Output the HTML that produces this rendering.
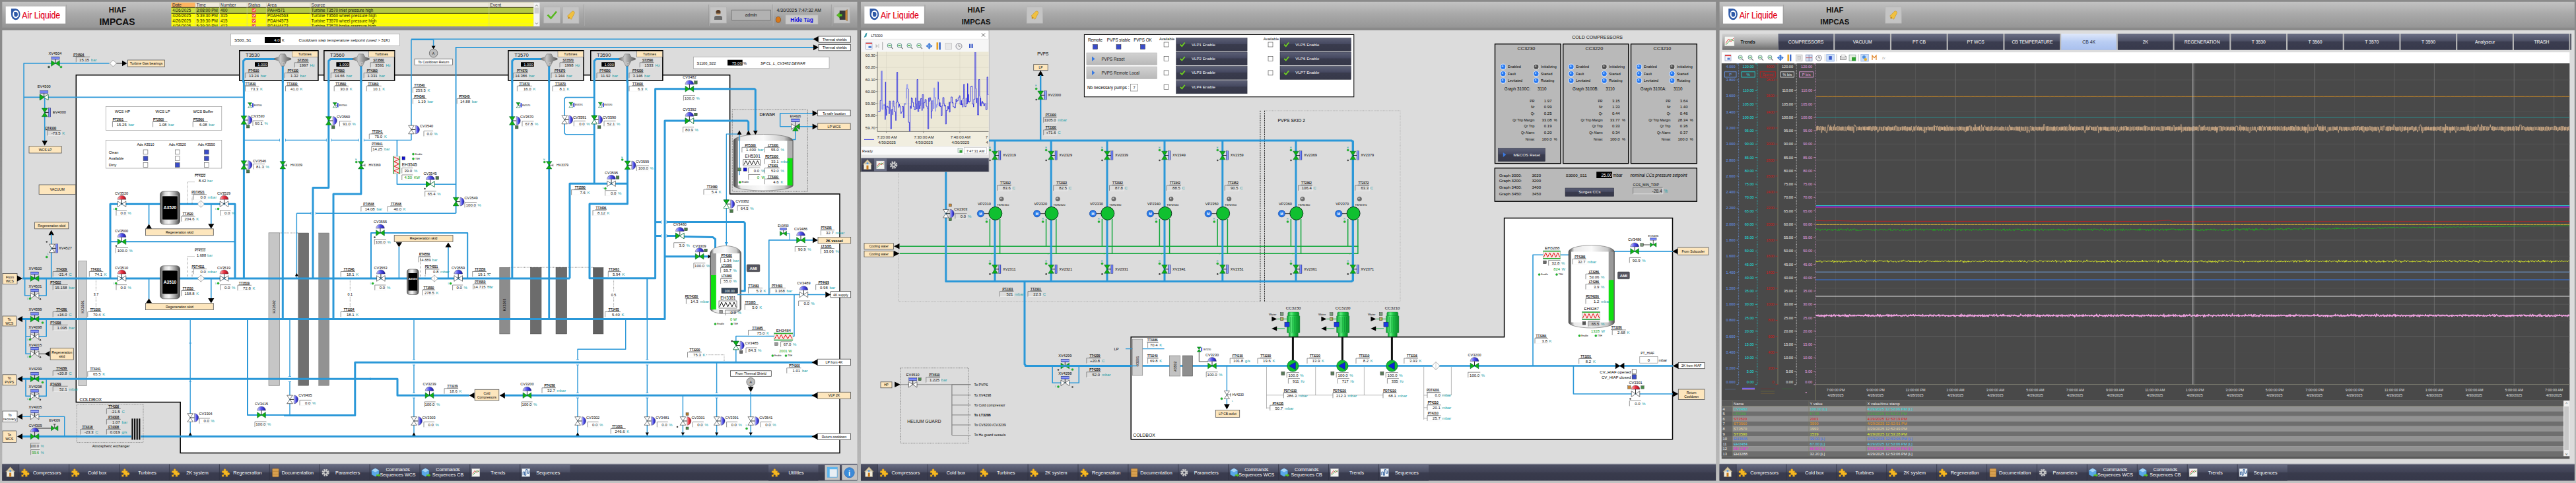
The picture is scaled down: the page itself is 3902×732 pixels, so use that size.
<!DOCTYPE html>
<html><head><meta charset="utf-8"><title>HIAF IMPCAS</title>
<style>html,body{margin:0;padding:0;background:#868686;}svg{display:block;}text{font-family:"Liberation Sans",sans-serif;}</style></head>
<body>
<svg width="3902" height="732" viewBox="0 0 3902 732">
<defs><linearGradient id="hdr" x1="0" y1="0" x2="0" y2="1"><stop offset="0" stop-color="#c3c3c3"/><stop offset="0.45" stop-color="#a9a9a9"/><stop offset="0.92" stop-color="#979797"/><stop offset="1" stop-color="#8c8c8c"/></linearGradient><linearGradient id="gbtn" x1="0" y1="0" x2="0" y2="1"><stop offset="0" stop-color="#d2d2d2"/><stop offset="1" stop-color="#b8b8b8"/></linearGradient><linearGradient id="navbg" x1="0" y1="0" x2="0" y2="1"><stop offset="0" stop-color="#4e5165"/><stop offset="0.5" stop-color="#3f4154"/><stop offset="0.52" stop-color="#393b4c"/><stop offset="1" stop-color="#36384a"/></linearGradient><linearGradient id="navbtn" x1="0" y1="0" x2="0" y2="1"><stop offset="0" stop-color="#6a6e84"/><stop offset="0.48" stop-color="#4a4d62"/><stop offset="0.52" stop-color="#3a3c4f"/><stop offset="1" stop-color="#37394b"/></linearGradient><linearGradient id="framebg" x1="0" y1="0" x2="0" y2="1"><stop offset="0" stop-color="#8a8a8a"/><stop offset="0.3" stop-color="#8a8a8a"/><stop offset="0.45" stop-color="#969696"/><stop offset="0.82" stop-color="#adadad"/><stop offset="0.96" stop-color="#b6b6b6"/><stop offset="1" stop-color="#c2c2c2"/></linearGradient><linearGradient id="metal" x1="0" y1="0" x2="1" y2="0"><stop offset="0" stop-color="#555"/><stop offset="0.25" stop-color="#d8d8d8"/><stop offset="0.45" stop-color="#f4f4f4"/><stop offset="0.75" stop-color="#a0a0a0"/><stop offset="1" stop-color="#444"/></linearGradient><linearGradient id="domeb" x1="0" y1="0" x2="1" y2="0"><stop offset="0" stop-color="#c8c8ff"/><stop offset="0.5" stop-color="#5050e8"/><stop offset="1" stop-color="#1818a0"/></linearGradient><linearGradient id="domer" x1="0" y1="0" x2="1" y2="0"><stop offset="0" stop-color="#ffb0b0"/><stop offset="0.5" stop-color="#e83040"/><stop offset="1" stop-color="#a01020"/></linearGradient><linearGradient id="act" x1="0" y1="0" x2="0" y2="1"><stop offset="0" stop-color="#2038d8"/><stop offset="0.5" stop-color="#a8b4ff"/><stop offset="1" stop-color="#2038d8"/></linearGradient><linearGradient id="actv" x1="0" y1="0" x2="1" y2="0"><stop offset="0" stop-color="#2038d8"/><stop offset="0.5" stop-color="#a8b4ff"/><stop offset="1" stop-color="#2038d8"/></linearGradient><linearGradient id="metal2" x1="0" y1="0" x2="1" y2="0"><stop offset="0" stop-color="#444"/><stop offset="0.06" stop-color="#888"/><stop offset="0.12" stop-color="#e8e8e8"/><stop offset="0.5" stop-color="#fafafa"/><stop offset="0.85" stop-color="#c8c8c8"/><stop offset="1" stop-color="#555"/></linearGradient><linearGradient id="hx" x1="0" y1="0" x2="1" y2="0"><stop offset="0" stop-color="#6a6a6a"/><stop offset="0.5" stop-color="#7c7c7c"/><stop offset="1" stop-color="#6a6a6a"/></linearGradient><linearGradient id="turb" x1="0" y1="0" x2="1" y2="0"><stop offset="0" stop-color="#6a6a6a"/><stop offset="0.35" stop-color="#c8c8c8"/><stop offset="0.6" stop-color="#9a9a9a"/><stop offset="1" stop-color="#5a5a5a"/></linearGradient><linearGradient id="dbtn" x1="0" y1="0" x2="0" y2="1"><stop offset="0" stop-color="#5c6076"/><stop offset="0.45" stop-color="#454860"/><stop offset="0.5" stop-color="#393b4d"/><stop offset="1" stop-color="#363849"/></linearGradient><linearGradient id="mot" x1="0" y1="0" x2="1" y2="0"><stop offset="0" stop-color="#0a9a30"/><stop offset="0.3" stop-color="#60f080"/><stop offset="0.55" stop-color="#20c848"/><stop offset="1" stop-color="#0a8a2a"/></linearGradient><linearGradient id="tabtr" x1="0" y1="0" x2="0" y2="1"><stop offset="0" stop-color="#d2d2d2"/><stop offset="0.5" stop-color="#a8a8a8"/><stop offset="1" stop-color="#6c6c6c"/></linearGradient><linearGradient id="tabd" x1="0" y1="0" x2="0" y2="1"><stop offset="0" stop-color="#6c7086"/><stop offset="0.45" stop-color="#4c4f64"/><stop offset="0.5" stop-color="#3b3d50"/><stop offset="1" stop-color="#37394b"/></linearGradient><linearGradient id="tabsel" x1="0" y1="0" x2="0" y2="1"><stop offset="0" stop-color="#dfe8fb"/><stop offset="0.5" stop-color="#b9cdf3"/><stop offset="1" stop-color="#a9c0ee"/></linearGradient></defs>
<rect x="0.00" y="0.00" width="3902.00" height="732.00" fill="url(#framebg)"/>
<rect x="3.30" y="2.80" width="1295.20" height="40.80" fill="url(#hdr)"/>
<rect x="3.30" y="43.40" width="1295.20" height="2.40" fill="#868686"/>
<rect x="3.30" y="45.80" width="1295.20" height="657.20" fill="#dcdcdc"/>
<rect x="8.70" y="9.70" width="90.50" height="26.00" fill="#fff"/>
<line x1="100.30" y1="7.00" x2="100.30" y2="39.00" stroke="#9a9a9a" stroke-width="0.7" />
<path d="M16.90,13.00 h6.4 a7.3,8.6 0 0 1 7.3,8.6 a7,8.6 0 0 1 -7,8.6 a6.9,8.2 0 0 1 -6.7,-8.2 z" fill="#2f5aa8" />
<ellipse cx="23.90" cy="21.70" rx="4.7" ry="5.9" fill="#fff"/>
<path d="M21.30,18.00 h2.7 a2.9,3.8 0 0 1 2.9,3.8 a2.9,3.7 0 0 1 -2.9,3.7 a2.8,3.6 0 0 1 -2.7,-3.6 z" fill="#2f5aa8" />
<text x="33.30" y="27.60" font-size="14" fill="#e2001a" textLength="57.8" lengthAdjust="spacingAndGlyphs" stroke="#e2001a" stroke-width="0.22">Air Liquide</text>
<text x="178.00" y="19.20" font-size="11.3" fill="#111" text-anchor="middle" font-weight="bold">HIAF</text>
<text x="177.50" y="38.20" font-size="13.9" fill="#111" text-anchor="middle" font-weight="bold">IMPCAS</text>
<rect x="3.30" y="703.40" width="1295.20" height="25.10" fill="url(#navbg)"/>
<rect x="3.30" y="702.70" width="1295.20" height="1.00" fill="#9a9ca8"/>
<rect x="3.30" y="703.40" width="25.20" height="25.10" fill="url(#navbg)"/>
<polygon points="8.60,715.00 15.60,707.50 22.60,715.00" fill="#d8c8a0" stroke="#8a7a5a" stroke-width="0.5" />
<rect x="10.10" y="714.00" width="11.00" height="8.50" fill="#f0ead8" stroke="#a09880" stroke-width="0.5"/>
<rect x="14.10" y="716.50" width="3.00" height="6.00" fill="#c87818"/>
<circle cx="15.60" cy="713.40" r="1.50" fill="#5a9ae0" />
<rect x="29.00" y="703.40" width="75.40" height="25.10" fill="url(#navbtn)"/>
<line x1="28.75" y1="703.40" x2="28.75" y2="728.50" stroke="#2e3040" stroke-width="0.6" />
<path d="M32.70,713.70 h3 a1.8,1.8 0 1 1 2.6,0 h3 v3 a1.8,1.8 0 1 1 0,2.6 v3 h-3.2 a1.7,1.7 0 1 0 -2.4,0 h-3 v-3 a1.7,1.7 0 1 0 0,-2.6 z" fill="#f6b822" stroke="#c88a10" stroke-width="0.4" />
<text x="71.30" y="718.60" font-size="7.2" fill="#fff" text-anchor="middle">Compressors</text>
<rect x="104.90" y="703.40" width="75.40" height="25.10" fill="url(#navbtn)"/>
<line x1="104.65" y1="703.40" x2="104.65" y2="728.50" stroke="#2e3040" stroke-width="0.6" />
<path d="M108.60,713.70 h3 a1.8,1.8 0 1 1 2.6,0 h3 v3 a1.8,1.8 0 1 1 0,2.6 v3 h-3.2 a1.7,1.7 0 1 0 -2.4,0 h-3 v-3 a1.7,1.7 0 1 0 0,-2.6 z" fill="#f6b822" stroke="#c88a10" stroke-width="0.4" />
<text x="147.20" y="718.60" font-size="7.2" fill="#fff" text-anchor="middle">Cold box</text>
<rect x="180.80" y="703.40" width="75.40" height="25.10" fill="url(#navbtn)"/>
<line x1="180.55" y1="703.40" x2="180.55" y2="728.50" stroke="#2e3040" stroke-width="0.6" />
<path d="M184.50,713.70 h3 a1.8,1.8 0 1 1 2.6,0 h3 v3 a1.8,1.8 0 1 1 0,2.6 v3 h-3.2 a1.7,1.7 0 1 0 -2.4,0 h-3 v-3 a1.7,1.7 0 1 0 0,-2.6 z" fill="#f6b822" stroke="#c88a10" stroke-width="0.4" />
<text x="223.10" y="718.60" font-size="7.2" fill="#fff" text-anchor="middle">Turbines</text>
<rect x="256.70" y="703.40" width="75.40" height="25.10" fill="url(#navbtn)"/>
<line x1="256.45" y1="703.40" x2="256.45" y2="728.50" stroke="#2e3040" stroke-width="0.6" />
<path d="M260.40,713.70 h3 a1.8,1.8 0 1 1 2.6,0 h3 v3 a1.8,1.8 0 1 1 0,2.6 v3 h-3.2 a1.7,1.7 0 1 0 -2.4,0 h-3 v-3 a1.7,1.7 0 1 0 0,-2.6 z" fill="#f6b822" stroke="#c88a10" stroke-width="0.4" />
<text x="299.00" y="718.60" font-size="7.2" fill="#fff" text-anchor="middle">2K system</text>
<rect x="332.60" y="703.40" width="75.40" height="25.10" fill="url(#navbtn)"/>
<line x1="332.35" y1="703.40" x2="332.35" y2="728.50" stroke="#2e3040" stroke-width="0.6" />
<path d="M336.30,713.70 h3 a1.8,1.8 0 1 1 2.6,0 h3 v3 a1.8,1.8 0 1 1 0,2.6 v3 h-3.2 a1.7,1.7 0 1 0 -2.4,0 h-3 v-3 a1.7,1.7 0 1 0 0,-2.6 z" fill="#f6b822" stroke="#c88a10" stroke-width="0.4" />
<text x="374.90" y="718.60" font-size="7.2" fill="#fff" text-anchor="middle">Regeneration</text>
<rect x="408.50" y="703.40" width="75.40" height="25.10" fill="url(#navbtn)"/>
<line x1="408.25" y1="703.40" x2="408.25" y2="728.50" stroke="#2e3040" stroke-width="0.6" />
<rect x="412.70" y="710.20" width="9.50" height="12.50" fill="#d8a050" stroke="#a87028" stroke-width="0.5" rx="1"/>
<line x1="412.70" y1="714.40" x2="422.20" y2="714.40" stroke="#a87028" stroke-width="0.5" />
<line x1="412.70" y1="718.60" x2="422.20" y2="718.60" stroke="#a87028" stroke-width="0.5" />
<text x="450.80" y="718.60" font-size="7.2" fill="#fff" text-anchor="middle">Documentation</text>
<rect x="484.40" y="703.40" width="75.40" height="25.10" fill="url(#navbtn)"/>
<line x1="484.15" y1="703.40" x2="484.15" y2="728.50" stroke="#2e3040" stroke-width="0.6" />
<circle cx="493.10" cy="716.20" r="4.00" fill="none" stroke="#c8c8c8" stroke-width="3.2" stroke-dasharray="2.1 1.05"/>
<circle cx="493.10" cy="716.20" r="3.30" fill="#c8c8c8" />
<circle cx="493.10" cy="716.20" r="1.60" fill="#4a4c5e" />
<text x="526.70" y="718.60" font-size="7.2" fill="#fff" text-anchor="middle">Parameters</text>
<rect x="560.30" y="703.40" width="75.40" height="25.10" fill="url(#navbtn)"/>
<line x1="560.05" y1="703.40" x2="560.05" y2="728.50" stroke="#2e3040" stroke-width="0.6" />
<polygon points="563.00,712.70 568.50,709.70 574.00,712.70 574.00,719.20 568.50,722.20 563.00,719.20" fill="#5aa8e8" stroke="#3a80c0" stroke-width="0.4" />
<polygon points="563.00,712.70 568.50,709.70 574.00,712.70 568.50,715.40" fill="#a8d4f4" />
<polygon points="570.00,719.20 573.50,719.20 573.50,717.60 576.50,720.20 573.50,722.80 573.50,721.20 570.00,721.20" fill="#58c020" />
<text x="602.60" y="714.20" font-size="7.1" fill="#fff" text-anchor="middle">Commands</text>
<text x="602.60" y="721.80" font-size="7.1" fill="#fff" text-anchor="middle">Sequences WCS</text>
<rect x="636.20" y="703.40" width="75.40" height="25.10" fill="url(#navbtn)"/>
<line x1="635.95" y1="703.40" x2="635.95" y2="728.50" stroke="#2e3040" stroke-width="0.6" />
<polygon points="638.90,712.70 644.40,709.70 649.90,712.70 649.90,719.20 644.40,722.20 638.90,719.20" fill="#5aa8e8" stroke="#3a80c0" stroke-width="0.4" />
<polygon points="638.90,712.70 644.40,709.70 649.90,712.70 644.40,715.40" fill="#a8d4f4" />
<polygon points="645.90,719.20 649.40,719.20 649.40,717.60 652.40,720.20 649.40,722.80 649.40,721.20 645.90,721.20" fill="#58c020" />
<text x="678.50" y="714.20" font-size="7.1" fill="#fff" text-anchor="middle">Commands</text>
<text x="678.50" y="721.80" font-size="7.1" fill="#fff" text-anchor="middle">Sequences CB</text>
<rect x="712.10" y="703.40" width="75.40" height="25.10" fill="url(#navbtn)"/>
<line x1="711.85" y1="703.40" x2="711.85" y2="728.50" stroke="#2e3040" stroke-width="0.6" />
<rect x="714.80" y="710.20" width="12.00" height="12.00" fill="#f4f4f0" stroke="#b0b0b0" stroke-width="0.4"/>
<polyline points="715.8,718.2 719.3,713.2 722.3,716.2 725.8,712.7" fill="none" stroke="#e04040" stroke-width="0.9" />
<polyline points="715.8,720.2 719.3,716.7 722.3,713.2 725.8,715.2" fill="none" stroke="#40a040" stroke-width="0.9" />
<text x="754.40" y="718.60" font-size="7.2" fill="#fff" text-anchor="middle">Trends</text>
<rect x="788.00" y="703.40" width="75.40" height="25.10" fill="url(#navbtn)"/>
<line x1="787.75" y1="703.40" x2="787.75" y2="728.50" stroke="#2e3040" stroke-width="0.6" />
<rect x="790.70" y="710.20" width="12.00" height="12.00" fill="#f0f4f8" stroke="#9ab" stroke-width="0.4"/>
<polyline points="792.2,720.2 792.2,715.2 794.7,715.2 794.7,720.2 796.7,720.2 796.7,711.7 798.7,711.7 798.7,717.2 801.2,717.2 801.2,713.2" fill="none" stroke="#2a5a98" stroke-width="1.0" />
<text x="830.30" y="718.60" font-size="7.2" fill="#fff" text-anchor="middle">Sequences</text>
<rect x="1164.10" y="703.40" width="75.40" height="25.10" fill="url(#navbtn)"/>
<path d="M1169.10,713.70 h3 a1.8,1.8 0 1 1 2.6,0 h3 v3 a1.8,1.8 0 1 1 0,2.6 v3 h-3.2 a1.7,1.7 0 1 0 -2.4,0 h-3 v-3 a1.7,1.7 0 1 0 0,-2.6 z" fill="#f6b822" stroke="#c88a10" stroke-width="0.4" />
<text x="1206.10" y="718.60" font-size="7.2" fill="#fff" text-anchor="middle">Utilities</text>
<rect x="1249.50" y="705.00" width="22.50" height="22.60" fill="#c4c4c4"/>
<rect x="1253.20" y="708.20" width="15.00" height="15.00" fill="#e8eef4" stroke="#4aa0e0" stroke-width="0.8"/>
<rect x="1253.20" y="708.20" width="15.00" height="3.00" fill="#5ab4ee"/>
<rect x="1253.20" y="708.20" width="3.50" height="15.00" fill="#5ab4ee"/>
<rect x="1275.30" y="705.00" width="22.80" height="22.60" fill="#c4c4c4"/>
<circle cx="1286.60" cy="716.30" r="7.60" fill="#3a8ad8" stroke="#2a6ab8" stroke-width="0.8" />
<text x="1286.60" y="720.50" font-size="11" fill="#fff" text-anchor="middle" font-weight="bold" font-family="Liberation Serif, serif">i</text>
<rect x="259.60" y="3.90" width="548.60" height="36.00" fill="#ffff00"/>
<rect x="259.60" y="3.90" width="548.60" height="7.20" fill="#efe9dc"/>
<rect x="259.60" y="3.90" width="36.30" height="7.20" fill="#fdb462"/>
<rect x="259.60" y="11.40" width="548.60" height="8.80" fill="#b5c845"/>
<rect x="259.60" y="11.40" width="36.30" height="8.80" fill="#cbdc3c"/>
<line x1="259.60" y1="11.30" x2="808.20" y2="11.30" stroke="#111" stroke-width="0.8" />
<line x1="259.60" y1="20.30" x2="808.20" y2="20.30" stroke="#111" stroke-width="0.8" />
<line x1="259.60" y1="28.20" x2="808.20" y2="28.20" stroke="#d8d890" stroke-width="0.5" />
<line x1="259.60" y1="36.10" x2="808.20" y2="36.10" stroke="#d8d890" stroke-width="0.5" />
<text x="261.10" y="9.90" font-size="6.6" fill="#223">Date</text>
<text x="297.40" y="9.90" font-size="6.6" fill="#223">Time</text>
<line x1="295.90" y1="3.90" x2="295.90" y2="39.90" stroke="#c8c8b0" stroke-width="0.6" />
<text x="334.00" y="9.90" font-size="6.6" fill="#223">Number</text>
<line x1="332.50" y1="3.90" x2="332.50" y2="39.90" stroke="#c8c8b0" stroke-width="0.6" />
<text x="375.70" y="9.90" font-size="6.6" fill="#223">Status</text>
<line x1="374.20" y1="3.90" x2="374.20" y2="39.90" stroke="#c8c8b0" stroke-width="0.6" />
<text x="404.90" y="9.90" font-size="6.6" fill="#223">Area</text>
<line x1="403.40" y1="3.90" x2="403.40" y2="39.90" stroke="#c8c8b0" stroke-width="0.6" />
<text x="471.50" y="9.90" font-size="6.6" fill="#223">Source</text>
<line x1="470.00" y1="3.90" x2="470.00" y2="39.90" stroke="#c8c8b0" stroke-width="0.6" />
<text x="742.30" y="9.90" font-size="6.6" fill="#223">Event</text>
<line x1="740.80" y1="3.90" x2="740.80" y2="39.90" stroke="#c8c8b0" stroke-width="0.6" />
<clipPath id="alclip"><rect x="259" y="3.9" width="550" height="36"/></clipPath><g clip-path="url(#alclip)">
<text x="261.30" y="18.30" font-size="6.3" fill="#111">4/26/2025</text>
<text x="297.50" y="18.30" font-size="6.3" fill="#111">3:08:00 PM</text>
<text x="334.00" y="18.30" font-size="6.3" fill="#111">400</text>
<rect x="381.60" y="12.50" width="6.00" height="6.00" fill="#f05a48"/>
<polyline points="382.8,15.3 384.2,16.8 386.8,13.5" fill="none" stroke="#fff" stroke-width="1.0" />
<text x="405.00" y="18.30" font-size="6.3" fill="#111">PAH4571</text>
<text x="471.50" y="18.30" font-size="6.3" fill="#111">Turbine T3570 inlet pressure high</text>
<text x="261.30" y="26.30" font-size="6.3" fill="#111">4/26/2025</text>
<text x="297.50" y="26.30" font-size="6.3" fill="#111">5:39:30 PM</text>
<text x="334.00" y="26.30" font-size="6.3" fill="#111">315</text>
<rect x="381.60" y="20.50" width="6.00" height="6.00" fill="#f05a48"/>
<polyline points="382.8,23.3 384.2,24.8 386.8,21.5" fill="none" stroke="#fff" stroke-width="1.0" />
<text x="405.00" y="26.30" font-size="6.3" fill="#111">PDAH4563</text>
<text x="471.50" y="26.30" font-size="6.3" fill="#111">Turbine T3560 wheel pressure high</text>
<text x="261.30" y="34.30" font-size="6.3" fill="#111">4/26/2025</text>
<text x="297.50" y="34.30" font-size="6.3" fill="#111">5:39:30 PM</text>
<text x="334.00" y="34.30" font-size="6.3" fill="#111">415</text>
<rect x="381.60" y="28.50" width="6.00" height="6.00" fill="#f05a48"/>
<polyline points="382.8,31.3 384.2,32.8 386.8,29.5" fill="none" stroke="#fff" stroke-width="1.0" />
<text x="405.00" y="34.30" font-size="6.3" fill="#111">PDAH4573</text>
<text x="471.50" y="34.30" font-size="6.3" fill="#111">Turbine T3570 wheel pressure high</text>
<text x="261.30" y="42.30" font-size="6.3" fill="#111">4/26/2025</text>
<text x="297.50" y="42.30" font-size="6.3" fill="#111">5:39:30 PM</text>
<text x="334.00" y="42.30" font-size="6.3" fill="#111">413</text>
<rect x="381.60" y="36.50" width="6.00" height="6.00" fill="#f05a48"/>
<polyline points="382.8,39.3 384.2,40.8 386.8,37.5" fill="none" stroke="#fff" stroke-width="1.0" />
<text x="405.00" y="42.30" font-size="6.3" fill="#111">PDAH4473</text>
<text x="471.50" y="42.30" font-size="6.3" fill="#111">Turbine T3570 brake pressure high</text>
</g>
<rect x="808.20" y="3.90" width="9.30" height="36.00" fill="#f4f4f4"/>
<rect x="809.50" y="11.50" width="6.80" height="9.00" fill="#d0d0d0"/>
<polyline points="811.0,9.5 812.9,7.5 814.8,9.5" fill="none" stroke="#444" stroke-width="0.7" />
<polyline points="811.0,34.5 812.9,36.5 814.8,34.5" fill="none" stroke="#444" stroke-width="0.7" />
<rect x="823.70" y="10.70" width="24.80" height="24.30" fill="#c4c4c4" stroke="#b2b2b2" stroke-width="0.7"/>
<polyline points="829.5,22.5 834.5,27.5 843.0,17.5" fill="none" stroke="#58b820" stroke-width="2.6" />
<rect x="852.60" y="10.50" width="24.40" height="24.80" fill="#c4c4c4" stroke="#b2b2b2" stroke-width="0.7"/>
<path d="M859.30,24.40 l7,-7 a2.5,2.5 0 0 1 3.5,3.5 l-4.5,8.5 z" fill="#f0c040" stroke="#b88a20" stroke-width="0.5" />
<circle cx="861.50" cy="27.10" r="1.50" fill="#c89020" />
<line x1="884.40" y1="6.80" x2="884.40" y2="39.00" stroke="#8e8e8e" stroke-width="0.7" />
<line x1="885.10" y1="6.80" x2="885.10" y2="39.00" stroke="#c0c0c0" stroke-width="0.5" />
<line x1="1073.70" y1="6.80" x2="1073.70" y2="39.00" stroke="#8e8e8e" stroke-width="0.7" />
<line x1="1074.40" y1="6.80" x2="1074.40" y2="39.00" stroke="#c0c0c0" stroke-width="0.5" />
<line x1="1170.30" y1="6.80" x2="1170.30" y2="39.00" stroke="#8e8e8e" stroke-width="0.7" />
<line x1="1171.00" y1="6.80" x2="1171.00" y2="39.00" stroke="#c0c0c0" stroke-width="0.5" />
<line x1="1259.40" y1="6.80" x2="1259.40" y2="39.00" stroke="#8e8e8e" stroke-width="0.7" />
<line x1="1260.10" y1="6.80" x2="1260.10" y2="39.00" stroke="#c0c0c0" stroke-width="0.5" />
<rect x="1075.60" y="10.70" width="24.80" height="24.30" fill="#c4c4c4" stroke="#b2b2b2" stroke-width="0.7"/>
<circle cx="1088.00" cy="19.50" r="3.40" fill="#d8a878" />
<path d="M1084.4,18.6 a3.6,3.6 0 0 1 7.2,0 z" fill="#5a3a20" />
<rect x="1084.60" y="18.80" width="6.80" height="1.60" fill="#222"/>
<path d="M1082,30 v-3 a3,3 0 0 1 3,-3 h6 a3,3 0 0 1 3,3 v3 z" fill="#6a6a6a" />
<rect x="1108.20" y="15.20" width="59.20" height="15.30" fill="#b2b2b2" stroke="#707070" stroke-width="0.8"/>
<text x="1137.80" y="25.00" font-size="6.6" fill="#111" text-anchor="middle">admin</text>
<text x="1176.60" y="18.00" font-size="6.9" fill="#111">4/30/2025 7:47:32 AM</text>
<ellipse cx="1178.9" cy="29.8" rx="3.6" ry="4.4" fill="#d87818" stroke="#7a3a08" stroke-width="0.6"/>
<rect x="1174.20" y="25.00" width="9.60" height="9.60" fill="none" stroke="#888" stroke-width="0.4" stroke-dasharray="1 1"/>
<rect x="1190.00" y="22.90" width="49.00" height="13.60" fill="#c9c9c9" stroke="#b4b4b4" stroke-width="0.6"/>
<text x="1214.50" y="32.60" font-size="8.4" fill="#1010e0" text-anchor="middle" font-weight="bold">Hide Tag</text>
<rect x="1263.00" y="10.70" width="24.30" height="24.30" fill="#c4c4c4" stroke="#b2b2b2" stroke-width="0.7"/>
<rect x="1272.00" y="16.20" width="8.50" height="13.50" fill="#3a3a3a" stroke="#222" stroke-width="0.4"/>
<polygon points="1280.50,16.20 1283.50,14.50 1283.50,31.70 1280.50,29.70" fill="#c88838" stroke="#7a4a18" stroke-width="0.4" />
<polygon points="1267.30,23.00 1271.80,19.00 1271.80,21.30 1275.50,21.30 1275.50,24.70 1271.80,24.70 1271.80,27.00" fill="#58c020" stroke="#2a7a08" stroke-width="0.4" />
<polygon points="115.30,113.80 1105.60,113.80 1105.60,294.00 1272.00,294.00 1272.00,686.60 273.20,686.60 273.20,609.40 115.30,609.40" fill="#fff" stroke="#000" stroke-width="1.5" />
<text x="120.50" y="607.50" font-size="6.9" fill="#000">COLDBOX</text>
<rect x="118.80" y="395.40" width="12.50" height="189.00" fill="#cfcfcf" stroke="#8a8a8a" stroke-width="0.7"/>
<text x="0.00" y="0.00" font-size="5.4" fill="#000" text-anchor="middle" transform="translate(127,465) rotate(-90)">HX3501</text>
<rect x="407.00" y="352.80" width="16.60" height="231.50" fill="#c6c6c6" stroke="#8a8a8a" stroke-width="0.7"/>
<text x="0.00" y="0.00" font-size="5.4" fill="#000" text-anchor="middle" transform="translate(417.3,465) rotate(-90)">HX3502</text>
<line x1="423.60" y1="353.00" x2="451.80" y2="353.00" stroke="#333" stroke-width="0.6" stroke-dasharray="1 1.2"/>
<rect x="451.80" y="353.00" width="16.00" height="231.30" fill="#707070" stroke="#555" stroke-width="0.4"/>
<rect x="482.70" y="353.00" width="16.00" height="231.30" fill="#929292" stroke="#6a6a6a" stroke-width="0.4"/>
<rect x="756.80" y="405.40" width="15.60" height="100.60" fill="#8c8c8c" stroke="#555" stroke-width="0.5"/>
<text x="0.00" y="0.00" font-size="5.2" fill="#000" text-anchor="middle" transform="translate(766.4,462) rotate(-90)">HX3503</text>
<rect x="803.40" y="405.40" width="16.60" height="100.60" fill="#6c6c6c" stroke="#444" stroke-width="0.5"/>
<rect x="842.00" y="405.40" width="16.60" height="100.60" fill="#6c6c6c" stroke="#444" stroke-width="0.5"/>
<line x1="772.00" y1="405.20" x2="898.50" y2="405.20" stroke="#333" stroke-width="0.6" stroke-dasharray="1 1.2"/>
<rect x="898.50" y="405.50" width="15.40" height="100.50" fill="#606060" stroke="#444" stroke-width="0.5"/>
<polyline points="34.0,422.0 863.0,422.0" fill="none" stroke="#2b98d8" stroke-width="3" stroke-linejoin="round"/>
<polyline points="34.0,483.6 862.0,483.6" fill="none" stroke="#2b98d8" stroke-width="3" stroke-linejoin="round"/>
<polyline points="34.0,574.3 562.0,574.3" fill="none" stroke="#2b98d8" stroke-width="3" stroke-linejoin="round"/>
<polyline points="34.0,661.5 1231.0,661.5" fill="none" stroke="#2b98d8" stroke-width="3" stroke-linejoin="round"/>
<rect x="349.40" y="51.60" width="256.00" height="17.60" fill="#fff" stroke="#999" stroke-width="0.6"/>
<text x="355.00" y="63.00" font-size="6.2" fill="#000">S500_S1</text>
<rect x="401.00" y="56.00" width="24.00" height="9.00" fill="#000"/>
<text x="423.50" y="63.00" font-size="6" fill="#fff" text-anchor="end">4.0</text>
<text x="427.00" y="63.00" font-size="5.6" fill="#000">K</text>
<text x="452.50" y="63.00" font-size="6.25" fill="#000" font-style="italic">Cooldown step temperature setpoint (used &gt; 51K)</text>
<polyline points="165.4,96.0 36.1,96.0 36.1,422.0" fill="none" stroke="#2b98d8" stroke-width="1.6" stroke-linejoin="round"/>
<polyline points="36.1,147.4 369.4,147.4" fill="none" stroke="#2b98d8" stroke-width="1.8" stroke-linejoin="round"/>
<polyline points="67.7,147.4 67.7,213.0" fill="none" stroke="#2b98d8" stroke-width="1.6" stroke-linejoin="round"/>
<polygon points="67.70,220.80 63.50,213.30 71.90,213.30" fill="#000" />
<line x1="84.00" y1="96.00" x2="84.00" y2="90.00" stroke="#000" stroke-width="0.8" />
<rect x="77.80" y="86.00" width="12.40" height="4.00" fill="url(#act)" stroke="#223" stroke-width="0.3"/>
<polygon points="77.70,91.70 84.00,96.00 77.70,100.30" fill="#10b010" stroke="#063" stroke-width="0.6" />
<polygon points="90.30,91.70 84.00,96.00 90.30,100.30" fill="#10b010" stroke="#063" stroke-width="0.6" />
<text x="83.50" y="83.00" font-size="5.6" fill="#000" text-anchor="middle">XV4504</text>
<circle cx="74.00" cy="101.50" r="1.60" fill="#444" stroke="#063" stroke-width="0.3" />
<circle cx="92.50" cy="101.50" r="1.60" fill="#20c020" stroke="#063" stroke-width="0.3" />
<text x="119.30" y="84.50" font-size="4.6" fill="#000" text-anchor="middle" stroke="#000" stroke-width="0.12">PT4504</text>
<line x1="110.70" y1="85.50" x2="127.90" y2="85.50" stroke="#000" stroke-width="0.5" />
<polyline points="115.3,94.2 115.3,86.2 136.3,86.2" fill="none" stroke="#666" stroke-width="0.7" />
<polyline points="115.6,94.2 136.3,94.2 136.3,86.5" fill="none" stroke="#f4f4f4" stroke-width="0.6" />
<text x="135.10" y="92.50" font-size="6.0" fill="#111" text-anchor="end">15.15</text>
<text x="137.80" y="92.50" font-size="6.0" fill="#18a0a8">bar</text>
<polygon points="166.40,96.00 171.40,91.00 176.40,96.00 171.40,101.00" fill="#fff" stroke="#888" stroke-width="0.7" />
<line x1="176.40" y1="96.00" x2="185.00" y2="96.00" stroke="#000" stroke-width="0.8" />
<polygon points="192.50,96.00 185.00,91.80 185.00,100.20" fill="#000" />
<rect x="193.50" y="91.00" width="56.00" height="10.10" fill="#fde6bd" stroke="#555" stroke-width="0.8"/>
<text x="221.50" y="97.95" font-size="5.2" fill="#000" text-anchor="middle">Turbine Gas bearings</text>
<line x1="66.70" y1="147.40" x2="66.70" y2="141.40" stroke="#000" stroke-width="0.8" />
<rect x="60.50" y="137.40" width="12.40" height="4.00" fill="url(#act)" stroke="#223" stroke-width="0.3"/>
<polygon points="60.40,143.10 66.70,147.40 60.40,151.70" fill="#10b010" stroke="#063" stroke-width="0.6" />
<polygon points="73.00,143.10 66.70,147.40 73.00,151.70" fill="#10b010" stroke="#063" stroke-width="0.6" />
<text x="66.70" y="133.00" font-size="5.6" fill="#000" text-anchor="middle">EV4500</text>
<polygon points="60.40,143.10 66.70,147.40 60.40,151.70" fill="#10b010" stroke="#063" stroke-width="0.6" />
<polygon points="73.00,143.10 66.70,147.40 73.00,151.70" fill="#fff" stroke="#063" stroke-width="0.6" />
<line x1="67.70" y1="170.40" x2="73.70" y2="170.40" stroke="#000" stroke-width="0.8" />
<rect x="73.50" y="163.70" width="3.20" height="13.40" fill="url(#actv)" stroke="#223" stroke-width="0.3"/>
<polygon points="63.40,164.10 67.70,170.40 72.00,164.10" fill="#10b010" stroke="#063" stroke-width="0.6" />
<polygon points="63.40,176.70 67.70,170.40 72.00,176.70" fill="#10b010" stroke="#063" stroke-width="0.6" />
<text x="80.00" y="172.30" font-size="5.6" fill="#000">EV4300</text>
<text x="76.70" y="195.80" font-size="4.6" fill="#000" text-anchor="middle" stroke="#000" stroke-width="0.12">QT4300</text>
<line x1="68.10" y1="196.80" x2="85.30" y2="196.80" stroke="#000" stroke-width="0.5" />
<polyline points="71.7,205.5 71.7,197.5 92.7,197.5" fill="none" stroke="#666" stroke-width="0.7" />
<polyline points="72.0,205.5 92.7,205.5 92.7,197.8" fill="none" stroke="#f4f4f4" stroke-width="0.6" />
<text x="91.50" y="203.80" font-size="6.0" fill="#111" text-anchor="end">-73.5</text>
<text x="94.20" y="203.80" font-size="6.0" fill="#18a0a8">K</text>
<rect x="44.00" y="221.60" width="49.20" height="10.40" fill="#fde6bd" stroke="#555" stroke-width="0.8"/>
<text x="68.60" y="228.70" font-size="5.2" fill="#000" text-anchor="middle">WCS LP</text>
<rect x="160.40" y="161.40" width="175.40" height="36.10" fill="#fff" stroke="#999" stroke-width="0.7"/>
<text x="185.50" y="171.30" font-size="5.8" fill="#000" text-anchor="middle">WCS HP</text>
<text x="246.60" y="171.30" font-size="5.8" fill="#000" text-anchor="middle">WCS LP</text>
<text x="307.80" y="171.30" font-size="5.8" fill="#000" text-anchor="middle">WCS Buffer</text>
<text x="178.90" y="182.80" font-size="4.6" fill="#000" text-anchor="middle" stroke="#000" stroke-width="0.12">PT2901</text>
<line x1="170.30" y1="183.80" x2="187.50" y2="183.80" stroke="#000" stroke-width="0.5" />
<polyline points="170.4,192.5 170.4,184.5 193.0,184.5" fill="none" stroke="#666" stroke-width="0.7" />
<polyline points="170.7,192.5 193.0,192.5 193.0,184.8" fill="none" stroke="#f4f4f4" stroke-width="0.6" />
<text x="191.80" y="190.80" font-size="6.0" fill="#111" text-anchor="end">15.25</text>
<text x="194.50" y="190.80" font-size="6.0" fill="#18a0a8">bar</text>
<text x="240.10" y="182.80" font-size="4.6" fill="#000" text-anchor="middle" stroke="#000" stroke-width="0.12">PT2900</text>
<line x1="231.50" y1="183.80" x2="248.70" y2="183.80" stroke="#000" stroke-width="0.5" />
<polyline points="231.6,192.5 231.6,184.5 253.6,184.5" fill="none" stroke="#666" stroke-width="0.7" />
<polyline points="231.9,192.5 253.6,192.5 253.6,184.8" fill="none" stroke="#f4f4f4" stroke-width="0.6" />
<text x="252.40" y="190.80" font-size="6.0" fill="#111" text-anchor="end">1.08</text>
<text x="255.10" y="190.80" font-size="6.0" fill="#18a0a8">bar</text>
<text x="300.70" y="182.80" font-size="4.6" fill="#000" text-anchor="middle" stroke="#000" stroke-width="0.12">PT2966</text>
<line x1="292.10" y1="183.80" x2="309.30" y2="183.80" stroke="#000" stroke-width="0.5" />
<polyline points="292.2,192.5 292.2,184.5 314.8,184.5" fill="none" stroke="#666" stroke-width="0.7" />
<polyline points="292.5,192.5 314.8,192.5 314.8,184.8" fill="none" stroke="#f4f4f4" stroke-width="0.6" />
<text x="313.60" y="190.80" font-size="6.0" fill="#111" text-anchor="end">6.08</text>
<text x="316.30" y="190.80" font-size="6.0" fill="#18a0a8">bar</text>
<rect x="160.40" y="212.50" width="175.40" height="42.50" fill="#fff" stroke="#999" stroke-width="0.7"/>
<text x="220.50" y="221.40" font-size="5.4" fill="#000" text-anchor="middle">Ads A3510</text>
<text x="268.70" y="221.40" font-size="5.4" fill="#000" text-anchor="middle">Ads A3520</text>
<text x="312.80" y="221.40" font-size="5.4" fill="#000" text-anchor="middle">Ads A3550</text>
<text x="164.80" y="232.50" font-size="5.6" fill="#000">Clean</text>
<text x="164.80" y="242.30" font-size="5.6" fill="#000">Available</text>
<text x="164.80" y="252.10" font-size="5.6" fill="#000">Dirty</text>
<rect x="217.10" y="227.00" width="6.80" height="6.80" fill="#fff" stroke="#555" stroke-width="0.6"/>
<rect x="265.30" y="227.00" width="6.80" height="6.80" fill="#fff" stroke="#555" stroke-width="0.6"/>
<rect x="309.40" y="227.00" width="6.80" height="6.80" fill="#3a4cc8" stroke="#555" stroke-width="0.6"/>
<rect x="217.10" y="236.80" width="6.80" height="6.80" fill="#3a4cc8" stroke="#555" stroke-width="0.6"/>
<rect x="265.30" y="236.80" width="6.80" height="6.80" fill="#fff" stroke="#555" stroke-width="0.6"/>
<rect x="309.40" y="236.80" width="6.80" height="6.80" fill="#3a4cc8" stroke="#555" stroke-width="0.6"/>
<rect x="217.10" y="246.60" width="6.80" height="6.80" fill="#fff" stroke="#555" stroke-width="0.6"/>
<rect x="265.30" y="246.60" width="6.80" height="6.80" fill="#3a4cc8" stroke="#555" stroke-width="0.6"/>
<rect x="309.40" y="246.60" width="6.80" height="6.80" fill="#fff" stroke="#555" stroke-width="0.6"/>
<rect x="59.10" y="280.00" width="55.50" height="14.50" fill="#fde6bd" stroke="#555" stroke-width="0.8"/>
<text x="86.85" y="289.15" font-size="5.2" fill="#000" text-anchor="middle">VACUUM</text>
<rect x="52.60" y="336.80" width="51.20" height="10.00" fill="#fde6bd" stroke="#555" stroke-width="0.8"/>
<text x="78.20" y="343.70" font-size="5.2" fill="#000" text-anchor="middle">Regeneration skid</text>
<polygon points="77.70,348.80 73.50,356.30 81.90,356.30" fill="#000" />
<polyline points="77.7,355.0 77.7,422.0" fill="none" stroke="#2b98d8" stroke-width="1.6" stroke-linejoin="round"/>
<line x1="78.70" y1="376.40" x2="84.70" y2="376.40" stroke="#000" stroke-width="0.8" />
<rect x="84.50" y="369.70" width="3.20" height="13.40" fill="url(#actv)" stroke="#223" stroke-width="0.3"/>
<polygon points="74.40,370.10 78.70,376.40 83.00,370.10" fill="#fff" stroke="#222" stroke-width="0.6" />
<polygon points="74.40,382.70 78.70,376.40 83.00,382.70" fill="#fff" stroke="#222" stroke-width="0.6" />
<text x="89.00" y="378.30" font-size="5.6" fill="#000">XV4527</text>
<text x="71.50" y="386.00" font-size="4" fill="#18a0a8">L</text>
<circle cx="70.80" cy="389.50" r="1.60" fill="#20c020" stroke="#063" stroke-width="0.3" />
<circle cx="70.80" cy="366.50" r="1.20" fill="#444" />
<rect x="4.00" y="414.50" width="22.00" height="16.00" fill="#fde6bd" stroke="#555" stroke-width="0.8"/>
<text x="15.00" y="421.90" font-size="5.2" fill="#000" text-anchor="middle">From</text>
<text x="15.00" y="427.90" font-size="5.2" fill="#000" text-anchor="middle">WCS</text>
<polygon points="34.00,422.00 26.00,417.40 26.00,426.60" fill="#000" />
<polyline points="37.6,422.0 37.6,448.0 70.2,448.0 70.2,422.0" fill="none" stroke="#2b98d8" stroke-width="1.6" stroke-linejoin="round"/>
<line x1="52.60" y1="422.00" x2="52.60" y2="416.00" stroke="#000" stroke-width="0.8" />
<rect x="46.40" y="412.00" width="12.40" height="4.00" fill="url(#act)" stroke="#223" stroke-width="0.3"/>
<polygon points="46.30,417.70 52.60,422.00 46.30,426.30" fill="#10b010" stroke="#063" stroke-width="0.6" />
<polygon points="58.90,417.70 52.60,422.00 58.90,426.30" fill="#10b010" stroke="#063" stroke-width="0.6" />
<text x="53.50" y="409.30" font-size="5.6" fill="#000" text-anchor="middle">XV4500</text>
<line x1="52.60" y1="448.00" x2="52.60" y2="442.00" stroke="#000" stroke-width="0.8" />
<rect x="46.40" y="438.00" width="12.40" height="4.00" fill="url(#act)" stroke="#223" stroke-width="0.3"/>
<polygon points="46.30,443.70 52.60,448.00 46.30,452.30" fill="#fff" stroke="#222" stroke-width="0.6" />
<polygon points="58.90,443.70 52.60,448.00 58.90,452.30" fill="#fff" stroke="#222" stroke-width="0.6" />
<text x="53.50" y="436.00" font-size="5.6" fill="#000" text-anchor="middle">XV4501</text>
<text x="41.00" y="453.50" font-size="4" fill="#18a0a8">L</text>
<circle cx="45.50" cy="452.50" r="1.60" fill="#20c020" stroke="#063" stroke-width="0.3" />
<circle cx="61.00" cy="453.30" r="1.20" fill="#444" />
<text x="93.20" y="409.80" font-size="4.6" fill="#000" text-anchor="middle" stroke="#000" stroke-width="0.12">TT4309</text>
<line x1="84.60" y1="410.80" x2="101.80" y2="410.80" stroke="#000" stroke-width="0.5" />
<polyline points="80.2,419.5 80.2,411.5 102.8,411.5" fill="none" stroke="#666" stroke-width="0.7" />
<polyline points="80.5,419.5 102.8,419.5 102.8,411.8" fill="none" stroke="#f4f4f4" stroke-width="0.6" />
<text x="101.60" y="417.80" font-size="6.0" fill="#111" text-anchor="end">-21.4</text>
<text x="104.30" y="417.80" font-size="6.0" fill="#18a0a8">C</text>
<text x="84.20" y="429.80" font-size="4.6" fill="#000" text-anchor="middle" stroke="#000" stroke-width="0.12">PT4502</text>
<line x1="75.60" y1="430.80" x2="92.80" y2="430.80" stroke="#000" stroke-width="0.5" />
<polyline points="80.2,439.5 80.2,431.5 102.8,431.5" fill="none" stroke="#666" stroke-width="0.7" />
<polyline points="80.5,439.5 102.8,439.5 102.8,431.8" fill="none" stroke="#f4f4f4" stroke-width="0.6" />
<text x="101.60" y="437.80" font-size="6.0" fill="#111" text-anchor="end">15.158</text>
<text x="104.30" y="437.80" font-size="6.0" fill="#18a0a8">bar</text>
<rect x="4.00" y="479.00" width="20.50" height="15.00" fill="#fde6bd" stroke="#555" stroke-width="0.8"/>
<text x="14.25" y="485.90" font-size="5.2" fill="#000" text-anchor="middle">To</text>
<text x="14.25" y="491.90" font-size="5.2" fill="#000" text-anchor="middle">WCS</text>
<polygon points="26.00,483.60 34.00,479.00 34.00,488.20" fill="#000" />
<polyline points="39.0,483.6 39.0,536.2 47.0,536.2" fill="none" stroke="#2b98d8" stroke-width="1.6" stroke-linejoin="round"/>
<polyline points="39.0,510.0 70.2,510.0 70.2,483.6" fill="none" stroke="#2b98d8" stroke-width="1.6" stroke-linejoin="round"/>
<line x1="52.60" y1="483.60" x2="52.60" y2="477.60" stroke="#000" stroke-width="0.8" />
<rect x="46.40" y="473.60" width="12.40" height="4.00" fill="url(#act)" stroke="#223" stroke-width="0.3"/>
<polygon points="46.30,479.30 52.60,483.60 46.30,487.90" fill="#10b010" stroke="#063" stroke-width="0.6" />
<polygon points="58.90,479.30 52.60,483.60 58.90,487.90" fill="#10b010" stroke="#063" stroke-width="0.6" />
<text x="53.50" y="471.00" font-size="5.6" fill="#000" text-anchor="middle">XV4399</text>
<line x1="52.60" y1="510.00" x2="52.60" y2="504.00" stroke="#000" stroke-width="0.8" />
<rect x="46.40" y="500.00" width="12.40" height="4.00" fill="url(#act)" stroke="#223" stroke-width="0.3"/>
<polygon points="46.30,505.70 52.60,510.00 46.30,514.30" fill="#fff" stroke="#222" stroke-width="0.6" />
<polygon points="58.90,505.70 52.60,510.00 58.90,514.30" fill="#fff" stroke="#222" stroke-width="0.6" />
<text x="53.50" y="498.00" font-size="5.6" fill="#000" text-anchor="middle">XV4398</text>
<line x1="52.60" y1="536.20" x2="52.60" y2="530.20" stroke="#000" stroke-width="0.8" />
<rect x="46.40" y="526.20" width="12.40" height="4.00" fill="url(#act)" stroke="#223" stroke-width="0.3"/>
<polygon points="46.30,531.90 52.60,536.20 46.30,540.50" fill="#fff" stroke="#222" stroke-width="0.6" />
<polygon points="58.90,531.90 52.60,536.20 58.90,540.50" fill="#fff" stroke="#222" stroke-width="0.6" />
<text x="53.50" y="524.50" font-size="5.6" fill="#000" text-anchor="middle">XV4315</text>
<line x1="59.00" y1="536.20" x2="68.00" y2="536.20" stroke="#000" stroke-width="0.7" />
<polygon points="67.70,536.20 75.20,532.00 75.20,540.40" fill="#000" />
<rect x="76.20" y="527.70" width="35.10" height="17.50" fill="#fde6bd" stroke="#555" stroke-width="0.8"/>
<text x="93.75" y="535.85" font-size="5.2" fill="#000" text-anchor="middle">Regeneration</text>
<text x="93.75" y="541.85" font-size="5.2" fill="#000" text-anchor="middle">skid</text>
<text x="41.00" y="515.50" font-size="4" fill="#18a0a8">L</text>
<circle cx="45.50" cy="514.50" r="1.60" fill="#20c020" stroke="#063" stroke-width="0.3" />
<circle cx="61.00" cy="515.30" r="1.20" fill="#444" />
<text x="41.00" y="541.50" font-size="4" fill="#18a0a8">L</text>
<circle cx="45.50" cy="540.50" r="1.60" fill="#20c020" stroke="#063" stroke-width="0.3" />
<circle cx="61.00" cy="541.30" r="1.20" fill="#444" />
<circle cx="64.50" cy="489.00" r="1.60" fill="#20c020" stroke="#063" stroke-width="0.3" />
<text x="93.20" y="470.80" font-size="4.6" fill="#000" text-anchor="middle" stroke="#000" stroke-width="0.12">TT4396</text>
<line x1="84.60" y1="471.80" x2="101.80" y2="471.80" stroke="#000" stroke-width="0.5" />
<polyline points="80.2,480.5 80.2,472.5 102.8,472.5" fill="none" stroke="#666" stroke-width="0.7" />
<polyline points="80.5,480.5 102.8,480.5 102.8,472.8" fill="none" stroke="#f4f4f4" stroke-width="0.6" />
<text x="101.60" y="478.80" font-size="6.0" fill="#111" text-anchor="end">+16.0</text>
<text x="104.30" y="478.80" font-size="6.0" fill="#18a0a8">C</text>
<text x="84.20" y="490.90" font-size="4.6" fill="#000" text-anchor="middle" stroke="#000" stroke-width="0.12">PT4398</text>
<line x1="75.60" y1="491.90" x2="92.80" y2="491.90" stroke="#000" stroke-width="0.5" />
<polyline points="80.2,500.6 80.2,492.6 102.8,492.6" fill="none" stroke="#666" stroke-width="0.7" />
<polyline points="80.5,500.6 102.8,500.6 102.8,492.9" fill="none" stroke="#f4f4f4" stroke-width="0.6" />
<text x="101.60" y="498.90" font-size="6.0" fill="#111" text-anchor="end">1.095</text>
<text x="104.30" y="498.90" font-size="6.0" fill="#18a0a8">bar</text>
<rect x="4.00" y="567.80" width="20.50" height="16.00" fill="#fde6bd" stroke="#555" stroke-width="0.8"/>
<text x="14.25" y="575.20" font-size="5.2" fill="#000" text-anchor="middle">To</text>
<text x="14.25" y="581.20" font-size="5.2" fill="#000" text-anchor="middle">PVPS</text>
<polygon points="26.00,574.30 34.00,569.70 34.00,578.90" fill="#000" />
<polyline points="39.0,574.3 39.0,600.4 70.2,600.4 70.2,574.3" fill="none" stroke="#2b98d8" stroke-width="1.6" stroke-linejoin="round"/>
<line x1="52.60" y1="574.30" x2="52.60" y2="568.30" stroke="#000" stroke-width="0.8" />
<rect x="46.40" y="564.30" width="12.40" height="4.00" fill="url(#act)" stroke="#223" stroke-width="0.3"/>
<polygon points="46.30,570.00 52.60,574.30 46.30,578.60" fill="#10b010" stroke="#063" stroke-width="0.6" />
<polygon points="58.90,570.00 52.60,574.30 58.90,578.60" fill="#10b010" stroke="#063" stroke-width="0.6" />
<text x="53.50" y="561.00" font-size="5.6" fill="#000" text-anchor="middle">XV4299</text>
<line x1="52.60" y1="600.40" x2="52.60" y2="594.40" stroke="#000" stroke-width="0.8" />
<rect x="46.40" y="590.40" width="12.40" height="4.00" fill="url(#act)" stroke="#223" stroke-width="0.3"/>
<polygon points="46.30,596.10 52.60,600.40 46.30,604.70" fill="#fff" stroke="#222" stroke-width="0.6" />
<polygon points="58.90,596.10 52.60,600.40 58.90,604.70" fill="#fff" stroke="#222" stroke-width="0.6" />
<text x="53.50" y="588.30" font-size="5.6" fill="#000" text-anchor="middle">XV4298</text>
<text x="41.00" y="606.00" font-size="4" fill="#18a0a8">L</text>
<circle cx="45.50" cy="605.00" r="1.60" fill="#20c020" stroke="#063" stroke-width="0.3" />
<circle cx="61.00" cy="605.80" r="1.20" fill="#444" />
<circle cx="64.50" cy="579.50" r="1.60" fill="#20c020" stroke="#063" stroke-width="0.3" />
<text x="93.20" y="560.10" font-size="4.6" fill="#000" text-anchor="middle" stroke="#000" stroke-width="0.12">TT4299</text>
<line x1="84.60" y1="561.10" x2="101.80" y2="561.10" stroke="#000" stroke-width="0.5" />
<polyline points="80.2,569.8 80.2,561.8 102.8,561.8" fill="none" stroke="#666" stroke-width="0.7" />
<polyline points="80.5,569.8 102.8,569.8 102.8,562.1" fill="none" stroke="#f4f4f4" stroke-width="0.6" />
<text x="101.60" y="568.10" font-size="6.0" fill="#111" text-anchor="end">+20.8</text>
<text x="104.30" y="568.10" font-size="6.0" fill="#18a0a8">C</text>
<text x="84.20" y="583.60" font-size="4.6" fill="#000" text-anchor="middle" stroke="#000" stroke-width="0.12">PT4299</text>
<line x1="75.60" y1="584.60" x2="92.80" y2="584.60" stroke="#000" stroke-width="0.5" />
<polyline points="80.2,593.3 80.2,585.3 102.8,585.3" fill="none" stroke="#666" stroke-width="0.7" />
<polyline points="80.5,593.3 102.8,593.3 102.8,585.6" fill="none" stroke="#f4f4f4" stroke-width="0.6" />
<text x="101.60" y="591.60" font-size="6.0" fill="#111" text-anchor="end">52.1</text>
<text x="104.30" y="591.60" font-size="6.0" fill="#18a0a8">mbar</text>
<rect x="4.00" y="623.00" width="22.00" height="16.40" fill="#fff" stroke="#555" stroke-width="0.8"/>
<text x="15.00" y="630.60" font-size="5.2" fill="#000" text-anchor="middle">To</text>
<text x="15.00" y="636.60" font-size="5.2" fill="#000" text-anchor="middle">recovery</text>
<polygon points="26.00,631.40 34.00,626.80 34.00,636.00" fill="#000" />
<polyline points="34.0,631.4 97.7,631.4 97.7,661.5" fill="none" stroke="#2b98d8" stroke-width="1.4" stroke-linejoin="round"/>
<line x1="52.60" y1="631.40" x2="52.60" y2="625.40" stroke="#000" stroke-width="0.8" />
<rect x="46.40" y="621.40" width="12.40" height="4.00" fill="url(#act)" stroke="#223" stroke-width="0.3"/>
<polygon points="46.30,627.10 52.60,631.40 46.30,635.70" fill="#fff" stroke="#222" stroke-width="0.6" />
<polygon points="58.90,627.10 52.60,631.40 58.90,635.70" fill="#fff" stroke="#222" stroke-width="0.6" />
<text x="53.50" y="618.50" font-size="5.6" fill="#000" text-anchor="middle">XV4305</text>
<rect x="4.00" y="653.00" width="20.50" height="17.50" fill="#fde6bd" stroke="#555" stroke-width="0.8"/>
<text x="14.25" y="661.15" font-size="5.2" fill="#000" text-anchor="middle">To</text>
<text x="14.25" y="667.15" font-size="5.2" fill="#000" text-anchor="middle">WCS</text>
<polygon points="26.00,661.50 34.00,656.90 34.00,666.10" fill="#000" />
<line x1="52.60" y1="649.00" x2="78.00" y2="649.00" stroke="#000" stroke-width="0.8" />
<line x1="52.60" y1="649.00" x2="52.60" y2="655.00" stroke="#000" stroke-width="0.8" />
<polygon points="77.50,645.20 82.70,649.00 77.50,652.80" fill="#10b010" stroke="#063" stroke-width="0.6" />
<polygon points="87.90,645.20 82.70,649.00 87.90,652.80" fill="#10b010" stroke="#063" stroke-width="0.6" />
<line x1="82.70" y1="649.00" x2="82.70" y2="643.00" stroke="#000" stroke-width="0.6" />
<line x1="80.70" y1="643.00" x2="84.70" y2="643.00" stroke="#000" stroke-width="0.6" />
<text x="82.70" y="638.50" font-size="4.6" fill="#000" text-anchor="middle">EV4309</text>
<polyline points="46.6,679.5 46.6,671.5 60.2,671.5" fill="none" stroke="#666" stroke-width="0.7" />
<polyline points="46.9,679.5 60.2,679.5 60.2,671.8" fill="none" stroke="#f4f4f4" stroke-width="0.6" />
<text x="59.00" y="677.80" font-size="5.4" fill="#111" text-anchor="end">100.0</text>
<text x="61.70" y="677.80" font-size="5.4" fill="#18a0a8">%</text>
<polyline points="46.6,689.5 46.6,681.5 60.2,681.5" fill="none" stroke="#666" stroke-width="0.7" />
<polyline points="46.9,689.5 60.2,689.5 60.2,681.8" fill="none" stroke="#f4f4f4" stroke-width="0.6" />
<text x="59.00" y="687.80" font-size="5.4" fill="#10a010" text-anchor="end">99.6</text>
<text x="61.70" y="687.80" font-size="5.4" fill="#18a0a8">%</text>
<rect x="116.30" y="612.90" width="100.70" height="57.60" fill="none" stroke="#555" stroke-width="0.6" stroke-dasharray="1.2 1.2"/>
<text x="168.00" y="678.00" font-size="5.4" fill="#000" text-anchor="middle">Atmospheric exchanger</text>
<text x="172.20" y="617.70" font-size="4.6" fill="#000" text-anchor="middle" stroke="#000" stroke-width="0.12">TT4308</text>
<line x1="163.60" y1="618.70" x2="180.80" y2="618.70" stroke="#000" stroke-width="0.5" />
<polyline points="161.4,627.4 161.4,619.4 183.0,619.4" fill="none" stroke="#666" stroke-width="0.7" />
<polyline points="161.7,627.4 183.0,627.4 183.0,619.7" fill="none" stroke="#f4f4f4" stroke-width="0.6" />
<text x="181.80" y="625.70" font-size="6.0" fill="#111" text-anchor="end">-21.5</text>
<text x="184.50" y="625.70" font-size="6.0" fill="#18a0a8">C</text>
<text x="172.20" y="633.70" font-size="4.6" fill="#000" text-anchor="middle" stroke="#000" stroke-width="0.12">PT4308</text>
<line x1="163.60" y1="634.70" x2="180.80" y2="634.70" stroke="#000" stroke-width="0.5" />
<polyline points="161.4,643.4 161.4,635.4 183.0,635.4" fill="none" stroke="#666" stroke-width="0.7" />
<polyline points="161.7,643.4 183.0,643.4 183.0,635.7" fill="none" stroke="#f4f4f4" stroke-width="0.6" />
<text x="181.80" y="641.70" font-size="6.0" fill="#111" text-anchor="end">1.07</text>
<text x="184.50" y="641.70" font-size="6.0" fill="#18a0a8">bar</text>
<text x="172.20" y="648.80" font-size="4.6" fill="#000" text-anchor="middle" stroke="#000" stroke-width="0.12">FT4308</text>
<line x1="163.60" y1="649.80" x2="180.80" y2="649.80" stroke="#000" stroke-width="0.5" />
<polyline points="161.4,658.5 161.4,650.5 183.0,650.5" fill="none" stroke="#666" stroke-width="0.7" />
<polyline points="161.7,658.5 183.0,658.5 183.0,650.8" fill="none" stroke="#f4f4f4" stroke-width="0.6" />
<text x="181.80" y="656.80" font-size="6.0" fill="#111" text-anchor="end">0.019</text>
<text x="184.50" y="656.80" font-size="6.0" fill="#18a0a8">g/s</text>
<text x="132.35" y="648.80" font-size="4.6" fill="#000" text-anchor="middle" stroke="#000" stroke-width="0.12">TT4318</text>
<line x1="123.75" y1="649.80" x2="140.95" y2="649.80" stroke="#000" stroke-width="0.5" />
<polyline points="121.8,658.5 121.8,650.5 142.9,650.5" fill="none" stroke="#666" stroke-width="0.7" />
<polyline points="122.1,658.5 142.9,658.5 142.9,650.8" fill="none" stroke="#f4f4f4" stroke-width="0.6" />
<text x="141.70" y="656.80" font-size="6.0" fill="#111" text-anchor="end">-23.3</text>
<text x="144.40" y="656.80" font-size="6.0" fill="#18a0a8">C</text>
<rect x="199.00" y="634.40" width="14.00" height="32.00" fill="#d0d0d0"/>
<rect x="199.40" y="634.40" width="2.20" height="32.00" fill="#111"/>
<rect x="203.00" y="634.40" width="2.20" height="32.00" fill="#111"/>
<rect x="206.60" y="634.40" width="2.20" height="32.00" fill="#111"/>
<rect x="210.20" y="634.40" width="2.20" height="32.00" fill="#111"/>
<line x1="52.60" y1="661.50" x2="52.60" y2="654.50" stroke="#000" stroke-width="0.8" />
<path d="M46.20,654.60 a6.4,6.1 0 0 1 12.8,0 z" fill="url(#domeb)" stroke="#334" stroke-width="0.4" />
<polygon points="46.30,657.20 52.60,661.50 46.30,665.80" fill="#10b010" stroke="#063" stroke-width="0.6" />
<polygon points="58.90,657.20 52.60,661.50 58.90,665.80" fill="#10b010" stroke="#063" stroke-width="0.6" />
<text x="53.50" y="646.70" font-size="5.6" fill="#000" text-anchor="middle">CV4309</text>
<text x="145.30" y="409.80" font-size="4.6" fill="#000" text-anchor="middle" stroke="#000" stroke-width="0.12">TT4301</text>
<line x1="136.70" y1="410.80" x2="153.90" y2="410.80" stroke="#000" stroke-width="0.5" />
<polyline points="135.3,419.5 135.3,411.5 156.3,411.5" fill="none" stroke="#666" stroke-width="0.7" />
<polyline points="135.6,419.5 156.3,419.5 156.3,411.8" fill="none" stroke="#f4f4f4" stroke-width="0.6" />
<text x="155.10" y="417.80" font-size="6.0" fill="#111" text-anchor="end">74.1</text>
<text x="157.80" y="417.80" font-size="6.0" fill="#18a0a8">K</text>
<line x1="145.40" y1="424.00" x2="145.40" y2="466.00" stroke="#444" stroke-width="0.6" stroke-dasharray="1 1.2"/>
<rect x="140.00" y="441.00" width="11.00" height="8.00" fill="#fff"/>
<text x="145.40" y="447.50" font-size="5.4" fill="#000" text-anchor="middle">3.7</text>
<text x="144.40" y="470.80" font-size="4.6" fill="#000" text-anchor="middle" stroke="#000" stroke-width="0.12">TT3200</text>
<line x1="135.80" y1="471.80" x2="153.00" y2="471.80" stroke="#000" stroke-width="0.5" />
<polyline points="132.8,480.5 132.8,472.5 153.8,472.5" fill="none" stroke="#666" stroke-width="0.7" />
<polyline points="133.1,480.5 153.8,480.5 153.8,472.8" fill="none" stroke="#f4f4f4" stroke-width="0.6" />
<text x="152.60" y="478.80" font-size="6.0" fill="#111" text-anchor="end">70.4</text>
<text x="155.30" y="478.80" font-size="6.0" fill="#18a0a8">K</text>
<text x="144.40" y="561.10" font-size="4.6" fill="#000" text-anchor="middle" stroke="#000" stroke-width="0.12">TT3241</text>
<line x1="135.80" y1="562.10" x2="153.00" y2="562.10" stroke="#000" stroke-width="0.5" />
<polyline points="132.8,570.8 132.8,562.8 153.8,562.8" fill="none" stroke="#666" stroke-width="0.7" />
<polyline points="133.1,570.8 153.8,570.8 153.8,563.1" fill="none" stroke="#f4f4f4" stroke-width="0.6" />
<text x="152.60" y="569.10" font-size="6.0" fill="#111" text-anchor="end">65.5</text>
<text x="155.30" y="569.10" font-size="6.0" fill="#18a0a8">K</text>
<polyline points="167.0,422.0 167.0,309.2 356.0,309.2 356.0,422.0" fill="none" stroke="#2b98d8" stroke-width="3" stroke-linejoin="round"/>
<polyline points="167.0,366.3 356.0,366.3" fill="none" stroke="#2b98d8" stroke-width="2" stroke-linejoin="round"/>
<line x1="184.50" y1="309.20" x2="184.50" y2="302.20" stroke="#000" stroke-width="0.8" />
<path d="M178.10,302.30 a6.4,6.1 0 0 1 12.8,0 z" fill="url(#domer)" stroke="#334" stroke-width="0.4" />
<polygon points="178.20,304.90 184.50,309.20 178.20,313.50" fill="#fff" stroke="#222" stroke-width="0.6" />
<polygon points="190.80,304.90 184.50,309.20 190.80,313.50" fill="#fff" stroke="#222" stroke-width="0.6" />
<text x="184.00" y="295.20" font-size="5.6" fill="#000" text-anchor="middle">CV3520</text>
<polyline points="176.0,326.8 176.0,318.8 192.0,318.8" fill="none" stroke="#666" stroke-width="0.7" />
<polyline points="176.3,326.8 192.0,326.8 192.0,319.1" fill="none" stroke="#f4f4f4" stroke-width="0.6" />
<text x="190.80" y="325.10" font-size="6.0" fill="#111" text-anchor="end">0.0</text>
<text x="193.50" y="325.10" font-size="6.0" fill="#18a0a8">%</text>
<text x="171.50" y="317.70" font-size="4" fill="#18a0a8">L</text>
<circle cx="175.70" cy="316.50" r="1.60" fill="#20c020" stroke="#063" stroke-width="0.3" />
<line x1="339.50" y1="309.20" x2="339.50" y2="302.20" stroke="#000" stroke-width="0.8" />
<path d="M333.10,302.30 a6.4,6.1 0 0 1 12.8,0 z" fill="url(#domer)" stroke="#334" stroke-width="0.4" />
<polygon points="333.20,304.90 339.50,309.20 333.20,313.50" fill="#fff" stroke="#222" stroke-width="0.6" />
<polygon points="345.80,304.90 339.50,309.20 345.80,313.50" fill="#fff" stroke="#222" stroke-width="0.6" />
<text x="339.00" y="295.20" font-size="5.6" fill="#000" text-anchor="middle">CV3529</text>
<polyline points="333.5,326.8 333.5,318.8 349.5,318.8" fill="none" stroke="#666" stroke-width="0.7" />
<polyline points="333.8,326.8 349.5,326.8 349.5,319.1" fill="none" stroke="#f4f4f4" stroke-width="0.6" />
<text x="348.30" y="325.10" font-size="6.0" fill="#111" text-anchor="end">0.0</text>
<text x="351.00" y="325.10" font-size="6.0" fill="#18a0a8">%</text>
<text x="326.00" y="317.70" font-size="4" fill="#18a0a8">L</text>
<circle cx="330.50" cy="316.50" r="1.60" fill="#20c020" stroke="#063" stroke-width="0.3" />
<rect x="242.50" y="290.00" width="30.00" height="50.00" fill="url(#metal)" stroke="#333" stroke-width="0.5" rx="5"/>
<rect x="245.70" y="297.00" width="23.60" height="36.00" fill="#000" stroke="#e8e8e8" stroke-width="0.6"/>
<text x="257.50" y="317.30" font-size="6.6" fill="#fff" text-anchor="middle" font-weight="bold">A3520</text>
<polyline points="225.6,309.2 225.6,340.2" fill="none" stroke="#2b98d8" stroke-width="1.6" stroke-linejoin="round"/>
<polyline points="319.8,309.2 319.8,339.2" fill="none" stroke="#2b98d8" stroke-width="1.6" stroke-linejoin="round"/>
<polygon points="225.60,339.40 221.00,346.80 230.20,346.80" fill="#000" />
<polygon points="319.80,346.60 315.20,339.20 324.40,339.20" fill="#000" />
<rect x="220.50" y="346.80" width="102.80" height="10.00" fill="#fde6bd" stroke="#555" stroke-width="0.8"/>
<text x="271.90" y="353.70" font-size="5.2" fill="#000" text-anchor="middle">Regeneration skid</text>
<polyline points="284.0,309.2 284.0,275.7 295.0,275.7" fill="none" stroke="#555" stroke-width="0.6" stroke-dasharray="1 1"/>
<text x="303.00" y="268.20" font-size="4.6" fill="#000" text-anchor="middle">PT4520</text>
<line x1="295.00" y1="264.00" x2="311.50" y2="264.00" stroke="#000" stroke-width="0.5" />
<text x="312.00" y="276.00" font-size="5.6" fill="#000" text-anchor="end">8.42</text>
<text x="314.00" y="276.00" font-size="5.6" fill="#18a0a8">bar</text>
<polyline points="291.0,309.2 291.0,298.7 293.0,298.7" fill="none" stroke="#555" stroke-width="0.6" stroke-dasharray="1 1"/>
<text x="300.00" y="293.10" font-size="4.6" fill="#000" text-anchor="middle" stroke="#000" stroke-width="0.12">PDT4521</text>
<line x1="290.05" y1="294.10" x2="309.95" y2="294.10" stroke="#000" stroke-width="0.5" />
<polyline points="293.0,302.8 293.0,294.8 313.0,294.8" fill="none" stroke="#666" stroke-width="0.7" />
<polyline points="293.3,302.8 313.0,302.8 313.0,295.1" fill="none" stroke="#f4f4f4" stroke-width="0.6" />
<text x="311.80" y="301.10" font-size="6.0" fill="#111" text-anchor="end">0.0</text>
<text x="314.50" y="301.10" font-size="6.0" fill="#18a0a8">mbar</text>
<polygon points="299.10,309.20 304.30,304.00 309.50,309.20 304.30,314.40" fill="#fff" stroke="#888" stroke-width="0.7" />
<line x1="304.30" y1="304.20" x2="304.30" y2="314.20" stroke="#999" stroke-width="0.5" />
<text x="284.70" y="326.00" font-size="4.6" fill="#000" text-anchor="middle" stroke="#000" stroke-width="0.12">TT3520</text>
<line x1="276.10" y1="327.00" x2="293.30" y2="327.00" stroke="#000" stroke-width="0.5" />
<polyline points="274.7,335.7 274.7,327.7 295.7,327.7" fill="none" stroke="#666" stroke-width="0.7" />
<polyline points="275.0,335.7 295.7,335.7 295.7,328.0" fill="none" stroke="#f4f4f4" stroke-width="0.6" />
<text x="294.50" y="334.00" font-size="6.0" fill="#111" text-anchor="end">204.6</text>
<text x="297.20" y="334.00" font-size="6.0" fill="#18a0a8">K</text>
<line x1="184.50" y1="422.00" x2="184.50" y2="415.00" stroke="#000" stroke-width="0.8" />
<path d="M178.10,415.10 a6.4,6.1 0 0 1 12.8,0 z" fill="url(#domer)" stroke="#334" stroke-width="0.4" />
<polygon points="178.20,417.70 184.50,422.00 178.20,426.30" fill="#fff" stroke="#222" stroke-width="0.6" />
<polygon points="190.80,417.70 184.50,422.00 190.80,426.30" fill="#fff" stroke="#222" stroke-width="0.6" />
<text x="184.00" y="408.00" font-size="5.6" fill="#000" text-anchor="middle">CV3510</text>
<polyline points="176.0,439.6 176.0,431.6 192.0,431.6" fill="none" stroke="#666" stroke-width="0.7" />
<polyline points="176.3,439.6 192.0,439.6 192.0,431.9" fill="none" stroke="#f4f4f4" stroke-width="0.6" />
<text x="190.80" y="437.90" font-size="6.0" fill="#111" text-anchor="end">0.0</text>
<text x="193.50" y="437.90" font-size="6.0" fill="#18a0a8">%</text>
<text x="171.50" y="430.50" font-size="4" fill="#18a0a8">L</text>
<circle cx="175.70" cy="429.30" r="1.60" fill="#20c020" stroke="#063" stroke-width="0.3" />
<line x1="339.50" y1="422.00" x2="339.50" y2="415.00" stroke="#000" stroke-width="0.8" />
<path d="M333.10,415.10 a6.4,6.1 0 0 1 12.8,0 z" fill="url(#domer)" stroke="#334" stroke-width="0.4" />
<polygon points="333.20,417.70 339.50,422.00 333.20,426.30" fill="#fff" stroke="#222" stroke-width="0.6" />
<polygon points="345.80,417.70 339.50,422.00 345.80,426.30" fill="#fff" stroke="#222" stroke-width="0.6" />
<text x="339.00" y="408.00" font-size="5.6" fill="#000" text-anchor="middle">CV3519</text>
<polyline points="333.5,439.6 333.5,431.6 349.5,431.6" fill="none" stroke="#666" stroke-width="0.7" />
<polyline points="333.8,439.6 349.5,439.6 349.5,431.9" fill="none" stroke="#f4f4f4" stroke-width="0.6" />
<text x="348.30" y="437.90" font-size="6.0" fill="#111" text-anchor="end">0.0</text>
<text x="351.00" y="437.90" font-size="6.0" fill="#18a0a8">%</text>
<text x="326.00" y="430.50" font-size="4" fill="#18a0a8">L</text>
<circle cx="330.50" cy="429.30" r="1.60" fill="#20c020" stroke="#063" stroke-width="0.3" />
<rect x="242.50" y="402.80" width="30.00" height="50.00" fill="url(#metal)" stroke="#333" stroke-width="0.5" rx="5"/>
<rect x="245.70" y="409.80" width="23.60" height="36.00" fill="#000" stroke="#e8e8e8" stroke-width="0.6"/>
<text x="257.50" y="430.10" font-size="6.6" fill="#fff" text-anchor="middle" font-weight="bold">A3510</text>
<polyline points="225.6,422.0 225.6,453.0" fill="none" stroke="#2b98d8" stroke-width="1.6" stroke-linejoin="round"/>
<polyline points="319.8,422.0 319.8,452.0" fill="none" stroke="#2b98d8" stroke-width="1.6" stroke-linejoin="round"/>
<polygon points="225.60,452.20 221.00,459.60 230.20,459.60" fill="#000" />
<polygon points="319.80,459.40 315.20,452.00 324.40,452.00" fill="#000" />
<rect x="220.50" y="459.60" width="102.80" height="10.00" fill="#fde6bd" stroke="#555" stroke-width="0.8"/>
<text x="271.90" y="466.50" font-size="5.2" fill="#000" text-anchor="middle">Regeneration skid</text>
<polyline points="284.0,422.0 284.0,388.5 295.0,388.5" fill="none" stroke="#555" stroke-width="0.6" stroke-dasharray="1 1"/>
<text x="303.00" y="381.00" font-size="4.6" fill="#000" text-anchor="middle">PT4510</text>
<line x1="295.00" y1="376.80" x2="311.50" y2="376.80" stroke="#000" stroke-width="0.5" />
<text x="312.00" y="388.80" font-size="5.6" fill="#000" text-anchor="end">1.688</text>
<text x="314.00" y="388.80" font-size="5.6" fill="#18a0a8">bar</text>
<polyline points="291.0,422.0 291.0,411.5 293.0,411.5" fill="none" stroke="#555" stroke-width="0.6" stroke-dasharray="1 1"/>
<text x="300.00" y="405.90" font-size="4.6" fill="#000" text-anchor="middle" stroke="#000" stroke-width="0.12">PDT4511</text>
<line x1="290.05" y1="406.90" x2="309.95" y2="406.90" stroke="#000" stroke-width="0.5" />
<polyline points="293.0,415.6 293.0,407.6 313.0,407.6" fill="none" stroke="#666" stroke-width="0.7" />
<polyline points="293.3,415.6 313.0,415.6 313.0,407.9" fill="none" stroke="#f4f4f4" stroke-width="0.6" />
<text x="311.80" y="413.90" font-size="6.0" fill="#111" text-anchor="end">0.0</text>
<text x="314.50" y="413.90" font-size="6.0" fill="#18a0a8">mbar</text>
<polygon points="299.10,422.00 304.30,416.80 309.50,422.00 304.30,427.20" fill="#fff" stroke="#888" stroke-width="0.7" />
<line x1="304.30" y1="417.00" x2="304.30" y2="427.00" stroke="#999" stroke-width="0.5" />
<text x="284.70" y="438.80" font-size="4.6" fill="#000" text-anchor="middle" stroke="#000" stroke-width="0.12">TT3510</text>
<line x1="276.10" y1="439.80" x2="293.30" y2="439.80" stroke="#000" stroke-width="0.5" />
<polyline points="274.7,448.5 274.7,440.5 295.7,440.5" fill="none" stroke="#666" stroke-width="0.7" />
<polyline points="275.0,448.5 295.7,448.5 295.7,440.8" fill="none" stroke="#f4f4f4" stroke-width="0.6" />
<text x="294.50" y="446.80" font-size="6.0" fill="#111" text-anchor="end">158.8</text>
<text x="297.20" y="446.80" font-size="6.0" fill="#18a0a8">K</text>
<line x1="184.50" y1="366.30" x2="184.50" y2="359.30" stroke="#000" stroke-width="0.8" />
<path d="M178.10,359.40 a6.4,6.1 0 0 1 12.8,0 z" fill="url(#domeb)" stroke="#334" stroke-width="0.4" />
<polygon points="178.20,362.00 184.50,366.30 178.20,370.60" fill="#10b010" stroke="#063" stroke-width="0.6" />
<polygon points="190.80,362.00 184.50,366.30 190.80,370.60" fill="#10b010" stroke="#063" stroke-width="0.6" />
<text x="184.00" y="352.20" font-size="5.6" fill="#000" text-anchor="middle">CV3500</text>
<polyline points="175.5,383.5 175.5,375.5 194.0,375.5" fill="none" stroke="#666" stroke-width="0.7" />
<polyline points="175.8,383.5 194.0,383.5 194.0,375.8" fill="none" stroke="#f4f4f4" stroke-width="0.6" />
<text x="192.80" y="381.80" font-size="6.0" fill="#111" text-anchor="end">100.0</text>
<text x="195.50" y="381.80" font-size="6.0" fill="#18a0a8">%</text>
<circle cx="176.00" cy="372.80" r="1.20" fill="#444" />
<text x="370.00" y="430.60" font-size="4.6" fill="#000" text-anchor="middle" stroke="#000" stroke-width="0.12">TT3519</text>
<line x1="361.40" y1="431.60" x2="378.60" y2="431.60" stroke="#000" stroke-width="0.5" />
<polyline points="360.0,440.3 360.0,432.3 381.0,432.3" fill="none" stroke="#666" stroke-width="0.7" />
<polyline points="360.3,440.3 381.0,440.3 381.0,432.6" fill="none" stroke="#f4f4f4" stroke-width="0.6" />
<text x="379.80" y="438.60" font-size="6.0" fill="#111" text-anchor="end">72.8</text>
<text x="382.50" y="438.60" font-size="6.0" fill="#18a0a8">K</text>
<polyline points="425.0,89.2 369.4,89.2 369.4,422.0" fill="none" stroke="#2b98d8" stroke-width="3" stroke-linejoin="round"/>
<line x1="369.40" y1="250.00" x2="375.90" y2="250.00" stroke="#000" stroke-width="0.8" />
<path d="M375.70,243.60 a6.2,6.4 0 0 1 0,12.8 z" fill="url(#domeb)" stroke="#334" stroke-width="0.4" />
<polygon points="365.10,243.70 369.40,250.00 373.70,243.70" fill="#10b010" stroke="#063" stroke-width="0.6" />
<polygon points="365.10,256.30 369.40,250.00 373.70,256.30" fill="#10b010" stroke="#063" stroke-width="0.6" />
<text x="383.00" y="246.00" font-size="5.6" fill="#000">CV3546</text>
<polyline points="383.5,256.5 383.5,248.5 401.0,248.5" fill="none" stroke="#666" stroke-width="0.7" />
<polyline points="383.8,256.5 401.0,256.5 401.0,248.8" fill="none" stroke="#f4f4f4" stroke-width="0.6" />
<text x="399.80" y="254.80" font-size="6.0" fill="#111" text-anchor="end">81.3</text>
<text x="402.50" y="254.80" font-size="6.0" fill="#18a0a8">%</text>
<rect x="373.50" y="257.50" width="4.50" height="4.50" fill="#4a7a4a" stroke="#222" stroke-width="0.4"/>
<line x1="369.40" y1="182.00" x2="375.90" y2="182.00" stroke="#000" stroke-width="0.8" />
<path d="M375.70,175.60 a6.2,6.4 0 0 1 0,12.8 z" fill="url(#domeb)" stroke="#334" stroke-width="0.4" />
<polygon points="365.10,175.70 369.40,182.00 373.70,175.70" fill="#10b010" stroke="#063" stroke-width="0.6" />
<polygon points="365.10,188.30 369.40,182.00 373.70,188.30" fill="#10b010" stroke="#063" stroke-width="0.6" />
<text x="380.50" y="178.30" font-size="5.6" fill="#000">CV3530</text>
<polyline points="383.0,191.0 383.0,183.0 399.0,183.0" fill="none" stroke="#666" stroke-width="0.7" />
<polyline points="383.3,191.0 399.0,191.0 399.0,183.3" fill="none" stroke="#f4f4f4" stroke-width="0.6" />
<text x="397.80" y="189.30" font-size="6.0" fill="#111" text-anchor="end">60.1</text>
<text x="400.50" y="189.30" font-size="6.0" fill="#18a0a8">%</text>
<rect x="373.50" y="189.50" width="4.50" height="4.50" fill="#4a7a4a" stroke="#222" stroke-width="0.4"/>
<polygon points="375.60,155.70 378.50,159.50 381.40,155.70" fill="#10b010" stroke="#063" stroke-width="0.6" />
<polygon points="375.60,163.30 378.50,159.50 381.40,163.30" fill="#fff" stroke="#063" stroke-width="0.6" />
<line x1="378.50" y1="159.50" x2="382.50" y2="159.50" stroke="#000" stroke-width="0.5" />
<rect x="382.10" y="156.30" width="1.80" height="6.40" fill="#2038d8"/>
<text x="384.50" y="160.80" font-size="3.4" fill="#000">BV3530</text>
<text x="379.50" y="128.80" font-size="4.6" fill="#000" text-anchor="middle" stroke="#000" stroke-width="0.12">TT3530</text>
<line x1="370.90" y1="129.80" x2="388.10" y2="129.80" stroke="#000" stroke-width="0.5" />
<polyline points="371.5,138.5 371.5,130.5 392.5,130.5" fill="none" stroke="#666" stroke-width="0.7" />
<polyline points="371.8,138.5 392.5,138.5 392.5,130.8" fill="none" stroke="#f4f4f4" stroke-width="0.6" />
<text x="391.30" y="136.80" font-size="6.0" fill="#111" text-anchor="end">73.3</text>
<text x="394.00" y="136.80" font-size="6.0" fill="#18a0a8">K</text>
<polyline points="288.2,483.6 288.2,661.5" fill="none" stroke="#2b98d8" stroke-width="1.3" stroke-linejoin="round"/>
<line x1="286.20" y1="520.00" x2="290.20" y2="520.00" stroke="#2b98d8" stroke-width="0.8" />
<line x1="286.20" y1="578.00" x2="290.20" y2="578.00" stroke="#2b98d8" stroke-width="0.8" />
<polygon points="288.20,655.50 285.60,660.00 290.80,660.00" fill="#000" />
<line x1="288.20" y1="633.00" x2="294.70" y2="633.00" stroke="#000" stroke-width="0.8" />
<path d="M294.50,626.60 a6.2,6.4 0 0 1 0,12.8 z" fill="url(#domeb)" stroke="#334" stroke-width="0.4" />
<polygon points="283.90,626.70 288.20,633.00 292.50,626.70" fill="#fff" stroke="#222" stroke-width="0.6" />
<polygon points="283.90,639.30 288.20,633.00 292.50,639.30" fill="#fff" stroke="#222" stroke-width="0.6" />
<text x="301.50" y="629.00" font-size="5.6" fill="#000">CV3304</text>
<polyline points="302.0,642.0 302.0,634.0 318.0,634.0" fill="none" stroke="#666" stroke-width="0.7" />
<polyline points="302.3,642.0 318.0,642.0 318.0,634.3" fill="none" stroke="#f4f4f4" stroke-width="0.6" />
<text x="316.80" y="640.30" font-size="6.0" fill="#111" text-anchor="end">0.0</text>
<text x="319.50" y="640.30" font-size="6.0" fill="#18a0a8">%</text>
<polyline points="375.0,483.6 375.0,629.0 430.0,629.0" fill="none" stroke="#2b98d8" stroke-width="2" stroke-linejoin="round"/>
<line x1="396.00" y1="629.00" x2="396.00" y2="622.00" stroke="#000" stroke-width="0.8" />
<path d="M389.60,622.10 a6.4,6.1 0 0 1 12.8,0 z" fill="url(#domeb)" stroke="#334" stroke-width="0.4" />
<polygon points="389.70,624.70 396.00,629.00 389.70,633.30" fill="#10b010" stroke="#063" stroke-width="0.6" />
<polygon points="402.30,624.70 396.00,629.00 402.30,633.30" fill="#10b010" stroke="#063" stroke-width="0.6" />
<text x="396.00" y="613.70" font-size="5.6" fill="#000" text-anchor="middle">CV3415</text>
<polyline points="386.0,647.0 386.0,639.0 403.5,639.0" fill="none" stroke="#666" stroke-width="0.7" />
<polyline points="386.3,647.0 403.5,647.0 403.5,639.3" fill="none" stroke="#f4f4f4" stroke-width="0.6" />
<text x="402.30" y="645.30" font-size="6.0" fill="#111" text-anchor="end">100.0</text>
<text x="405.00" y="645.30" font-size="6.0" fill="#18a0a8">%</text>
<polyline points="656.6,73.0 656.6,60.2 623.0,60.2 623.0,190.0" fill="none" stroke="#2b98d8" stroke-width="1.5" stroke-linejoin="round"/>
<polyline points="623.0,59.3 1232.0,59.3" fill="none" stroke="#2b98d8" stroke-width="1.5" stroke-linejoin="round"/>
<polyline points="690.6,323.2 690.6,71.8 1232.0,71.8" fill="none" stroke="#2b98d8" stroke-width="1.8" stroke-linejoin="round"/>
<polygon points="656.60,74.50 653.60,69.50 659.60,69.50" fill="#000" />
<circle cx="656.60" cy="80.60" r="6.30" fill="#bdbdbd" stroke="#555" stroke-width="0.7" />
<text x="656.60" y="82.60" font-size="5.2" fill="#222" text-anchor="middle">A</text>
<rect x="628.00" y="89.20" width="57.60" height="9.20" fill="#fff" stroke="#555" stroke-width="0.7"/>
<text x="656.80" y="96.00" font-size="5.2" fill="#000" text-anchor="middle">To Cooldown Return</text>
<line x1="369.40" y1="212.40" x2="423.50" y2="212.40" stroke="#2b98d8" stroke-width="1.4" />
<line x1="432.50" y1="212.40" x2="494.40" y2="212.40" stroke="#2b98d8" stroke-width="1.4" />
<line x1="502.00" y1="212.40" x2="543.30" y2="212.40" stroke="#2b98d8" stroke-width="1.4" />
<line x1="551.40" y1="212.40" x2="623.00" y2="212.40" stroke="#2b98d8" stroke-width="1.4" />
<line x1="423.50" y1="210.40" x2="423.50" y2="214.40" stroke="#2b98d8" stroke-width="0.8" />
<line x1="432.50" y1="210.40" x2="432.50" y2="214.40" stroke="#2b98d8" stroke-width="0.8" />
<line x1="494.40" y1="210.40" x2="494.40" y2="214.40" stroke="#2b98d8" stroke-width="0.8" />
<line x1="502.00" y1="210.40" x2="502.00" y2="214.40" stroke="#2b98d8" stroke-width="0.8" />
<line x1="543.30" y1="210.40" x2="543.30" y2="214.40" stroke="#2b98d8" stroke-width="0.8" />
<line x1="551.40" y1="210.40" x2="551.40" y2="214.40" stroke="#2b98d8" stroke-width="0.8" />
<line x1="449.40" y1="323.20" x2="471.00" y2="323.20" stroke="#2b98d8" stroke-width="1.4" />
<line x1="478.40" y1="323.20" x2="690.60" y2="323.20" stroke="#2b98d8" stroke-width="1.4" />
<line x1="471.00" y1="321.20" x2="471.00" y2="325.20" stroke="#2b98d8" stroke-width="0.8" />
<line x1="478.40" y1="321.20" x2="478.40" y2="325.20" stroke="#2b98d8" stroke-width="0.8" />
<rect x="362.75" y="76.75" width="119.20" height="45.30" fill="#dcdcdc" stroke="#000" stroke-width="1.5"/>
<text x="372.00" y="85.60" font-size="7.6" fill="#111">T3530</text>
<polyline points="416.3,89.4 371.6,89.4 368.6,92.4 368.6,125.0" fill="none" stroke="#2b98d8" stroke-width="3" stroke-linejoin="round"/>
<polyline points="428.3,100.0 428.3,125.0" fill="none" stroke="#2b98d8" stroke-width="3" stroke-linejoin="round"/>
<polygon points="424.80,81.80 431.80,81.80 434.30,86.30 440.80,88.50 440.80,90.30 434.30,92.30 430.30,100.30 426.30,100.30 422.30,92.30 415.80,90.30 415.80,88.50 422.30,86.30" fill="url(#turb)" stroke="#555" stroke-width="0.4" />
<circle cx="429.30" cy="96.30" r="2.00" fill="none" stroke="#ddd" stroke-width="0.6" />
<rect x="386.00" y="94.20" width="19.80" height="6.80" fill="#000"/>
<text x="404.80" y="99.90" font-size="5.8" fill="#fff" text-anchor="end">1.000</text>
<rect x="442.50" y="77.40" width="38.70" height="8.80" fill="#fde6bd" stroke="#555" stroke-width="0.5"/>
<text x="461.85" y="84.00" font-size="5.2" fill="#000" text-anchor="middle">Turbines</text>
<text x="458.70" y="93.10" font-size="4.6" fill="#000" text-anchor="middle" stroke="#000" stroke-width="0.12">ST3530</text>
<line x1="450.10" y1="94.10" x2="467.30" y2="94.10" stroke="#000" stroke-width="0.5" />
<polyline points="446.3,102.2 446.3,94.8 468.0,94.8" fill="none" stroke="#666" stroke-width="0.7" />
<polyline points="446.6,102.2 468.0,102.2 468.0,95.1" fill="none" stroke="#f4f4f4" stroke-width="0.6" />
<text x="466.80" y="100.50" font-size="6.0" fill="#111" text-anchor="end">1997</text>
<text x="469.50" y="100.50" font-size="6.0" fill="#18a0a8">Hz</text>
<text x="384.20" y="108.90" font-size="4.6" fill="#000" text-anchor="middle" stroke="#000" stroke-width="0.12">PT4530</text>
<line x1="375.60" y1="109.90" x2="392.80" y2="109.90" stroke="#000" stroke-width="0.5" />
<polyline points="371.4,118.2 371.4,110.6 393.2,110.6" fill="none" stroke="#666" stroke-width="0.7" />
<polyline points="371.7,118.2 393.2,118.2 393.2,110.9" fill="none" stroke="#f4f4f4" stroke-width="0.6" />
<text x="392.00" y="116.50" font-size="6.0" fill="#111" text-anchor="end">13.24</text>
<text x="394.70" y="116.50" font-size="6.0" fill="#18a0a8">bar</text>
<text x="443.80" y="108.90" font-size="4.6" fill="#000" text-anchor="middle" stroke="#000" stroke-width="0.12">PT4330</text>
<line x1="435.20" y1="109.90" x2="452.40" y2="109.90" stroke="#000" stroke-width="0.5" />
<polyline points="431.4,118.2 431.4,110.6 453.0,110.6" fill="none" stroke="#666" stroke-width="0.7" />
<polyline points="431.7,118.2 453.0,118.2 453.0,110.9" fill="none" stroke="#f4f4f4" stroke-width="0.6" />
<text x="451.80" y="116.50" font-size="6.0" fill="#111" text-anchor="end">1.32</text>
<text x="454.50" y="116.50" font-size="6.0" fill="#18a0a8">bar</text>
<rect x="490.85" y="76.75" width="106.80" height="45.30" fill="#dcdcdc" stroke="#000" stroke-width="1.5"/>
<text x="500.10" y="85.60" font-size="7.6" fill="#111">T3560</text>
<polyline points="534.9,89.4 500.8,89.4 497.8,92.4 497.8,125.0" fill="none" stroke="#2b98d8" stroke-width="3" stroke-linejoin="round"/>
<polyline points="546.9,100.0 546.9,125.0" fill="none" stroke="#2b98d8" stroke-width="3" stroke-linejoin="round"/>
<polygon points="543.40,81.80 550.40,81.80 552.90,86.30 559.40,88.50 559.40,90.30 552.90,92.30 548.90,100.30 544.90,100.30 540.90,92.30 534.40,90.30 534.40,88.50 540.90,86.30" fill="url(#turb)" stroke="#555" stroke-width="0.4" />
<circle cx="547.90" cy="96.30" r="2.00" fill="none" stroke="#ddd" stroke-width="0.6" />
<rect x="509.40" y="94.20" width="19.80" height="6.80" fill="#000"/>
<text x="528.20" y="99.90" font-size="5.8" fill="#fff" text-anchor="end">1.000</text>
<rect x="558.70" y="77.40" width="38.50" height="8.80" fill="#fde6bd" stroke="#555" stroke-width="0.5"/>
<text x="577.95" y="84.00" font-size="5.2" fill="#000" text-anchor="middle">Turbines</text>
<text x="573.60" y="93.10" font-size="4.6" fill="#000" text-anchor="middle" stroke="#000" stroke-width="0.12">ST3560</text>
<line x1="565.00" y1="94.10" x2="582.20" y2="94.10" stroke="#000" stroke-width="0.5" />
<polyline points="561.2,102.2 561.2,94.8 582.9,94.8" fill="none" stroke="#666" stroke-width="0.7" />
<polyline points="561.5,102.2 582.9,102.2 582.9,95.1" fill="none" stroke="#f4f4f4" stroke-width="0.6" />
<text x="581.70" y="100.50" font-size="6.0" fill="#111" text-anchor="end">3591</text>
<text x="584.40" y="100.50" font-size="6.0" fill="#18a0a8">Hz</text>
<text x="513.70" y="108.90" font-size="4.6" fill="#000" text-anchor="middle" stroke="#000" stroke-width="0.12">PT4560</text>
<line x1="505.10" y1="109.90" x2="522.30" y2="109.90" stroke="#000" stroke-width="0.5" />
<polyline points="501.3,118.2 501.3,110.6 523.1,110.6" fill="none" stroke="#666" stroke-width="0.7" />
<polyline points="501.6,118.2 523.1,118.2 523.1,110.9" fill="none" stroke="#f4f4f4" stroke-width="0.6" />
<text x="521.90" y="116.50" font-size="6.0" fill="#111" text-anchor="end">14.66</text>
<text x="524.60" y="116.50" font-size="6.0" fill="#18a0a8">bar</text>
<text x="563.70" y="108.90" font-size="4.6" fill="#000" text-anchor="middle" stroke="#000" stroke-width="0.12">PT4360</text>
<line x1="555.10" y1="109.90" x2="572.30" y2="109.90" stroke="#000" stroke-width="0.5" />
<polyline points="551.2,118.2 551.2,110.6 572.8,110.6" fill="none" stroke="#666" stroke-width="0.7" />
<polyline points="551.5,118.2 572.8,118.2 572.8,110.9" fill="none" stroke="#f4f4f4" stroke-width="0.6" />
<text x="571.60" y="116.50" font-size="6.0" fill="#111" text-anchor="end">1.331</text>
<text x="574.30" y="116.50" font-size="6.0" fill="#18a0a8">bar</text>
<rect x="769.95" y="76.75" width="114.00" height="45.30" fill="#dcdcdc" stroke="#000" stroke-width="1.5"/>
<text x="779.20" y="85.60" font-size="7.6" fill="#111">T3570</text>
<polyline points="819.7,89.4 778.8,89.4 775.8,92.4 775.8,125.0" fill="none" stroke="#2b98d8" stroke-width="3" stroke-linejoin="round"/>
<polyline points="831.7,100.0 831.7,125.0" fill="none" stroke="#2b98d8" stroke-width="3" stroke-linejoin="round"/>
<polygon points="828.20,81.80 835.20,81.80 837.70,86.30 844.20,88.50 844.20,90.30 837.70,92.30 833.70,100.30 829.70,100.30 825.70,92.30 819.20,90.30 819.20,88.50 825.70,86.30" fill="url(#turb)" stroke="#555" stroke-width="0.4" />
<circle cx="832.70" cy="96.30" r="2.00" fill="none" stroke="#ddd" stroke-width="0.6" />
<rect x="789.00" y="94.20" width="19.80" height="6.80" fill="#000"/>
<text x="807.80" y="99.90" font-size="5.8" fill="#fff" text-anchor="end">1.000</text>
<rect x="845.00" y="77.40" width="38.50" height="8.80" fill="#fde6bd" stroke="#555" stroke-width="0.5"/>
<text x="864.25" y="84.00" font-size="5.2" fill="#000" text-anchor="middle">Turbines</text>
<text x="860.50" y="93.10" font-size="4.6" fill="#000" text-anchor="middle" stroke="#000" stroke-width="0.12">ST3570</text>
<line x1="851.90" y1="94.10" x2="869.10" y2="94.10" stroke="#000" stroke-width="0.5" />
<polyline points="848.0,102.2 848.0,94.8 869.7,94.8" fill="none" stroke="#666" stroke-width="0.7" />
<polyline points="848.3,102.2 869.7,102.2 869.7,95.1" fill="none" stroke="#f4f4f4" stroke-width="0.6" />
<text x="868.50" y="100.50" font-size="6.0" fill="#111" text-anchor="end">1998</text>
<text x="871.20" y="100.50" font-size="6.0" fill="#18a0a8">Hz</text>
<text x="791.00" y="108.90" font-size="4.6" fill="#000" text-anchor="middle" stroke="#000" stroke-width="0.12">PT4570</text>
<line x1="782.40" y1="109.90" x2="799.60" y2="109.90" stroke="#000" stroke-width="0.5" />
<polyline points="777.9,118.2 777.9,110.6 799.7,110.6" fill="none" stroke="#666" stroke-width="0.7" />
<polyline points="778.2,118.2 799.7,118.2 799.7,110.9" fill="none" stroke="#f4f4f4" stroke-width="0.6" />
<text x="798.50" y="116.50" font-size="6.0" fill="#111" text-anchor="end">14.386</text>
<text x="801.20" y="116.50" font-size="6.0" fill="#18a0a8">bar</text>
<text x="848.00" y="108.90" font-size="4.6" fill="#000" text-anchor="middle" stroke="#000" stroke-width="0.12">PT4370</text>
<line x1="839.40" y1="109.90" x2="856.60" y2="109.90" stroke="#000" stroke-width="0.5" />
<polyline points="835.0,118.2 835.0,110.6 856.6,110.6" fill="none" stroke="#666" stroke-width="0.7" />
<polyline points="835.3,118.2 856.6,118.2 856.6,110.9" fill="none" stroke="#f4f4f4" stroke-width="0.6" />
<text x="855.40" y="116.50" font-size="6.0" fill="#111" text-anchor="end">1.344</text>
<text x="858.10" y="116.50" font-size="6.0" fill="#18a0a8">bar</text>
<rect x="894.75" y="76.75" width="109.10" height="45.30" fill="#dcdcdc" stroke="#000" stroke-width="1.5"/>
<text x="904.00" y="85.60" font-size="7.6" fill="#111">T3590</text>
<polyline points="938.0,89.4 903.2,89.4 900.2,92.4 900.2,125.0" fill="none" stroke="#2b98d8" stroke-width="3" stroke-linejoin="round"/>
<polyline points="950.0,100.0 950.0,125.0" fill="none" stroke="#2b98d8" stroke-width="3" stroke-linejoin="round"/>
<polygon points="946.50,81.80 953.50,81.80 956.00,86.30 962.50,88.50 962.50,90.30 956.00,92.30 952.00,100.30 948.00,100.30 944.00,92.30 937.50,90.30 937.50,88.50 944.00,86.30" fill="url(#turb)" stroke="#555" stroke-width="0.4" />
<circle cx="951.00" cy="96.30" r="2.00" fill="none" stroke="#ddd" stroke-width="0.6" />
<rect x="911.20" y="94.20" width="19.80" height="6.80" fill="#000"/>
<text x="930.00" y="99.90" font-size="5.8" fill="#fff" text-anchor="end">1.000</text>
<rect x="964.60" y="77.40" width="38.80" height="8.80" fill="#fde6bd" stroke="#555" stroke-width="0.5"/>
<text x="984.00" y="84.00" font-size="5.2" fill="#000" text-anchor="middle">Turbines</text>
<text x="981.00" y="93.10" font-size="4.6" fill="#000" text-anchor="middle" stroke="#000" stroke-width="0.12">ST3590</text>
<line x1="972.40" y1="94.10" x2="989.60" y2="94.10" stroke="#000" stroke-width="0.5" />
<polyline points="969.2,102.2 969.2,94.8 990.9,94.8" fill="none" stroke="#666" stroke-width="0.7" />
<polyline points="969.5,102.2 990.9,102.2 990.9,95.1" fill="none" stroke="#f4f4f4" stroke-width="0.6" />
<text x="989.70" y="100.50" font-size="6.0" fill="#111" text-anchor="end">1533</text>
<text x="992.40" y="100.50" font-size="6.0" fill="#18a0a8">Hz</text>
<text x="916.40" y="108.90" font-size="4.6" fill="#000" text-anchor="middle" stroke="#000" stroke-width="0.12">PT4590</text>
<line x1="907.80" y1="109.90" x2="925.00" y2="109.90" stroke="#000" stroke-width="0.5" />
<polyline points="904.0,118.2 904.0,110.6 925.8,110.6" fill="none" stroke="#666" stroke-width="0.7" />
<polyline points="904.3,118.2 925.8,118.2 925.8,110.9" fill="none" stroke="#f4f4f4" stroke-width="0.6" />
<text x="924.60" y="116.50" font-size="6.0" fill="#111" text-anchor="end">11.92</text>
<text x="927.30" y="116.50" font-size="6.0" fill="#18a0a8">bar</text>
<text x="966.00" y="108.90" font-size="4.6" fill="#000" text-anchor="middle" stroke="#000" stroke-width="0.12">PT4200</text>
<line x1="957.40" y1="109.90" x2="974.60" y2="109.90" stroke="#000" stroke-width="0.5" />
<polyline points="953.0,118.2 953.0,110.6 974.6,110.6" fill="none" stroke="#666" stroke-width="0.7" />
<polyline points="953.3,118.2 974.6,118.2 974.6,110.9" fill="none" stroke="#f4f4f4" stroke-width="0.6" />
<text x="973.40" y="116.50" font-size="6.0" fill="#111" text-anchor="end">3.146</text>
<text x="976.10" y="116.50" font-size="6.0" fill="#18a0a8">bar</text>
<polyline points="428.3,122.0 428.3,483.6" fill="none" stroke="#2b98d8" stroke-width="3" stroke-linejoin="round"/>
<text x="442.50" y="128.60" font-size="4.6" fill="#000" text-anchor="middle" stroke="#000" stroke-width="0.12">TT3330</text>
<line x1="433.90" y1="129.60" x2="451.10" y2="129.60" stroke="#000" stroke-width="0.5" />
<polyline points="432.5,138.3 432.5,130.3 453.0,130.3" fill="none" stroke="#666" stroke-width="0.7" />
<polyline points="432.8,138.3 453.0,138.3 453.0,130.6" fill="none" stroke="#f4f4f4" stroke-width="0.6" />
<text x="451.80" y="136.60" font-size="6.0" fill="#111" text-anchor="end">41.0</text>
<text x="454.50" y="136.60" font-size="6.0" fill="#18a0a8">K</text>
<polygon points="424.10,244.70 428.30,250.30 432.50,244.70" fill="#10b010" stroke="#063" stroke-width="0.6" />
<polygon points="424.10,255.90 428.30,250.30 432.50,255.90" fill="#10b010" stroke="#063" stroke-width="0.6" />
<line x1="428.30" y1="250.30" x2="434.30" y2="250.30" stroke="#000" stroke-width="0.6" />
<line x1="434.30" y1="248.30" x2="434.30" y2="252.30" stroke="#000" stroke-width="0.6" />
<text x="440.00" y="252.00" font-size="5.0" fill="#000">HV3339</text>
<polyline points="497.8,122.0 497.8,284.5 474.0,284.5 474.0,422.0" fill="none" stroke="#2b98d8" stroke-width="3" stroke-linejoin="round"/>
<polyline points="546.9,122.0 546.9,294.0 505.0,294.0 505.0,483.6" fill="none" stroke="#2b98d8" stroke-width="3" stroke-linejoin="round"/>
<text x="516.20" y="128.60" font-size="4.6" fill="#000" text-anchor="middle" stroke="#000" stroke-width="0.12">TT3560</text>
<line x1="507.60" y1="129.60" x2="524.80" y2="129.60" stroke="#000" stroke-width="0.5" />
<polyline points="506.2,138.3 506.2,130.3 528.2,130.3" fill="none" stroke="#666" stroke-width="0.7" />
<polyline points="506.5,138.3 528.2,138.3 528.2,130.6" fill="none" stroke="#f4f4f4" stroke-width="0.6" />
<text x="527.00" y="136.60" font-size="6.0" fill="#111" text-anchor="end">30.0</text>
<text x="529.70" y="136.60" font-size="6.0" fill="#18a0a8">K</text>
<text x="565.30" y="128.60" font-size="4.6" fill="#000" text-anchor="middle" stroke="#000" stroke-width="0.12">TT3360</text>
<line x1="556.70" y1="129.60" x2="573.90" y2="129.60" stroke="#000" stroke-width="0.5" />
<polyline points="555.3,138.3 555.3,130.3 577.8,130.3" fill="none" stroke="#666" stroke-width="0.7" />
<polyline points="555.6,138.3 577.8,138.3 577.8,130.6" fill="none" stroke="#f4f4f4" stroke-width="0.6" />
<text x="576.60" y="136.60" font-size="6.0" fill="#111" text-anchor="end">10.1</text>
<text x="579.30" y="136.60" font-size="6.0" fill="#18a0a8">K</text>
<polygon points="504.30,155.60 507.20,159.40 510.10,155.60" fill="#10b010" stroke="#063" stroke-width="0.6" />
<polygon points="504.30,163.20 507.20,159.40 510.10,163.20" fill="#fff" stroke="#063" stroke-width="0.6" />
<line x1="507.20" y1="159.40" x2="511.20" y2="159.40" stroke="#000" stroke-width="0.5" />
<rect x="510.80" y="156.20" width="1.80" height="6.40" fill="#2038d8"/>
<text x="513.50" y="160.80" font-size="3.4" fill="#000">BV3560</text>
<line x1="497.80" y1="183.00" x2="504.30" y2="183.00" stroke="#000" stroke-width="0.8" />
<path d="M504.10,176.60 a6.2,6.4 0 0 1 0,12.8 z" fill="url(#domeb)" stroke="#334" stroke-width="0.4" />
<polygon points="493.50,176.70 497.80,183.00 502.10,176.70" fill="#10b010" stroke="#063" stroke-width="0.6" />
<polygon points="493.50,189.30 497.80,183.00 502.10,189.30" fill="#10b010" stroke="#063" stroke-width="0.6" />
<text x="510.00" y="179.00" font-size="5.6" fill="#000">CV3560</text>
<polyline points="514.5,191.5 514.5,183.5 532.1,183.5" fill="none" stroke="#666" stroke-width="0.7" />
<polyline points="514.8,191.5 532.1,191.5 532.1,183.8" fill="none" stroke="#f4f4f4" stroke-width="0.6" />
<text x="530.90" y="189.80" font-size="6.0" fill="#111" text-anchor="end">91.0</text>
<text x="533.60" y="189.80" font-size="6.0" fill="#18a0a8">%</text>
<rect x="502.50" y="190.50" width="4.50" height="4.50" fill="#4a7a4a" stroke="#222" stroke-width="0.4"/>
<polygon points="542.70,244.70 546.90,250.30 551.10,244.70" fill="#10b010" stroke="#063" stroke-width="0.6" />
<polygon points="542.70,255.90 546.90,250.30 551.10,255.90" fill="#10b010" stroke="#063" stroke-width="0.6" />
<line x1="546.90" y1="250.30" x2="552.90" y2="250.30" stroke="#000" stroke-width="0.6" />
<line x1="552.90" y1="248.30" x2="552.90" y2="252.30" stroke="#000" stroke-width="0.6" />
<text x="558.50" y="252.00" font-size="5.0" fill="#000">HV3369</text>
<text x="538.00" y="243.00" font-size="3.6" fill="#18a0a8">H</text>
<circle cx="539.80" cy="245.50" r="1.60" fill="#20c020" stroke="#063" stroke-width="0.3" />
<text x="635.50" y="131.10" font-size="4.6" fill="#000" text-anchor="middle" stroke="#000" stroke-width="0.12">TT3540</text>
<line x1="626.90" y1="132.10" x2="644.10" y2="132.10" stroke="#000" stroke-width="0.5" />
<polyline points="625.5,140.8 625.5,132.8 646.0,132.8" fill="none" stroke="#666" stroke-width="0.7" />
<polyline points="625.8,140.8 646.0,140.8 646.0,133.1" fill="none" stroke="#f4f4f4" stroke-width="0.6" />
<text x="644.80" y="139.10" font-size="6.0" fill="#111" text-anchor="end">253.5</text>
<text x="647.50" y="139.10" font-size="6.0" fill="#18a0a8">K</text>
<text x="635.50" y="147.70" font-size="4.6" fill="#000" text-anchor="middle" stroke="#000" stroke-width="0.12">PT4540</text>
<line x1="626.90" y1="148.70" x2="644.10" y2="148.70" stroke="#000" stroke-width="0.5" />
<polyline points="625.5,157.4 625.5,149.4 646.0,149.4" fill="none" stroke="#666" stroke-width="0.7" />
<polyline points="625.8,157.4 646.0,157.4 646.0,149.7" fill="none" stroke="#f4f4f4" stroke-width="0.6" />
<text x="644.80" y="155.70" font-size="6.0" fill="#111" text-anchor="end">1.19</text>
<text x="647.50" y="155.70" font-size="6.0" fill="#18a0a8">bar</text>
<text x="703.20" y="147.70" font-size="4.6" fill="#000" text-anchor="middle" stroke="#000" stroke-width="0.12">PT4549</text>
<line x1="694.60" y1="148.70" x2="711.80" y2="148.70" stroke="#000" stroke-width="0.5" />
<polyline points="692.2,157.4 692.2,149.4 713.2,149.4" fill="none" stroke="#666" stroke-width="0.7" />
<polyline points="692.5,157.4 713.2,157.4 713.2,149.7" fill="none" stroke="#f4f4f4" stroke-width="0.6" />
<text x="712.00" y="155.70" font-size="6.0" fill="#111" text-anchor="end">14.88</text>
<text x="714.70" y="155.70" font-size="6.0" fill="#18a0a8">bar</text>
<polyline points="623.0,203.0 623.0,212.4" fill="none" stroke="#2b98d8" stroke-width="1.5" stroke-linejoin="round"/>
<line x1="623.00" y1="196.50" x2="629.50" y2="196.50" stroke="#000" stroke-width="0.8" />
<path d="M629.30,190.10 a6.2,6.4 0 0 1 0,12.8 z" fill="url(#domeb)" stroke="#334" stroke-width="0.4" />
<polygon points="618.70,190.20 623.00,196.50 627.30,190.20" fill="#fff" stroke="#222" stroke-width="0.6" />
<polygon points="618.70,202.80 623.00,196.50 627.30,202.80" fill="#fff" stroke="#222" stroke-width="0.6" />
<text x="636.00" y="193.00" font-size="5.6" fill="#000">CV3540</text>
<polyline points="642.0,206.5 642.0,198.5 656.0,198.5" fill="none" stroke="#666" stroke-width="0.7" />
<polyline points="642.3,206.5 656.0,206.5 656.0,198.8" fill="none" stroke="#f4f4f4" stroke-width="0.6" />
<text x="654.80" y="204.80" font-size="6.0" fill="#111" text-anchor="end">0.0</text>
<text x="657.50" y="204.80" font-size="6.0" fill="#18a0a8">%</text>
<text x="571.30" y="201.30" font-size="4.6" fill="#000" text-anchor="middle" stroke="#000" stroke-width="0.12">TT3541</text>
<line x1="562.70" y1="202.30" x2="579.90" y2="202.30" stroke="#000" stroke-width="0.5" />
<polyline points="559.3,211.0 559.3,203.0 580.4,203.0" fill="none" stroke="#666" stroke-width="0.7" />
<polyline points="559.6,211.0 580.4,211.0 580.4,203.3" fill="none" stroke="#f4f4f4" stroke-width="0.6" />
<text x="579.20" y="209.30" font-size="6.0" fill="#111" text-anchor="end">75.0</text>
<text x="581.90" y="209.30" font-size="6.0" fill="#18a0a8">K</text>
<text x="571.40" y="220.30" font-size="4.6" fill="#000" text-anchor="middle" stroke="#000" stroke-width="0.12">PT4541</text>
<line x1="562.80" y1="221.30" x2="580.00" y2="221.30" stroke="#000" stroke-width="0.5" />
<polyline points="562.8,230.0 562.8,222.0 580.4,222.0" fill="none" stroke="#666" stroke-width="0.7" />
<polyline points="563.1,230.0 580.4,230.0 580.4,222.3" fill="none" stroke="#f4f4f4" stroke-width="0.6" />
<text x="579.20" y="228.30" font-size="6.0" fill="#111" text-anchor="end">14.25</text>
<text x="581.90" y="228.30" font-size="6.0" fill="#18a0a8">bar</text>
<polyline points="601.4,212.4 601.4,279.2 690.6,279.2" fill="none" stroke="#2b98d8" stroke-width="1.6" stroke-linejoin="round"/>
<rect x="595.40" y="237.00" width="10.60" height="26.40" fill="#30b030" stroke="#175" stroke-width="0.4"/>
<rect x="596.60" y="237.00" width="8.20" height="26.40" fill="#f8e8e8"/>
<polyline points="596.9,238.0 604.5,241.5 596.9,245.0 604.5,248.5 596.9,251.9 604.5,255.4 596.9,258.9 604.5,262.4" fill="none" stroke="#e01010" stroke-width="1.0" />
<text x="608.80" y="251.50" font-size="6.4" fill="#000">EH3545</text>
<rect x="609.00" y="237.50" width="4.60" height="4.60" fill="#1010d0" stroke="#000" stroke-width="0.3"/>
<circle cx="626.00" cy="233.60" r="1.60" fill="#20c020" stroke="#063" stroke-width="0.3" />
<text x="629.00" y="234.80" font-size="3.4" fill="#000">Enable</text>
<circle cx="626.00" cy="240.60" r="1.60" fill="#20c020" stroke="#063" stroke-width="0.3" />
<text x="629.00" y="241.80" font-size="3.4" fill="#000">TSH</text>
<polyline points="608.8,262.6 608.8,254.6 625.4,254.6" fill="none" stroke="#666" stroke-width="0.7" />
<polyline points="609.1,262.6 625.4,262.6 625.4,254.9" fill="none" stroke="#f4f4f4" stroke-width="0.6" />
<text x="624.20" y="260.90" font-size="6.0" fill="#111" text-anchor="end">39.0</text>
<text x="626.90" y="260.90" font-size="6.0" fill="#18a0a8">%</text>
<polyline points="608.8,273.0 608.8,265.0 625.4,265.0" fill="none" stroke="#666" stroke-width="0.7" />
<polyline points="609.1,273.0 625.4,273.0 625.4,265.3" fill="none" stroke="#f4f4f4" stroke-width="0.6" />
<text x="624.20" y="271.30" font-size="6.0" fill="#10a010" text-anchor="end">4.50</text>
<text x="627.00" y="271.10" font-size="5.6" fill="#10a010">KW</text>
<line x1="651.80" y1="279.20" x2="651.80" y2="272.20" stroke="#000" stroke-width="0.8" />
<path d="M645.40,272.30 a6.4,6.1 0 0 1 12.8,0 z" fill="url(#domeb)" stroke="#334" stroke-width="0.4" />
<polygon points="645.50,274.90 651.80,279.20 645.50,283.50" fill="#10b010" stroke="#063" stroke-width="0.6" />
<polygon points="658.10,274.90 651.80,279.20 658.10,283.50" fill="#10b010" stroke="#063" stroke-width="0.6" />
<text x="651.50" y="265.20" font-size="5.6" fill="#000" text-anchor="middle">CV3545</text>
<polyline points="643.7,297.8 643.7,289.8 660.7,289.8" fill="none" stroke="#666" stroke-width="0.7" />
<polyline points="644.0,297.8 660.7,297.8 660.7,290.1" fill="none" stroke="#f4f4f4" stroke-width="0.6" />
<text x="659.50" y="296.10" font-size="6.0" fill="#111" text-anchor="end">65.4</text>
<text x="662.20" y="296.10" font-size="6.0" fill="#18a0a8">%</text>
<polygon points="645.50,274.90 651.80,279.20 645.50,283.50" fill="#10b010" stroke="#063" stroke-width="0.6" />
<polygon points="658.10,274.90 651.80,279.20 658.10,283.50" fill="#fff" stroke="#063" stroke-width="0.6" />
<rect x="660.00" y="267.50" width="4.60" height="4.60" fill="#4a7a4a" stroke="#222" stroke-width="0.4"/>
<circle cx="643.50" cy="286.00" r="1.30" fill="#444" />
<line x1="690.60" y1="305.60" x2="697.10" y2="305.60" stroke="#000" stroke-width="0.8" />
<path d="M696.90,299.20 a6.2,6.4 0 0 1 0,12.8 z" fill="url(#domeb)" stroke="#334" stroke-width="0.4" />
<polygon points="686.30,299.30 690.60,305.60 694.90,299.30" fill="#10b010" stroke="#063" stroke-width="0.6" />
<polygon points="686.30,311.90 690.60,305.60 694.90,311.90" fill="#10b010" stroke="#063" stroke-width="0.6" />
<text x="703.50" y="302.00" font-size="5.6" fill="#000">CV3549</text>
<polyline points="704.0,314.5 704.0,306.5 722.0,306.5" fill="none" stroke="#666" stroke-width="0.7" />
<polyline points="704.3,314.5 722.0,314.5 722.0,306.8" fill="none" stroke="#f4f4f4" stroke-width="0.6" />
<text x="720.80" y="312.80" font-size="6.0" fill="#111" text-anchor="end">100.0</text>
<text x="723.50" y="312.80" font-size="6.0" fill="#18a0a8">%</text>
<text x="558.40" y="310.90" font-size="4.6" fill="#000" text-anchor="middle" stroke="#000" stroke-width="0.12">PT4548</text>
<line x1="549.80" y1="311.90" x2="567.00" y2="311.90" stroke="#000" stroke-width="0.5" />
<polyline points="546.9,320.6 546.9,312.6 568.9,312.6" fill="none" stroke="#666" stroke-width="0.7" />
<polyline points="547.2,320.6 568.9,320.6 568.9,312.9" fill="none" stroke="#f4f4f4" stroke-width="0.6" />
<text x="567.70" y="318.90" font-size="6.0" fill="#111" text-anchor="end">14.08</text>
<text x="570.40" y="318.90" font-size="6.0" fill="#18a0a8">bar</text>
<text x="599.80" y="310.90" font-size="4.6" fill="#000" text-anchor="middle" stroke="#000" stroke-width="0.12">TT3548</text>
<line x1="591.20" y1="311.90" x2="608.40" y2="311.90" stroke="#000" stroke-width="0.5" />
<polyline points="587.3,320.6 587.3,312.6 609.3,312.6" fill="none" stroke="#666" stroke-width="0.7" />
<polyline points="587.6,320.6 609.3,320.6 609.3,312.9" fill="none" stroke="#f4f4f4" stroke-width="0.6" />
<text x="608.10" y="318.90" font-size="6.0" fill="#111" text-anchor="end">40.0</text>
<text x="610.80" y="318.90" font-size="6.0" fill="#18a0a8">K</text>
<polyline points="449.4,323.2 449.4,422.0" fill="none" stroke="#2b98d8" stroke-width="1.4" stroke-linejoin="round"/>
<polygon points="449.40,414.00 446.80,418.50 452.00,418.50" fill="#000" />
<polyline points="562.0,422.0 562.0,353.0 708.2,353.0 708.2,422.0" fill="none" stroke="#2b98d8" stroke-width="2" stroke-linejoin="round"/>
<line x1="576.00" y1="353.00" x2="576.00" y2="346.00" stroke="#000" stroke-width="0.8" />
<path d="M569.60,346.10 a6.4,6.1 0 0 1 12.8,0 z" fill="url(#domeb)" stroke="#334" stroke-width="0.4" />
<polygon points="569.70,348.70 576.00,353.00 569.70,357.30" fill="#10b010" stroke="#063" stroke-width="0.6" />
<polygon points="582.30,348.70 576.00,353.00 582.30,357.30" fill="#10b010" stroke="#063" stroke-width="0.6" />
<text x="576.00" y="338.20" font-size="5.6" fill="#000" text-anchor="middle">CV3555</text>
<polyline points="567.3,370.6 567.3,362.6 585.0,362.6" fill="none" stroke="#666" stroke-width="0.7" />
<polyline points="567.6,370.6 585.0,370.6 585.0,362.9" fill="none" stroke="#f4f4f4" stroke-width="0.6" />
<text x="583.80" y="368.90" font-size="6.0" fill="#111" text-anchor="end">100.0</text>
<text x="586.50" y="368.90" font-size="6.0" fill="#18a0a8">%</text>
<circle cx="567.50" cy="359.60" r="1.30" fill="#444" />
<rect x="597.20" y="356.60" width="88.80" height="9.90" fill="#fde6bd" stroke="#555" stroke-width="0.8"/>
<text x="641.60" y="363.45" font-size="5.2" fill="#000" text-anchor="middle">Regeneration skid</text>
<polyline points="604.4,374.0 604.4,422.0" fill="none" stroke="#2b98d8" stroke-width="1.6" stroke-linejoin="round"/>
<polyline points="679.0,374.0 679.0,422.0" fill="none" stroke="#2b98d8" stroke-width="1.6" stroke-linejoin="round"/>
<polygon points="604.40,374.60 599.80,367.20 609.00,367.20" fill="#000" />
<polygon points="679.00,367.40 674.40,374.80 683.60,374.80" fill="#000" />
<line x1="576.90" y1="422.00" x2="576.90" y2="415.00" stroke="#000" stroke-width="0.8" />
<path d="M570.50,415.10 a6.4,6.1 0 0 1 12.8,0 z" fill="url(#domeb)" stroke="#334" stroke-width="0.4" />
<polygon points="570.60,417.70 576.90,422.00 570.60,426.30" fill="#fff" stroke="#222" stroke-width="0.6" />
<polygon points="583.20,417.70 576.90,422.00 583.20,426.30" fill="#fff" stroke="#222" stroke-width="0.6" />
<text x="576.50" y="407.70" font-size="5.6" fill="#000" text-anchor="middle">CV3553</text>
<polyline points="567.8,440.0 567.8,432.0 584.4,432.0" fill="none" stroke="#666" stroke-width="0.7" />
<polyline points="568.1,440.0 584.4,440.0 584.4,432.3" fill="none" stroke="#f4f4f4" stroke-width="0.6" />
<text x="583.20" y="438.30" font-size="6.0" fill="#111" text-anchor="end">0.0</text>
<text x="585.90" y="438.30" font-size="6.0" fill="#18a0a8">%</text>
<text x="560.50" y="431.00" font-size="4" fill="#18a0a8">L</text>
<circle cx="564.60" cy="429.60" r="1.60" fill="#20c020" stroke="#063" stroke-width="0.3" />
<line x1="694.20" y1="422.00" x2="694.20" y2="415.00" stroke="#000" stroke-width="0.8" />
<path d="M687.80,415.10 a6.4,6.1 0 0 1 12.8,0 z" fill="url(#domeb)" stroke="#334" stroke-width="0.4" />
<polygon points="687.90,417.70 694.20,422.00 687.90,426.30" fill="#fff" stroke="#222" stroke-width="0.6" />
<polygon points="700.50,417.70 694.20,422.00 700.50,426.30" fill="#fff" stroke="#222" stroke-width="0.6" />
<text x="694.00" y="407.70" font-size="5.6" fill="#000" text-anchor="middle">CV3559</text>
<polyline points="685.6,440.0 685.6,432.0 701.1,432.0" fill="none" stroke="#666" stroke-width="0.7" />
<polyline points="685.9,440.0 701.1,440.0 701.1,432.3" fill="none" stroke="#f4f4f4" stroke-width="0.6" />
<text x="699.90" y="438.30" font-size="6.0" fill="#111" text-anchor="end">0.0</text>
<text x="702.60" y="438.30" font-size="6.0" fill="#18a0a8">%</text>
<text x="678.50" y="431.00" font-size="4" fill="#18a0a8">L</text>
<circle cx="682.60" cy="429.60" r="1.60" fill="#20c020" stroke="#063" stroke-width="0.3" />
<rect x="616.50" y="408.00" width="17.50" height="38.50" fill="url(#metal)" stroke="#333" stroke-width="0.5" rx="4"/>
<rect x="618.50" y="414.00" width="13.50" height="26.50" fill="#000"/>
<text x="625.30" y="424.00" font-size="4.3" fill="#fff" text-anchor="middle" font-weight="bold">A3550</text>
<polyline points="636.5,422.0 636.5,386.5" fill="none" stroke="#555" stroke-width="0.6" stroke-dasharray="1 1"/>
<text x="643.00" y="387.20" font-size="4.6" fill="#000" text-anchor="middle" font-weight="bold">PT4550</text>
<line x1="634.00" y1="388.20" x2="652.00" y2="388.20" stroke="#000" stroke-width="0.5" />
<polyline points="634.0,397.4 634.0,389.4 653.0,389.4" fill="none" stroke="#666" stroke-width="0.7" />
<text x="652.60" y="395.80" font-size="5.6" fill="#222" text-anchor="end">14.889</text>
<text x="654.60" y="395.80" font-size="5.6" fill="#18a0a8">bar</text>
<polyline points="644.0,422.0 644.0,417.0" fill="none" stroke="#555" stroke-width="0.6" stroke-dasharray="1 1"/>
<text x="653.50" y="406.30" font-size="4.6" fill="#000" text-anchor="middle" stroke="#000" stroke-width="0.12">PDT4551</text>
<line x1="643.55" y1="407.30" x2="663.45" y2="407.30" stroke="#000" stroke-width="0.5" />
<polyline points="644.5,416.0 644.5,408.0 665.5,408.0" fill="none" stroke="#666" stroke-width="0.7" />
<polyline points="644.8,416.0 665.5,416.0 665.5,408.3" fill="none" stroke="#f4f4f4" stroke-width="0.6" />
<text x="664.30" y="414.30" font-size="6.0" fill="#111" text-anchor="end">0.8</text>
<text x="667.00" y="414.30" font-size="6.0" fill="#18a0a8">mbar</text>
<polygon points="652.80,422.00 658.00,416.80 663.20,422.00 658.00,427.20" fill="#fff" stroke="#888" stroke-width="0.7" />
<line x1="658.00" y1="417.00" x2="658.00" y2="427.00" stroke="#999" stroke-width="0.5" />
<text x="649.50" y="437.80" font-size="4.6" fill="#000" text-anchor="middle" stroke="#000" stroke-width="0.12">TT3550</text>
<line x1="640.90" y1="438.80" x2="658.10" y2="438.80" stroke="#000" stroke-width="0.5" />
<polyline points="639.5,447.5 639.5,439.5 659.1,439.5" fill="none" stroke="#666" stroke-width="0.7" />
<polyline points="639.8,447.5 659.1,447.5 659.1,439.8" fill="none" stroke="#f4f4f4" stroke-width="0.6" />
<text x="657.90" y="445.80" font-size="6.0" fill="#111" text-anchor="end">278.5</text>
<text x="660.60" y="445.80" font-size="6.0" fill="#18a0a8">K</text>
<text x="528.70" y="409.80" font-size="4.6" fill="#000" text-anchor="middle" stroke="#000" stroke-width="0.12">TT3546</text>
<line x1="520.10" y1="410.80" x2="537.30" y2="410.80" stroke="#000" stroke-width="0.5" />
<polyline points="516.2,419.5 516.2,411.5 537.8,411.5" fill="none" stroke="#666" stroke-width="0.7" />
<polyline points="516.5,419.5 537.8,419.5 537.8,411.8" fill="none" stroke="#f4f4f4" stroke-width="0.6" />
<text x="536.60" y="417.80" font-size="6.0" fill="#111" text-anchor="end">18.1</text>
<text x="539.30" y="417.80" font-size="6.0" fill="#18a0a8">K</text>
<line x1="530.30" y1="424.00" x2="530.30" y2="466.00" stroke="#444" stroke-width="0.6" stroke-dasharray="1 1.2"/>
<rect x="525.00" y="441.00" width="11.00" height="8.00" fill="#fff"/>
<text x="530.30" y="447.50" font-size="5.4" fill="#000" text-anchor="middle">0.1</text>
<text x="528.70" y="470.80" font-size="4.6" fill="#000" text-anchor="middle" stroke="#000" stroke-width="0.12">TT3204</text>
<line x1="520.10" y1="471.80" x2="537.30" y2="471.80" stroke="#000" stroke-width="0.5" />
<polyline points="516.2,480.5 516.2,472.5 537.8,472.5" fill="none" stroke="#666" stroke-width="0.7" />
<polyline points="516.5,480.5 537.8,480.5 537.8,472.8" fill="none" stroke="#f4f4f4" stroke-width="0.6" />
<text x="536.60" y="478.80" font-size="6.0" fill="#111" text-anchor="end">18.1</text>
<text x="539.30" y="478.80" font-size="6.0" fill="#18a0a8">K</text>
<text x="727.20" y="409.80" font-size="4.6" fill="#000" text-anchor="middle" stroke="#000" stroke-width="0.12">TT3559</text>
<line x1="718.60" y1="410.80" x2="735.80" y2="410.80" stroke="#000" stroke-width="0.5" />
<polyline points="715.7,419.5 715.7,411.5 736.8,411.5" fill="none" stroke="#666" stroke-width="0.7" />
<polyline points="716.0,419.5 736.8,419.5 736.8,411.8" fill="none" stroke="#f4f4f4" stroke-width="0.6" />
<text x="735.60" y="417.80" font-size="6.0" fill="#111" text-anchor="end">19.1</text>
<text x="738.30" y="417.80" font-size="6.0" fill="#18a0a8">K</text>
<text x="727.20" y="428.80" font-size="4.6" fill="#000" text-anchor="middle" stroke="#000" stroke-width="0.12">PT4559</text>
<line x1="718.60" y1="429.80" x2="735.80" y2="429.80" stroke="#000" stroke-width="0.5" />
<polyline points="716.7,438.5 716.7,430.5 736.8,430.5" fill="none" stroke="#666" stroke-width="0.7" />
<polyline points="717.0,438.5 736.8,438.5 736.8,430.8" fill="none" stroke="#f4f4f4" stroke-width="0.6" />
<text x="735.60" y="436.80" font-size="6.0" fill="#111" text-anchor="end">14.715</text>
<text x="738.30" y="436.80" font-size="6.0" fill="#18a0a8">bar</text>
<line x1="738.00" y1="414.50" x2="744.00" y2="414.50" stroke="#444" stroke-width="0.5" />
<line x1="738.00" y1="434.00" x2="744.00" y2="434.00" stroke="#444" stroke-width="0.5" />
<polyline points="775.8,122.0 775.8,422.0" fill="none" stroke="#2b98d8" stroke-width="3" stroke-linejoin="round"/>
<polyline points="831.7,122.0 831.7,483.6" fill="none" stroke="#2b98d8" stroke-width="2.8" stroke-linejoin="round"/>
<text x="794.40" y="128.60" font-size="4.6" fill="#000" text-anchor="middle" stroke="#000" stroke-width="0.12">TT3570</text>
<line x1="785.80" y1="129.60" x2="803.00" y2="129.60" stroke="#000" stroke-width="0.5" />
<polyline points="783.4,138.3 783.4,130.3 805.9,130.3" fill="none" stroke="#666" stroke-width="0.7" />
<polyline points="783.7,138.3 805.9,138.3 805.9,130.6" fill="none" stroke="#f4f4f4" stroke-width="0.6" />
<text x="804.70" y="136.60" font-size="6.0" fill="#111" text-anchor="end">16.0</text>
<text x="807.40" y="136.60" font-size="6.0" fill="#18a0a8">K</text>
<text x="849.00" y="128.60" font-size="4.6" fill="#000" text-anchor="middle" stroke="#000" stroke-width="0.12">TT3370</text>
<line x1="840.40" y1="129.60" x2="857.60" y2="129.60" stroke="#000" stroke-width="0.5" />
<polyline points="837.0,138.3 837.0,130.3 857.0,130.3" fill="none" stroke="#666" stroke-width="0.7" />
<polyline points="837.3,138.3 857.0,138.3 857.0,130.6" fill="none" stroke="#f4f4f4" stroke-width="0.6" />
<text x="855.80" y="136.60" font-size="6.0" fill="#111" text-anchor="end">8.1</text>
<text x="858.50" y="136.60" font-size="6.0" fill="#18a0a8">K</text>
<polygon points="782.00,155.60 784.90,159.40 787.80,155.60" fill="#10b010" stroke="#063" stroke-width="0.6" />
<polygon points="782.00,163.20 784.90,159.40 787.80,163.20" fill="#fff" stroke="#063" stroke-width="0.6" />
<line x1="784.90" y1="159.40" x2="788.90" y2="159.40" stroke="#000" stroke-width="0.5" />
<rect x="788.50" y="156.20" width="1.80" height="6.40" fill="#2038d8"/>
<text x="791.00" y="160.80" font-size="3.4" fill="#000">BV3570</text>
<line x1="775.80" y1="183.00" x2="782.30" y2="183.00" stroke="#000" stroke-width="0.8" />
<path d="M782.10,176.60 a6.2,6.4 0 0 1 0,12.8 z" fill="url(#domeb)" stroke="#334" stroke-width="0.4" />
<polygon points="771.50,176.70 775.80,183.00 780.10,176.70" fill="#10b010" stroke="#063" stroke-width="0.6" />
<polygon points="771.50,189.30 775.80,183.00 780.10,189.30" fill="#10b010" stroke="#063" stroke-width="0.6" />
<text x="788.00" y="179.00" font-size="5.6" fill="#000">CV3570</text>
<polyline points="791.0,191.5 791.0,183.5 808.4,183.5" fill="none" stroke="#666" stroke-width="0.7" />
<polyline points="791.3,191.5 808.4,191.5 808.4,183.8" fill="none" stroke="#f4f4f4" stroke-width="0.6" />
<text x="807.20" y="189.80" font-size="6.0" fill="#111" text-anchor="end">67.8</text>
<text x="809.90" y="189.80" font-size="6.0" fill="#18a0a8">%</text>
<rect x="780.50" y="190.50" width="4.50" height="4.50" fill="#4a7a4a" stroke="#222" stroke-width="0.4"/>
<polygon points="827.50,244.70 831.70,250.30 835.90,244.70" fill="#10b010" stroke="#063" stroke-width="0.6" />
<polygon points="827.50,255.90 831.70,250.30 835.90,255.90" fill="#10b010" stroke="#063" stroke-width="0.6" />
<line x1="831.70" y1="250.30" x2="837.70" y2="250.30" stroke="#000" stroke-width="0.6" />
<line x1="837.70" y1="248.30" x2="837.70" y2="252.30" stroke="#000" stroke-width="0.6" />
<text x="843.00" y="252.00" font-size="5.0" fill="#000">HV3379</text>
<text x="823.00" y="243.00" font-size="3.6" fill="#18a0a8">H</text>
<circle cx="824.80" cy="245.50" r="1.60" fill="#20c020" stroke="#063" stroke-width="0.3" />
<polyline points="430.0,629.4 537.8,629.4 537.8,549.2 1231.0,549.2" fill="none" stroke="#2b98d8" stroke-width="3" stroke-linejoin="round"/>
<polyline points="560.0,574.3 602.0,574.3 602.0,599.3 711.0,599.3" fill="none" stroke="#2b98d8" stroke-width="3" stroke-linejoin="round"/>
<polyline points="764.0,599.3 1231.0,599.3" fill="none" stroke="#2b98d8" stroke-width="3" stroke-linejoin="round"/>
<line x1="439.00" y1="483.60" x2="439.00" y2="570.50" stroke="#2b98d8" stroke-width="1.4" />
<line x1="439.00" y1="578.50" x2="439.00" y2="629.40" stroke="#2b98d8" stroke-width="1.4" />
<line x1="437.00" y1="570.50" x2="441.00" y2="570.50" stroke="#2b98d8" stroke-width="0.8" />
<line x1="437.00" y1="578.50" x2="441.00" y2="578.50" stroke="#2b98d8" stroke-width="0.8" />
<line x1="439.00" y1="605.40" x2="445.50" y2="605.40" stroke="#000" stroke-width="0.8" />
<path d="M445.30,599.00 a6.2,6.4 0 0 1 0,12.8 z" fill="url(#domeb)" stroke="#334" stroke-width="0.4" />
<polygon points="434.70,599.10 439.00,605.40 443.30,599.10" fill="#fff" stroke="#222" stroke-width="0.6" />
<polygon points="434.70,611.70 439.00,605.40 443.30,611.70" fill="#fff" stroke="#222" stroke-width="0.6" />
<text x="452.30" y="601.00" font-size="5.6" fill="#000">CV3435</text>
<polyline points="454.0,614.4 454.0,606.4 471.6,606.4" fill="none" stroke="#666" stroke-width="0.7" />
<polyline points="454.3,614.4 471.6,614.4 471.6,606.7" fill="none" stroke="#f4f4f4" stroke-width="0.6" />
<text x="470.40" y="612.70" font-size="6.0" fill="#111" text-anchor="end">0.0</text>
<text x="473.10" y="612.70" font-size="6.0" fill="#18a0a8">%</text>
<line x1="627.00" y1="483.60" x2="627.00" y2="545.00" stroke="#2b98d8" stroke-width="1.4" />
<line x1="627.00" y1="553.00" x2="627.00" y2="595.50" stroke="#2b98d8" stroke-width="1.4" />
<line x1="627.00" y1="603.00" x2="627.00" y2="661.50" stroke="#2b98d8" stroke-width="1.4" />
<line x1="625.00" y1="545.00" x2="629.00" y2="545.00" stroke="#2b98d8" stroke-width="0.8" />
<line x1="625.00" y1="553.00" x2="629.00" y2="553.00" stroke="#2b98d8" stroke-width="0.8" />
<line x1="625.00" y1="595.50" x2="629.00" y2="595.50" stroke="#2b98d8" stroke-width="0.8" />
<line x1="625.00" y1="603.00" x2="629.00" y2="603.00" stroke="#2b98d8" stroke-width="0.8" />
<line x1="627.00" y1="638.00" x2="633.50" y2="638.00" stroke="#000" stroke-width="0.8" />
<path d="M633.30,631.60 a6.2,6.4 0 0 1 0,12.8 z" fill="url(#domeb)" stroke="#334" stroke-width="0.4" />
<polygon points="622.70,631.70 627.00,638.00 631.30,631.70" fill="#fff" stroke="#222" stroke-width="0.6" />
<polygon points="622.70,644.30 627.00,638.00 631.30,644.30" fill="#fff" stroke="#222" stroke-width="0.6" />
<text x="639.50" y="634.80" font-size="5.6" fill="#000">CV3303</text>
<polyline points="642.0,647.4 642.0,639.4 658.0,639.4" fill="none" stroke="#666" stroke-width="0.7" />
<polyline points="642.3,647.4 658.0,647.4 658.0,639.7" fill="none" stroke="#f4f4f4" stroke-width="0.6" />
<text x="656.80" y="645.70" font-size="6.0" fill="#111" text-anchor="end">0.0</text>
<text x="659.50" y="645.70" font-size="6.0" fill="#18a0a8">%</text>
<polygon points="627.00,655.50 624.40,660.00 629.60,660.00" fill="#000" />
<line x1="650.50" y1="599.30" x2="650.50" y2="592.30" stroke="#000" stroke-width="0.8" />
<path d="M644.10,592.40 a6.4,6.1 0 0 1 12.8,0 z" fill="url(#domeb)" stroke="#334" stroke-width="0.4" />
<polygon points="644.20,595.00 650.50,599.30 644.20,603.60" fill="#10b010" stroke="#063" stroke-width="0.6" />
<polygon points="656.80,595.00 650.50,599.30 656.80,603.60" fill="#10b010" stroke="#063" stroke-width="0.6" />
<text x="650.50" y="584.20" font-size="5.6" fill="#000" text-anchor="middle">CV3239</text>
<polyline points="643.0,617.0 643.0,609.0 659.6,609.0" fill="none" stroke="#666" stroke-width="0.7" />
<polyline points="643.3,617.0 659.6,617.0 659.6,609.3" fill="none" stroke="#f4f4f4" stroke-width="0.6" />
<text x="658.40" y="615.30" font-size="6.0" fill="#111" text-anchor="end">100.0</text>
<text x="661.10" y="615.30" font-size="6.0" fill="#18a0a8">%</text>
<text x="685.50" y="587.10" font-size="4.6" fill="#000" text-anchor="middle" stroke="#000" stroke-width="0.12">TT3239</text>
<line x1="676.90" y1="588.10" x2="694.10" y2="588.10" stroke="#000" stroke-width="0.5" />
<polyline points="673.0,596.8 673.0,588.8 694.0,588.8" fill="none" stroke="#666" stroke-width="0.7" />
<polyline points="673.3,596.8 694.0,596.8 694.0,589.1" fill="none" stroke="#f4f4f4" stroke-width="0.6" />
<text x="692.80" y="595.10" font-size="6.0" fill="#111" text-anchor="end">18.6</text>
<text x="695.50" y="595.10" font-size="6.0" fill="#18a0a8">K</text>
<polygon points="710.70,599.30 718.70,594.70 718.70,603.90" fill="#000" />
<rect x="719.20" y="590.30" width="36.60" height="16.60" fill="#fde6bd" stroke="#555" stroke-width="0.8"/>
<text x="737.50" y="598.00" font-size="4.9" fill="#000" text-anchor="middle">Cold</text>
<text x="737.50" y="604.00" font-size="4.9" fill="#000" text-anchor="middle">Compressors</text>
<polygon points="756.80,599.30 764.80,594.70 764.80,603.90" fill="#000" />
<line x1="798.40" y1="599.30" x2="798.40" y2="592.30" stroke="#000" stroke-width="0.8" />
<path d="M792.00,592.40 a6.4,6.1 0 0 1 12.8,0 z" fill="url(#domeb)" stroke="#334" stroke-width="0.4" />
<polygon points="792.10,595.00 798.40,599.30 792.10,603.60" fill="#10b010" stroke="#063" stroke-width="0.6" />
<polygon points="804.70,595.00 798.40,599.30 804.70,603.60" fill="#10b010" stroke="#063" stroke-width="0.6" />
<text x="798.40" y="584.20" font-size="5.6" fill="#000" text-anchor="middle">CV3200</text>
<polyline points="790.0,617.0 790.0,609.0 806.6,609.0" fill="none" stroke="#666" stroke-width="0.7" />
<polyline points="790.3,617.0 806.6,617.0 806.6,609.3" fill="none" stroke="#f4f4f4" stroke-width="0.6" />
<text x="805.40" y="615.30" font-size="6.0" fill="#111" text-anchor="end">100.0</text>
<text x="808.10" y="615.30" font-size="6.0" fill="#18a0a8">%</text>
<text x="832.50" y="586.10" font-size="4.6" fill="#000" text-anchor="middle" stroke="#000" stroke-width="0.12">PT4298</text>
<line x1="823.90" y1="587.10" x2="841.10" y2="587.10" stroke="#000" stroke-width="0.5" />
<polyline points="821.0,595.8 821.0,587.8 842.0,587.8" fill="none" stroke="#666" stroke-width="0.7" />
<polyline points="821.3,595.8 842.0,595.8 842.0,588.1" fill="none" stroke="#f4f4f4" stroke-width="0.6" />
<text x="840.80" y="594.10" font-size="6.0" fill="#111" text-anchor="end">32.7</text>
<text x="843.50" y="594.10" font-size="6.0" fill="#18a0a8">mbar</text>
<polygon points="1231.50,59.30 1239.50,54.90 1239.50,63.70" fill="#000" />
<rect x="1240.00" y="55.00" width="48.60" height="9.20" fill="#fff" stroke="#333" stroke-width="0.7"/>
<text x="1264.30" y="61.80" font-size="5.2" fill="#000" text-anchor="middle">Thermal shields</text>
<polygon points="1240.00,71.80 1232.00,67.40 1232.00,76.20" fill="#000" />
<rect x="1240.00" y="67.60" width="48.60" height="9.20" fill="#fff" stroke="#333" stroke-width="0.7"/>
<text x="1264.30" y="74.40" font-size="5.2" fill="#000" text-anchor="middle">Thermal shields</text>
<rect x="1050.50" y="86.20" width="205.50" height="17.60" fill="#fff" stroke="#999" stroke-width="0.6"/>
<text x="1055.50" y="97.50" font-size="5.6" fill="#000">S1100_S22</text>
<rect x="1102.00" y="90.70" width="22.70" height="8.60" fill="#000"/>
<text x="1123.80" y="97.50" font-size="6" fill="#fff" text-anchor="end">75.00</text>
<text x="1126.00" y="97.50" font-size="5.6" fill="#000">%</text>
<text x="1152.00" y="97.50" font-size="5.6" fill="#000" font-style="italic">SP CL_L_CV3482 DEWAR</text>
<polyline points="900.2,147.6 857.0,147.6 855.2,149.4 855.2,202.0 857.0,203.8 900.2,203.8" fill="none" stroke="#2b98d8" stroke-width="1.6" stroke-linejoin="round"/>
<polyline points="900.2,122.0 900.2,278.3" fill="none" stroke="#2b98d8" stroke-width="2.8" stroke-linejoin="round"/>
<polyline points="950.5,122.0 950.5,309.0 893.0,309.0 893.0,421.7 992.6,421.7 992.6,134.8 1143.0,134.8 1144.3,136.0 1144.3,198.0" fill="none" stroke="#2b98d8" stroke-width="3" stroke-linejoin="round"/>
<polyline points="863.0,422.0 863.0,278.3 950.5,278.3" fill="none" stroke="#2b98d8" stroke-width="3" stroke-linejoin="round"/>
<line x1="855.20" y1="181.50" x2="861.70" y2="181.50" stroke="#000" stroke-width="0.8" />
<path d="M861.50,175.10 a6.2,6.4 0 0 1 0,12.8 z" fill="url(#domeb)" stroke="#334" stroke-width="0.4" />
<polygon points="850.90,175.20 855.20,181.50 859.50,175.20" fill="#fff" stroke="#222" stroke-width="0.6" />
<polygon points="850.90,187.80 855.20,181.50 859.50,187.80" fill="#fff" stroke="#222" stroke-width="0.6" />
<text x="868.00" y="179.50" font-size="5.6" fill="#000">CV3591</text>
<polyline points="869.3,191.3 869.3,183.3 886.8,183.3" fill="none" stroke="#666" stroke-width="0.7" />
<polyline points="869.6,191.3 886.8,191.3 886.8,183.6" fill="none" stroke="#f4f4f4" stroke-width="0.6" />
<text x="885.60" y="189.60" font-size="6.0" fill="#111" text-anchor="end">0.0</text>
<text x="888.30" y="189.60" font-size="6.0" fill="#18a0a8">%</text>
<polygon points="861.90,155.20 864.80,159.00 867.70,155.20" fill="#10b010" stroke="#063" stroke-width="0.6" />
<polygon points="861.90,162.80 864.80,159.00 867.70,162.80" fill="#fff" stroke="#063" stroke-width="0.6" />
<line x1="864.80" y1="159.00" x2="868.80" y2="159.00" stroke="#000" stroke-width="0.5" />
<rect x="868.40" y="155.80" width="1.80" height="6.40" fill="#2038d8"/>
<text x="870.80" y="160.30" font-size="3.4" fill="#000">BV3591</text>
<polygon points="906.40,155.20 909.30,159.00 912.20,155.20" fill="#10b010" stroke="#063" stroke-width="0.6" />
<polygon points="906.40,162.80 909.30,159.00 912.20,162.80" fill="#fff" stroke="#063" stroke-width="0.6" />
<line x1="909.30" y1="159.00" x2="913.30" y2="159.00" stroke="#000" stroke-width="0.5" />
<rect x="912.90" y="155.80" width="1.80" height="6.40" fill="#2038d8"/>
<text x="915.30" y="160.30" font-size="3.4" fill="#000">BV3590</text>
<line x1="900.20" y1="181.50" x2="906.70" y2="181.50" stroke="#000" stroke-width="0.8" />
<path d="M906.50,175.10 a6.2,6.4 0 0 1 0,12.8 z" fill="url(#domeb)" stroke="#334" stroke-width="0.4" />
<polygon points="895.90,175.20 900.20,181.50 904.50,175.20" fill="#10b010" stroke="#063" stroke-width="0.6" />
<polygon points="895.90,187.80 900.20,181.50 904.50,187.80" fill="#10b010" stroke="#063" stroke-width="0.6" />
<text x="913.00" y="179.50" font-size="5.6" fill="#000">CV3590</text>
<polyline points="915.0,191.3 915.0,183.3 932.6,183.3" fill="none" stroke="#666" stroke-width="0.7" />
<polyline points="915.3,191.3 932.6,191.3 932.6,183.6" fill="none" stroke="#f4f4f4" stroke-width="0.6" />
<text x="931.40" y="189.60" font-size="6.0" fill="#111" text-anchor="end">52.1</text>
<text x="934.10" y="189.60" font-size="6.0" fill="#18a0a8">%</text>
<polygon points="895.90,175.20 900.20,181.50 904.50,175.20" fill="#10b010" stroke="#063" stroke-width="0.6" />
<polygon points="895.90,187.80 900.20,181.50 904.50,187.80" fill="#fff" stroke="#063" stroke-width="0.6" />
<rect x="905.45" y="190.35" width="4.50" height="4.50" fill="#4a7a4a" stroke="#222" stroke-width="0.4"/>
<text x="966.00" y="128.70" font-size="4.6" fill="#000" text-anchor="middle" stroke="#000" stroke-width="0.12">TT3400</text>
<line x1="957.40" y1="129.70" x2="974.60" y2="129.70" stroke="#000" stroke-width="0.5" />
<polyline points="953.0,138.4 953.0,130.4 975.5,130.4" fill="none" stroke="#666" stroke-width="0.7" />
<polyline points="953.3,138.4 975.5,138.4 975.5,130.7" fill="none" stroke="#f4f4f4" stroke-width="0.6" />
<text x="974.30" y="136.70" font-size="6.0" fill="#111" text-anchor="end">6.3</text>
<text x="977.00" y="136.70" font-size="6.0" fill="#18a0a8">K</text>
<line x1="950.50" y1="250.40" x2="957.00" y2="250.40" stroke="#000" stroke-width="0.8" />
<path d="M956.80,244.00 a6.2,6.4 0 0 1 0,12.8 z" fill="url(#domeb)" stroke="#334" stroke-width="0.4" />
<polygon points="946.20,244.10 950.50,250.40 954.80,244.10" fill="#10b010" stroke="#063" stroke-width="0.6" />
<polygon points="946.20,256.70 950.50,250.40 954.80,256.70" fill="#10b010" stroke="#063" stroke-width="0.6" />
<text x="963.00" y="246.60" font-size="5.6" fill="#000">CV3599</text>
<polyline points="964.3,259.0 964.3,251.0 983.0,251.0" fill="none" stroke="#666" stroke-width="0.7" />
<polyline points="964.6,259.0 983.0,259.0 983.0,251.3" fill="none" stroke="#f4f4f4" stroke-width="0.6" />
<text x="981.80" y="257.30" font-size="6.0" fill="#111" text-anchor="end">100.0</text>
<text x="984.50" y="257.30" font-size="6.0" fill="#18a0a8">%</text>
<text x="941.00" y="239.50" font-size="3.6" fill="#18a0a8">H</text>
<circle cx="942.70" cy="242.00" r="1.60" fill="#20c020" stroke="#063" stroke-width="0.3" />
<line x1="926.00" y1="278.30" x2="926.00" y2="271.30" stroke="#000" stroke-width="0.8" />
<path d="M919.60,271.40 a6.4,6.1 0 0 1 12.8,0 z" fill="url(#domeb)" stroke="#334" stroke-width="0.4" />
<polygon points="919.70,274.00 926.00,278.30 919.70,282.60" fill="#fff" stroke="#222" stroke-width="0.6" />
<polygon points="932.30,274.00 926.00,278.30 932.30,282.60" fill="#fff" stroke="#222" stroke-width="0.6" />
<text x="926.00" y="263.70" font-size="5.6" fill="#000" text-anchor="middle">CV3595</text>
<polyline points="916.6,296.7 916.6,288.7 934.5,288.7" fill="none" stroke="#666" stroke-width="0.7" />
<polyline points="916.9,296.7 934.5,296.7 934.5,289.0" fill="none" stroke="#f4f4f4" stroke-width="0.6" />
<text x="933.30" y="295.00" font-size="6.0" fill="#111" text-anchor="end">0.0</text>
<text x="936.00" y="295.00" font-size="6.0" fill="#18a0a8">%</text>
<rect x="933.35" y="266.75" width="4.50" height="4.50" fill="#4a7a4a" stroke="#222" stroke-width="0.4"/>
<text x="913.00" y="285.50" font-size="4" fill="#18a0a8">L</text>
<circle cx="917.00" cy="285.70" r="1.60" fill="#20c020" stroke="#063" stroke-width="0.3" />
<text x="878.60" y="285.90" font-size="4.6" fill="#000" text-anchor="middle" stroke="#000" stroke-width="0.12">TT3590</text>
<line x1="870.00" y1="286.90" x2="887.20" y2="286.90" stroke="#000" stroke-width="0.5" />
<polyline points="865.6,295.6 865.6,287.6 888.0,287.6" fill="none" stroke="#666" stroke-width="0.7" />
<polyline points="865.9,295.6 888.0,295.6 888.0,287.9" fill="none" stroke="#f4f4f4" stroke-width="0.6" />
<text x="886.80" y="293.90" font-size="6.0" fill="#111" text-anchor="end">7.6</text>
<text x="889.50" y="293.90" font-size="6.0" fill="#18a0a8">K</text>
<text x="910.50" y="316.80" font-size="4.6" fill="#000" text-anchor="middle" stroke="#000" stroke-width="0.12">TT3496</text>
<line x1="901.90" y1="317.80" x2="919.10" y2="317.80" stroke="#000" stroke-width="0.5" />
<polyline points="898.0,326.5 898.0,318.5 918.0,318.5" fill="none" stroke="#666" stroke-width="0.7" />
<polyline points="898.3,326.5 918.0,326.5 918.0,318.8" fill="none" stroke="#f4f4f4" stroke-width="0.6" />
<text x="916.80" y="324.80" font-size="6.0" fill="#111" text-anchor="end">8.12</text>
<text x="919.50" y="324.80" font-size="6.0" fill="#18a0a8">K</text>
<polyline points="860.0,483.6 1007.0,483.6 1007.0,183.1 1132.0,183.1 1133.7,185.0 1133.7,198.0" fill="none" stroke="#2b98d8" stroke-width="3" stroke-linejoin="round"/>
<line x1="1044.40" y1="134.80" x2="1044.40" y2="127.80" stroke="#000" stroke-width="0.8" />
<path d="M1038.00,127.90 a6.4,6.1 0 0 1 12.8,0 z" fill="url(#domeb)" stroke="#334" stroke-width="0.4" />
<polygon points="1038.10,130.50 1044.40,134.80 1038.10,139.10" fill="#10b010" stroke="#063" stroke-width="0.6" />
<polygon points="1050.70,130.50 1044.40,134.80 1050.70,139.10" fill="#10b010" stroke="#063" stroke-width="0.6" />
<text x="1044.40" y="119.40" font-size="5.6" fill="#000" text-anchor="middle">CV3482</text>
<polyline points="1035.4,152.6 1035.4,144.6 1053.0,144.6" fill="none" stroke="#666" stroke-width="0.7" />
<polyline points="1035.7,152.6 1053.0,152.6 1053.0,144.9" fill="none" stroke="#f4f4f4" stroke-width="0.6" />
<text x="1051.80" y="150.90" font-size="6.0" fill="#111" text-anchor="end">100.0</text>
<text x="1054.50" y="150.90" font-size="6.0" fill="#18a0a8">%</text>
<rect x="1051.65" y="122.75" width="4.50" height="4.50" fill="#4a7a4a" stroke="#222" stroke-width="0.4"/>
<line x1="1044.40" y1="183.10" x2="1044.40" y2="176.10" stroke="#000" stroke-width="0.8" />
<path d="M1038.00,176.20 a6.4,6.1 0 0 1 12.8,0 z" fill="url(#domeb)" stroke="#334" stroke-width="0.4" />
<polygon points="1038.10,178.80 1044.40,183.10 1038.10,187.40" fill="#10b010" stroke="#063" stroke-width="0.6" />
<polygon points="1050.70,178.80 1044.40,183.10 1050.70,187.40" fill="#10b010" stroke="#063" stroke-width="0.6" />
<text x="1044.40" y="167.60" font-size="5.6" fill="#000" text-anchor="middle">CV3392</text>
<polyline points="1034.6,200.6 1034.6,192.6 1051.0,192.6" fill="none" stroke="#666" stroke-width="0.7" />
<polyline points="1034.9,200.6 1051.0,200.6 1051.0,192.9" fill="none" stroke="#f4f4f4" stroke-width="0.6" />
<text x="1049.80" y="198.90" font-size="6.0" fill="#111" text-anchor="end">80.9</text>
<text x="1052.50" y="198.90" font-size="6.0" fill="#18a0a8">%</text>
<polygon points="1038.10,178.80 1044.40,183.10 1038.10,187.40" fill="#10b010" stroke="#063" stroke-width="0.6" />
<polygon points="1050.70,178.80 1044.40,183.10 1050.70,187.40" fill="#fff" stroke="#063" stroke-width="0.6" />
<rect x="1051.65" y="171.25" width="4.50" height="4.50" fill="#4a7a4a" stroke="#222" stroke-width="0.4"/>
<polygon points="1144.30,204.50 1140.90,198.00 1147.70,198.00" fill="#000" />
<polygon points="1133.70,197.50 1130.30,204.00 1137.10,204.00" fill="#000" />
<rect x="1109.30" y="166.20" width="114.10" height="124.00" fill="none" stroke="#333" stroke-width="0.6" stroke-dasharray="1.2 1.2"/>
<text x="1150.60" y="175.80" font-size="6.4" fill="#000">DEWAR</text>
<path d="M1111.3,213 a45,9.5 0 0 1 90,0 v68 a45,8 0 0 1 -90,0 z" fill="url(#metal2)" stroke="#444" stroke-width="0.5" />
<rect x="1118.00" y="213.50" width="74.70" height="67.50" fill="#fff"/>
<rect x="1192.70" y="213.50" width="7.80" height="26.30" fill="#b0b0b0"/>
<rect x="1192.70" y="239.80" width="7.80" height="41.20" fill="#10e010"/>
<polyline points="1100.3,372.0 1100.3,203.2 1120.0,203.2 1120.0,265.3" fill="none" stroke="#2b98d8" stroke-width="1.3" stroke-linejoin="round"/>
<polygon points="1120.00,197.50 1116.60,204.00 1123.40,204.00" fill="#000" />
<text x="1136.50" y="221.60" font-size="4.6" fill="#000" text-anchor="middle" stroke="#000" stroke-width="0.12">PT5300</text>
<line x1="1127.90" y1="222.60" x2="1145.10" y2="222.60" stroke="#000" stroke-width="0.5" />
<polyline points="1123.9,231.0 1123.9,223.3 1146.3,223.3" fill="none" stroke="#666" stroke-width="0.7" />
<polyline points="1124.2,231.0 1146.3,231.0 1146.3,223.6" fill="none" stroke="#f4f4f4" stroke-width="0.6" />
<text x="1145.10" y="229.30" font-size="6.0" fill="#111" text-anchor="end">1.400</text>
<text x="1147.80" y="229.30" font-size="6.0" fill="#18a0a8">bar</text>
<text x="1171.00" y="221.60" font-size="4.6" fill="#000" text-anchor="middle" stroke="#000" stroke-width="0.12">LT5300</text>
<line x1="1162.40" y1="222.60" x2="1179.60" y2="222.60" stroke="#000" stroke-width="0.5" />
<polyline points="1158.5,231.0 1158.5,223.3 1180.9,223.3" fill="none" stroke="#666" stroke-width="0.7" />
<polyline points="1158.8,231.0 1180.9,231.0 1180.9,223.6" fill="none" stroke="#f4f4f4" stroke-width="0.6" />
<text x="1179.70" y="229.30" font-size="6.0" fill="#111" text-anchor="end">55.0</text>
<text x="1182.40" y="229.30" font-size="6.0" fill="#18a0a8">%</text>
<text x="1128.60" y="239.20" font-size="6.4" fill="#000">EH5301</text>
<rect x="1125.80" y="241.70" width="25.60" height="9.90" fill="#fff" stroke="#333" stroke-width="0.6"/>
<polyline points="1126.8,249.6 1129.8,243.7 1132.7,249.6 1135.6,243.7 1138.6,249.6 1141.5,243.7 1144.5,249.6 1147.5,243.7 1150.4,249.6" fill="none" stroke="#000" stroke-width="0.9" />
<text x="1169.00" y="238.90" font-size="4.6" fill="#000" text-anchor="middle" stroke="#000" stroke-width="0.12">PDT5300</text>
<line x1="1159.05" y1="239.90" x2="1178.95" y2="239.90" stroke="#000" stroke-width="0.5" />
<polyline points="1158.5,248.6 1158.5,240.6 1180.9,240.6" fill="none" stroke="#666" stroke-width="0.7" />
<polyline points="1158.8,248.6 1180.9,248.6 1180.9,240.9" fill="none" stroke="#f4f4f4" stroke-width="0.6" />
<text x="1179.70" y="246.90" font-size="6.0" fill="#111" text-anchor="end">33.1</text>
<text x="1182.40" y="246.90" font-size="6.0" fill="#18a0a8">mbar</text>
<text x="1171.00" y="253.00" font-size="4.6" fill="#000" text-anchor="middle" stroke="#000" stroke-width="0.12">LT5301</text>
<line x1="1162.40" y1="254.00" x2="1179.60" y2="254.00" stroke="#000" stroke-width="0.5" />
<polyline points="1158.5,262.7 1158.5,254.7 1180.9,254.7" fill="none" stroke="#666" stroke-width="0.7" />
<polyline points="1158.8,262.7 1180.9,262.7 1180.9,255.0" fill="none" stroke="#f4f4f4" stroke-width="0.6" />
<text x="1179.70" y="261.00" font-size="6.0" fill="#111" text-anchor="end">53.0</text>
<text x="1182.40" y="261.00" font-size="6.0" fill="#18a0a8">%</text>
<text x="1171.00" y="269.50" font-size="4.6" fill="#000" text-anchor="middle" stroke="#000" stroke-width="0.12">TT5300</text>
<line x1="1162.40" y1="270.50" x2="1179.60" y2="270.50" stroke="#000" stroke-width="0.5" />
<polyline points="1158.5,279.2 1158.5,271.2 1180.9,271.2" fill="none" stroke="#666" stroke-width="0.7" />
<polyline points="1158.8,279.2 1180.9,279.2 1180.9,271.5" fill="none" stroke="#f4f4f4" stroke-width="0.6" />
<text x="1179.70" y="277.50" font-size="6.0" fill="#111" text-anchor="end">4.6</text>
<text x="1182.40" y="277.50" font-size="6.0" fill="#18a0a8">K</text>
<rect x="1117.75" y="254.45" width="4.50" height="4.50" fill="#5a8a5a" stroke="#222" stroke-width="0.4"/>
<rect x="1126.10" y="254.20" width="5.00" height="5.00" fill="#1010d0" stroke="#222" stroke-width="0.4"/>
<polyline points="1133.7,262.3 1133.7,254.3 1151.4,254.3" fill="none" stroke="#666" stroke-width="0.7" />
<polyline points="1134.0,262.3 1151.4,262.3 1151.4,254.6" fill="none" stroke="#f4f4f4" stroke-width="0.6" />
<text x="1150.20" y="260.60" font-size="6.0" fill="#111" text-anchor="end">0.0</text>
<text x="1152.90" y="260.60" font-size="6.0" fill="#18a0a8">%</text>
<polyline points="1133.7,272.5 1133.7,264.5 1151.4,264.5" fill="none" stroke="#666" stroke-width="0.7" />
<polyline points="1134.0,272.5 1151.4,272.5 1151.4,264.8" fill="none" stroke="#f4f4f4" stroke-width="0.6" />
<text x="1150.20" y="270.80" font-size="6.0" fill="#10a010" text-anchor="end">0</text>
<text x="1153.40" y="270.60" font-size="5.6" fill="#10a010">W</text>
<circle cx="1120.70" cy="276.20" r="1.60" fill="#20c020" stroke="#063" stroke-width="0.3" />
<text x="1123.50" y="277.40" font-size="3.4" fill="#000">Enable</text>
<polyline points="1200.5,211.5 1204.9,211.5 1204.9,197.0" fill="none" stroke="#2b98d8" stroke-width="1.5" stroke-linejoin="round"/>
<polyline points="1198.0,191.8 1181.7,191.8 1181.7,171.7 1231.0,171.7" fill="none" stroke="#2b98d8" stroke-width="1.5" stroke-linejoin="round"/>
<polyline points="1211.0,191.8 1231.0,191.8" fill="none" stroke="#2b98d8" stroke-width="1.5" stroke-linejoin="round"/>
<rect x="1198.40" y="180.00" width="13.00" height="4.70" fill="url(#act)" stroke="#223" stroke-width="0.3"/>
<line x1="1204.90" y1="184.70" x2="1204.90" y2="191.80" stroke="#000" stroke-width="0.7" />
<polygon points="1198.60,187.50 1204.90,191.80 1198.60,196.10" fill="#fff" stroke="#222" stroke-width="0.6" />
<polygon points="1211.20,187.50 1204.90,191.80 1211.20,196.10" fill="#10b010" stroke="#222" stroke-width="0.6" />
<polygon points="1204.90,191.80 1200.60,198.40 1209.20,198.40" fill="#10b010" stroke="#063" stroke-width="0.6" />
<text x="1204.90" y="178.30" font-size="4.6" fill="#000" text-anchor="middle">EV4926</text>
<polygon points="1238.70,171.70 1230.70,167.30 1230.70,176.10" fill="#000" />
<rect x="1238.70" y="167.00" width="49.50" height="8.80" fill="#fff" stroke="#333" stroke-width="0.7"/>
<text x="1263.50" y="173.50" font-size="5.0" fill="#000" text-anchor="middle">To safe location</text>
<polygon points="1238.70,191.80 1230.70,187.40 1230.70,196.20" fill="#000" />
<rect x="1238.70" y="187.00" width="49.50" height="9.50" fill="#fde6bd" stroke="#555" stroke-width="0.8"/>
<text x="1263.45" y="193.65" font-size="5.2" fill="#000" text-anchor="middle">LP WCS</text>
<text x="1078.60" y="285.30" font-size="4.6" fill="#000" text-anchor="middle" stroke="#000" stroke-width="0.12">TT3480</text>
<line x1="1070.00" y1="286.30" x2="1087.20" y2="286.30" stroke="#000" stroke-width="0.5" />
<polyline points="1066.0,295.0 1066.0,287.0 1087.3,287.0" fill="none" stroke="#666" stroke-width="0.7" />
<polyline points="1066.3,295.0 1087.3,295.0 1087.3,287.3" fill="none" stroke="#f4f4f4" stroke-width="0.6" />
<text x="1086.10" y="293.30" font-size="6.0" fill="#111" text-anchor="end">5.4</text>
<text x="1088.80" y="293.30" font-size="6.0" fill="#18a0a8">K</text>
<line x1="1100.30" y1="309.20" x2="1106.80" y2="309.20" stroke="#000" stroke-width="0.8" />
<path d="M1106.60,302.80 a6.2,6.4 0 0 1 0,12.8 z" fill="url(#domeb)" stroke="#334" stroke-width="0.4" />
<polygon points="1096.00,302.90 1100.30,309.20 1104.60,302.90" fill="#10b010" stroke="#063" stroke-width="0.6" />
<polygon points="1096.00,315.50 1100.30,309.20 1104.60,315.50" fill="#10b010" stroke="#063" stroke-width="0.6" />
<text x="1114.30" y="306.50" font-size="5.6" fill="#000">CV3382</text>
<polyline points="1117.0,319.7 1117.0,311.7 1134.7,311.7" fill="none" stroke="#666" stroke-width="0.7" />
<polyline points="1117.3,319.7 1134.7,319.7 1134.7,312.0" fill="none" stroke="#f4f4f4" stroke-width="0.6" />
<text x="1133.50" y="318.00" font-size="6.0" fill="#111" text-anchor="end">64.5</text>
<text x="1136.20" y="318.00" font-size="6.0" fill="#18a0a8">%</text>
<polygon points="1096.00,302.90 1100.30,309.20 1104.60,302.90" fill="#10b010" stroke="#063" stroke-width="0.6" />
<polygon points="1096.00,315.50 1100.30,309.20 1104.60,315.50" fill="#fff" stroke="#063" stroke-width="0.6" />
<rect x="1105.75" y="317.75" width="4.50" height="4.50" fill="#4a7a4a" stroke="#222" stroke-width="0.4"/>
<polygon points="1100.30,371.50 1097.90,367.00 1102.70,367.00" fill="#2b98d8" />
<polyline points="992.6,336.6 1001.5,336.6" fill="none" stroke="#2b98d8" stroke-width="3" stroke-linejoin="round"/>
<polyline points="1010.0,336.6 1126.8,336.6 1128.3,338.0 1128.3,440.9 1116.0,440.9" fill="none" stroke="#2b98d8" stroke-width="3" stroke-linejoin="round"/>
<polyline points="992.6,357.5 1001.5,357.5" fill="none" stroke="#2b98d8" stroke-width="3" stroke-linejoin="round"/>
<polyline points="1010.0,357.5 1024.0,357.5" fill="none" stroke="#2b98d8" stroke-width="3" stroke-linejoin="round"/>
<polyline points="1036.0,358.6 1080.0,359.6 1083.5,362.5 1083.5,376.0" fill="none" stroke="#2b98d8" stroke-width="3" stroke-linejoin="round"/>
<line x1="1001.50" y1="334.10" x2="1001.50" y2="339.10" stroke="#2b98d8" stroke-width="0.8" />
<line x1="1010.00" y1="334.10" x2="1010.00" y2="339.10" stroke="#2b98d8" stroke-width="0.8" />
<line x1="1001.50" y1="355.00" x2="1001.50" y2="360.00" stroke="#2b98d8" stroke-width="0.8" />
<line x1="1010.00" y1="355.00" x2="1010.00" y2="360.00" stroke="#2b98d8" stroke-width="0.8" />
<line x1="1029.80" y1="357.50" x2="1029.80" y2="350.50" stroke="#000" stroke-width="0.8" />
<path d="M1023.40,350.60 a6.4,6.1 0 0 1 12.8,0 z" fill="url(#domeb)" stroke="#334" stroke-width="0.4" />
<polygon points="1023.50,353.20 1029.80,357.50 1023.50,361.80" fill="#10b010" stroke="#063" stroke-width="0.6" />
<polygon points="1036.10,353.20 1029.80,357.50 1036.10,361.80" fill="#10b010" stroke="#063" stroke-width="0.6" />
<text x="1029.80" y="342.40" font-size="5.6" fill="#000" text-anchor="middle">CV3480</text>
<polyline points="1020.7,375.8 1020.7,367.8 1038.0,367.8" fill="none" stroke="#666" stroke-width="0.7" />
<polyline points="1021.0,375.8 1038.0,375.8 1038.0,368.1" fill="none" stroke="#f4f4f4" stroke-width="0.6" />
<text x="1036.80" y="374.10" font-size="6.0" fill="#111" text-anchor="end">3.0</text>
<text x="1039.50" y="374.10" font-size="6.0" fill="#18a0a8">%</text>
<polygon points="1023.50,353.20 1029.80,357.50 1023.50,361.80" fill="#10b010" stroke="#063" stroke-width="0.6" />
<polygon points="1036.10,353.20 1029.80,357.50 1036.10,361.80" fill="#fff" stroke="#063" stroke-width="0.6" />
<rect x="1036.75" y="345.25" width="4.50" height="4.50" fill="#4a7a4a" stroke="#222" stroke-width="0.4"/>
<polyline points="1007.0,388.7 1076.0,388.7" fill="none" stroke="#2b98d8" stroke-width="3" stroke-linejoin="round"/>
<line x1="1059.60" y1="388.70" x2="1059.60" y2="381.70" stroke="#000" stroke-width="0.8" />
<path d="M1053.20,381.80 a6.4,6.1 0 0 1 12.8,0 z" fill="url(#domeb)" stroke="#334" stroke-width="0.4" />
<polygon points="1053.30,384.40 1059.60,388.70 1053.30,393.00" fill="#10b010" stroke="#063" stroke-width="0.6" />
<polygon points="1065.90,384.40 1059.60,388.70 1065.90,393.00" fill="#10b010" stroke="#063" stroke-width="0.6" />
<text x="1059.60" y="374.60" font-size="5.6" fill="#000" text-anchor="middle">CV3309</text>
<polyline points="1050.9,406.7 1050.9,398.7 1068.3,398.7" fill="none" stroke="#666" stroke-width="0.7" />
<polyline points="1051.2,406.7 1068.3,406.7 1068.3,399.0" fill="none" stroke="#f4f4f4" stroke-width="0.6" />
<text x="1067.10" y="405.00" font-size="6.0" fill="#111" text-anchor="end">100.0</text>
<text x="1069.80" y="405.00" font-size="6.0" fill="#18a0a8">%</text>
<rect x="1066.75" y="377.25" width="4.50" height="4.50" fill="#4a7a4a" stroke="#222" stroke-width="0.4"/>
<polygon points="1076.50,388.70 1072.50,385.70 1072.50,391.70" fill="#000" />
<path d="M1075.7,384 a23.45,11.4 0 0 1 46.9,0 v84 a23.45,7.5 0 0 1 -46.9,0 z" fill="url(#metal2)" stroke="#444" stroke-width="0.5" />
<rect x="1084.80" y="384.00" width="35.60" height="85.00" fill="#fff"/>
<rect x="1077.00" y="384.00" width="7.80" height="33.00" fill="#9a9a9a"/>
<rect x="1077.00" y="417.00" width="7.80" height="52.00" fill="#10e010"/>
<text x="1100.60" y="388.70" font-size="4.6" fill="#000" text-anchor="middle" stroke="#000" stroke-width="0.12">PT4380</text>
<line x1="1092.00" y1="389.70" x2="1109.20" y2="389.70" stroke="#000" stroke-width="0.5" />
<polyline points="1091.6,398.4 1091.6,390.4 1109.0,390.4" fill="none" stroke="#666" stroke-width="0.7" />
<polyline points="1091.9,398.4 1109.0,398.4 1109.0,390.7" fill="none" stroke="#f4f4f4" stroke-width="0.6" />
<text x="1107.80" y="396.70" font-size="6.0" fill="#111" text-anchor="end">1.34</text>
<text x="1110.50" y="396.70" font-size="6.0" fill="#18a0a8">bar</text>
<text x="1100.60" y="403.70" font-size="4.6" fill="#000" text-anchor="middle" stroke="#000" stroke-width="0.12">LT3380</text>
<line x1="1092.00" y1="404.70" x2="1109.20" y2="404.70" stroke="#000" stroke-width="0.5" />
<polyline points="1091.6,413.4 1091.6,405.4 1109.0,405.4" fill="none" stroke="#666" stroke-width="0.7" />
<polyline points="1091.9,413.4 1109.0,413.4 1109.0,405.7" fill="none" stroke="#f4f4f4" stroke-width="0.6" />
<text x="1107.80" y="411.70" font-size="6.0" fill="#111" text-anchor="end">59.7</text>
<text x="1110.50" y="411.70" font-size="6.0" fill="#18a0a8">%</text>
<text x="1100.60" y="420.30" font-size="4.6" fill="#000" text-anchor="middle" stroke="#000" stroke-width="0.12">LT4380</text>
<line x1="1092.00" y1="421.30" x2="1109.20" y2="421.30" stroke="#000" stroke-width="0.5" />
<polyline points="1091.6,430.0 1091.6,422.0 1109.0,422.0" fill="none" stroke="#666" stroke-width="0.7" />
<polyline points="1091.9,430.0 1109.0,430.0 1109.0,422.3" fill="none" stroke="#f4f4f4" stroke-width="0.6" />
<text x="1107.80" y="428.30" font-size="6.0" fill="#111" text-anchor="end">55.0</text>
<text x="1110.50" y="428.30" font-size="6.0" fill="#18a0a8">%</text>
<rect x="1093.00" y="436.50" width="24.40" height="7.80" fill="#34465a" stroke="#222" stroke-width="0.5"/>
<text x="1105.20" y="442.60" font-size="5" fill="#fff" text-anchor="middle">100.00</text>
<text x="1091.30" y="454.00" font-size="6.4" fill="#000">EH3381</text>
<rect x="1089.00" y="456.00" width="27.00" height="11.00" fill="#fff" stroke="#333" stroke-width="0.6"/>
<polyline points="1090.0,465.0 1093.1,458.0 1096.2,465.0 1099.4,458.0 1102.5,465.0 1105.6,458.0 1108.8,465.0 1111.9,458.0 1115.0,465.0" fill="none" stroke="#000" stroke-width="0.9" />
<rect x="1089.95" y="470.35" width="4.50" height="4.50" fill="#9a9a9a" stroke="#222" stroke-width="0.4"/>
<polyline points="1098.7,478.0 1098.7,470.0 1116.0,470.0" fill="none" stroke="#666" stroke-width="0.7" />
<polyline points="1099.0,478.0 1116.0,478.0 1116.0,470.3" fill="none" stroke="#f4f4f4" stroke-width="0.6" />
<text x="1114.80" y="476.30" font-size="6.0" fill="#111" text-anchor="end">0.0</text>
<text x="1117.50" y="476.30" font-size="6.0" fill="#18a0a8">%</text>
<text x="1116.00" y="485.80" font-size="5.6" fill="#10a010" text-anchor="end">0 W</text>
<circle cx="1083.50" cy="491.00" r="1.60" fill="#20c020" stroke="#063" stroke-width="0.3" />
<text x="1086.30" y="492.20" font-size="3.4" fill="#000">Enable</text>
<circle cx="1108.30" cy="491.00" r="1.60" fill="#20c020" stroke="#063" stroke-width="0.3" />
<text x="1111.00" y="492.20" font-size="3.4" fill="#000">TSH</text>
<rect x="1131.30" y="400.90" width="19.60" height="10.80" fill="#55555f" stroke="#333" stroke-width="0.5" rx="1"/>
<text x="1141.10" y="408.80" font-size="6.2" fill="#fff" text-anchor="middle" font-weight="bold">AMI</text>
<text x="1047.40" y="451.00" font-size="4.6" fill="#000" text-anchor="middle" stroke="#000" stroke-width="0.12">PDT4380</text>
<line x1="1037.45" y1="452.00" x2="1057.35" y2="452.00" stroke="#000" stroke-width="0.5" />
<polyline points="1039.4,460.7 1039.4,452.7 1058.8,452.7" fill="none" stroke="#666" stroke-width="0.7" />
<polyline points="1039.7,460.7 1058.8,460.7 1058.8,453.0" fill="none" stroke="#f4f4f4" stroke-width="0.6" />
<text x="1057.60" y="459.00" font-size="6.0" fill="#111" text-anchor="end">14.3</text>
<text x="1060.30" y="459.00" font-size="6.0" fill="#18a0a8">mbar</text>
<polyline points="1117.0,446.5 1250.0,446.5" fill="none" stroke="#2b98d8" stroke-width="1.6" stroke-linejoin="round"/>
<text x="1141.50" y="434.80" font-size="4.6" fill="#000" text-anchor="middle" stroke="#000" stroke-width="0.12">TT3483</text>
<line x1="1132.90" y1="435.80" x2="1150.10" y2="435.80" stroke="#000" stroke-width="0.5" />
<polyline points="1133.5,444.5 1133.5,436.5 1155.0,436.5" fill="none" stroke="#666" stroke-width="0.7" />
<polyline points="1133.8,444.5 1155.0,444.5 1155.0,436.8" fill="none" stroke="#f4f4f4" stroke-width="0.6" />
<text x="1153.80" y="442.80" font-size="6.0" fill="#111" text-anchor="end">5.3</text>
<text x="1156.50" y="442.80" font-size="6.0" fill="#18a0a8">K</text>
<text x="1177.00" y="434.80" font-size="4.6" fill="#000" text-anchor="middle" stroke="#000" stroke-width="0.12">PT4483</text>
<line x1="1168.40" y1="435.80" x2="1185.60" y2="435.80" stroke="#000" stroke-width="0.5" />
<polyline points="1166.0,444.5 1166.0,436.5 1190.0,436.5" fill="none" stroke="#666" stroke-width="0.7" />
<polyline points="1166.3,444.5 1190.0,444.5 1190.0,436.8" fill="none" stroke="#f4f4f4" stroke-width="0.6" />
<text x="1188.80" y="442.80" font-size="6.0" fill="#111" text-anchor="end">3.168</text>
<text x="1191.50" y="442.80" font-size="6.0" fill="#18a0a8">bar</text>
<text x="1136.30" y="460.00" font-size="4.6" fill="#000" text-anchor="middle" stroke="#000" stroke-width="0.12">TT3385</text>
<line x1="1127.70" y1="461.00" x2="1144.90" y2="461.00" stroke="#000" stroke-width="0.5" />
<polyline points="1128.3,469.7 1128.3,461.7 1148.7,461.7" fill="none" stroke="#666" stroke-width="0.7" />
<polyline points="1128.6,469.7 1148.7,469.7 1148.7,462.0" fill="none" stroke="#f4f4f4" stroke-width="0.6" />
<text x="1147.50" y="468.00" font-size="6.0" fill="#111" text-anchor="end">5.0</text>
<text x="1150.20" y="468.00" font-size="6.0" fill="#18a0a8">K</text>
<line x1="1217.40" y1="446.50" x2="1217.40" y2="439.50" stroke="#000" stroke-width="0.8" />
<path d="M1211.00,439.60 a6.4,6.1 0 0 1 12.8,0 z" fill="url(#domeb)" stroke="#334" stroke-width="0.4" />
<polygon points="1211.10,442.20 1217.40,446.50 1211.10,450.80" fill="#fff" stroke="#222" stroke-width="0.6" />
<polygon points="1223.70,442.20 1217.40,446.50 1223.70,450.80" fill="#fff" stroke="#222" stroke-width="0.6" />
<text x="1217.40" y="431.20" font-size="5.6" fill="#000" text-anchor="middle">CV3489</text>
<polyline points="1209.6,464.0 1209.6,456.0 1227.0,456.0" fill="none" stroke="#666" stroke-width="0.7" />
<polyline points="1209.9,464.0 1227.0,464.0 1227.0,456.3" fill="none" stroke="#f4f4f4" stroke-width="0.6" />
<text x="1225.80" y="462.30" font-size="6.0" fill="#111" text-anchor="end">0.0</text>
<text x="1228.50" y="462.30" font-size="6.0" fill="#18a0a8">%</text>
<polygon points="1258.30,446.50 1250.30,442.10 1250.30,450.90" fill="#000" />
<rect x="1258.30" y="441.70" width="30.40" height="9.20" fill="#fff" stroke="#333" stroke-width="0.7"/>
<text x="1273.50" y="448.60" font-size="5.2" fill="#000" text-anchor="middle">4K supply</text>
<text x="1247.70" y="429.60" font-size="4.6" fill="#000" text-anchor="middle" stroke="#000" stroke-width="0.12">PT4489</text>
<line x1="1239.10" y1="430.60" x2="1256.30" y2="430.60" stroke="#000" stroke-width="0.5" />
<polyline points="1235.7,439.3 1235.7,431.3 1255.0,431.3" fill="none" stroke="#666" stroke-width="0.7" />
<polyline points="1236.0,439.3 1255.0,439.3 1255.0,431.6" fill="none" stroke="#f4f4f4" stroke-width="0.6" />
<text x="1253.80" y="437.60" font-size="6.0" fill="#111" text-anchor="end">0.98</text>
<text x="1256.50" y="437.60" font-size="6.0" fill="#18a0a8">bar</text>
<polyline points="1164.8,446.5 1164.8,363.9 1231.0,363.9" fill="none" stroke="#2b98d8" stroke-width="1.6" stroke-linejoin="round"/>
<polyline points="1186.5,353.9 1196.0,353.9 1196.0,363.9" fill="none" stroke="#2b98d8" stroke-width="1.0" stroke-linejoin="round"/>
<rect x="1181.30" y="345.30" width="10.40" height="3.60" fill="url(#act)" stroke="#223" stroke-width="0.3"/>
<line x1="1186.50" y1="349.00" x2="1186.50" y2="353.90" stroke="#000" stroke-width="0.6" />
<polygon points="1181.50,350.50 1186.50,353.90 1181.50,357.30" fill="#10b010" stroke="#063" stroke-width="0.6" />
<polygon points="1191.50,350.50 1186.50,353.90 1191.50,357.30" fill="#10b010" stroke="#063" stroke-width="0.6" />
<text x="1186.50" y="343.80" font-size="4.6" fill="#000" text-anchor="middle">EV3490</text>
<line x1="1213.00" y1="363.90" x2="1213.00" y2="356.90" stroke="#000" stroke-width="0.8" />
<path d="M1206.60,357.00 a6.4,6.1 0 0 1 12.8,0 z" fill="url(#domeb)" stroke="#334" stroke-width="0.4" />
<polygon points="1206.70,359.60 1213.00,363.90 1206.70,368.20" fill="#10b010" stroke="#063" stroke-width="0.6" />
<polygon points="1219.30,359.60 1213.00,363.90 1219.30,368.20" fill="#10b010" stroke="#063" stroke-width="0.6" />
<text x="1213.00" y="349.20" font-size="5.6" fill="#000" text-anchor="middle">CV3486</text>
<polyline points="1204.3,381.5 1204.3,373.5 1221.7,373.5" fill="none" stroke="#666" stroke-width="0.7" />
<polyline points="1204.6,381.5 1221.7,381.5 1221.7,373.8" fill="none" stroke="#f4f4f4" stroke-width="0.6" />
<text x="1220.50" y="379.80" font-size="6.0" fill="#111" text-anchor="end">90.9</text>
<text x="1223.20" y="379.80" font-size="6.0" fill="#18a0a8">%</text>
<polygon points="1239.00,363.90 1231.00,359.50 1231.00,368.30" fill="#000" />
<rect x="1239.00" y="359.60" width="49.70" height="9.40" fill="#fde6bd" stroke="#555" stroke-width="0.7"/>
<text x="1263.80" y="366.70" font-size="5.6" fill="#000" text-anchor="middle" font-weight="bold">2K vessel</text>
<text x="1251.50" y="347.00" font-size="4.6" fill="#000" text-anchor="middle" stroke="#000" stroke-width="0.12">PT4295</text>
<line x1="1242.90" y1="348.00" x2="1260.10" y2="348.00" stroke="#000" stroke-width="0.5" />
<polyline points="1243.5,356.7 1243.5,348.7 1264.0,348.7" fill="none" stroke="#666" stroke-width="0.7" />
<polyline points="1243.8,356.7 1264.0,356.7 1264.0,349.0" fill="none" stroke="#f4f4f4" stroke-width="0.6" />
<text x="1262.80" y="355.00" font-size="6.0" fill="#111" text-anchor="end">32.7</text>
<text x="1265.50" y="355.00" font-size="6.0" fill="#18a0a8">mbar</text>
<text x="1251.50" y="374.80" font-size="4.6" fill="#000" text-anchor="middle" stroke="#000" stroke-width="0.12">LT3295</text>
<line x1="1242.90" y1="375.80" x2="1260.10" y2="375.80" stroke="#000" stroke-width="0.5" />
<polyline points="1243.5,384.5 1243.5,376.5 1264.0,376.5" fill="none" stroke="#666" stroke-width="0.7" />
<polyline points="1243.8,384.5 1264.0,384.5 1264.0,376.8" fill="none" stroke="#f4f4f4" stroke-width="0.6" />
<text x="1262.80" y="382.80" font-size="6.0" fill="#111" text-anchor="end">53.06</text>
<text x="1265.50" y="382.80" font-size="6.0" fill="#18a0a8">%</text>
<polyline points="1203.0,446.5 1203.0,509.6 1200.9,509.6" fill="none" stroke="#2b98d8" stroke-width="1.5" stroke-linejoin="round"/>
<polyline points="1172.6,509.6 1114.8,509.6 1114.8,549.2" fill="none" stroke="#2b98d8" stroke-width="1.5" stroke-linejoin="round"/>
<text x="1175.70" y="503.00" font-size="6.2" fill="#000">EH3484</text>
<rect x="1172.60" y="504.80" width="28.30" height="11.20" fill="#30b030" stroke="#175" stroke-width="0.4"/>
<rect x="1172.60" y="506.20" width="28.30" height="8.40" fill="#fbeaea"/>
<polyline points="1173.5,513.5 1176.8,507.3 1180.1,513.5 1183.4,507.3 1186.7,513.5 1190.0,507.3 1193.3,513.5 1196.6,507.3 1199.9,513.5" fill="none" stroke="#e01010" stroke-width="1.0" />
<rect x="1173.75" y="519.05" width="4.50" height="4.50" fill="#9a9a9a" stroke="#222" stroke-width="0.4"/>
<polyline points="1182.6,525.8 1182.6,517.8 1199.6,517.8" fill="none" stroke="#666" stroke-width="0.7" />
<polyline points="1182.9,525.8 1199.6,525.8 1199.6,518.1" fill="none" stroke="#f4f4f4" stroke-width="0.6" />
<text x="1198.40" y="524.10" font-size="6.0" fill="#111" text-anchor="end">67.0</text>
<text x="1201.10" y="524.10" font-size="6.0" fill="#18a0a8">%</text>
<text x="1199.50" y="534.20" font-size="5.6" fill="#10a010" text-anchor="end">2001 W</text>
<circle cx="1170.30" cy="539.00" r="1.60" fill="#20c020" stroke="#063" stroke-width="0.3" />
<text x="1173.00" y="540.20" font-size="3.4" fill="#000">Enable</text>
<circle cx="1190.50" cy="539.00" r="1.60" fill="#20c020" stroke="#063" stroke-width="0.3" />
<text x="1193.20" y="540.20" font-size="3.4" fill="#000">TSH</text>
<text x="1147.50" y="498.70" font-size="4.6" fill="#000" text-anchor="middle" stroke="#000" stroke-width="0.12">TT3485</text>
<line x1="1138.90" y1="499.70" x2="1156.10" y2="499.70" stroke="#000" stroke-width="0.5" />
<polyline points="1133.5,508.4 1133.5,500.4 1159.5,500.4" fill="none" stroke="#666" stroke-width="0.7" />
<polyline points="1133.8,508.4 1159.5,508.4 1159.5,500.7" fill="none" stroke="#f4f4f4" stroke-width="0.6" />
<text x="1158.30" y="506.70" font-size="6.0" fill="#111" text-anchor="end">75.0</text>
<text x="1161.00" y="506.70" font-size="6.0" fill="#18a0a8">K</text>
<line x1="1114.80" y1="523.50" x2="1121.30" y2="523.50" stroke="#000" stroke-width="0.8" />
<path d="M1121.10,517.10 a6.2,6.4 0 0 1 0,12.8 z" fill="url(#domeb)" stroke="#334" stroke-width="0.4" />
<polygon points="1110.50,517.20 1114.80,523.50 1119.10,517.20" fill="#10b010" stroke="#063" stroke-width="0.6" />
<polygon points="1110.50,529.80 1114.80,523.50 1119.10,529.80" fill="#10b010" stroke="#063" stroke-width="0.6" />
<text x="1128.50" y="521.80" font-size="5.6" fill="#000">CV3485</text>
<polyline points="1130.0,535.0 1130.0,527.0 1146.5,527.0" fill="none" stroke="#666" stroke-width="0.7" />
<polyline points="1130.3,535.0 1146.5,535.0 1146.5,527.3" fill="none" stroke="#f4f4f4" stroke-width="0.6" />
<text x="1145.30" y="533.30" font-size="6.0" fill="#111" text-anchor="end">84.3</text>
<text x="1148.00" y="533.30" font-size="6.0" fill="#18a0a8">%</text>
<polygon points="1110.50,517.20 1114.80,523.50 1119.10,517.20" fill="#10b010" stroke="#063" stroke-width="0.6" />
<polygon points="1110.50,529.80 1114.80,523.50 1119.10,529.80" fill="#fff" stroke="#063" stroke-width="0.6" />
<circle cx="1108.70" cy="517.00" r="1.40" fill="#444" />
<rect x="1120.35" y="531.25" width="4.50" height="4.50" fill="#6a6a6a" stroke="#222" stroke-width="0.4"/>
<text x="1052.50" y="532.00" font-size="4.6" fill="#000" text-anchor="middle" stroke="#000" stroke-width="0.12">TT3200</text>
<line x1="1043.90" y1="533.00" x2="1061.10" y2="533.00" stroke="#000" stroke-width="0.5" />
<polyline points="1041.5,541.7 1041.5,533.7 1063.0,533.7" fill="none" stroke="#666" stroke-width="0.7" />
<polyline points="1041.8,541.7 1063.0,541.7 1063.0,534.0" fill="none" stroke="#f4f4f4" stroke-width="0.6" />
<text x="1061.80" y="540.00" font-size="6.0" fill="#111" text-anchor="end">75.3</text>
<text x="1064.50" y="540.00" font-size="6.0" fill="#18a0a8">K</text>
<polyline points="1070.0,537.7 1097.0,537.7 1097.0,548.0" fill="none" stroke="#444" stroke-width="0.6" stroke-dasharray="1 1.2"/>
<text x="929.80" y="410.00" font-size="4.6" fill="#000" text-anchor="middle" stroke="#000" stroke-width="0.12">TT3493</text>
<line x1="921.20" y1="411.00" x2="938.40" y2="411.00" stroke="#000" stroke-width="0.5" />
<polyline points="921.3,419.7 921.3,411.7 940.8,411.7" fill="none" stroke="#666" stroke-width="0.7" />
<polyline points="921.6,419.7 940.8,419.7 940.8,412.0" fill="none" stroke="#f4f4f4" stroke-width="0.6" />
<text x="939.60" y="418.00" font-size="6.0" fill="#111" text-anchor="end">5.94</text>
<text x="942.30" y="418.00" font-size="6.0" fill="#18a0a8">K</text>
<line x1="929.60" y1="424.00" x2="929.60" y2="466.00" stroke="#444" stroke-width="0.6" stroke-dasharray="1 1.2"/>
<rect x="924.00" y="442.00" width="11.00" height="8.00" fill="#fff"/>
<text x="929.60" y="448.50" font-size="5.4" fill="#000" text-anchor="middle">0.5</text>
<text x="929.60" y="470.80" font-size="4.6" fill="#000" text-anchor="middle" stroke="#000" stroke-width="0.12">TT3495</text>
<line x1="921.00" y1="471.80" x2="938.20" y2="471.80" stroke="#000" stroke-width="0.5" />
<polyline points="916.6,480.5 916.6,472.5 940.0,472.5" fill="none" stroke="#666" stroke-width="0.7" />
<polyline points="916.9,480.5 940.0,480.5 940.0,472.8" fill="none" stroke="#f4f4f4" stroke-width="0.6" />
<text x="938.80" y="478.80" font-size="6.0" fill="#111" text-anchor="end">5.40</text>
<text x="941.50" y="478.80" font-size="6.0" fill="#18a0a8">K</text>
<polyline points="947.7,483.6 947.7,529.2 875.0,529.2 875.0,545.0" fill="none" stroke="#2b98d8" stroke-width="1.4" stroke-linejoin="round"/>
<line x1="875.00" y1="553.00" x2="875.00" y2="595.50" stroke="#2b98d8" stroke-width="1.4" />
<line x1="875.00" y1="603.00" x2="875.00" y2="661.50" stroke="#2b98d8" stroke-width="1.4" />
<line x1="873.00" y1="595.50" x2="877.00" y2="595.50" stroke="#2b98d8" stroke-width="0.8" />
<line x1="873.00" y1="603.00" x2="877.00" y2="603.00" stroke="#2b98d8" stroke-width="0.8" />
<line x1="873.00" y1="545.00" x2="877.00" y2="545.00" stroke="#2b98d8" stroke-width="0.8" />
<line x1="873.00" y1="553.00" x2="877.00" y2="553.00" stroke="#2b98d8" stroke-width="0.8" />
<polyline points="980.3,421.7 980.3,483.6" fill="none" stroke="#2b98d8" stroke-width="2" stroke-linejoin="round"/>
<line x1="980.30" y1="483.60" x2="980.30" y2="545.00" stroke="#2b98d8" stroke-width="1.4" />
<line x1="980.30" y1="553.00" x2="980.30" y2="595.50" stroke="#2b98d8" stroke-width="1.4" />
<line x1="980.30" y1="603.00" x2="980.30" y2="661.50" stroke="#2b98d8" stroke-width="1.4" />
<line x1="978.30" y1="545.00" x2="982.30" y2="545.00" stroke="#2b98d8" stroke-width="0.8" />
<line x1="978.30" y1="553.00" x2="982.30" y2="553.00" stroke="#2b98d8" stroke-width="0.8" />
<line x1="978.30" y1="595.50" x2="982.30" y2="595.50" stroke="#2b98d8" stroke-width="0.8" />
<line x1="978.30" y1="603.00" x2="982.30" y2="603.00" stroke="#2b98d8" stroke-width="0.8" />
<line x1="1034.40" y1="599.30" x2="1034.40" y2="661.50" stroke="#2b98d8" stroke-width="1.4" />
<line x1="1085.60" y1="549.20" x2="1085.60" y2="595.50" stroke="#2b98d8" stroke-width="1.4" />
<line x1="1085.60" y1="603.00" x2="1085.60" y2="661.50" stroke="#2b98d8" stroke-width="1.4" />
<line x1="1083.60" y1="595.50" x2="1087.60" y2="595.50" stroke="#2b98d8" stroke-width="0.8" />
<line x1="1083.60" y1="603.00" x2="1087.60" y2="603.00" stroke="#2b98d8" stroke-width="0.8" />
<line x1="1137.20" y1="594.50" x2="1137.20" y2="661.50" stroke="#2b98d8" stroke-width="1.4" />
<line x1="875.00" y1="638.00" x2="881.50" y2="638.00" stroke="#000" stroke-width="0.8" />
<path d="M881.30,631.60 a6.2,6.4 0 0 1 0,12.8 z" fill="url(#domeb)" stroke="#334" stroke-width="0.4" />
<polygon points="870.70,631.70 875.00,638.00 879.30,631.70" fill="#fff" stroke="#222" stroke-width="0.6" />
<polygon points="870.70,644.30 875.00,638.00 879.30,644.30" fill="#fff" stroke="#222" stroke-width="0.6" />
<text x="888.00" y="634.80" font-size="5.6" fill="#000">CV3302</text>
<polyline points="890.0,647.4 890.0,639.4 906.5,639.4" fill="none" stroke="#666" stroke-width="0.7" />
<polyline points="890.3,647.4 906.5,647.4 906.5,639.7" fill="none" stroke="#f4f4f4" stroke-width="0.6" />
<text x="905.30" y="645.70" font-size="6.0" fill="#111" text-anchor="end">0.0</text>
<text x="908.00" y="645.70" font-size="6.0" fill="#18a0a8">%</text>
<polygon points="875.00,655.50 872.40,660.00 877.60,660.00" fill="#000" />
<line x1="980.30" y1="638.00" x2="986.80" y2="638.00" stroke="#000" stroke-width="0.8" />
<path d="M986.60,631.60 a6.2,6.4 0 0 1 0,12.8 z" fill="url(#domeb)" stroke="#334" stroke-width="0.4" />
<polygon points="976.00,631.70 980.30,638.00 984.60,631.70" fill="#fff" stroke="#222" stroke-width="0.6" />
<polygon points="976.00,644.30 980.30,638.00 984.60,644.30" fill="#fff" stroke="#222" stroke-width="0.6" />
<text x="993.30" y="634.80" font-size="5.6" fill="#000">CV3481</text>
<polyline points="995.3,647.4 995.3,639.4 1011.8,639.4" fill="none" stroke="#666" stroke-width="0.7" />
<polyline points="995.6,647.4 1011.8,647.4 1011.8,639.7" fill="none" stroke="#f4f4f4" stroke-width="0.6" />
<text x="1010.60" y="645.70" font-size="6.0" fill="#111" text-anchor="end">0.0</text>
<text x="1013.30" y="645.70" font-size="6.0" fill="#18a0a8">%</text>
<polygon points="980.30,660.00 977.70,655.50 982.90,655.50" fill="#000" />
<line x1="1034.40" y1="638.00" x2="1040.90" y2="638.00" stroke="#000" stroke-width="0.8" />
<path d="M1040.70,631.60 a6.2,6.4 0 0 1 0,12.8 z" fill="url(#domer)" stroke="#334" stroke-width="0.4" />
<polygon points="1030.10,631.70 1034.40,638.00 1038.70,631.70" fill="#fff" stroke="#222" stroke-width="0.6" />
<polygon points="1030.10,644.30 1034.40,638.00 1038.70,644.30" fill="#fff" stroke="#222" stroke-width="0.6" />
<text x="1047.40" y="634.80" font-size="5.6" fill="#000">CV3301</text>
<polyline points="1049.4,647.4 1049.4,639.4 1065.9,639.4" fill="none" stroke="#666" stroke-width="0.7" />
<polyline points="1049.7,647.4 1065.9,647.4 1065.9,639.7" fill="none" stroke="#f4f4f4" stroke-width="0.6" />
<text x="1064.70" y="645.70" font-size="6.0" fill="#111" text-anchor="end">0.0</text>
<text x="1067.40" y="645.70" font-size="6.0" fill="#18a0a8">%</text>
<polygon points="1034.40,660.00 1031.80,655.50 1037.00,655.50" fill="#000" />
<line x1="1085.60" y1="638.00" x2="1092.10" y2="638.00" stroke="#000" stroke-width="0.8" />
<path d="M1091.90,631.60 a6.2,6.4 0 0 1 0,12.8 z" fill="url(#domeb)" stroke="#334" stroke-width="0.4" />
<polygon points="1081.30,631.70 1085.60,638.00 1089.90,631.70" fill="#fff" stroke="#222" stroke-width="0.6" />
<polygon points="1081.30,644.30 1085.60,638.00 1089.90,644.30" fill="#fff" stroke="#222" stroke-width="0.6" />
<text x="1098.60" y="634.80" font-size="5.6" fill="#000">CV3391</text>
<polyline points="1100.6,647.4 1100.6,639.4 1117.1,639.4" fill="none" stroke="#666" stroke-width="0.7" />
<polyline points="1100.9,647.4 1117.1,647.4 1117.1,639.7" fill="none" stroke="#f4f4f4" stroke-width="0.6" />
<text x="1115.90" y="645.70" font-size="6.0" fill="#111" text-anchor="end">0.0</text>
<text x="1118.60" y="645.70" font-size="6.0" fill="#18a0a8">%</text>
<polygon points="1085.60,660.00 1083.00,655.50 1088.20,655.50" fill="#000" />
<line x1="1137.20" y1="638.00" x2="1143.70" y2="638.00" stroke="#000" stroke-width="0.8" />
<path d="M1143.50,631.60 a6.2,6.4 0 0 1 0,12.8 z" fill="url(#domeb)" stroke="#334" stroke-width="0.4" />
<polygon points="1132.90,631.70 1137.20,638.00 1141.50,631.70" fill="#fff" stroke="#222" stroke-width="0.6" />
<polygon points="1132.90,644.30 1137.20,638.00 1141.50,644.30" fill="#fff" stroke="#222" stroke-width="0.6" />
<text x="1150.20" y="634.80" font-size="5.6" fill="#000">CV3541</text>
<polyline points="1152.2,647.4 1152.2,639.4 1168.7,639.4" fill="none" stroke="#666" stroke-width="0.7" />
<polyline points="1152.5,647.4 1168.7,647.4 1168.7,639.7" fill="none" stroke="#f4f4f4" stroke-width="0.6" />
<text x="1167.50" y="645.70" font-size="6.0" fill="#111" text-anchor="end">0.0</text>
<text x="1170.20" y="645.70" font-size="6.0" fill="#18a0a8">%</text>
<polygon points="1137.20,660.00 1134.60,655.50 1139.80,655.50" fill="#000" />
<rect x="1039.00" y="625.50" width="4.00" height="4.00" fill="#b07828" stroke="#222" stroke-width="0.4"/>
<rect x="1039.00" y="647.00" width="4.00" height="4.00" fill="#4a8a4a" stroke="#222" stroke-width="0.4"/>
<circle cx="1026.00" cy="647.00" r="1.30" fill="#444" />
<text x="1129.50" y="646.00" font-size="3.6" fill="#18a0a8">L</text>
<circle cx="1131.00" cy="649.50" r="1.60" fill="#20c020" stroke="#063" stroke-width="0.3" />
<text x="935.20" y="647.80" font-size="4.6" fill="#000" text-anchor="middle" stroke="#000" stroke-width="0.12">TT3301</text>
<line x1="926.60" y1="648.80" x2="943.80" y2="648.80" stroke="#000" stroke-width="0.5" />
<polyline points="925.2,657.5 925.2,649.5 947.7,649.5" fill="none" stroke="#666" stroke-width="0.7" />
<polyline points="925.5,657.5 947.7,657.5 947.7,649.8" fill="none" stroke="#f4f4f4" stroke-width="0.6" />
<text x="946.50" y="655.80" font-size="6.0" fill="#111" text-anchor="end">246.6</text>
<text x="949.20" y="655.80" font-size="6.0" fill="#18a0a8">K</text>
<polygon points="1229.40,549.20 1238.40,544.60 1238.40,553.80" fill="#000" />
<rect x="1238.40" y="544.20" width="50.20" height="9.50" fill="#fff" stroke="#333" stroke-width="0.7"/>
<text x="1263.50" y="551.20" font-size="5.2" fill="#000" text-anchor="middle">LP from 4K</text>
<text x="1203.40" y="556.00" font-size="4.6" fill="#000" text-anchor="middle" stroke="#000" stroke-width="0.12">PT4300</text>
<line x1="1194.80" y1="557.00" x2="1212.00" y2="557.00" stroke="#000" stroke-width="0.5" />
<polyline points="1191.8,565.7 1191.8,557.7 1213.4,557.7" fill="none" stroke="#666" stroke-width="0.7" />
<polyline points="1192.1,565.7 1213.4,565.7 1213.4,558.0" fill="none" stroke="#f4f4f4" stroke-width="0.6" />
<text x="1212.20" y="564.00" font-size="6.0" fill="#111" text-anchor="end">1.01</text>
<text x="1214.90" y="564.00" font-size="6.0" fill="#18a0a8">bar</text>
<rect x="1106.60" y="561.80" width="61.70" height="8.50" fill="#fff" stroke="#333" stroke-width="0.7"/>
<text x="1137.40" y="568.20" font-size="5.0" fill="#000" text-anchor="middle">From Thermal Shield</text>
<circle cx="1137.20" cy="578.80" r="6.30" fill="#bdbdbd" stroke="#555" stroke-width="0.7" />
<text x="1137.20" y="580.80" font-size="5.2" fill="#222" text-anchor="middle">A</text>
<polygon points="1137.20,594.30 1132.80,586.30 1141.60,586.30" fill="#000" />
<line x1="1137.20" y1="585.00" x2="1137.20" y2="588.00" stroke="#000" stroke-width="0.8" />
<polygon points="1229.40,599.30 1238.40,594.70 1238.40,603.90" fill="#000" />
<rect x="1238.40" y="594.30" width="50.20" height="10.10" fill="#fde6bd" stroke="#555" stroke-width="0.8"/>
<text x="1263.50" y="601.25" font-size="5.2" fill="#000" text-anchor="middle">VLP 2K</text>
<polygon points="1229.40,661.50 1238.40,656.90 1238.40,666.10" fill="#000" />
<rect x="1238.40" y="657.00" width="50.20" height="9.50" fill="#fff" stroke="#333" stroke-width="0.7"/>
<text x="1263.50" y="664.00" font-size="5.0" fill="#000" text-anchor="middle">Return cooldown</text>
<rect x="1303.97" y="2.80" width="1295.20" height="40.80" fill="url(#hdr)"/>
<rect x="1303.97" y="43.40" width="1295.20" height="2.40" fill="#868686"/>
<rect x="1303.97" y="45.80" width="1295.20" height="657.20" fill="#dcdcdc"/>
<rect x="1309.37" y="9.70" width="90.50" height="26.00" fill="#fff"/>
<line x1="1400.97" y1="7.00" x2="1400.97" y2="39.00" stroke="#9a9a9a" stroke-width="0.7" />
<path d="M1317.57,13.00 h6.4 a7.3,8.6 0 0 1 7.3,8.6 a7,8.6 0 0 1 -7,8.6 a6.9,8.2 0 0 1 -6.7,-8.2 z" fill="#2f5aa8" />
<ellipse cx="1324.57" cy="21.70" rx="4.7" ry="5.9" fill="#fff"/>
<path d="M1321.97,18.00 h2.7 a2.9,3.8 0 0 1 2.9,3.8 a2.9,3.7 0 0 1 -2.9,3.7 a2.8,3.6 0 0 1 -2.7,-3.6 z" fill="#2f5aa8" />
<text x="1333.97" y="27.60" font-size="14" fill="#e2001a" textLength="57.8" lengthAdjust="spacingAndGlyphs" stroke="#e2001a" stroke-width="0.22">Air Liquide</text>
<text x="1478.67" y="19.20" font-size="11.3" fill="#111" text-anchor="middle" font-weight="bold">HIAF</text>
<text x="1478.67" y="36.80" font-size="11.3" fill="#111" text-anchor="middle" font-weight="bold">IMPCAS</text>
<rect x="1303.97" y="703.40" width="1295.20" height="25.10" fill="url(#navbg)"/>
<rect x="1303.97" y="702.70" width="1295.20" height="1.00" fill="#9a9ca8"/>
<rect x="1303.97" y="703.40" width="25.20" height="25.10" fill="url(#navbg)"/>
<polygon points="1309.27,715.00 1316.27,707.50 1323.27,715.00" fill="#d8c8a0" stroke="#8a7a5a" stroke-width="0.5" />
<rect x="1310.77" y="714.00" width="11.00" height="8.50" fill="#f0ead8" stroke="#a09880" stroke-width="0.5"/>
<rect x="1314.77" y="716.50" width="3.00" height="6.00" fill="#c87818"/>
<circle cx="1316.27" cy="713.40" r="1.50" fill="#5a9ae0" />
<rect x="1329.67" y="703.40" width="75.40" height="25.10" fill="url(#navbtn)"/>
<line x1="1329.42" y1="703.40" x2="1329.42" y2="728.50" stroke="#2e3040" stroke-width="0.6" />
<path d="M1333.37,713.70 h3 a1.8,1.8 0 1 1 2.6,0 h3 v3 a1.8,1.8 0 1 1 0,2.6 v3 h-3.2 a1.7,1.7 0 1 0 -2.4,0 h-3 v-3 a1.7,1.7 0 1 0 0,-2.6 z" fill="#f6b822" stroke="#c88a10" stroke-width="0.4" />
<text x="1371.97" y="718.60" font-size="7.2" fill="#fff" text-anchor="middle">Compressors</text>
<rect x="1405.57" y="703.40" width="75.40" height="25.10" fill="url(#navbtn)"/>
<line x1="1405.32" y1="703.40" x2="1405.32" y2="728.50" stroke="#2e3040" stroke-width="0.6" />
<path d="M1409.27,713.70 h3 a1.8,1.8 0 1 1 2.6,0 h3 v3 a1.8,1.8 0 1 1 0,2.6 v3 h-3.2 a1.7,1.7 0 1 0 -2.4,0 h-3 v-3 a1.7,1.7 0 1 0 0,-2.6 z" fill="#f6b822" stroke="#c88a10" stroke-width="0.4" />
<text x="1447.87" y="718.60" font-size="7.2" fill="#fff" text-anchor="middle">Cold box</text>
<rect x="1481.47" y="703.40" width="75.40" height="25.10" fill="url(#navbtn)"/>
<line x1="1481.22" y1="703.40" x2="1481.22" y2="728.50" stroke="#2e3040" stroke-width="0.6" />
<path d="M1485.17,713.70 h3 a1.8,1.8 0 1 1 2.6,0 h3 v3 a1.8,1.8 0 1 1 0,2.6 v3 h-3.2 a1.7,1.7 0 1 0 -2.4,0 h-3 v-3 a1.7,1.7 0 1 0 0,-2.6 z" fill="#f6b822" stroke="#c88a10" stroke-width="0.4" />
<text x="1523.77" y="718.60" font-size="7.2" fill="#fff" text-anchor="middle">Turbines</text>
<rect x="1557.37" y="703.40" width="75.40" height="25.10" fill="url(#navbtn)"/>
<line x1="1557.12" y1="703.40" x2="1557.12" y2="728.50" stroke="#2e3040" stroke-width="0.6" />
<path d="M1561.07,713.70 h3 a1.8,1.8 0 1 1 2.6,0 h3 v3 a1.8,1.8 0 1 1 0,2.6 v3 h-3.2 a1.7,1.7 0 1 0 -2.4,0 h-3 v-3 a1.7,1.7 0 1 0 0,-2.6 z" fill="#f6b822" stroke="#c88a10" stroke-width="0.4" />
<text x="1599.67" y="718.60" font-size="7.2" fill="#fff" text-anchor="middle">2K system</text>
<rect x="1633.27" y="703.40" width="75.40" height="25.10" fill="url(#navbtn)"/>
<line x1="1633.02" y1="703.40" x2="1633.02" y2="728.50" stroke="#2e3040" stroke-width="0.6" />
<path d="M1636.97,713.70 h3 a1.8,1.8 0 1 1 2.6,0 h3 v3 a1.8,1.8 0 1 1 0,2.6 v3 h-3.2 a1.7,1.7 0 1 0 -2.4,0 h-3 v-3 a1.7,1.7 0 1 0 0,-2.6 z" fill="#f6b822" stroke="#c88a10" stroke-width="0.4" />
<text x="1675.57" y="718.60" font-size="7.2" fill="#fff" text-anchor="middle">Regeneration</text>
<rect x="1709.17" y="703.40" width="75.40" height="25.10" fill="url(#navbtn)"/>
<line x1="1708.92" y1="703.40" x2="1708.92" y2="728.50" stroke="#2e3040" stroke-width="0.6" />
<rect x="1713.37" y="710.20" width="9.50" height="12.50" fill="#d8a050" stroke="#a87028" stroke-width="0.5" rx="1"/>
<line x1="1713.37" y1="714.40" x2="1722.87" y2="714.40" stroke="#a87028" stroke-width="0.5" />
<line x1="1713.37" y1="718.60" x2="1722.87" y2="718.60" stroke="#a87028" stroke-width="0.5" />
<text x="1751.47" y="718.60" font-size="7.2" fill="#fff" text-anchor="middle">Documentation</text>
<rect x="1785.07" y="703.40" width="75.40" height="25.10" fill="url(#navbtn)"/>
<line x1="1784.82" y1="703.40" x2="1784.82" y2="728.50" stroke="#2e3040" stroke-width="0.6" />
<circle cx="1793.77" cy="716.20" r="4.00" fill="none" stroke="#c8c8c8" stroke-width="3.2" stroke-dasharray="2.1 1.05"/>
<circle cx="1793.77" cy="716.20" r="3.30" fill="#c8c8c8" />
<circle cx="1793.77" cy="716.20" r="1.60" fill="#4a4c5e" />
<text x="1827.37" y="718.60" font-size="7.2" fill="#fff" text-anchor="middle">Parameters</text>
<rect x="1860.97" y="703.40" width="75.40" height="25.10" fill="url(#navbtn)"/>
<line x1="1860.72" y1="703.40" x2="1860.72" y2="728.50" stroke="#2e3040" stroke-width="0.6" />
<polygon points="1863.67,712.70 1869.17,709.70 1874.67,712.70 1874.67,719.20 1869.17,722.20 1863.67,719.20" fill="#5aa8e8" stroke="#3a80c0" stroke-width="0.4" />
<polygon points="1863.67,712.70 1869.17,709.70 1874.67,712.70 1869.17,715.40" fill="#a8d4f4" />
<polygon points="1870.67,719.20 1874.17,719.20 1874.17,717.60 1877.17,720.20 1874.17,722.80 1874.17,721.20 1870.67,721.20" fill="#58c020" />
<text x="1903.27" y="714.20" font-size="7.1" fill="#fff" text-anchor="middle">Commands</text>
<text x="1903.27" y="721.80" font-size="7.1" fill="#fff" text-anchor="middle">Sequences WCS</text>
<rect x="1936.87" y="703.40" width="75.40" height="25.10" fill="url(#navbtn)"/>
<line x1="1936.62" y1="703.40" x2="1936.62" y2="728.50" stroke="#2e3040" stroke-width="0.6" />
<polygon points="1939.57,712.70 1945.07,709.70 1950.57,712.70 1950.57,719.20 1945.07,722.20 1939.57,719.20" fill="#5aa8e8" stroke="#3a80c0" stroke-width="0.4" />
<polygon points="1939.57,712.70 1945.07,709.70 1950.57,712.70 1945.07,715.40" fill="#a8d4f4" />
<polygon points="1946.57,719.20 1950.07,719.20 1950.07,717.60 1953.07,720.20 1950.07,722.80 1950.07,721.20 1946.57,721.20" fill="#58c020" />
<text x="1979.17" y="714.20" font-size="7.1" fill="#fff" text-anchor="middle">Commands</text>
<text x="1979.17" y="721.80" font-size="7.1" fill="#fff" text-anchor="middle">Sequences CB</text>
<rect x="2012.77" y="703.40" width="75.40" height="25.10" fill="url(#navbtn)"/>
<line x1="2012.52" y1="703.40" x2="2012.52" y2="728.50" stroke="#2e3040" stroke-width="0.6" />
<rect x="2015.47" y="710.20" width="12.00" height="12.00" fill="#f4f4f0" stroke="#b0b0b0" stroke-width="0.4"/>
<polyline points="2016.5,718.2 2020.0,713.2 2023.0,716.2 2026.5,712.7" fill="none" stroke="#e04040" stroke-width="0.9" />
<polyline points="2016.5,720.2 2020.0,716.7 2023.0,713.2 2026.5,715.2" fill="none" stroke="#40a040" stroke-width="0.9" />
<text x="2055.07" y="718.60" font-size="7.2" fill="#fff" text-anchor="middle">Trends</text>
<rect x="2088.67" y="703.40" width="75.40" height="25.10" fill="url(#navbtn)"/>
<line x1="2088.42" y1="703.40" x2="2088.42" y2="728.50" stroke="#2e3040" stroke-width="0.6" />
<rect x="2091.37" y="710.20" width="12.00" height="12.00" fill="#f0f4f8" stroke="#9ab" stroke-width="0.4"/>
<polyline points="2092.9,720.2 2092.9,715.2 2095.4,715.2 2095.4,720.2 2097.4,720.2 2097.4,711.7 2099.4,711.7 2099.4,717.2 2101.9,717.2 2101.9,713.2" fill="none" stroke="#2a5a98" stroke-width="1.0" />
<text x="2130.97" y="718.60" font-size="7.2" fill="#fff" text-anchor="middle">Sequences</text>
<rect x="1555.17" y="10.40" width="24.40" height="24.80" fill="#c4c4c4" stroke="#b2b2b2" stroke-width="0.7"/>
<path d="M1561.87,24.30 l7,-7 a2.5,2.5 0 0 1 3.5,3.5 l-4.5,8.5 z" fill="#f0c040" stroke="#b88a20" stroke-width="0.5" />
<circle cx="1564.07" cy="27.00" r="1.50" fill="#c89020" />
<rect x="1642.40" y="52.50" width="408.40" height="94.30" fill="#fff" stroke="#000" stroke-width="1.0"/>
<text x="1659.00" y="63.30" font-size="6.3" fill="#000" text-anchor="middle">Remote</text>
<rect x="1655.50" y="67.50" width="7.00" height="7.00" fill="#3a4cc8" stroke="#223" stroke-width="0.5"/>
<text x="1694.50" y="63.30" font-size="6.3" fill="#000" text-anchor="middle">PVPS stable</text>
<rect x="1691.00" y="67.50" width="7.00" height="7.00" fill="#3a4cc8" stroke="#223" stroke-width="0.5"/>
<text x="1731.00" y="63.30" font-size="6.3" fill="#000" text-anchor="middle">PVPS OK</text>
<rect x="1727.50" y="67.50" width="7.00" height="7.00" fill="#3a4cc8" stroke="#223" stroke-width="0.5"/>
<rect x="1645.90" y="80.00" width="106.70" height="18.50" fill="url(#gbtn)" stroke="#b0b0b0" stroke-width="0.5"/>
<polygon points="1654.00,85.50 1654.00,93.00 1658.50,89.20" fill="#3a7ae0" />
<text x="1668.40" y="91.50" font-size="6.3" fill="#111">PVPS Reset</text>
<rect x="1645.90" y="101.00" width="106.70" height="18.50" fill="url(#gbtn)" stroke="#b0b0b0" stroke-width="0.5"/>
<polygon points="1654.00,106.50 1654.00,114.00 1658.50,110.20" fill="#3a7ae0" />
<text x="1668.40" y="112.50" font-size="6.3" fill="#111">PVPS Remote Local</text>
<text x="1646.90" y="134.80" font-size="6.4" fill="#000">Nb necessary pumps :</text>
<rect x="1712.50" y="127.50" width="11.00" height="10.50" fill="#fff" stroke="#666" stroke-width="0.6"/>
<text x="1718.00" y="135.20" font-size="5.6" fill="#000" text-anchor="middle">7</text>
<text x="1767.60" y="61.00" font-size="5.8" fill="#000" text-anchor="middle">Available</text>
<rect x="1763.10" y="64.00" width="7.00" height="7.00" fill="#fff" stroke="#444" stroke-width="0.6"/>
<rect x="1781.60" y="57.50" width="107.50" height="20.00" fill="url(#dbtn)" stroke="#2a2c3a" stroke-width="0.5"/>
<polyline points="1787.8,67.5 1790.4,70.1 1794.8,64.5" fill="none" stroke="#70d020" stroke-width="1.8" />
<text x="1804.90" y="69.50" font-size="6.2" fill="#fff">VLP1 Enable</text>
<rect x="1763.10" y="85.45" width="7.00" height="7.00" fill="#fff" stroke="#444" stroke-width="0.6"/>
<rect x="1781.60" y="78.95" width="107.50" height="20.00" fill="url(#dbtn)" stroke="#2a2c3a" stroke-width="0.5"/>
<polyline points="1787.8,89.0 1790.4,91.5 1794.8,86.0" fill="none" stroke="#70d020" stroke-width="1.8" />
<text x="1804.90" y="90.95" font-size="6.2" fill="#fff">VLP2 Enable</text>
<rect x="1763.10" y="106.90" width="7.00" height="7.00" fill="#fff" stroke="#444" stroke-width="0.6"/>
<rect x="1781.60" y="100.40" width="107.50" height="20.00" fill="url(#dbtn)" stroke="#2a2c3a" stroke-width="0.5"/>
<polyline points="1787.8,110.4 1790.4,113.0 1794.8,107.4" fill="none" stroke="#70d020" stroke-width="1.8" />
<text x="1804.90" y="112.40" font-size="6.2" fill="#fff">VLP3 Enable</text>
<rect x="1763.10" y="128.35" width="7.00" height="7.00" fill="#fff" stroke="#444" stroke-width="0.6"/>
<rect x="1781.60" y="121.85" width="107.50" height="20.00" fill="url(#dbtn)" stroke="#2a2c3a" stroke-width="0.5"/>
<polyline points="1787.8,131.8 1790.4,134.4 1794.8,128.8" fill="none" stroke="#70d020" stroke-width="1.8" />
<text x="1804.90" y="133.85" font-size="6.2" fill="#fff">VLP4 Enable</text>
<text x="1925.50" y="61.00" font-size="5.8" fill="#000" text-anchor="middle">Available</text>
<rect x="1921.00" y="64.00" width="7.00" height="7.00" fill="#fff" stroke="#444" stroke-width="0.6"/>
<rect x="1939.00" y="57.50" width="107.50" height="20.00" fill="url(#dbtn)" stroke="#2a2c3a" stroke-width="0.5"/>
<polyline points="1945.2,67.5 1947.8,70.1 1952.2,64.5" fill="none" stroke="#70d020" stroke-width="1.8" />
<text x="1962.30" y="69.50" font-size="6.2" fill="#fff">VLP5 Enable</text>
<rect x="1921.00" y="85.45" width="7.00" height="7.00" fill="#fff" stroke="#444" stroke-width="0.6"/>
<rect x="1939.00" y="78.95" width="107.50" height="20.00" fill="url(#dbtn)" stroke="#2a2c3a" stroke-width="0.5"/>
<polyline points="1945.2,89.0 1947.8,91.5 1952.2,86.0" fill="none" stroke="#70d020" stroke-width="1.8" />
<text x="1962.30" y="90.95" font-size="6.2" fill="#fff">VLP6 Enable</text>
<rect x="1921.00" y="106.90" width="7.00" height="7.00" fill="#fff" stroke="#444" stroke-width="0.6"/>
<rect x="1939.00" y="100.40" width="107.50" height="20.00" fill="url(#dbtn)" stroke="#2a2c3a" stroke-width="0.5"/>
<polyline points="1945.2,110.4 1947.8,113.0 1952.2,107.4" fill="none" stroke="#70d020" stroke-width="1.8" />
<text x="1962.30" y="112.40" font-size="6.2" fill="#fff">VLP7 Enable</text>
<text x="2419.60" y="58.80" font-size="7.0" fill="#111" text-anchor="middle">COLD COMPRESSORS</text>
<rect x="2264.50" y="66.70" width="99.60" height="181.00" fill="#b9b9b9" stroke="#000" stroke-width="1.4"/>
<text x="2311.90" y="75.60" font-size="7.3" fill="#111" text-anchor="middle">CC3230</text>
<circle cx="2276.80" cy="101.20" r="4.10" fill="#2a7af0" stroke="#e8f0ff" stroke-width="1.0" />
<circle cx="2276.00" cy="100.20" r="1.30" fill="#9ac8ff" />
<text x="2284.00" y="103.10" font-size="5.4" fill="#000">Enabled</text>
<circle cx="2326.90" cy="101.20" r="4.10" fill="#505050" stroke="#e8e8e8" stroke-width="1.0" />
<circle cx="2326.10" cy="100.20" r="1.30" fill="#a0a0a0" />
<text x="2334.10" y="103.10" font-size="5.4" fill="#000">Initializing</text>
<circle cx="2276.80" cy="111.70" r="4.10" fill="#2a7af0" stroke="#e8f0ff" stroke-width="1.0" />
<circle cx="2276.00" cy="110.70" r="1.30" fill="#9ac8ff" />
<text x="2284.00" y="113.60" font-size="5.4" fill="#000">Fault</text>
<circle cx="2326.90" cy="111.70" r="4.10" fill="#2a7af0" stroke="#e8f0ff" stroke-width="1.0" />
<circle cx="2326.10" cy="110.70" r="1.30" fill="#9ac8ff" />
<text x="2334.10" y="113.60" font-size="5.4" fill="#000">Started</text>
<circle cx="2276.80" cy="122.20" r="4.10" fill="#2a7af0" stroke="#e8f0ff" stroke-width="1.0" />
<circle cx="2276.00" cy="121.20" r="1.30" fill="#9ac8ff" />
<text x="2284.00" y="124.10" font-size="5.4" fill="#000">Levitated</text>
<circle cx="2326.90" cy="122.20" r="4.10" fill="#2a7af0" stroke="#e8f0ff" stroke-width="1.0" />
<circle cx="2326.10" cy="121.20" r="1.30" fill="#9ac8ff" />
<text x="2334.10" y="124.10" font-size="5.4" fill="#000">Rotating</text>
<text x="2278.80" y="137.40" font-size="6.3" fill="#000">Graph 3100C:</text>
<text x="2329.00" y="137.40" font-size="6.3" fill="#000">3110</text>
<text x="2324.40" y="154.50" font-size="5.2" fill="#000" text-anchor="end">PR</text>
<text x="2350.50" y="154.80" font-size="6.0" fill="#000" text-anchor="end">1.97</text>
<text x="2324.40" y="164.00" font-size="5.2" fill="#000" text-anchor="end">Nr</text>
<text x="2350.50" y="164.30" font-size="6.0" fill="#000" text-anchor="end">0.99</text>
<text x="2324.40" y="173.50" font-size="5.2" fill="#000" text-anchor="end">Qr</text>
<text x="2350.50" y="173.80" font-size="6.0" fill="#000" text-anchor="end">0.25</text>
<text x="2324.40" y="183.60" font-size="5.2" fill="#000" text-anchor="end">Qr Trip Margin</text>
<text x="2350.50" y="183.90" font-size="6.0" fill="#000" text-anchor="end">33.08</text>
<text x="2353.80" y="183.90" font-size="5.6" fill="#000">%</text>
<text x="2324.40" y="192.60" font-size="5.2" fill="#000" text-anchor="end">Qr Trip</text>
<text x="2350.50" y="192.90" font-size="6.0" fill="#000" text-anchor="end">0.19</text>
<text x="2324.40" y="202.60" font-size="5.2" fill="#000" text-anchor="end">Qr Alarm</text>
<text x="2350.50" y="202.90" font-size="6.0" fill="#000" text-anchor="end">0.20</text>
<text x="2324.40" y="212.60" font-size="5.2" fill="#000" text-anchor="end">Nmax</text>
<text x="2350.50" y="212.90" font-size="6.0" fill="#000" text-anchor="end">100.0</text>
<text x="2353.80" y="212.90" font-size="5.6" fill="#000">%</text>
<rect x="2269.30" y="224.50" width="71.20" height="20.00" fill="url(#dbtn)" stroke="#2a2c3a" stroke-width="0.5"/>
<polygon points="2276.80,230.90 2276.80,238.10 2281.30,234.50" fill="#3a7ae0" />
<text x="2292.50" y="236.50" font-size="6.2" fill="#fff">MECOS Reset</text>
<rect x="2367.70" y="66.70" width="99.10" height="181.00" fill="#b9b9b9" stroke="#000" stroke-width="1.4"/>
<text x="2414.85" y="75.60" font-size="7.3" fill="#111" text-anchor="middle">CC3220</text>
<circle cx="2380.00" cy="101.20" r="4.10" fill="#2a7af0" stroke="#e8f0ff" stroke-width="1.0" />
<circle cx="2379.20" cy="100.20" r="1.30" fill="#9ac8ff" />
<text x="2387.20" y="103.10" font-size="5.4" fill="#000">Enabled</text>
<circle cx="2430.10" cy="101.20" r="4.10" fill="#505050" stroke="#e8e8e8" stroke-width="1.0" />
<circle cx="2429.30" cy="100.20" r="1.30" fill="#a0a0a0" />
<text x="2437.30" y="103.10" font-size="5.4" fill="#000">Initializing</text>
<circle cx="2380.00" cy="111.70" r="4.10" fill="#2a7af0" stroke="#e8f0ff" stroke-width="1.0" />
<circle cx="2379.20" cy="110.70" r="1.30" fill="#9ac8ff" />
<text x="2387.20" y="113.60" font-size="5.4" fill="#000">Fault</text>
<circle cx="2430.10" cy="111.70" r="4.10" fill="#2a7af0" stroke="#e8f0ff" stroke-width="1.0" />
<circle cx="2429.30" cy="110.70" r="1.30" fill="#9ac8ff" />
<text x="2437.30" y="113.60" font-size="5.4" fill="#000">Started</text>
<circle cx="2380.00" cy="122.20" r="4.10" fill="#2a7af0" stroke="#e8f0ff" stroke-width="1.0" />
<circle cx="2379.20" cy="121.20" r="1.30" fill="#9ac8ff" />
<text x="2387.20" y="124.10" font-size="5.4" fill="#000">Levitated</text>
<circle cx="2430.10" cy="122.20" r="4.10" fill="#2a7af0" stroke="#e8f0ff" stroke-width="1.0" />
<circle cx="2429.30" cy="121.20" r="1.30" fill="#9ac8ff" />
<text x="2437.30" y="124.10" font-size="5.4" fill="#000">Rotating</text>
<text x="2382.00" y="137.40" font-size="6.3" fill="#000">Graph 3100B:</text>
<text x="2432.20" y="137.40" font-size="6.3" fill="#000">3110</text>
<text x="2427.60" y="154.50" font-size="5.2" fill="#000" text-anchor="end">PR</text>
<text x="2453.70" y="154.80" font-size="6.0" fill="#000" text-anchor="end">3.15</text>
<text x="2427.60" y="164.00" font-size="5.2" fill="#000" text-anchor="end">Nr</text>
<text x="2453.70" y="164.30" font-size="6.0" fill="#000" text-anchor="end">1.33</text>
<text x="2427.60" y="173.50" font-size="5.2" fill="#000" text-anchor="end">Qr</text>
<text x="2453.70" y="173.80" font-size="6.0" fill="#000" text-anchor="end">0.44</text>
<text x="2427.60" y="183.60" font-size="5.2" fill="#000" text-anchor="end">Qr Trip Margin</text>
<text x="2453.70" y="183.90" font-size="6.0" fill="#000" text-anchor="end">33.77</text>
<text x="2457.00" y="183.90" font-size="5.6" fill="#000">%</text>
<text x="2427.60" y="192.60" font-size="5.2" fill="#000" text-anchor="end">Qr Trip</text>
<text x="2453.70" y="192.90" font-size="6.0" fill="#000" text-anchor="end">0.33</text>
<text x="2427.60" y="202.60" font-size="5.2" fill="#000" text-anchor="end">Qr Alarm</text>
<text x="2453.70" y="202.90" font-size="6.0" fill="#000" text-anchor="end">0.34</text>
<text x="2427.60" y="212.60" font-size="5.2" fill="#000" text-anchor="end">Nmax</text>
<text x="2453.70" y="212.90" font-size="6.0" fill="#000" text-anchor="end">100.0</text>
<text x="2457.00" y="212.90" font-size="5.6" fill="#000">%</text>
<rect x="2470.50" y="66.70" width="99.80" height="181.00" fill="#b9b9b9" stroke="#000" stroke-width="1.4"/>
<text x="2518.00" y="75.60" font-size="7.3" fill="#111" text-anchor="middle">CC3210</text>
<circle cx="2482.80" cy="101.20" r="4.10" fill="#2a7af0" stroke="#e8f0ff" stroke-width="1.0" />
<circle cx="2482.00" cy="100.20" r="1.30" fill="#9ac8ff" />
<text x="2490.00" y="103.10" font-size="5.4" fill="#000">Enabled</text>
<circle cx="2532.90" cy="101.20" r="4.10" fill="#505050" stroke="#e8e8e8" stroke-width="1.0" />
<circle cx="2532.10" cy="100.20" r="1.30" fill="#a0a0a0" />
<text x="2540.10" y="103.10" font-size="5.4" fill="#000">Initializing</text>
<circle cx="2482.80" cy="111.70" r="4.10" fill="#2a7af0" stroke="#e8f0ff" stroke-width="1.0" />
<circle cx="2482.00" cy="110.70" r="1.30" fill="#9ac8ff" />
<text x="2490.00" y="113.60" font-size="5.4" fill="#000">Fault</text>
<circle cx="2532.90" cy="111.70" r="4.10" fill="#2a7af0" stroke="#e8f0ff" stroke-width="1.0" />
<circle cx="2532.10" cy="110.70" r="1.30" fill="#9ac8ff" />
<text x="2540.10" y="113.60" font-size="5.4" fill="#000">Started</text>
<circle cx="2482.80" cy="122.20" r="4.10" fill="#2a7af0" stroke="#e8f0ff" stroke-width="1.0" />
<circle cx="2482.00" cy="121.20" r="1.30" fill="#9ac8ff" />
<text x="2490.00" y="124.10" font-size="5.4" fill="#000">Levitated</text>
<circle cx="2532.90" cy="122.20" r="4.10" fill="#2a7af0" stroke="#e8f0ff" stroke-width="1.0" />
<circle cx="2532.10" cy="121.20" r="1.30" fill="#9ac8ff" />
<text x="2540.10" y="124.10" font-size="5.4" fill="#000">Rotating</text>
<text x="2484.80" y="137.40" font-size="6.3" fill="#000">Graph 3100A:</text>
<text x="2535.00" y="137.40" font-size="6.3" fill="#000">3110</text>
<text x="2530.40" y="154.50" font-size="5.2" fill="#000" text-anchor="end">PR</text>
<text x="2556.50" y="154.80" font-size="6.0" fill="#000" text-anchor="end">3.64</text>
<text x="2530.40" y="164.00" font-size="5.2" fill="#000" text-anchor="end">Nr</text>
<text x="2556.50" y="164.30" font-size="6.0" fill="#000" text-anchor="end">1.40</text>
<text x="2530.40" y="173.50" font-size="5.2" fill="#000" text-anchor="end">Qr</text>
<text x="2556.50" y="173.80" font-size="6.0" fill="#000" text-anchor="end">0.46</text>
<text x="2530.40" y="183.60" font-size="5.2" fill="#000" text-anchor="end">Qr Trip Margin</text>
<text x="2556.50" y="183.90" font-size="6.0" fill="#000" text-anchor="end">28.34</text>
<text x="2559.80" y="183.90" font-size="5.6" fill="#000">%</text>
<text x="2530.40" y="192.60" font-size="5.2" fill="#000" text-anchor="end">Qr Trip</text>
<text x="2556.50" y="192.90" font-size="6.0" fill="#000" text-anchor="end">0.36</text>
<text x="2530.40" y="202.60" font-size="5.2" fill="#000" text-anchor="end">Qr Alarm</text>
<text x="2556.50" y="202.90" font-size="6.0" fill="#000" text-anchor="end">0.37</text>
<text x="2530.40" y="212.60" font-size="5.2" fill="#000" text-anchor="end">Nmax</text>
<text x="2556.50" y="212.90" font-size="6.0" fill="#000" text-anchor="end">100.0</text>
<text x="2559.80" y="212.90" font-size="5.6" fill="#000">%</text>
<rect x="2264.30" y="254.70" width="306.00" height="50.50" fill="#b9b9b9" stroke="#000" stroke-width="1.4"/>
<text x="2270.70" y="268.30" font-size="6.2" fill="#000">Graph 3000:</text>
<text x="2320.40" y="268.30" font-size="6.2" fill="#000">3020</text>
<text x="2270.70" y="276.40" font-size="6.2" fill="#000">Graph 3200:</text>
<text x="2320.40" y="276.40" font-size="6.2" fill="#000">3200</text>
<text x="2270.70" y="286.30" font-size="6.2" fill="#000">Graph 3400:</text>
<text x="2320.40" y="286.30" font-size="6.2" fill="#000">3400</text>
<text x="2270.70" y="296.00" font-size="6.2" fill="#000">Graph 3450:</text>
<text x="2320.40" y="296.00" font-size="6.2" fill="#000">3450</text>
<text x="2371.80" y="268.00" font-size="6.2" fill="#000">S3000_S11</text>
<rect x="2418.20" y="260.30" width="23.80" height="9.70" fill="#000"/>
<text x="2441.40" y="267.80" font-size="6.4" fill="#fff" text-anchor="end">25.00</text>
<text x="2443.20" y="268.00" font-size="6.3" fill="#000">mbar</text>
<text x="2469.50" y="268.00" font-size="6.3" fill="#000" font-style="italic">nominal CCs pressure setpoint</text>
<rect x="2371.00" y="285.00" width="73.70" height="12.60" fill="url(#dbtn)" stroke="#2a2c3a" stroke-width="0.5"/>
<text x="2407.85" y="293.30" font-size="6.2" fill="#fff" text-anchor="middle">Surges CCs</text>
<text x="2473.60" y="282.00" font-size="5.4" fill="#000">CCS_MIN_TRIP</text>
<polyline points="2473.6,293.8 2473.6,284.0 2518.8,284.0" fill="none" stroke="#666" stroke-width="0.7" />
<polyline points="2473.9,293.8 2518.8,293.8 2518.8,284.3" fill="none" stroke="#f4f4f4" stroke-width="0.6" />
<text x="2517.60" y="292.10" font-size="6.6" fill="#111" text-anchor="end">-28.4</text>
<text x="2520.30" y="292.10" font-size="6.6" fill="#18a0a8">%</text>
<text x="1579.70" y="83.80" font-size="6.4" fill="#000" text-anchor="middle">PVPS</text>
<rect x="1565.70" y="97.60" width="21.50" height="9.10" fill="#fde6bd" stroke="#555" stroke-width="0.8"/>
<text x="1576.45" y="104.05" font-size="4.8" fill="#000" text-anchor="middle">LP</text>
<polygon points="1576.20,106.70 1571.70,115.00 1580.70,115.00" fill="#000" />
<polyline points="1576.2,114.0 1576.2,213.0" fill="none" stroke="#2b98d8" stroke-width="2.4" stroke-linejoin="round"/>
<line x1="1576.20" y1="144.30" x2="1582.20" y2="144.30" stroke="#000" stroke-width="0.8" />
<rect x="1582.00" y="137.60" width="3.20" height="13.40" fill="url(#actv)" stroke="#223" stroke-width="0.3"/>
<polygon points="1571.90,138.00 1576.20,144.30 1580.50,138.00" fill="#10b010" stroke="#063" stroke-width="0.6" />
<polygon points="1571.90,150.60 1576.20,144.30 1580.50,150.60" fill="#10b010" stroke="#063" stroke-width="0.6" />
<text x="1587.20" y="146.20" font-size="5.6" fill="#000">XV2300</text>
<text x="1568.00" y="131.30" font-size="3.4" fill="#18a0a8">H</text>
<circle cx="1569.70" cy="134.50" r="1.60" fill="#20c020" stroke="#063" stroke-width="0.3" />
<circle cx="1569.70" cy="151.00" r="1.30" fill="#444" />
<text x="1591.70" y="176.10" font-size="4.6" fill="#000" text-anchor="middle" stroke="#000" stroke-width="0.12">PT2300</text>
<line x1="1583.10" y1="177.10" x2="1600.30" y2="177.10" stroke="#000" stroke-width="0.5" />
<polyline points="1580.7,185.8 1580.7,177.8 1600.8,177.8" fill="none" stroke="#666" stroke-width="0.7" />
<polyline points="1581.0,185.8 1600.8,185.8 1600.8,178.1" fill="none" stroke="#f4f4f4" stroke-width="0.6" />
<text x="1599.60" y="184.10" font-size="6.0" fill="#111" text-anchor="end">1105.0</text>
<text x="1602.30" y="184.10" font-size="6.0" fill="#18a0a8">mbar</text>
<text x="1591.70" y="195.20" font-size="4.6" fill="#000" text-anchor="middle" stroke="#000" stroke-width="0.12">TT2300</text>
<line x1="1583.10" y1="196.20" x2="1600.30" y2="196.20" stroke="#000" stroke-width="0.5" />
<polyline points="1580.7,204.9 1580.7,196.9 1600.8,196.9" fill="none" stroke="#666" stroke-width="0.7" />
<polyline points="1581.0,204.9 1600.8,204.9 1600.8,197.2" fill="none" stroke="#f4f4f4" stroke-width="0.6" />
<text x="1599.60" y="203.20" font-size="6.0" fill="#111" text-anchor="end">+71.6</text>
<text x="1602.30" y="203.20" font-size="6.0" fill="#18a0a8">C</text>
<polyline points="1361.2,167.8 1361.2,457.0 1909.0,457.0" fill="none" stroke="#777" stroke-width="0.5" stroke-dasharray="1 1.3"/>
<rect x="1915.50" y="167.80" width="205.50" height="289.20" fill="none" stroke="#888" stroke-width="0.5" stroke-dasharray="1 1.3"/>
<line x1="1909.00" y1="167.80" x2="1909.00" y2="457.00" stroke="#000" stroke-width="0.8" stroke-dasharray="2 1.5"/>
<line x1="1915.50" y1="167.80" x2="1915.50" y2="457.00" stroke="#000" stroke-width="0.8" stroke-dasharray="2 1.5"/>
<text x="1935.50" y="185.10" font-size="6.8" fill="#000">PVPS SKID 2</text>
<line x1="1362.70" y1="373.30" x2="2057.50" y2="373.30" stroke="#12a83c" stroke-width="1.6" />
<line x1="1362.70" y1="384.30" x2="2057.50" y2="384.30" stroke="#12a83c" stroke-width="1.6" />
<rect x="1309.00" y="368.80" width="44.60" height="9.00" fill="#fde6bd" stroke="#555" stroke-width="0.8"/>
<text x="1331.30" y="375.20" font-size="4.8" fill="#000" text-anchor="middle">Cooling water</text>
<rect x="1309.00" y="380.30" width="44.60" height="9.00" fill="#fde6bd" stroke="#555" stroke-width="0.8"/>
<text x="1331.30" y="386.70" font-size="4.8" fill="#000" text-anchor="middle">Cooling water</text>
<polygon points="1354.00,373.30 1362.50,369.00 1362.50,377.60" fill="#000" />
<polygon points="1362.50,384.30 1354.00,380.00 1354.00,388.60" fill="#000" />
<polyline points="1432.8,213.0 2047.5,213.0 2049.3,215.0 2049.3,424.5 2047.5,426.4 1432.8,426.4 1432.8,213.0" fill="none" stroke="#2b98d8" stroke-width="3" stroke-linejoin="round"/>
<polyline points="1507.0,213.0 1507.0,426.4" fill="none" stroke="#2b98d8" stroke-width="3" stroke-linejoin="round"/>
<line x1="1499.40" y1="332.00" x2="1499.40" y2="373.30" stroke="#12a83c" stroke-width="1.5" />
<line x1="1514.60" y1="332.00" x2="1514.60" y2="384.30" stroke="#12a83c" stroke-width="1.5" />
<text x="1511.30" y="375.00" font-size="5" fill="#12a83c" text-anchor="middle">›</text>
<text x="1502.40" y="386.00" font-size="5" fill="#12a83c" text-anchor="middle">‹</text>
<line x1="1490.00" y1="323.70" x2="1499.00" y2="323.70" stroke="#000" stroke-width="0.8" />
<circle cx="1507.80" cy="323.40" r="10.00" fill="#10c030" stroke="#021" stroke-width="0.9" />
<circle cx="1485.50" cy="323.70" r="5.20" fill="#2a7ae8" stroke="#0a3a9a" stroke-width="0.6" />
<text x="1485.50" y="325.80" font-size="5.4" fill="#fff" text-anchor="middle" font-weight="bold">M</text>
<text x="1481.00" y="311.00" font-size="5.6" fill="#000">VP2310</text>
<circle cx="1517.00" cy="301.60" r="3.20" fill="#707070" stroke="#333" stroke-width="0.4" />
<circle cx="1516.20" cy="300.80" r="1.20" fill="#c8c8c8" />
<text x="1510.20" y="311.80" font-size="4.3" fill="#000">TSH2310</text>
<text x="1493.00" y="332.50" font-size="3.4" fill="#18a0a8">H</text>
<circle cx="1494.50" cy="336.00" r="1.60" fill="#20c020" stroke="#063" stroke-width="0.3" />
<text x="1523.00" y="279.30" font-size="4.6" fill="#000" text-anchor="middle" stroke="#000" stroke-width="0.12">TT2312</text>
<line x1="1514.40" y1="280.30" x2="1531.60" y2="280.30" stroke="#000" stroke-width="0.5" />
<polyline points="1510.5,289.0 1510.5,281.0 1532.0,281.0" fill="none" stroke="#666" stroke-width="0.7" />
<polyline points="1510.8,289.0 1532.0,289.0 1532.0,281.3" fill="none" stroke="#f4f4f4" stroke-width="0.6" />
<text x="1530.80" y="287.30" font-size="6.0" fill="#111" text-anchor="end">83.6</text>
<text x="1533.50" y="287.30" font-size="6.0" fill="#18a0a8">C</text>
<line x1="1507.00" y1="235.50" x2="1513.00" y2="235.50" stroke="#000" stroke-width="0.8" />
<rect x="1512.80" y="228.80" width="3.20" height="13.40" fill="url(#actv)" stroke="#223" stroke-width="0.3"/>
<polygon points="1502.70,229.20 1507.00,235.50 1511.30,229.20" fill="#10b010" stroke="#063" stroke-width="0.6" />
<polygon points="1502.70,241.80 1507.00,235.50 1511.30,241.80" fill="#10b010" stroke="#063" stroke-width="0.6" />
<text x="1519.00" y="237.30" font-size="5.6" fill="#000">XV2319</text>
<text x="1498.00" y="224.50" font-size="3.4" fill="#18a0a8">H</text>
<circle cx="1499.50" cy="227.50" r="1.60" fill="#20c020" stroke="#063" stroke-width="0.3" />
<circle cx="1499.50" cy="243.00" r="1.30" fill="#444" />
<line x1="1507.00" y1="407.90" x2="1513.00" y2="407.90" stroke="#000" stroke-width="0.8" />
<rect x="1512.80" y="401.20" width="3.20" height="13.40" fill="url(#actv)" stroke="#223" stroke-width="0.3"/>
<polygon points="1502.70,401.60 1507.00,407.90 1511.30,401.60" fill="#10b010" stroke="#063" stroke-width="0.6" />
<polygon points="1502.70,414.20 1507.00,407.90 1511.30,414.20" fill="#10b010" stroke="#063" stroke-width="0.6" />
<text x="1519.00" y="409.70" font-size="5.6" fill="#000">XV2311</text>
<text x="1498.00" y="396.50" font-size="3.4" fill="#18a0a8">H</text>
<circle cx="1499.50" cy="399.50" r="1.60" fill="#20c020" stroke="#063" stroke-width="0.3" />
<circle cx="1499.50" cy="415.40" r="1.30" fill="#444" />
<polyline points="1592.2,213.0 1592.2,426.4" fill="none" stroke="#2b98d8" stroke-width="3" stroke-linejoin="round"/>
<line x1="1584.60" y1="332.00" x2="1584.60" y2="373.30" stroke="#12a83c" stroke-width="1.5" />
<line x1="1599.80" y1="332.00" x2="1599.80" y2="384.30" stroke="#12a83c" stroke-width="1.5" />
<text x="1596.50" y="375.00" font-size="5" fill="#12a83c" text-anchor="middle">›</text>
<text x="1587.60" y="386.00" font-size="5" fill="#12a83c" text-anchor="middle">‹</text>
<line x1="1575.20" y1="323.70" x2="1584.20" y2="323.70" stroke="#000" stroke-width="0.8" />
<circle cx="1593.00" cy="323.40" r="10.00" fill="#10c030" stroke="#021" stroke-width="0.9" />
<circle cx="1570.70" cy="323.70" r="5.20" fill="#2a7ae8" stroke="#0a3a9a" stroke-width="0.6" />
<text x="1570.70" y="325.80" font-size="5.4" fill="#fff" text-anchor="middle" font-weight="bold">M</text>
<text x="1566.20" y="311.00" font-size="5.6" fill="#000">VP2320</text>
<circle cx="1602.20" cy="301.60" r="3.20" fill="#707070" stroke="#333" stroke-width="0.4" />
<circle cx="1601.40" cy="300.80" r="1.20" fill="#c8c8c8" />
<text x="1595.40" y="311.80" font-size="4.3" fill="#000">TSH2320</text>
<text x="1578.20" y="332.50" font-size="3.4" fill="#18a0a8">H</text>
<circle cx="1579.70" cy="336.00" r="1.60" fill="#20c020" stroke="#063" stroke-width="0.3" />
<text x="1608.20" y="279.30" font-size="4.6" fill="#000" text-anchor="middle" stroke="#000" stroke-width="0.12">TT2322</text>
<line x1="1599.60" y1="280.30" x2="1616.80" y2="280.30" stroke="#000" stroke-width="0.5" />
<polyline points="1595.7,289.0 1595.7,281.0 1617.2,281.0" fill="none" stroke="#666" stroke-width="0.7" />
<polyline points="1596.0,289.0 1617.2,289.0 1617.2,281.3" fill="none" stroke="#f4f4f4" stroke-width="0.6" />
<text x="1616.00" y="287.30" font-size="6.0" fill="#111" text-anchor="end">82.5</text>
<text x="1618.70" y="287.30" font-size="6.0" fill="#18a0a8">C</text>
<line x1="1592.20" y1="235.50" x2="1598.20" y2="235.50" stroke="#000" stroke-width="0.8" />
<rect x="1598.00" y="228.80" width="3.20" height="13.40" fill="url(#actv)" stroke="#223" stroke-width="0.3"/>
<polygon points="1587.90,229.20 1592.20,235.50 1596.50,229.20" fill="#10b010" stroke="#063" stroke-width="0.6" />
<polygon points="1587.90,241.80 1592.20,235.50 1596.50,241.80" fill="#10b010" stroke="#063" stroke-width="0.6" />
<text x="1604.20" y="237.30" font-size="5.6" fill="#000">XV2329</text>
<text x="1583.20" y="224.50" font-size="3.4" fill="#18a0a8">H</text>
<circle cx="1584.70" cy="227.50" r="1.60" fill="#20c020" stroke="#063" stroke-width="0.3" />
<circle cx="1584.70" cy="243.00" r="1.30" fill="#444" />
<line x1="1592.20" y1="407.90" x2="1598.20" y2="407.90" stroke="#000" stroke-width="0.8" />
<rect x="1598.00" y="401.20" width="3.20" height="13.40" fill="url(#actv)" stroke="#223" stroke-width="0.3"/>
<polygon points="1587.90,401.60 1592.20,407.90 1596.50,401.60" fill="#10b010" stroke="#063" stroke-width="0.6" />
<polygon points="1587.90,414.20 1592.20,407.90 1596.50,414.20" fill="#10b010" stroke="#063" stroke-width="0.6" />
<text x="1604.20" y="409.70" font-size="5.6" fill="#000">XV2321</text>
<text x="1583.20" y="396.50" font-size="3.4" fill="#18a0a8">H</text>
<circle cx="1584.70" cy="399.50" r="1.60" fill="#20c020" stroke="#063" stroke-width="0.3" />
<circle cx="1584.70" cy="415.40" r="1.30" fill="#444" />
<polyline points="1677.0,213.0 1677.0,426.4" fill="none" stroke="#2b98d8" stroke-width="3" stroke-linejoin="round"/>
<line x1="1669.40" y1="332.00" x2="1669.40" y2="373.30" stroke="#12a83c" stroke-width="1.5" />
<line x1="1684.60" y1="332.00" x2="1684.60" y2="384.30" stroke="#12a83c" stroke-width="1.5" />
<text x="1681.30" y="375.00" font-size="5" fill="#12a83c" text-anchor="middle">›</text>
<text x="1672.40" y="386.00" font-size="5" fill="#12a83c" text-anchor="middle">‹</text>
<line x1="1660.00" y1="323.70" x2="1669.00" y2="323.70" stroke="#000" stroke-width="0.8" />
<circle cx="1677.80" cy="323.40" r="10.00" fill="#10c030" stroke="#021" stroke-width="0.9" />
<circle cx="1655.50" cy="323.70" r="5.20" fill="#2a7ae8" stroke="#0a3a9a" stroke-width="0.6" />
<text x="1655.50" y="325.80" font-size="5.4" fill="#fff" text-anchor="middle" font-weight="bold">M</text>
<text x="1651.00" y="311.00" font-size="5.6" fill="#000">VP2330</text>
<circle cx="1687.00" cy="301.60" r="3.20" fill="#707070" stroke="#333" stroke-width="0.4" />
<circle cx="1686.20" cy="300.80" r="1.20" fill="#c8c8c8" />
<text x="1680.20" y="311.80" font-size="4.3" fill="#000">TSH2330</text>
<text x="1663.00" y="332.50" font-size="3.4" fill="#18a0a8">H</text>
<circle cx="1664.50" cy="336.00" r="1.60" fill="#20c020" stroke="#063" stroke-width="0.3" />
<text x="1693.00" y="279.30" font-size="4.6" fill="#000" text-anchor="middle" stroke="#000" stroke-width="0.12">TT2332</text>
<line x1="1684.40" y1="280.30" x2="1701.60" y2="280.30" stroke="#000" stroke-width="0.5" />
<polyline points="1680.5,289.0 1680.5,281.0 1702.0,281.0" fill="none" stroke="#666" stroke-width="0.7" />
<polyline points="1680.8,289.0 1702.0,289.0 1702.0,281.3" fill="none" stroke="#f4f4f4" stroke-width="0.6" />
<text x="1700.80" y="287.30" font-size="6.0" fill="#111" text-anchor="end">87.8</text>
<text x="1703.50" y="287.30" font-size="6.0" fill="#18a0a8">C</text>
<line x1="1677.00" y1="235.50" x2="1683.00" y2="235.50" stroke="#000" stroke-width="0.8" />
<rect x="1682.80" y="228.80" width="3.20" height="13.40" fill="url(#actv)" stroke="#223" stroke-width="0.3"/>
<polygon points="1672.70,229.20 1677.00,235.50 1681.30,229.20" fill="#10b010" stroke="#063" stroke-width="0.6" />
<polygon points="1672.70,241.80 1677.00,235.50 1681.30,241.80" fill="#10b010" stroke="#063" stroke-width="0.6" />
<text x="1689.00" y="237.30" font-size="5.6" fill="#000">XV2339</text>
<text x="1668.00" y="224.50" font-size="3.4" fill="#18a0a8">H</text>
<circle cx="1669.50" cy="227.50" r="1.60" fill="#20c020" stroke="#063" stroke-width="0.3" />
<circle cx="1669.50" cy="243.00" r="1.30" fill="#444" />
<line x1="1677.00" y1="407.90" x2="1683.00" y2="407.90" stroke="#000" stroke-width="0.8" />
<rect x="1682.80" y="401.20" width="3.20" height="13.40" fill="url(#actv)" stroke="#223" stroke-width="0.3"/>
<polygon points="1672.70,401.60 1677.00,407.90 1681.30,401.60" fill="#10b010" stroke="#063" stroke-width="0.6" />
<polygon points="1672.70,414.20 1677.00,407.90 1681.30,414.20" fill="#10b010" stroke="#063" stroke-width="0.6" />
<text x="1689.00" y="409.70" font-size="5.6" fill="#000">XV2331</text>
<text x="1668.00" y="396.50" font-size="3.4" fill="#18a0a8">H</text>
<circle cx="1669.50" cy="399.50" r="1.60" fill="#20c020" stroke="#063" stroke-width="0.3" />
<circle cx="1669.50" cy="415.40" r="1.30" fill="#444" />
<polyline points="1764.0,213.0 1764.0,426.4" fill="none" stroke="#2b98d8" stroke-width="3" stroke-linejoin="round"/>
<line x1="1756.40" y1="332.00" x2="1756.40" y2="373.30" stroke="#12a83c" stroke-width="1.5" />
<line x1="1771.60" y1="332.00" x2="1771.60" y2="384.30" stroke="#12a83c" stroke-width="1.5" />
<text x="1768.30" y="375.00" font-size="5" fill="#12a83c" text-anchor="middle">›</text>
<text x="1759.40" y="386.00" font-size="5" fill="#12a83c" text-anchor="middle">‹</text>
<line x1="1747.00" y1="323.70" x2="1756.00" y2="323.70" stroke="#000" stroke-width="0.8" />
<circle cx="1764.80" cy="323.40" r="10.00" fill="#10c030" stroke="#021" stroke-width="0.9" />
<circle cx="1742.50" cy="323.70" r="5.20" fill="#2a7ae8" stroke="#0a3a9a" stroke-width="0.6" />
<text x="1742.50" y="325.80" font-size="5.4" fill="#fff" text-anchor="middle" font-weight="bold">M</text>
<text x="1738.00" y="311.00" font-size="5.6" fill="#000">VP2340</text>
<circle cx="1774.00" cy="301.60" r="3.20" fill="#707070" stroke="#333" stroke-width="0.4" />
<circle cx="1773.20" cy="300.80" r="1.20" fill="#c8c8c8" />
<text x="1767.20" y="311.80" font-size="4.3" fill="#000">TSH2340</text>
<text x="1750.00" y="332.50" font-size="3.4" fill="#18a0a8">H</text>
<circle cx="1751.50" cy="336.00" r="1.60" fill="#20c020" stroke="#063" stroke-width="0.3" />
<text x="1780.00" y="279.30" font-size="4.6" fill="#000" text-anchor="middle" stroke="#000" stroke-width="0.12">TT2342</text>
<line x1="1771.40" y1="280.30" x2="1788.60" y2="280.30" stroke="#000" stroke-width="0.5" />
<polyline points="1767.5,289.0 1767.5,281.0 1789.0,281.0" fill="none" stroke="#666" stroke-width="0.7" />
<polyline points="1767.8,289.0 1789.0,289.0 1789.0,281.3" fill="none" stroke="#f4f4f4" stroke-width="0.6" />
<text x="1787.80" y="287.30" font-size="6.0" fill="#111" text-anchor="end">88.5</text>
<text x="1790.50" y="287.30" font-size="6.0" fill="#18a0a8">C</text>
<line x1="1764.00" y1="235.50" x2="1770.00" y2="235.50" stroke="#000" stroke-width="0.8" />
<rect x="1769.80" y="228.80" width="3.20" height="13.40" fill="url(#actv)" stroke="#223" stroke-width="0.3"/>
<polygon points="1759.70,229.20 1764.00,235.50 1768.30,229.20" fill="#10b010" stroke="#063" stroke-width="0.6" />
<polygon points="1759.70,241.80 1764.00,235.50 1768.30,241.80" fill="#10b010" stroke="#063" stroke-width="0.6" />
<text x="1776.00" y="237.30" font-size="5.6" fill="#000">XV2349</text>
<text x="1755.00" y="224.50" font-size="3.4" fill="#18a0a8">H</text>
<circle cx="1756.50" cy="227.50" r="1.60" fill="#20c020" stroke="#063" stroke-width="0.3" />
<circle cx="1756.50" cy="243.00" r="1.30" fill="#444" />
<line x1="1764.00" y1="407.90" x2="1770.00" y2="407.90" stroke="#000" stroke-width="0.8" />
<rect x="1769.80" y="401.20" width="3.20" height="13.40" fill="url(#actv)" stroke="#223" stroke-width="0.3"/>
<polygon points="1759.70,401.60 1764.00,407.90 1768.30,401.60" fill="#10b010" stroke="#063" stroke-width="0.6" />
<polygon points="1759.70,414.20 1764.00,407.90 1768.30,414.20" fill="#10b010" stroke="#063" stroke-width="0.6" />
<text x="1776.00" y="409.70" font-size="5.6" fill="#000">XV2341</text>
<text x="1755.00" y="396.50" font-size="3.4" fill="#18a0a8">H</text>
<circle cx="1756.50" cy="399.50" r="1.60" fill="#20c020" stroke="#063" stroke-width="0.3" />
<circle cx="1756.50" cy="415.40" r="1.30" fill="#444" />
<polyline points="1851.8,213.0 1851.8,426.4" fill="none" stroke="#2b98d8" stroke-width="3" stroke-linejoin="round"/>
<line x1="1844.20" y1="332.00" x2="1844.20" y2="373.30" stroke="#12a83c" stroke-width="1.5" />
<line x1="1859.40" y1="332.00" x2="1859.40" y2="384.30" stroke="#12a83c" stroke-width="1.5" />
<text x="1856.10" y="375.00" font-size="5" fill="#12a83c" text-anchor="middle">›</text>
<text x="1847.20" y="386.00" font-size="5" fill="#12a83c" text-anchor="middle">‹</text>
<line x1="1834.80" y1="323.70" x2="1843.80" y2="323.70" stroke="#000" stroke-width="0.8" />
<circle cx="1852.60" cy="323.40" r="10.00" fill="#10c030" stroke="#021" stroke-width="0.9" />
<circle cx="1830.30" cy="323.70" r="5.20" fill="#2a7ae8" stroke="#0a3a9a" stroke-width="0.6" />
<text x="1830.30" y="325.80" font-size="5.4" fill="#fff" text-anchor="middle" font-weight="bold">M</text>
<text x="1825.80" y="311.00" font-size="5.6" fill="#000">VP2350</text>
<circle cx="1861.80" cy="301.60" r="3.20" fill="#707070" stroke="#333" stroke-width="0.4" />
<circle cx="1861.00" cy="300.80" r="1.20" fill="#c8c8c8" />
<text x="1855.00" y="311.80" font-size="4.3" fill="#000">TSH2350</text>
<text x="1837.80" y="332.50" font-size="3.4" fill="#18a0a8">H</text>
<circle cx="1839.30" cy="336.00" r="1.60" fill="#20c020" stroke="#063" stroke-width="0.3" />
<text x="1867.80" y="279.30" font-size="4.6" fill="#000" text-anchor="middle" stroke="#000" stroke-width="0.12">TT2352</text>
<line x1="1859.20" y1="280.30" x2="1876.40" y2="280.30" stroke="#000" stroke-width="0.5" />
<polyline points="1855.3,289.0 1855.3,281.0 1876.8,281.0" fill="none" stroke="#666" stroke-width="0.7" />
<polyline points="1855.6,289.0 1876.8,289.0 1876.8,281.3" fill="none" stroke="#f4f4f4" stroke-width="0.6" />
<text x="1875.60" y="287.30" font-size="6.0" fill="#111" text-anchor="end">90.5</text>
<text x="1878.30" y="287.30" font-size="6.0" fill="#18a0a8">C</text>
<line x1="1851.80" y1="235.50" x2="1857.80" y2="235.50" stroke="#000" stroke-width="0.8" />
<rect x="1857.60" y="228.80" width="3.20" height="13.40" fill="url(#actv)" stroke="#223" stroke-width="0.3"/>
<polygon points="1847.50,229.20 1851.80,235.50 1856.10,229.20" fill="#10b010" stroke="#063" stroke-width="0.6" />
<polygon points="1847.50,241.80 1851.80,235.50 1856.10,241.80" fill="#10b010" stroke="#063" stroke-width="0.6" />
<text x="1863.80" y="237.30" font-size="5.6" fill="#000">XV2359</text>
<text x="1842.80" y="224.50" font-size="3.4" fill="#18a0a8">H</text>
<circle cx="1844.30" cy="227.50" r="1.60" fill="#20c020" stroke="#063" stroke-width="0.3" />
<circle cx="1844.30" cy="243.00" r="1.30" fill="#444" />
<line x1="1851.80" y1="407.90" x2="1857.80" y2="407.90" stroke="#000" stroke-width="0.8" />
<rect x="1857.60" y="401.20" width="3.20" height="13.40" fill="url(#actv)" stroke="#223" stroke-width="0.3"/>
<polygon points="1847.50,401.60 1851.80,407.90 1856.10,401.60" fill="#10b010" stroke="#063" stroke-width="0.6" />
<polygon points="1847.50,414.20 1851.80,407.90 1856.10,414.20" fill="#10b010" stroke="#063" stroke-width="0.6" />
<text x="1863.80" y="409.70" font-size="5.6" fill="#000">XV2351</text>
<text x="1842.80" y="396.50" font-size="3.4" fill="#18a0a8">H</text>
<circle cx="1844.30" cy="399.50" r="1.60" fill="#20c020" stroke="#063" stroke-width="0.3" />
<circle cx="1844.30" cy="415.40" r="1.30" fill="#444" />
<polyline points="1963.0,213.0 1963.0,426.4" fill="none" stroke="#2b98d8" stroke-width="3" stroke-linejoin="round"/>
<line x1="1955.40" y1="332.00" x2="1955.40" y2="373.30" stroke="#12a83c" stroke-width="1.5" />
<line x1="1970.60" y1="332.00" x2="1970.60" y2="384.30" stroke="#12a83c" stroke-width="1.5" />
<text x="1967.30" y="375.00" font-size="5" fill="#12a83c" text-anchor="middle">›</text>
<text x="1958.40" y="386.00" font-size="5" fill="#12a83c" text-anchor="middle">‹</text>
<line x1="1946.00" y1="323.70" x2="1955.00" y2="323.70" stroke="#000" stroke-width="0.8" />
<circle cx="1963.80" cy="323.40" r="10.00" fill="#10c030" stroke="#021" stroke-width="0.9" />
<circle cx="1941.50" cy="323.70" r="5.20" fill="#2a7ae8" stroke="#0a3a9a" stroke-width="0.6" />
<text x="1941.50" y="325.80" font-size="5.4" fill="#fff" text-anchor="middle" font-weight="bold">M</text>
<text x="1937.00" y="311.00" font-size="5.6" fill="#000">VP2360</text>
<circle cx="1973.00" cy="301.60" r="3.20" fill="#707070" stroke="#333" stroke-width="0.4" />
<circle cx="1972.20" cy="300.80" r="1.20" fill="#c8c8c8" />
<text x="1966.20" y="311.80" font-size="4.3" fill="#000">TSH2360</text>
<text x="1949.00" y="332.50" font-size="3.4" fill="#18a0a8">H</text>
<circle cx="1950.50" cy="336.00" r="1.60" fill="#20c020" stroke="#063" stroke-width="0.3" />
<text x="1979.00" y="279.30" font-size="4.6" fill="#000" text-anchor="middle" stroke="#000" stroke-width="0.12">TT2362</text>
<line x1="1970.40" y1="280.30" x2="1987.60" y2="280.30" stroke="#000" stroke-width="0.5" />
<polyline points="1966.5,289.0 1966.5,281.0 1988.0,281.0" fill="none" stroke="#666" stroke-width="0.7" />
<polyline points="1966.8,289.0 1988.0,289.0 1988.0,281.3" fill="none" stroke="#f4f4f4" stroke-width="0.6" />
<text x="1986.80" y="287.30" font-size="6.0" fill="#111" text-anchor="end">106.4</text>
<text x="1989.50" y="287.30" font-size="6.0" fill="#18a0a8">C</text>
<line x1="1963.00" y1="235.50" x2="1969.00" y2="235.50" stroke="#000" stroke-width="0.8" />
<rect x="1968.80" y="228.80" width="3.20" height="13.40" fill="url(#actv)" stroke="#223" stroke-width="0.3"/>
<polygon points="1958.70,229.20 1963.00,235.50 1967.30,229.20" fill="#10b010" stroke="#063" stroke-width="0.6" />
<polygon points="1958.70,241.80 1963.00,235.50 1967.30,241.80" fill="#10b010" stroke="#063" stroke-width="0.6" />
<text x="1975.00" y="237.30" font-size="5.6" fill="#000">XV2369</text>
<text x="1954.00" y="224.50" font-size="3.4" fill="#18a0a8">H</text>
<circle cx="1955.50" cy="227.50" r="1.60" fill="#20c020" stroke="#063" stroke-width="0.3" />
<circle cx="1955.50" cy="243.00" r="1.30" fill="#444" />
<line x1="1963.00" y1="407.90" x2="1969.00" y2="407.90" stroke="#000" stroke-width="0.8" />
<rect x="1968.80" y="401.20" width="3.20" height="13.40" fill="url(#actv)" stroke="#223" stroke-width="0.3"/>
<polygon points="1958.70,401.60 1963.00,407.90 1967.30,401.60" fill="#10b010" stroke="#063" stroke-width="0.6" />
<polygon points="1958.70,414.20 1963.00,407.90 1967.30,414.20" fill="#10b010" stroke="#063" stroke-width="0.6" />
<text x="1975.00" y="409.70" font-size="5.6" fill="#000">XV2361</text>
<text x="1954.00" y="396.50" font-size="3.4" fill="#18a0a8">H</text>
<circle cx="1955.50" cy="399.50" r="1.60" fill="#20c020" stroke="#063" stroke-width="0.3" />
<circle cx="1955.50" cy="415.40" r="1.30" fill="#444" />
<polyline points="2049.3,213.0 2049.3,426.4" fill="none" stroke="#2b98d8" stroke-width="3" stroke-linejoin="round"/>
<line x1="2041.70" y1="332.00" x2="2041.70" y2="373.30" stroke="#12a83c" stroke-width="1.5" />
<line x1="2056.90" y1="332.00" x2="2056.90" y2="384.30" stroke="#12a83c" stroke-width="1.5" />
<text x="2053.60" y="375.00" font-size="5" fill="#12a83c" text-anchor="middle">›</text>
<text x="2044.70" y="386.00" font-size="5" fill="#12a83c" text-anchor="middle">‹</text>
<line x1="2032.30" y1="323.70" x2="2041.30" y2="323.70" stroke="#000" stroke-width="0.8" />
<circle cx="2050.10" cy="323.40" r="10.00" fill="#10c030" stroke="#021" stroke-width="0.9" />
<circle cx="2027.80" cy="323.70" r="5.20" fill="#2a7ae8" stroke="#0a3a9a" stroke-width="0.6" />
<text x="2027.80" y="325.80" font-size="5.4" fill="#fff" text-anchor="middle" font-weight="bold">M</text>
<text x="2023.30" y="311.00" font-size="5.6" fill="#000">VP2370</text>
<circle cx="2059.30" cy="301.60" r="3.20" fill="#707070" stroke="#333" stroke-width="0.4" />
<circle cx="2058.50" cy="300.80" r="1.20" fill="#c8c8c8" />
<text x="2052.50" y="311.80" font-size="4.3" fill="#000">TSH2370</text>
<text x="2035.30" y="332.50" font-size="3.4" fill="#18a0a8">H</text>
<circle cx="2036.80" cy="336.00" r="1.60" fill="#20c020" stroke="#063" stroke-width="0.3" />
<text x="2065.30" y="279.30" font-size="4.6" fill="#000" text-anchor="middle" stroke="#000" stroke-width="0.12">TT2372</text>
<line x1="2056.70" y1="280.30" x2="2073.90" y2="280.30" stroke="#000" stroke-width="0.5" />
<polyline points="2052.8,289.0 2052.8,281.0 2074.3,281.0" fill="none" stroke="#666" stroke-width="0.7" />
<polyline points="2053.1,289.0 2074.3,289.0 2074.3,281.3" fill="none" stroke="#f4f4f4" stroke-width="0.6" />
<text x="2073.10" y="287.30" font-size="6.0" fill="#111" text-anchor="end">63.3</text>
<text x="2075.80" y="287.30" font-size="6.0" fill="#18a0a8">C</text>
<line x1="2049.30" y1="235.50" x2="2055.30" y2="235.50" stroke="#000" stroke-width="0.8" />
<rect x="2055.10" y="228.80" width="3.20" height="13.40" fill="url(#actv)" stroke="#223" stroke-width="0.3"/>
<polygon points="2045.00,229.20 2049.30,235.50 2053.60,229.20" fill="#10b010" stroke="#063" stroke-width="0.6" />
<polygon points="2045.00,241.80 2049.30,235.50 2053.60,241.80" fill="#10b010" stroke="#063" stroke-width="0.6" />
<text x="2061.30" y="237.30" font-size="5.6" fill="#000">XV2379</text>
<text x="2040.30" y="224.50" font-size="3.4" fill="#18a0a8">H</text>
<circle cx="2041.80" cy="227.50" r="1.60" fill="#20c020" stroke="#063" stroke-width="0.3" />
<circle cx="2041.80" cy="243.00" r="1.30" fill="#444" />
<line x1="2049.30" y1="407.90" x2="2055.30" y2="407.90" stroke="#000" stroke-width="0.8" />
<rect x="2055.10" y="401.20" width="3.20" height="13.40" fill="url(#actv)" stroke="#223" stroke-width="0.3"/>
<polygon points="2045.00,401.60 2049.30,407.90 2053.60,401.60" fill="#10b010" stroke="#063" stroke-width="0.6" />
<polygon points="2045.00,414.20 2049.30,407.90 2053.60,414.20" fill="#10b010" stroke="#063" stroke-width="0.6" />
<text x="2061.30" y="409.70" font-size="5.6" fill="#000">XV2371</text>
<text x="2040.30" y="396.50" font-size="3.4" fill="#18a0a8">H</text>
<circle cx="2041.80" cy="399.50" r="1.60" fill="#20c020" stroke="#063" stroke-width="0.3" />
<circle cx="2041.80" cy="415.40" r="1.30" fill="#444" />
<line x1="1432.80" y1="323.70" x2="1439.30" y2="323.70" stroke="#000" stroke-width="0.8" />
<path d="M1439.10,317.30 a6.2,6.4 0 0 1 0,12.8 z" fill="url(#domeb)" stroke="#334" stroke-width="0.4" />
<polygon points="1428.50,317.40 1432.80,323.70 1437.10,317.40" fill="#fff" stroke="#222" stroke-width="0.6" />
<polygon points="1428.50,330.00 1432.80,323.70 1437.10,330.00" fill="#fff" stroke="#222" stroke-width="0.6" />
<text x="1445.20" y="318.60" font-size="5.6" fill="#000">CV2303</text>
<polyline points="1446.9,331.7 1446.9,323.7 1464.4,323.7" fill="none" stroke="#666" stroke-width="0.7" />
<polyline points="1447.2,331.7 1464.4,331.7 1464.4,324.0" fill="none" stroke="#f4f4f4" stroke-width="0.6" />
<text x="1463.20" y="330.00" font-size="6.0" fill="#111" text-anchor="end">0.0</text>
<text x="1465.90" y="330.00" font-size="6.0" fill="#18a0a8">%</text>
<rect x="1437.30" y="309.00" width="4.00" height="4.00" fill="#c88838" stroke="#222" stroke-width="0.4"/>
<rect x="1437.30" y="330.70" width="4.00" height="4.00" fill="#4a8a4a" stroke="#222" stroke-width="0.4"/>
<text x="1526.50" y="439.80" font-size="4.6" fill="#000" text-anchor="middle" stroke="#000" stroke-width="0.12">PT2301</text>
<line x1="1517.90" y1="440.80" x2="1535.10" y2="440.80" stroke="#000" stroke-width="0.5" />
<polyline points="1514.5,449.5 1514.5,441.5 1535.6,441.5" fill="none" stroke="#666" stroke-width="0.7" />
<polyline points="1514.8,449.5 1535.6,449.5 1535.6,441.8" fill="none" stroke="#f4f4f4" stroke-width="0.6" />
<text x="1534.40" y="447.80" font-size="6.0" fill="#111" text-anchor="end">521</text>
<text x="1537.10" y="447.80" font-size="6.0" fill="#18a0a8">mbar</text>
<text x="1569.00" y="439.80" font-size="4.6" fill="#000" text-anchor="middle" stroke="#000" stroke-width="0.12">TT2301</text>
<line x1="1560.40" y1="440.80" x2="1577.60" y2="440.80" stroke="#000" stroke-width="0.5" />
<polyline points="1557.0,449.5 1557.0,441.5 1578.2,441.5" fill="none" stroke="#666" stroke-width="0.7" />
<polyline points="1557.3,449.5 1578.2,449.5 1578.2,441.8" fill="none" stroke="#f4f4f4" stroke-width="0.6" />
<text x="1577.00" y="447.80" font-size="6.0" fill="#111" text-anchor="end">22.3</text>
<text x="1579.70" y="447.80" font-size="6.0" fill="#18a0a8">C</text>
<polyline points="1552.0,426.4 1552.0,552.0 1554.0,554.5 1713.0,554.5" fill="none" stroke="#2b98d8" stroke-width="3" stroke-linejoin="round"/>
<polyline points="1594.2,554.5 1594.2,580.3 1634.3,580.3 1634.3,554.5" fill="none" stroke="#2b98d8" stroke-width="1.6" stroke-linejoin="round"/>
<line x1="1613.30" y1="554.50" x2="1613.30" y2="548.50" stroke="#000" stroke-width="0.8" />
<rect x="1607.10" y="544.50" width="12.40" height="4.00" fill="url(#act)" stroke="#223" stroke-width="0.3"/>
<polygon points="1607.00,550.20 1613.30,554.50 1607.00,558.80" fill="#10b010" stroke="#063" stroke-width="0.6" />
<polygon points="1619.60,550.20 1613.30,554.50 1619.60,558.80" fill="#10b010" stroke="#063" stroke-width="0.6" />
<text x="1613.30" y="541.20" font-size="5.6" fill="#000" text-anchor="middle">XV4299</text>
<line x1="1613.30" y1="580.30" x2="1613.30" y2="574.30" stroke="#000" stroke-width="0.8" />
<rect x="1607.10" y="570.30" width="12.40" height="4.00" fill="url(#act)" stroke="#223" stroke-width="0.3"/>
<polygon points="1607.00,576.00 1613.30,580.30 1607.00,584.60" fill="#fff" stroke="#222" stroke-width="0.6" />
<polygon points="1619.60,576.00 1613.30,580.30 1619.60,584.60" fill="#fff" stroke="#222" stroke-width="0.6" />
<text x="1613.30" y="567.80" font-size="5.6" fill="#000" text-anchor="middle">XV4298</text>
<circle cx="1624.50" cy="560.00" r="1.60" fill="#20c020" stroke="#063" stroke-width="0.3" />
<circle cx="1603.00" cy="560.50" r="1.30" fill="#444" />
<text x="1598.00" y="586.50" font-size="3.6" fill="#18a0a8">L</text>
<circle cx="1603.00" cy="586.00" r="1.60" fill="#20c020" stroke="#063" stroke-width="0.3" />
<circle cx="1624.50" cy="586.50" r="1.30" fill="#444" />
<text x="1658.40" y="541.00" font-size="4.6" fill="#000" text-anchor="middle" stroke="#000" stroke-width="0.12">TT4299</text>
<line x1="1649.80" y1="542.00" x2="1667.00" y2="542.00" stroke="#000" stroke-width="0.5" />
<polyline points="1645.9,550.7 1645.9,542.7 1667.4,542.7" fill="none" stroke="#666" stroke-width="0.7" />
<polyline points="1646.2,550.7 1667.4,550.7 1667.4,543.0" fill="none" stroke="#f4f4f4" stroke-width="0.6" />
<text x="1666.20" y="549.00" font-size="6.0" fill="#111" text-anchor="end">+20.8</text>
<text x="1668.90" y="549.00" font-size="6.0" fill="#18a0a8">C</text>
<text x="1658.40" y="562.10" font-size="4.6" fill="#000" text-anchor="middle" stroke="#000" stroke-width="0.12">PT4299</text>
<line x1="1649.80" y1="563.10" x2="1667.00" y2="563.10" stroke="#000" stroke-width="0.5" />
<polyline points="1645.9,571.8 1645.9,563.8 1667.4,563.8" fill="none" stroke="#666" stroke-width="0.7" />
<polyline points="1646.2,571.8 1667.4,571.8 1667.4,564.1" fill="none" stroke="#f4f4f4" stroke-width="0.6" />
<text x="1666.20" y="570.10" font-size="6.0" fill="#111" text-anchor="end">52.0</text>
<text x="1668.90" y="570.10" font-size="6.0" fill="#18a0a8">mbar</text>
<rect x="1364.20" y="557.70" width="102.80" height="113.80" fill="none" stroke="#333" stroke-width="0.6" stroke-dasharray="1.2 1.2"/>
<text x="1374.20" y="641.20" font-size="6.7" fill="#111">HELIUM GUARD</text>
<rect x="1334.00" y="578.80" width="17.00" height="9.00" fill="#fde6bd" stroke="#555" stroke-width="0.8"/>
<text x="1342.50" y="585.20" font-size="4.8" fill="#000" text-anchor="middle">HP</text>
<polygon points="1363.70,582.80 1355.20,578.50 1355.20,587.10" fill="#000" />
<line x1="1363.70" y1="582.80" x2="1470.40" y2="582.80" stroke="#808080" stroke-width="1.0" />
<line x1="1441.90" y1="582.80" x2="1441.90" y2="659.50" stroke="#808080" stroke-width="1.2" />
<line x1="1441.90" y1="582.80" x2="1470.40" y2="582.80" stroke="#808080" stroke-width="1.0" />
<text x="1475.40" y="584.70" font-size="5.3" fill="#000">To PVPS</text>
<line x1="1441.90" y1="598.80" x2="1470.40" y2="598.80" stroke="#808080" stroke-width="1.0" />
<text x="1475.40" y="600.70" font-size="5.3" fill="#000">To XV4298</text>
<line x1="1441.90" y1="613.90" x2="1470.40" y2="613.90" stroke="#808080" stroke-width="1.0" />
<text x="1475.40" y="615.80" font-size="5.3" fill="#000">To Cold compressor</text>
<line x1="1441.90" y1="628.90" x2="1470.40" y2="628.90" stroke="#808080" stroke-width="1.0" />
<text x="1475.40" y="630.80" font-size="5.3" fill="#000" font-weight="bold">To LT3286</text>
<line x1="1441.90" y1="644.00" x2="1470.40" y2="644.00" stroke="#808080" stroke-width="1.0" />
<text x="1475.40" y="645.90" font-size="5.3" fill="#000">To CV3200 /CV3239</text>
<line x1="1441.90" y1="659.50" x2="1470.40" y2="659.50" stroke="#808080" stroke-width="1.0" />
<text x="1475.40" y="661.40" font-size="5.3" fill="#000">To He guard vessels</text>
<line x1="1382.70" y1="582.80" x2="1382.70" y2="576.80" stroke="#000" stroke-width="0.8" />
<rect x="1376.50" y="572.80" width="12.40" height="4.00" fill="url(#act)" stroke="#223" stroke-width="0.3"/>
<polygon points="1376.40,578.50 1382.70,582.80 1376.40,587.10" fill="#fff" stroke="#222" stroke-width="0.6" />
<polygon points="1389.00,578.50 1382.70,582.80 1389.00,587.10" fill="#fff" stroke="#222" stroke-width="0.6" />
<text x="1382.70" y="569.50" font-size="5.6" fill="#000" text-anchor="middle">EV4510</text>
<rect x="1391.20" y="572.80" width="4.00" height="4.00" fill="#4a8a4a" stroke="#222" stroke-width="0.4"/>
<text x="1415.30" y="570.10" font-size="4.6" fill="#000" text-anchor="middle" stroke="#000" stroke-width="0.12">PT4510</text>
<line x1="1406.70" y1="571.10" x2="1423.90" y2="571.10" stroke="#000" stroke-width="0.5" />
<polyline points="1402.8,579.8 1402.8,571.8 1424.3,571.8" fill="none" stroke="#666" stroke-width="0.7" />
<polyline points="1403.1,579.8 1424.3,579.8 1424.3,572.1" fill="none" stroke="#f4f4f4" stroke-width="0.6" />
<text x="1423.10" y="578.10" font-size="6.0" fill="#111" text-anchor="end">1.225</text>
<text x="1425.80" y="578.10" font-size="6.0" fill="#18a0a8">bar</text>
<polygon points="1713.20,510.80 2278.60,510.80 2278.60,330.60 2533.50,330.60 2533.50,665.80 1713.20,665.80" fill="#fff" stroke="#000" stroke-width="1.5" />
<text x="1716.20" y="661.50" font-size="6.9" fill="#000">COLDBOX</text>
<text x="1691.00" y="530.60" font-size="5.8" fill="#000" text-anchor="middle">LP</text>
<polyline points="1705.0,528.6 1763.6,528.6" fill="none" stroke="#2b98d8" stroke-width="1.2" stroke-linejoin="round"/>
<polyline points="1552.0,554.5 2534.0,554.5" fill="none" stroke="#2b98d8" stroke-width="2.6" stroke-linejoin="round"/>
<rect x="1715.40" y="514.00" width="15.30" height="55.00" fill="#d2d2d2" stroke="#8a8a8a" stroke-width="0.7"/>
<text x="0.00" y="0.00" font-size="5.2" fill="#000" text-anchor="middle" transform="translate(1725,548) rotate(-90)">-X3501</text>
<line x1="1715.40" y1="554.50" x2="1722.00" y2="554.50" stroke="#2b98d8" stroke-width="1.5" />
<text x="1745.60" y="517.30" font-size="4.6" fill="#000" text-anchor="middle" stroke="#000" stroke-width="0.12">TT3386</text>
<line x1="1737.00" y1="518.30" x2="1754.20" y2="518.30" stroke="#000" stroke-width="0.5" />
<polyline points="1738.6,527.0 1738.6,519.0 1754.8,519.0" fill="none" stroke="#666" stroke-width="0.7" />
<polyline points="1738.9,527.0 1754.8,527.0 1754.8,519.3" fill="none" stroke="#f4f4f4" stroke-width="0.6" />
<text x="1753.60" y="525.30" font-size="6.0" fill="#111" text-anchor="end">70.4</text>
<text x="1756.30" y="525.30" font-size="6.0" fill="#18a0a8">K</text>
<text x="1745.60" y="541.30" font-size="4.6" fill="#000" text-anchor="middle" stroke="#000" stroke-width="0.12">TT3240</text>
<line x1="1737.00" y1="542.30" x2="1754.20" y2="542.30" stroke="#000" stroke-width="0.5" />
<polyline points="1738.6,551.0 1738.6,543.0 1754.8,543.0" fill="none" stroke="#666" stroke-width="0.7" />
<polyline points="1738.9,551.0 1754.8,551.0 1754.8,543.3" fill="none" stroke="#f4f4f4" stroke-width="0.6" />
<text x="1753.60" y="549.30" font-size="6.0" fill="#111" text-anchor="end">69.8</text>
<text x="1756.30" y="549.30" font-size="6.0" fill="#18a0a8">K</text>
<rect x="1771.50" y="539.00" width="16.30" height="31.00" fill="#c2c2c2" stroke="#777" stroke-width="0.6"/>
<text x="0.00" y="0.00" font-size="5.2" fill="#000" text-anchor="middle" transform="translate(1781.7,556) rotate(-90)">-X3502</text>
<rect x="1791.30" y="539.00" width="15.30" height="31.00" fill="#8e8e8e" stroke="#555" stroke-width="0.6"/>
<polyline points="1816.3,533.0 1816.3,548.0 1830.0,548.0" fill="none" stroke="#000" stroke-width="0.7" />
<polygon points="1813.50,525.90 1816.30,529.50 1819.10,525.90" fill="#10b010" stroke="#063" stroke-width="0.6" />
<polygon points="1813.50,533.10 1816.30,529.50 1819.10,533.10" fill="#10b010" stroke="#063" stroke-width="0.6" />
<rect x="1819.50" y="526.50" width="1.60" height="6.00" fill="#2038d8"/>
<text x="1823.00" y="531.00" font-size="3.2" fill="#000">BV3230</text>
<line x1="1836.00" y1="554.50" x2="1836.00" y2="547.50" stroke="#000" stroke-width="0.8" />
<path d="M1829.60,547.60 a6.4,6.1 0 0 1 12.8,0 z" fill="url(#domeb)" stroke="#334" stroke-width="0.4" />
<polygon points="1829.70,550.20 1836.00,554.50 1829.70,558.80" fill="#10b010" stroke="#063" stroke-width="0.6" />
<polygon points="1842.30,550.20 1836.00,554.50 1842.30,558.80" fill="#10b010" stroke="#063" stroke-width="0.6" />
<text x="1836.00" y="539.50" font-size="5.6" fill="#000" text-anchor="middle">CV3230</text>
<polyline points="1827.2,571.7 1827.2,563.7 1844.8,563.7" fill="none" stroke="#666" stroke-width="0.7" />
<polyline points="1827.5,571.7 1844.8,571.7 1844.8,564.0" fill="none" stroke="#f4f4f4" stroke-width="0.6" />
<text x="1843.60" y="570.00" font-size="6.0" fill="#111" text-anchor="end">100.0</text>
<text x="1846.30" y="570.00" font-size="6.0" fill="#18a0a8">%</text>
<text x="1874.60" y="541.30" font-size="4.6" fill="#000" text-anchor="middle" stroke="#000" stroke-width="0.12">FT4230</text>
<line x1="1866.00" y1="542.30" x2="1883.20" y2="542.30" stroke="#000" stroke-width="0.5" />
<polyline points="1863.2,551.0 1863.2,543.0 1884.3,543.0" fill="none" stroke="#666" stroke-width="0.7" />
<polyline points="1863.5,551.0 1884.3,551.0 1884.3,543.3" fill="none" stroke="#f4f4f4" stroke-width="0.6" />
<text x="1883.10" y="549.30" font-size="6.0" fill="#111" text-anchor="end">101.8</text>
<text x="1885.80" y="549.30" font-size="6.0" fill="#18a0a8">g/s</text>
<text x="1917.20" y="541.30" font-size="4.6" fill="#000" text-anchor="middle" stroke="#000" stroke-width="0.12">TT3230</text>
<line x1="1908.60" y1="542.30" x2="1925.80" y2="542.30" stroke="#000" stroke-width="0.5" />
<polyline points="1905.0,551.0 1905.0,543.0 1926.0,543.0" fill="none" stroke="#666" stroke-width="0.7" />
<polyline points="1905.3,551.0 1926.0,551.0 1926.0,543.3" fill="none" stroke="#f4f4f4" stroke-width="0.6" />
<text x="1924.80" y="549.30" font-size="6.0" fill="#111" text-anchor="end">19.6</text>
<text x="1927.50" y="549.30" font-size="6.0" fill="#18a0a8">K</text>
<text x="1991.80" y="541.30" font-size="4.6" fill="#000" text-anchor="middle" stroke="#000" stroke-width="0.12">TT3220</text>
<line x1="1983.20" y1="542.30" x2="2000.40" y2="542.30" stroke="#000" stroke-width="0.5" />
<polyline points="1980.0,551.0 1980.0,543.0 2000.6,543.0" fill="none" stroke="#666" stroke-width="0.7" />
<polyline points="1980.3,551.0 2000.6,551.0 2000.6,543.3" fill="none" stroke="#f4f4f4" stroke-width="0.6" />
<text x="1999.40" y="549.30" font-size="6.0" fill="#111" text-anchor="end">13.9</text>
<text x="2002.10" y="549.30" font-size="6.0" fill="#18a0a8">K</text>
<text x="2066.40" y="541.30" font-size="4.6" fill="#000" text-anchor="middle" stroke="#000" stroke-width="0.12">TT3210</text>
<line x1="2057.80" y1="542.30" x2="2075.00" y2="542.30" stroke="#000" stroke-width="0.5" />
<polyline points="2054.0,551.0 2054.0,543.0 2074.3,543.0" fill="none" stroke="#666" stroke-width="0.7" />
<polyline points="2054.3,551.0 2074.3,551.0 2074.3,543.3" fill="none" stroke="#f4f4f4" stroke-width="0.6" />
<text x="2073.10" y="549.30" font-size="6.0" fill="#111" text-anchor="end">8.2</text>
<text x="2075.80" y="549.30" font-size="6.0" fill="#18a0a8">K</text>
<text x="2139.00" y="541.30" font-size="4.6" fill="#000" text-anchor="middle" stroke="#000" stroke-width="0.12">TT3216</text>
<line x1="2130.40" y1="542.30" x2="2147.60" y2="542.30" stroke="#000" stroke-width="0.5" />
<polyline points="2126.9,551.0 2126.9,543.0 2148.0,543.0" fill="none" stroke="#666" stroke-width="0.7" />
<polyline points="2127.2,551.0 2148.0,551.0 2148.0,543.3" fill="none" stroke="#f4f4f4" stroke-width="0.6" />
<text x="2146.80" y="549.30" font-size="6.0" fill="#111" text-anchor="end">3.93</text>
<text x="2149.50" y="549.30" font-size="6.0" fill="#18a0a8">K</text>
<polyline points="1858.4,554.5 1858.4,613.0" fill="none" stroke="#2b98d8" stroke-width="1.4" stroke-linejoin="round"/>
<polygon points="1854.40,592.40 1858.40,598.40 1862.40,592.40" fill="#fff" stroke="#222" stroke-width="0.6" />
<polygon points="1854.40,604.40 1858.40,598.40 1862.40,604.40" fill="#fff" stroke="#222" stroke-width="0.6" />
<line x1="1858.40" y1="598.40" x2="1864.00" y2="598.40" stroke="#000" stroke-width="0.6" />
<line x1="1864.00" y1="596.00" x2="1864.00" y2="600.80" stroke="#000" stroke-width="0.6" />
<text x="1866.50" y="600.00" font-size="4.8" fill="#000">HV4230</text>
<circle cx="1850.50" cy="604.20" r="1.60" fill="#20c020" stroke="#063" stroke-width="0.3" />
<text x="1866.00" y="608.50" font-size="3.4" fill="#18a0a8">L</text>
<polygon points="1858.40,620.60 1854.00,612.40 1862.80,612.40" fill="#000" />
<rect x="1841.30" y="621.60" width="36.40" height="11.00" fill="#fde6bd" stroke="#555" stroke-width="0.8"/>
<text x="1859.50" y="629.00" font-size="4.8" fill="#000" text-anchor="middle">LP CB outlet</text>
<line x1="1918.50" y1="556.00" x2="1918.50" y2="619.40" stroke="#8a8a8a" stroke-width="0.6" />
<line x1="1992.70" y1="556.00" x2="1992.70" y2="599.00" stroke="#8a8a8a" stroke-width="0.6" />
<line x1="2066.40" y1="556.00" x2="2066.40" y2="599.00" stroke="#8a8a8a" stroke-width="0.6" />
<line x1="2156.70" y1="556.00" x2="2156.70" y2="636.00" stroke="#8a8a8a" stroke-width="0.6" />
<line x1="2198.40" y1="556.00" x2="2198.40" y2="599.00" stroke="#8a8a8a" stroke-width="0.6" />
<line x1="1918.50" y1="598.80" x2="1944.00" y2="598.80" stroke="#8a8a8a" stroke-width="0.6" />
<line x1="1966.00" y1="598.80" x2="2019.00" y2="598.80" stroke="#8a8a8a" stroke-width="0.6" />
<line x1="2041.00" y1="598.80" x2="2095.00" y2="598.80" stroke="#8a8a8a" stroke-width="0.6" />
<line x1="1918.50" y1="618.20" x2="1923.80" y2="618.20" stroke="#8a8a8a" stroke-width="0.6" />
<line x1="2156.70" y1="599.00" x2="2162.00" y2="599.00" stroke="#8a8a8a" stroke-width="0.6" />
<line x1="2156.70" y1="617.80" x2="2162.00" y2="617.80" stroke="#8a8a8a" stroke-width="0.6" />
<line x1="2156.70" y1="634.00" x2="2162.00" y2="634.00" stroke="#8a8a8a" stroke-width="0.6" />
<line x1="2184.00" y1="598.80" x2="2198.40" y2="598.80" stroke="#8a8a8a" stroke-width="0.6" />
<text x="1959.20" y="469.30" font-size="6.2" fill="#000" text-anchor="middle">CC3230</text>
<rect x="1950.80" y="473.00" width="17.00" height="6.00" fill="url(#mot)" stroke="#0a7a2a" stroke-width="0.4" rx="1.5"/>
<rect x="1949.60" y="478.50" width="19.30" height="26.00" fill="url(#mot)" stroke="#0a7a2a" stroke-width="0.4" rx="1"/>
<line x1="1954.90" y1="480.00" x2="1954.90" y2="503.00" stroke="#0a8a30" stroke-width="0.7" />
<line x1="1958.10" y1="480.00" x2="1958.10" y2="503.00" stroke="#0a8a30" stroke-width="0.7" />
<line x1="1961.30" y1="480.00" x2="1961.30" y2="503.00" stroke="#0a8a30" stroke-width="0.7" />
<line x1="1964.50" y1="480.00" x2="1964.50" y2="503.00" stroke="#0a8a30" stroke-width="0.7" />
<rect x="1952.20" y="504.50" width="14.00" height="5.60" fill="url(#mot)" stroke="#0a7a2a" stroke-width="0.4"/>
<rect x="1956.90" y="510.00" width="3.00" height="36.00" fill="#111"/>
<text x="1921.90" y="477.80" font-size="4.4" fill="#000">Water</text>
<rect x="1939.40" y="473.70" width="4.60" height="4.60" fill="#7a9a7a" stroke="#222" stroke-width="0.4"/>
<rect x="1939.40" y="481.10" width="4.60" height="4.60" fill="#c88838" stroke="#222" stroke-width="0.4"/>
<text x="1940.10" y="484.80" font-size="3" fill="#fff">M</text>
<polygon points="1934.40,483.40 1926.40,479.80 1926.40,487.00" fill="#000" />
<line x1="1934.40" y1="483.40" x2="1949.90" y2="483.40" stroke="#12a83c" stroke-width="1.0" />
<polygon points="1926.20,498.00 1934.20,494.40 1934.20,501.60" fill="#000" />
<line x1="1933.90" y1="498.00" x2="1946.40" y2="498.00" stroke="#12a83c" stroke-width="1.0" />
<rect x="1945.90" y="488.20" width="7.20" height="7.20" fill="#1a3ae0" stroke="#000" stroke-width="0.3"/>
<circle cx="1958.40" cy="554.50" r="8.60" fill="#10c030" stroke="#063" stroke-width="0.8" />
<polygon points="1952.40,554.50 1962.40,549.00 1962.40,560.00" fill="#1020d8" stroke="#001060" stroke-width="0.4" />
<rect x="1940.90" y="563.50" width="5.00" height="5.00" fill="#5a7a5a" stroke="#222" stroke-width="0.4"/>
<polyline points="1949.2,572.4 1949.2,564.6 1967.7,564.6" fill="none" stroke="#666" stroke-width="0.7" />
<polyline points="1949.5,572.4 1967.7,572.4 1967.7,564.9" fill="none" stroke="#f4f4f4" stroke-width="0.6" />
<text x="1966.50" y="570.70" font-size="6.0" fill="#111" text-anchor="end">100.0</text>
<text x="1969.20" y="570.70" font-size="6.0" fill="#18a0a8">%</text>
<polyline points="1951.4,581.4 1951.4,573.6 1968.9,573.6" fill="none" stroke="#666" stroke-width="0.7" />
<polyline points="1951.7,581.4 1968.9,581.4 1968.9,573.9" fill="none" stroke="#f4f4f4" stroke-width="0.6" />
<text x="1967.70" y="579.70" font-size="6.0" fill="#111" text-anchor="end">911</text>
<text x="1970.40" y="579.60" font-size="4.8" fill="#18a0a8">Hz</text>
<text x="1954.40" y="593.60" font-size="4.6" fill="#000" text-anchor="middle" stroke="#000" stroke-width="0.12">PDT4230</text>
<line x1="1944.45" y1="594.60" x2="1964.35" y2="594.60" stroke="#000" stroke-width="0.5" />
<polyline points="1944.4,603.3 1944.4,595.3 1965.5,595.3" fill="none" stroke="#666" stroke-width="0.7" />
<polyline points="1944.7,603.3 1965.5,603.3 1965.5,595.6" fill="none" stroke="#f4f4f4" stroke-width="0.6" />
<text x="1964.30" y="601.60" font-size="6.0" fill="#111" text-anchor="end">286.3</text>
<text x="1967.00" y="601.60" font-size="6.0" fill="#18a0a8">mbar</text>
<text x="2034.20" y="469.30" font-size="6.2" fill="#000" text-anchor="middle">CC3220</text>
<rect x="2025.80" y="473.00" width="17.00" height="6.00" fill="url(#mot)" stroke="#0a7a2a" stroke-width="0.4" rx="1.5"/>
<rect x="2024.60" y="478.50" width="19.30" height="26.00" fill="url(#mot)" stroke="#0a7a2a" stroke-width="0.4" rx="1"/>
<line x1="2029.90" y1="480.00" x2="2029.90" y2="503.00" stroke="#0a8a30" stroke-width="0.7" />
<line x1="2033.10" y1="480.00" x2="2033.10" y2="503.00" stroke="#0a8a30" stroke-width="0.7" />
<line x1="2036.30" y1="480.00" x2="2036.30" y2="503.00" stroke="#0a8a30" stroke-width="0.7" />
<line x1="2039.50" y1="480.00" x2="2039.50" y2="503.00" stroke="#0a8a30" stroke-width="0.7" />
<rect x="2027.20" y="504.50" width="14.00" height="5.60" fill="url(#mot)" stroke="#0a7a2a" stroke-width="0.4"/>
<rect x="2031.90" y="510.00" width="3.00" height="36.00" fill="#111"/>
<text x="1996.90" y="477.80" font-size="4.4" fill="#000">Water</text>
<rect x="2014.40" y="473.70" width="4.60" height="4.60" fill="#7a9a7a" stroke="#222" stroke-width="0.4"/>
<rect x="2014.40" y="481.10" width="4.60" height="4.60" fill="#c88838" stroke="#222" stroke-width="0.4"/>
<text x="2015.10" y="484.80" font-size="3" fill="#fff">M</text>
<polygon points="2009.40,483.40 2001.40,479.80 2001.40,487.00" fill="#000" />
<line x1="2009.40" y1="483.40" x2="2024.90" y2="483.40" stroke="#12a83c" stroke-width="1.0" />
<polygon points="2001.20,498.00 2009.20,494.40 2009.20,501.60" fill="#000" />
<line x1="2008.90" y1="498.00" x2="2021.40" y2="498.00" stroke="#12a83c" stroke-width="1.0" />
<rect x="2020.90" y="488.20" width="7.20" height="7.20" fill="#1a3ae0" stroke="#000" stroke-width="0.3"/>
<circle cx="2033.40" cy="554.50" r="8.60" fill="#10c030" stroke="#063" stroke-width="0.8" />
<polygon points="2027.40,554.50 2037.40,549.00 2037.40,560.00" fill="#1020d8" stroke="#001060" stroke-width="0.4" />
<rect x="2015.90" y="563.50" width="5.00" height="5.00" fill="#5a7a5a" stroke="#222" stroke-width="0.4"/>
<polyline points="2024.2,572.4 2024.2,564.6 2042.7,564.6" fill="none" stroke="#666" stroke-width="0.7" />
<polyline points="2024.5,572.4 2042.7,572.4 2042.7,564.9" fill="none" stroke="#f4f4f4" stroke-width="0.6" />
<text x="2041.50" y="570.70" font-size="6.0" fill="#111" text-anchor="end">100.0</text>
<text x="2044.20" y="570.70" font-size="6.0" fill="#18a0a8">%</text>
<polyline points="2026.4,581.4 2026.4,573.6 2043.9,573.6" fill="none" stroke="#666" stroke-width="0.7" />
<polyline points="2026.7,581.4 2043.9,581.4 2043.9,573.9" fill="none" stroke="#f4f4f4" stroke-width="0.6" />
<text x="2042.70" y="579.70" font-size="6.0" fill="#111" text-anchor="end">717</text>
<text x="2045.40" y="579.60" font-size="4.8" fill="#18a0a8">Hz</text>
<text x="2029.00" y="593.60" font-size="4.6" fill="#000" text-anchor="middle" stroke="#000" stroke-width="0.12">PDT4220</text>
<line x1="2019.05" y1="594.60" x2="2038.95" y2="594.60" stroke="#000" stroke-width="0.5" />
<polyline points="2019.0,603.3 2019.0,595.3 2040.1,595.3" fill="none" stroke="#666" stroke-width="0.7" />
<polyline points="2019.3,603.3 2040.1,603.3 2040.1,595.6" fill="none" stroke="#f4f4f4" stroke-width="0.6" />
<text x="2038.90" y="601.60" font-size="6.0" fill="#111" text-anchor="end">212.3</text>
<text x="2041.60" y="601.60" font-size="6.0" fill="#18a0a8">mbar</text>
<text x="2109.20" y="469.30" font-size="6.2" fill="#000" text-anchor="middle">CC3210</text>
<rect x="2100.80" y="473.00" width="17.00" height="6.00" fill="url(#mot)" stroke="#0a7a2a" stroke-width="0.4" rx="1.5"/>
<rect x="2099.60" y="478.50" width="19.30" height="26.00" fill="url(#mot)" stroke="#0a7a2a" stroke-width="0.4" rx="1"/>
<line x1="2104.90" y1="480.00" x2="2104.90" y2="503.00" stroke="#0a8a30" stroke-width="0.7" />
<line x1="2108.10" y1="480.00" x2="2108.10" y2="503.00" stroke="#0a8a30" stroke-width="0.7" />
<line x1="2111.30" y1="480.00" x2="2111.30" y2="503.00" stroke="#0a8a30" stroke-width="0.7" />
<line x1="2114.50" y1="480.00" x2="2114.50" y2="503.00" stroke="#0a8a30" stroke-width="0.7" />
<rect x="2102.20" y="504.50" width="14.00" height="5.60" fill="url(#mot)" stroke="#0a7a2a" stroke-width="0.4"/>
<rect x="2106.90" y="510.00" width="3.00" height="36.00" fill="#111"/>
<text x="2071.90" y="477.80" font-size="4.4" fill="#000">Water</text>
<rect x="2089.40" y="473.70" width="4.60" height="4.60" fill="#7a9a7a" stroke="#222" stroke-width="0.4"/>
<rect x="2089.40" y="481.10" width="4.60" height="4.60" fill="#c88838" stroke="#222" stroke-width="0.4"/>
<text x="2090.10" y="484.80" font-size="3" fill="#fff">M</text>
<polygon points="2084.40,483.40 2076.40,479.80 2076.40,487.00" fill="#000" />
<line x1="2084.40" y1="483.40" x2="2099.90" y2="483.40" stroke="#12a83c" stroke-width="1.0" />
<polygon points="2076.20,498.00 2084.20,494.40 2084.20,501.60" fill="#000" />
<line x1="2083.90" y1="498.00" x2="2096.40" y2="498.00" stroke="#12a83c" stroke-width="1.0" />
<rect x="2095.90" y="488.20" width="7.20" height="7.20" fill="#1a3ae0" stroke="#000" stroke-width="0.3"/>
<circle cx="2108.40" cy="554.50" r="8.60" fill="#10c030" stroke="#063" stroke-width="0.8" />
<polygon points="2102.40,554.50 2112.40,549.00 2112.40,560.00" fill="#1020d8" stroke="#001060" stroke-width="0.4" />
<rect x="2090.90" y="563.50" width="5.00" height="5.00" fill="#5a7a5a" stroke="#222" stroke-width="0.4"/>
<polyline points="2099.2,572.4 2099.2,564.6 2117.7,564.6" fill="none" stroke="#666" stroke-width="0.7" />
<polyline points="2099.5,572.4 2117.7,572.4 2117.7,564.9" fill="none" stroke="#f4f4f4" stroke-width="0.6" />
<text x="2116.50" y="570.70" font-size="6.0" fill="#111" text-anchor="end">100.0</text>
<text x="2119.20" y="570.70" font-size="6.0" fill="#18a0a8">%</text>
<polyline points="2101.4,581.4 2101.4,573.6 2118.9,573.6" fill="none" stroke="#666" stroke-width="0.7" />
<polyline points="2101.7,581.4 2118.9,581.4 2118.9,573.9" fill="none" stroke="#f4f4f4" stroke-width="0.6" />
<text x="2117.70" y="579.70" font-size="6.0" fill="#111" text-anchor="end">335</text>
<text x="2120.40" y="579.60" font-size="4.8" fill="#18a0a8">Hz</text>
<text x="2105.00" y="593.60" font-size="4.6" fill="#000" text-anchor="middle" stroke="#000" stroke-width="0.12">PDT4210</text>
<line x1="2095.05" y1="594.60" x2="2114.95" y2="594.60" stroke="#000" stroke-width="0.5" />
<polyline points="2095.0,603.3 2095.0,595.3 2116.1,595.3" fill="none" stroke="#666" stroke-width="0.7" />
<polyline points="2095.3,603.3 2116.1,603.3 2116.1,595.6" fill="none" stroke="#f4f4f4" stroke-width="0.6" />
<text x="2114.90" y="601.60" font-size="6.0" fill="#111" text-anchor="end">68.1</text>
<text x="2117.60" y="601.60" font-size="6.0" fill="#18a0a8">mbar</text>
<text x="1935.80" y="612.50" font-size="4.6" fill="#000" text-anchor="middle" stroke="#000" stroke-width="0.12">PT4238</text>
<line x1="1927.20" y1="613.50" x2="1944.40" y2="613.50" stroke="#000" stroke-width="0.5" />
<polyline points="1923.8,622.2 1923.8,614.2 1944.4,614.2" fill="none" stroke="#666" stroke-width="0.7" />
<polyline points="1924.1,622.2 1944.4,622.2 1944.4,614.5" fill="none" stroke="#f4f4f4" stroke-width="0.6" />
<text x="1943.20" y="620.50" font-size="6.0" fill="#111" text-anchor="end">50.7</text>
<text x="1945.90" y="620.50" font-size="6.0" fill="#18a0a8">mbar</text>
<polygon points="2169.00,554.50 2175.00,548.50 2181.00,554.50 2175.00,560.50" fill="#fff" stroke="#888" stroke-width="0.7" />
<line x1="2175.00" y1="548.50" x2="2175.00" y2="560.50" stroke="#aaa" stroke-width="0.5" />
<line x1="2233.50" y1="554.50" x2="2233.50" y2="547.50" stroke="#000" stroke-width="0.8" />
<path d="M2227.10,547.60 a6.4,6.1 0 0 1 12.8,0 z" fill="url(#domeb)" stroke="#334" stroke-width="0.4" />
<polygon points="2227.20,550.20 2233.50,554.50 2227.20,558.80" fill="#10b010" stroke="#063" stroke-width="0.6" />
<polygon points="2239.80,550.20 2233.50,554.50 2239.80,558.80" fill="#10b010" stroke="#063" stroke-width="0.6" />
<text x="2233.50" y="539.50" font-size="5.6" fill="#000" text-anchor="middle">CV3200</text>
<polyline points="2223.8,572.2 2223.8,564.2 2242.3,564.2" fill="none" stroke="#666" stroke-width="0.7" />
<polyline points="2224.1,572.2 2242.3,572.2 2242.3,564.5" fill="none" stroke="#f4f4f4" stroke-width="0.6" />
<text x="2241.10" y="570.50" font-size="6.0" fill="#111" text-anchor="end">100.0</text>
<text x="2243.80" y="570.50" font-size="6.0" fill="#18a0a8">%</text>
<text x="2170.70" y="593.30" font-size="4.6" fill="#000" text-anchor="middle" stroke="#000" stroke-width="0.12">PDT4201</text>
<line x1="2160.75" y1="594.30" x2="2180.65" y2="594.30" stroke="#000" stroke-width="0.5" />
<polyline points="2162.0,603.0 2162.0,595.0 2183.0,595.0" fill="none" stroke="#666" stroke-width="0.7" />
<polyline points="2162.3,603.0 2183.0,603.0 2183.0,595.3" fill="none" stroke="#f4f4f4" stroke-width="0.6" />
<text x="2181.80" y="601.30" font-size="6.0" fill="#111" text-anchor="end">0.0</text>
<text x="2184.50" y="601.30" font-size="6.0" fill="#18a0a8">mbar</text>
<text x="2170.70" y="612.10" font-size="4.6" fill="#000" text-anchor="middle" stroke="#000" stroke-width="0.12">PT4210</text>
<line x1="2162.10" y1="613.10" x2="2179.30" y2="613.10" stroke="#000" stroke-width="0.5" />
<polyline points="2162.0,621.8 2162.0,613.8 2183.0,613.8" fill="none" stroke="#666" stroke-width="0.7" />
<polyline points="2162.3,621.8 2183.0,621.8 2183.0,614.1" fill="none" stroke="#f4f4f4" stroke-width="0.6" />
<text x="2181.80" y="620.10" font-size="6.0" fill="#111" text-anchor="end">20.1</text>
<text x="2184.50" y="620.10" font-size="6.0" fill="#18a0a8">mbar</text>
<text x="2170.70" y="628.30" font-size="4.6" fill="#000" text-anchor="middle" stroke="#000" stroke-width="0.12">PT4210</text>
<line x1="2162.10" y1="629.30" x2="2179.30" y2="629.30" stroke="#000" stroke-width="0.5" />
<polyline points="2162.0,638.0 2162.0,630.0 2183.0,630.0" fill="none" stroke="#666" stroke-width="0.7" />
<polyline points="2162.3,638.0 2183.0,638.0 2183.0,630.3" fill="none" stroke="#f4f4f4" stroke-width="0.6" />
<text x="2181.80" y="636.30" font-size="6.0" fill="#111" text-anchor="end">25.7</text>
<text x="2184.50" y="636.30" font-size="6.0" fill="#18a0a8">mbar</text>
<polyline points="2322.0,554.5 2322.0,386.3 2337.4,386.3" fill="none" stroke="#2b98d8" stroke-width="1.6" stroke-linejoin="round"/>
<polyline points="2363.5,386.3 2378.0,386.3" fill="none" stroke="#2b98d8" stroke-width="1.6" stroke-linejoin="round"/>
<polyline points="2445.0,380.9 2534.0,380.9" fill="none" stroke="#2b98d8" stroke-width="1.6" stroke-linejoin="round"/>
<path d="M2376,381.5 a34.75,9.8 0 0 1 69.5,0 v107 a34.75,8.5 0 0 1 -69.5,0 z" fill="url(#metal2)" stroke="#444" stroke-width="0.5" />
<rect x="2380.00" y="381.50" width="56.80" height="107.00" fill="#fff"/>
<rect x="2436.80" y="381.50" width="7.50" height="42.80" fill="#9a9a9a"/>
<rect x="2436.80" y="424.30" width="7.50" height="61.30" fill="#10e010"/>
<text x="2340.00" y="378.00" font-size="6.2" fill="#000">EH3288</text>
<rect x="2337.40" y="380.00" width="26.10" height="12.50" fill="#30b030" stroke="#175" stroke-width="0.4"/>
<rect x="2337.40" y="381.50" width="26.10" height="9.50" fill="#fbeaea"/>
<polyline points="2338.3,389.8 2341.4,383.0 2344.4,389.8 2347.5,383.0 2350.5,389.8 2353.6,383.0 2356.6,389.8 2359.7,383.0 2362.7,389.8" fill="none" stroke="#e01010" stroke-width="1.0" />
<rect x="2337.70" y="395.10" width="4.60" height="4.60" fill="#6a6a6a" stroke="#222" stroke-width="0.4"/>
<polyline points="2345.7,402.5 2345.7,394.5 2363.5,394.5" fill="none" stroke="#666" stroke-width="0.7" />
<polyline points="2346.0,402.5 2363.5,402.5 2363.5,394.8" fill="none" stroke="#f4f4f4" stroke-width="0.6" />
<text x="2362.30" y="400.80" font-size="6.0" fill="#111" text-anchor="end">32.8</text>
<text x="2365.00" y="400.80" font-size="6.0" fill="#18a0a8">%</text>
<text x="2363.00" y="410.30" font-size="5.8" fill="#10a010" text-anchor="end">824</text>
<text x="2365.50" y="410.30" font-size="5.8" fill="#18a0a8">W</text>
<circle cx="2331.60" cy="416.00" r="1.60" fill="#20c020" stroke="#063" stroke-width="0.3" />
<text x="2334.30" y="417.20" font-size="3.4" fill="#000">Enable</text>
<circle cx="2358.00" cy="416.00" r="1.60" fill="#20c020" stroke="#063" stroke-width="0.3" />
<text x="2360.70" y="417.20" font-size="3.4" fill="#000">TSH</text>
<text x="2393.30" y="390.80" font-size="4.6" fill="#000" text-anchor="middle" stroke="#000" stroke-width="0.12">PT4286</text>
<line x1="2384.70" y1="391.80" x2="2401.90" y2="391.80" stroke="#000" stroke-width="0.5" />
<polyline points="2382.0,400.5 2382.0,392.5 2402.9,392.5" fill="none" stroke="#666" stroke-width="0.7" />
<polyline points="2382.3,400.5 2402.9,400.5 2402.9,392.8" fill="none" stroke="#f4f4f4" stroke-width="0.6" />
<text x="2401.70" y="398.80" font-size="6.0" fill="#111" text-anchor="end">32.7</text>
<text x="2404.40" y="398.80" font-size="6.0" fill="#18a0a8">mbar</text>
<text x="2414.50" y="413.50" font-size="4.6" fill="#000" text-anchor="middle" stroke="#000" stroke-width="0.12">LT3286</text>
<line x1="2405.90" y1="414.50" x2="2423.10" y2="414.50" stroke="#000" stroke-width="0.5" />
<polyline points="2402.0,423.2 2402.0,415.2 2423.6,415.2" fill="none" stroke="#666" stroke-width="0.7" />
<polyline points="2402.3,423.2 2423.6,423.2 2423.6,415.5" fill="none" stroke="#f4f4f4" stroke-width="0.6" />
<text x="2422.40" y="421.50" font-size="6.0" fill="#111" text-anchor="end">53.06</text>
<text x="2425.10" y="421.50" font-size="6.0" fill="#18a0a8">%</text>
<text x="2414.50" y="428.90" font-size="4.6" fill="#000" text-anchor="middle" stroke="#000" stroke-width="0.12">LT4286</text>
<line x1="2405.90" y1="429.90" x2="2423.10" y2="429.90" stroke="#000" stroke-width="0.5" />
<polyline points="2402.0,438.6 2402.0,430.6 2423.6,430.6" fill="none" stroke="#666" stroke-width="0.7" />
<polyline points="2402.3,438.6 2423.6,438.6 2423.6,430.9" fill="none" stroke="#f4f4f4" stroke-width="0.6" />
<text x="2422.40" y="436.90" font-size="6.0" fill="#111" text-anchor="end">3.9</text>
<text x="2425.10" y="436.90" font-size="6.0" fill="#18a0a8">%</text>
<text x="2412.00" y="450.80" font-size="4.6" fill="#000" text-anchor="middle" stroke="#000" stroke-width="0.12">PDT4286</text>
<line x1="2402.05" y1="451.80" x2="2421.95" y2="451.80" stroke="#000" stroke-width="0.5" />
<polyline points="2402.0,460.5 2402.0,452.5 2423.6,452.5" fill="none" stroke="#666" stroke-width="0.7" />
<polyline points="2402.3,460.5 2423.6,460.5 2423.6,452.8" fill="none" stroke="#f4f4f4" stroke-width="0.6" />
<text x="2422.40" y="458.80" font-size="6.0" fill="#111" text-anchor="end">1.2</text>
<text x="2425.10" y="458.80" font-size="6.0" fill="#18a0a8">mbar</text>
<text x="2399.50" y="470.00" font-size="6.2" fill="#000">EH3287</text>
<rect x="2396.60" y="472.40" width="27.00" height="12.40" fill="#30b030" stroke="#175" stroke-width="0.4"/>
<rect x="2396.60" y="473.90" width="27.00" height="9.40" fill="#fbeaea"/>
<polyline points="2397.5,482.2 2400.7,475.4 2403.8,482.2 2406.9,475.4 2410.1,482.2 2413.2,475.4 2416.4,482.2 2419.6,475.4 2422.7,482.2" fill="none" stroke="#e01010" stroke-width="1.0" />
<rect x="2397.20" y="487.50" width="4.60" height="4.60" fill="#555" stroke="#222" stroke-width="0.4"/>
<rect x="2405.80" y="486.90" width="17.80" height="8.00" fill="#c8c8c8"/>
<polyline points="2405.8,494.9 2405.8,486.9 2423.6,486.9" fill="none" stroke="#666" stroke-width="0.7" />
<polyline points="2406.1,494.9 2423.6,494.9 2423.6,487.2" fill="none" stroke="#f4f4f4" stroke-width="0.6" />
<text x="2422.40" y="493.20" font-size="6.0" fill="#111" text-anchor="end">65.5</text>
<text x="2425.10" y="493.20" font-size="6.0" fill="#18a0a8">%</text>
<text x="2423.00" y="503.50" font-size="5.8" fill="#10a010" text-anchor="end">1328</text>
<text x="2425.50" y="503.50" font-size="5.8" fill="#18a0a8">W</text>
<circle cx="2392.50" cy="508.80" r="1.60" fill="#20c020" stroke="#063" stroke-width="0.3" />
<text x="2395.20" y="510.00" font-size="3.4" fill="#000">Enable</text>
<circle cx="2417.30" cy="508.80" r="1.60" fill="#20c020" stroke="#063" stroke-width="0.3" />
<text x="2420.00" y="510.00" font-size="3.4" fill="#000">TSH</text>
<rect x="2450.50" y="412.00" width="17.80" height="10.70" fill="#55555f" stroke="#333" stroke-width="0.5" rx="1"/>
<text x="2459.40" y="419.80" font-size="6.2" fill="#fff" text-anchor="middle" font-weight="bold">AMI</text>
<line x1="2476.10" y1="380.90" x2="2476.10" y2="373.90" stroke="#000" stroke-width="0.8" />
<path d="M2469.70,374.00 a6.4,6.1 0 0 1 12.8,0 z" fill="url(#domeb)" stroke="#334" stroke-width="0.4" />
<polygon points="2469.80,376.60 2476.10,380.90 2469.80,385.20" fill="#10b010" stroke="#063" stroke-width="0.6" />
<polygon points="2482.40,376.60 2476.10,380.90 2482.40,385.20" fill="#10b010" stroke="#063" stroke-width="0.6" />
<text x="2476.10" y="364.70" font-size="5.6" fill="#000" text-anchor="middle">CV3486</text>
<polyline points="2468.3,398.4 2468.3,390.4 2485.7,390.4" fill="none" stroke="#666" stroke-width="0.7" />
<polyline points="2468.6,398.4 2485.7,398.4 2485.7,390.7" fill="none" stroke="#f4f4f4" stroke-width="0.6" />
<text x="2484.50" y="396.70" font-size="6.0" fill="#111" text-anchor="end">90.9</text>
<text x="2487.20" y="396.70" font-size="6.0" fill="#18a0a8">%</text>
<rect x="2484.80" y="368.80" width="4.40" height="4.40" fill="#7a9a7a" stroke="#222" stroke-width="0.4"/>
<line x1="2489.00" y1="371.00" x2="2499.00" y2="371.00" stroke="#000" stroke-width="0.7" />
<rect x="2499.50" y="360.70" width="9.60" height="3.40" fill="url(#act)" stroke="#223" stroke-width="0.3"/>
<line x1="2504.30" y1="364.00" x2="2504.30" y2="371.00" stroke="#000" stroke-width="0.6" />
<polygon points="2499.70,367.80 2504.30,371.00 2499.70,374.20" fill="#10b010" stroke="#063" stroke-width="0.6" />
<polygon points="2508.90,367.80 2504.30,371.00 2508.90,374.20" fill="#10b010" stroke="#063" stroke-width="0.6" />
<text x="2504.30" y="359.40" font-size="4.4" fill="#000" text-anchor="middle">EV3486</text>
<polygon points="2533.30,380.90 2541.60,376.50 2541.60,385.30" fill="#000" />
<rect x="2541.60" y="375.00" width="46.40" height="11.30" fill="#fde6bd" stroke="#555" stroke-width="0.8"/>
<text x="2564.80" y="382.55" font-size="4.9" fill="#000" text-anchor="middle">From Subcooler</text>
<text x="2448.70" y="498.30" font-size="4.6" fill="#000" text-anchor="middle" stroke="#000" stroke-width="0.12">TT3286</text>
<line x1="2440.10" y1="499.30" x2="2457.30" y2="499.30" stroke="#000" stroke-width="0.5" />
<polyline points="2442.2,508.0 2442.2,500.0 2463.0,500.0" fill="none" stroke="#666" stroke-width="0.7" />
<polyline points="2442.5,508.0 2463.0,508.0 2463.0,500.3" fill="none" stroke="#f4f4f4" stroke-width="0.6" />
<text x="2461.80" y="506.30" font-size="6.0" fill="#111" text-anchor="end">2.68</text>
<text x="2464.50" y="506.30" font-size="6.0" fill="#18a0a8">K</text>
<text x="2334.50" y="510.80" font-size="4.6" fill="#000" text-anchor="middle" stroke="#000" stroke-width="0.12">TT3284</text>
<line x1="2325.90" y1="511.80" x2="2343.10" y2="511.80" stroke="#000" stroke-width="0.5" />
<polyline points="2325.0,520.5 2325.0,512.5 2345.0,512.5" fill="none" stroke="#666" stroke-width="0.7" />
<polyline points="2325.3,520.5 2345.0,520.5 2345.0,512.8" fill="none" stroke="#f4f4f4" stroke-width="0.6" />
<text x="2343.80" y="518.80" font-size="6.0" fill="#111" text-anchor="end">3.8</text>
<text x="2346.50" y="518.80" font-size="6.0" fill="#18a0a8">K</text>
<text x="2402.20" y="541.80" font-size="4.6" fill="#000" text-anchor="middle" stroke="#000" stroke-width="0.12">TT3201</text>
<line x1="2393.60" y1="542.80" x2="2410.80" y2="542.80" stroke="#000" stroke-width="0.5" />
<polyline points="2391.7,551.5 2391.7,543.5 2411.4,543.5" fill="none" stroke="#666" stroke-width="0.7" />
<polyline points="2392.0,551.5 2411.4,551.5 2411.4,543.8" fill="none" stroke="#f4f4f4" stroke-width="0.6" />
<text x="2410.20" y="549.80" font-size="6.0" fill="#111" text-anchor="end">8.2</text>
<text x="2412.90" y="549.80" font-size="6.0" fill="#18a0a8">K</text>
<polygon points="2447.10,550.10 2453.60,554.50 2447.10,558.90" fill="#000" stroke="#222" stroke-width="0.6" />
<polygon points="2460.10,550.10 2453.60,554.50 2460.10,558.90" fill="#000" stroke="#222" stroke-width="0.6" />
<text x="2495.50" y="536.50" font-size="5.0" fill="#000" text-anchor="middle">PT_HIAF</text>
<rect x="2483.80" y="540.60" width="27.20" height="9.60" fill="#fff" stroke="#777" stroke-width="0.6"/>
<text x="2497.40" y="547.60" font-size="5.8" fill="#000" text-anchor="middle">0</text>
<text x="2512.40" y="547.60" font-size="5.6" fill="#000">mbar</text>
<polygon points="2534.00,554.50 2542.30,550.10 2542.30,558.90" fill="#000" />
<rect x="2542.30" y="549.40" width="39.70" height="9.30" fill="#fff" stroke="#333" stroke-width="0.7"/>
<text x="2562.20" y="556.20" font-size="5.0" fill="#000" text-anchor="middle">2K from HIAF</text>
<text x="2470.40" y="565.60" font-size="6.0" fill="#000" text-anchor="end">CV_HIAF opened</text>
<rect x="2472.20" y="559.80" width="6.50" height="6.50" fill="#fff" stroke="#333" stroke-width="0.6"/>
<text x="2470.40" y="573.50" font-size="6.0" fill="#000" text-anchor="end">CV_HIAF closed</text>
<rect x="2472.20" y="567.80" width="6.50" height="6.50" fill="#3a4cc8" stroke="#333" stroke-width="0.6"/>
<polyline points="2383.4,554.5 2383.4,597.0 2535.0,597.0" fill="none" stroke="#2b98d8" stroke-width="1.6" stroke-linejoin="round"/>
<line x1="2477.50" y1="597.00" x2="2477.50" y2="590.00" stroke="#000" stroke-width="0.8" />
<path d="M2471.10,590.10 a6.4,6.1 0 0 1 12.8,0 z" fill="url(#domer)" stroke="#334" stroke-width="0.4" />
<polygon points="2471.20,592.70 2477.50,597.00 2471.20,601.30" fill="#fff" stroke="#222" stroke-width="0.6" />
<polygon points="2483.80,592.70 2477.50,597.00 2483.80,601.30" fill="#fff" stroke="#222" stroke-width="0.6" />
<text x="2477.50" y="581.50" font-size="5.6" fill="#000" text-anchor="middle">CV3301</text>
<polyline points="2468.3,615.5 2468.3,607.5 2485.8,607.5" fill="none" stroke="#666" stroke-width="0.7" />
<polyline points="2468.6,615.5 2485.8,615.5 2485.8,607.8" fill="none" stroke="#f4f4f4" stroke-width="0.6" />
<text x="2484.60" y="613.80" font-size="6.0" fill="#111" text-anchor="end">0.0</text>
<text x="2487.30" y="613.80" font-size="6.0" fill="#18a0a8">%</text>
<rect x="2465.70" y="584.80" width="4.40" height="4.40" fill="#c88838" stroke="#222" stroke-width="0.4"/>
<rect x="2485.80" y="584.80" width="4.40" height="4.40" fill="#4a8a4a" stroke="#222" stroke-width="0.4"/>
<circle cx="2469.50" cy="604.50" r="1.20" fill="#444" />
<polygon points="2542.30,597.00 2534.00,592.60 2534.00,601.40" fill="#000" />
<rect x="2542.30" y="590.00" width="39.70" height="15.40" fill="#fde6bd" stroke="#555" stroke-width="0.8"/>
<text x="2562.15" y="597.10" font-size="4.9" fill="#000" text-anchor="middle">Return</text>
<text x="2562.15" y="603.10" font-size="4.9" fill="#000" text-anchor="middle">Cooldown</text>
<rect x="1304.00" y="46.00" width="194.00" height="214.50" fill="#ffffff" stroke="#8a8a8a" stroke-width="0.6"/>
<line x1="1303.60" y1="46.00" x2="1303.60" y2="260.50" stroke="#4a4a4a" stroke-width="1.0" />
<polygon points="1308.50,57.00 1311.00,51.00 1313.50,49.50 1312.30,55.50" fill="#3a9aa8" />
<text x="1319.60" y="56.00" font-size="5.6" fill="#222" textLength="17.2" lengthAdjust="spacingAndGlyphs">LT5300</text>
<line x1="1487.00" y1="50.50" x2="1492.00" y2="55.50" stroke="#333" stroke-width="0.8" />
<line x1="1492.00" y1="50.50" x2="1487.00" y2="55.50" stroke="#333" stroke-width="0.8" />
<rect x="1304.50" y="59.50" width="193.00" height="19.00" fill="#f6f6f6"/>
<line x1="1304.00" y1="59.30" x2="1498.00" y2="59.30" stroke="#dadada" stroke-width="0.6" />
<rect x="1311.50" y="64.80" width="9.50" height="9.50" fill="#f4f4fa" stroke="#8090c0" stroke-width="0.6"/>
<rect x="1311.50" y="64.80" width="9.50" height="2.00" fill="#e05050"/>
<rect x="1315.50" y="69.80" width="4.50" height="3.00" fill="#5080d0"/>
<polygon points="1326.50,66.80 1326.50,72.80 1330.00,69.80" fill="#c0c0c0" />
<line x1="1331.00" y1="66.80" x2="1331.00" y2="72.80" stroke="#c0c0c0" stroke-width="1" />
<line x1="1336.80" y1="63.80" x2="1336.80" y2="75.80" stroke="#666" stroke-width="0.6" />
<circle cx="1347.50" cy="69.00" r="3.30" fill="#e8f4e8" stroke="#5a8a8a" stroke-width="0.9" />
<line x1="1349.90" y1="71.40" x2="1352.50" y2="74.00" stroke="#7a7a7a" stroke-width="1.3" />
<rect x="1345.70" y="68.30" width="3.40" height="1.40" fill="#20a020"/>
<circle cx="1362.50" cy="69.00" r="3.30" fill="#e8f4e8" stroke="#5a8a8a" stroke-width="0.9" />
<line x1="1364.90" y1="71.40" x2="1367.50" y2="74.00" stroke="#7a7a7a" stroke-width="1.3" />
<rect x="1360.70" y="68.30" width="3.40" height="1.40" fill="#20a020"/>
<circle cx="1377.20" cy="69.00" r="3.30" fill="#e8f4e8" stroke="#5a8a8a" stroke-width="0.9" />
<line x1="1379.60" y1="71.40" x2="1382.20" y2="74.00" stroke="#7a7a7a" stroke-width="1.3" />
<rect x="1375.40" y="68.30" width="3.40" height="1.40" fill="#20a020"/>
<circle cx="1392.00" cy="69.00" r="3.30" fill="#e8f4e8" stroke="#5a8a8a" stroke-width="0.9" />
<line x1="1394.40" y1="71.40" x2="1397.00" y2="74.00" stroke="#7a7a7a" stroke-width="1.3" />
<rect x="1390.20" y="68.30" width="3.40" height="1.40" fill="#20a020"/>
<path d="M1407.5,64.80 l2.5,3 h-1.6 v1.2 h1.2 v-1.6 l3,2.4 l-3,2.4 v-1.6 h-1.2 v1.2 h1.6 l-2.5,3 l-2.5,-3 h1.6 v-1.2 h-1.2 v1.6 l-3,-2.4 l3,-2.4 v1.6 h1.2 v-1.2 h-1.6 z" fill="#3a78d8" />
<rect x="1418.50" y="64.30" width="2.60" height="11.00" fill="#e8a020"/>
<rect x="1422.30" y="64.30" width="2.60" height="11.00" fill="#3a68c8"/>
<rect x="1432.00" y="65.30" width="9.50" height="9.50" fill="#e8e8e8" stroke="#c0c0c0" stroke-width="0.7"/>
<circle cx="1452.50" cy="70.10" r="4.50" fill="#f0f0f0" stroke="#7a7a8a" stroke-width="0.9" />
<polyline points="1452.5,67.3 1452.5,70.1 1454.5,70.1" fill="none" stroke="#444" stroke-width="0.7" />
<rect x="1468.00" y="66.60" width="2.20" height="6.40" fill="#3858c8"/>
<rect x="1471.50" y="66.60" width="2.20" height="6.40" fill="#3858c8"/>
<rect x="1304.50" y="78.60" width="193.00" height="143.40" fill="#f1eee0"/>
<rect x="1329.00" y="78.60" width="168.50" height="120.80" fill="#ece8d6"/>
<line x1="1329.00" y1="84.00" x2="1497.50" y2="84.00" stroke="#d4d0c0" stroke-width="0.5" />
<line x1="1326.50" y1="84.00" x2="1329.00" y2="84.00" stroke="#444" stroke-width="0.6" />
<text x="1326.00" y="86.20" font-size="6.1" fill="#222" text-anchor="end">60.30</text>
<line x1="1329.00" y1="102.23" x2="1497.50" y2="102.23" stroke="#d4d0c0" stroke-width="0.5" />
<line x1="1326.50" y1="102.23" x2="1329.00" y2="102.23" stroke="#444" stroke-width="0.6" />
<text x="1326.00" y="104.43" font-size="6.1" fill="#222" text-anchor="end">60.20</text>
<line x1="1329.00" y1="120.46" x2="1497.50" y2="120.46" stroke="#d4d0c0" stroke-width="0.5" />
<line x1="1326.50" y1="120.46" x2="1329.00" y2="120.46" stroke="#444" stroke-width="0.6" />
<text x="1326.00" y="122.66" font-size="6.1" fill="#222" text-anchor="end">60.10</text>
<line x1="1329.00" y1="138.69" x2="1497.50" y2="138.69" stroke="#d4d0c0" stroke-width="0.5" />
<line x1="1326.50" y1="138.69" x2="1329.00" y2="138.69" stroke="#444" stroke-width="0.6" />
<text x="1326.00" y="140.89" font-size="6.1" fill="#222" text-anchor="end">60.00</text>
<line x1="1329.00" y1="156.92" x2="1497.50" y2="156.92" stroke="#d4d0c0" stroke-width="0.5" />
<line x1="1326.50" y1="156.92" x2="1329.00" y2="156.92" stroke="#444" stroke-width="0.6" />
<text x="1326.00" y="159.12" font-size="6.1" fill="#222" text-anchor="end">59.90</text>
<line x1="1329.00" y1="175.15" x2="1497.50" y2="175.15" stroke="#d4d0c0" stroke-width="0.5" />
<line x1="1326.50" y1="175.15" x2="1329.00" y2="175.15" stroke="#444" stroke-width="0.6" />
<text x="1326.00" y="177.35" font-size="6.1" fill="#222" text-anchor="end">59.80</text>
<line x1="1329.00" y1="193.38" x2="1497.50" y2="193.38" stroke="#d4d0c0" stroke-width="0.5" />
<line x1="1326.50" y1="193.38" x2="1329.00" y2="193.38" stroke="#444" stroke-width="0.6" />
<text x="1326.00" y="195.58" font-size="6.1" fill="#222" text-anchor="end">59.70</text>
<line x1="1342.60" y1="78.60" x2="1342.60" y2="199.40" stroke="#d4d0c0" stroke-width="0.5" />
<line x1="1398.70" y1="78.60" x2="1398.70" y2="199.40" stroke="#d4d0c0" stroke-width="0.5" />
<line x1="1453.90" y1="78.60" x2="1453.90" y2="199.40" stroke="#d4d0c0" stroke-width="0.5" />
<line x1="1329.00" y1="78.60" x2="1329.00" y2="199.40" stroke="#444" stroke-width="0.7" />
<line x1="1329.00" y1="199.40" x2="1497.50" y2="199.40" stroke="#444" stroke-width="0.7" />
<clipPath id="pclip"><rect x="1329.5" y="79" width="168" height="120"/></clipPath><g clip-path="url(#pclip)">
<polyline points="1330.0,169.2 1331.8,169.2 1331.8,168.9 1333.2,168.9 1333.2,152.4 1335.0,152.4 1335.0,107.7 1336.2,107.7 1336.2,165.7 1337.6,165.7 1337.6,159.2 1339.4,159.2 1339.4,158.9 1340.5,158.9 1340.5,181.2 1341.2,181.2 1341.2,124.2 1341.7,124.2 1341.7,165.4 1342.4,165.4 1342.4,175.0 1343.1,175.0 1343.1,161.1 1344.9,161.1 1344.9,163.2 1345.6,163.2 1345.6,163.2 1346.7,163.2 1346.7,172.6 1347.2,172.6 1347.2,153.2 1348.6,153.2 1348.6,168.2 1349.1,168.2 1349.1,195.2 1350.3,195.2 1350.3,166.0 1352.1,166.0 1352.1,173.8 1352.6,173.8 1352.6,153.1 1354.0,153.1 1354.0,161.7 1354.9,161.7 1354.9,169.5 1356.7,169.5 1356.7,182.5 1357.4,182.5 1357.4,155.4 1358.5,155.4 1358.5,109.5 1359.7,109.5 1359.7,154.9 1361.1,154.9 1361.1,162.7 1362.0,162.7 1362.0,157.9 1362.5,157.9 1362.5,160.7 1363.9,160.7 1363.9,171.6 1365.7,171.6 1365.7,169.5 1366.6,169.5 1366.6,161.4 1368.4,161.4 1368.4,178.6 1369.5,178.6 1369.5,157.6 1370.9,157.6 1370.9,156.8 1371.4,156.8 1371.4,158.0 1372.5,158.0 1372.5,149.0 1373.2,149.0 1373.2,133.3 1373.9,133.3 1373.9,128.1 1374.6,128.1 1374.6,134.5 1375.3,134.5 1375.3,134.8 1376.0,134.8 1376.0,185.2 1377.4,185.2 1377.4,198.8 1378.6,198.8 1378.6,160.8 1379.7,160.8 1379.7,164.3 1380.4,164.3 1380.4,148.1 1381.1,148.1 1381.1,149.5 1382.2,149.5 1382.2,155.2 1383.6,155.2 1383.6,161.6 1385.0,161.6 1385.0,166.4 1386.8,166.4 1386.8,148.3 1387.3,148.3 1387.3,157.7 1388.2,157.7 1388.2,165.0 1389.1,165.0 1389.1,120.5 1390.3,120.5 1390.3,169.0 1391.7,169.0 1391.7,153.0 1392.6,153.0 1392.6,164.5 1393.7,164.5 1393.7,159.9 1394.6,159.9 1394.6,149.4 1396.4,149.4 1396.4,167.4 1397.1,167.4 1397.1,143.5 1398.9,143.5 1398.9,164.2 1399.6,164.2 1399.6,155.4 1400.3,155.4 1400.3,155.3 1401.2,155.3 1401.2,150.9 1403.0,150.9 1403.0,161.0 1404.4,161.0 1404.4,164.0 1405.5,164.0 1405.5,195.2 1406.7,195.2 1406.7,148.5 1407.2,148.5 1407.2,154.0 1407.9,154.0 1407.9,148.1 1409.7,148.1 1409.7,152.2 1410.4,152.2 1410.4,179.4 1410.9,179.4 1410.9,168.4 1412.0,168.4 1412.0,152.8 1413.8,152.8 1413.8,164.4 1414.7,164.4 1414.7,133.4 1415.6,133.4 1415.6,147.8 1417.0,147.8 1417.0,168.3 1417.5,168.3 1417.5,162.6 1418.9,162.6 1418.9,158.6 1420.3,158.6 1420.3,124.1 1421.5,124.1 1421.5,150.1 1422.4,150.1 1422.4,160.7 1423.5,160.7 1423.5,155.6 1424.2,155.6 1424.2,161.7 1424.7,161.7 1424.7,160.7 1425.6,160.7 1425.6,175.4 1427.0,175.4 1427.0,160.4 1428.1,160.4 1428.1,147.9 1429.9,147.9 1429.9,157.5 1430.6,157.5 1430.6,160.9 1431.7,160.9 1431.7,159.4 1432.2,159.4 1432.2,187.9 1433.4,187.9 1433.4,167.3 1435.2,167.3 1435.2,161.7 1435.9,161.7 1435.9,161.4 1436.4,161.4 1436.4,165.2 1437.5,165.2 1437.5,154.7 1438.2,154.7 1438.2,169.9 1439.1,169.9 1439.1,155.0 1440.5,155.0 1440.5,147.0 1442.3,147.0 1442.3,156.1 1442.8,156.1 1442.8,155.3 1443.7,155.3 1443.7,161.8 1445.5,161.8 1445.5,163.6 1447.3,163.6 1447.3,157.0 1448.0,157.0 1448.0,150.0 1448.5,150.0 1448.5,154.2 1449.9,154.2 1449.9,152.6 1451.3,152.6 1451.3,148.1 1453.1,148.1 1453.1,145.1 1454.2,145.1 1454.2,158.2 1456.0,158.2 1456.0,152.2 1456.5,152.2 1456.5,158.9 1457.0,158.9 1457.0,157.7 1458.1,157.7 1458.1,162.3 1458.8,162.3 1458.8,149.3 1459.7,149.3 1459.7,127.8 1460.9,127.8 1460.9,135.3 1461.4,135.3 1461.4,161.7 1463.2,161.7 1463.2,148.6 1463.7,148.6 1463.7,157.1 1465.5,157.1 1465.5,126.7 1466.0,126.7 1466.0,154.4 1466.7,154.4 1466.7,143.2 1467.4,143.2 1467.4,155.0 1468.5,155.0 1468.5,153.7 1469.9,153.7 1469.9,131.6 1470.4,131.6 1470.4,131.2 1471.8,131.2 1471.8,130.4 1472.7,130.4 1472.7,157.7 1474.5,157.7 1474.5,162.1 1475.0,162.1 1475.0,150.3 1476.8,150.3 1476.8,69.4 1478.0,69.4 1478.0,134.4 1478.9,134.4 1478.9,155.7 1479.6,155.7 1479.6,148.9 1480.7,148.9 1480.7,174.1 1482.5,174.1 1482.5,120.5 1483.9,120.5 1483.9,145.9 1484.6,145.9 1484.6,160.1 1485.1,160.1 1485.1,148.6 1485.6,148.6 1485.6,160.7 1486.7,160.7 1486.7,155.6 1487.4,155.6 1487.4,153.7 1488.5,153.7 1488.5,156.7 1489.2,156.7 1489.2,155.8 1490.1,155.8 1490.1,160.4 1491.5,160.4 1491.5,157.2 1493.3,157.2 1493.3,166.0 1495.1,166.0 1495.1,116.8 1496.3,116.8 1496.3,143.5 1497.7,143.5" fill="none" stroke="#2020e0" stroke-width="0.8" stroke-linejoin="round"/>
<polyline points="1335.0,107.7 1336.2,107.7 1336.2,165.7 1337.6,165.7 1337.6,159.2 1339.4,159.2" fill="none" stroke="#aab4f4" stroke-width="0.9" />
<polyline points="1370.9,156.8 1371.4,156.8 1371.4,158.0 1372.5,158.0 1372.5,149.0 1373.2,149.0 1373.2,133.3 1373.9,133.3 1373.9,128.1 1374.6,128.1 1374.6,134.5 1375.3,134.5 1375.3,134.8 1376.0,134.8" fill="none" stroke="#aab4f4" stroke-width="0.9" />
<polyline points="1412.0,152.8 1413.8,152.8 1413.8,164.4 1414.7,164.4 1414.7,133.4 1415.6,133.4 1415.6,147.8 1417.0,147.8 1417.0,168.3 1417.5,168.3 1417.5,162.6 1418.9,162.6 1418.9,158.6 1420.3,158.6 1420.3,124.1 1421.5,124.1" fill="none" stroke="#aab4f4" stroke-width="0.9" />
</g>
<line x1="1342.60" y1="199.40" x2="1342.60" y2="201.50" stroke="#444" stroke-width="0.6" />
<text x="1343.60" y="210.00" font-size="6.0" fill="#222" text-anchor="middle">7:20:00 AM</text>
<text x="1343.60" y="218.00" font-size="6.0" fill="#222" text-anchor="middle">4/30/2025</text>
<line x1="1398.70" y1="199.40" x2="1398.70" y2="201.50" stroke="#444" stroke-width="0.6" />
<text x="1399.70" y="210.00" font-size="6.0" fill="#222" text-anchor="middle">7:30:00 AM</text>
<text x="1399.70" y="218.00" font-size="6.0" fill="#222" text-anchor="middle">4/30/2025</text>
<line x1="1453.90" y1="199.40" x2="1453.90" y2="201.50" stroke="#444" stroke-width="0.6" />
<text x="1454.90" y="210.00" font-size="6.0" fill="#222" text-anchor="middle">7:40:00 AM</text>
<text x="1454.90" y="218.00" font-size="6.0" fill="#222" text-anchor="middle">4/30/2025</text>
<text x="1496.00" y="209.80" font-size="5.6" fill="#222" text-anchor="end">7</text>
<text x="1496.50" y="217.80" font-size="5.6" fill="#222" text-anchor="end">4</text>
<line x1="1309.00" y1="211.40" x2="1324.00" y2="211.40" stroke="#2424e0" stroke-width="0.8" />
<line x1="1304.00" y1="222.00" x2="1498.00" y2="222.00" stroke="#d0d0d0" stroke-width="0.6" />
<rect x="1304.50" y="222.30" width="193.00" height="12.00" fill="#fafafa"/>
<text x="1306.00" y="231.00" font-size="5.6" fill="#222">Ready</text>
<rect x="1451.00" y="224.50" width="6.50" height="7.00" fill="#e8f0e8" stroke="#688" stroke-width="0.5"/>
<rect x="1453.50" y="227.50" width="4.00" height="4.00" fill="#30a030"/>
<rect x="1460.40" y="223.60" width="34.00" height="9.40" fill="#fff" stroke="#b0b0b0" stroke-width="0.5"/>
<text x="1477.50" y="230.80" font-size="5.4" fill="#222" text-anchor="middle">7:47:31 AM</text>
<rect x="1304.30" y="234.50" width="193.40" height="5.00" fill="#e4e4e4"/>
<rect x="1304.30" y="239.50" width="193.40" height="20.50" fill="url(#navbg)"/>
<polygon points="1307.00,249.20 1314.00,241.70 1321.00,249.20" fill="#d8c8a0" stroke="#8a7a5a" stroke-width="0.5" />
<rect x="1308.50" y="248.20" width="11.00" height="8.50" fill="#f0ead8" stroke="#a09880" stroke-width="0.5"/>
<rect x="1312.50" y="250.70" width="3.00" height="6.00" fill="#c87818"/>
<circle cx="1314.00" cy="247.60" r="1.50" fill="#5a9ae0" />
<rect x="1324.00" y="240.30" width="19.20" height="19.00" fill="#6a6e84"/>
<rect x="1327.60" y="244.00" width="12.00" height="12.00" fill="#f4f4f0" stroke="#b0b0b0" stroke-width="0.4"/>
<polyline points="1328.6,252.0 1332.0,247.0 1335.0,250.0 1338.6,246.5" fill="none" stroke="#e04040" stroke-width="0.9" />
<polyline points="1328.6,254.0 1332.0,250.5 1335.0,247.0 1338.6,249.0" fill="none" stroke="#40a040" stroke-width="0.9" />
<circle cx="1353.60" cy="250.00" r="4.20" fill="none" stroke="#c8c8c8" stroke-width="3.2" stroke-dasharray="2.2 1.1"/>
<circle cx="1353.60" cy="250.00" r="3.40" fill="#c8c8c8" />
<circle cx="1353.60" cy="250.00" r="1.60" fill="#4a4c5e" />
<rect x="2604.64" y="2.80" width="1295.20" height="40.80" fill="url(#hdr)"/>
<rect x="2604.64" y="43.40" width="1295.20" height="2.40" fill="#868686"/>
<rect x="2604.64" y="45.80" width="1295.20" height="657.20" fill="#dcdcdc"/>
<rect x="2610.04" y="9.70" width="90.50" height="26.00" fill="#fff"/>
<line x1="2701.64" y1="7.00" x2="2701.64" y2="39.00" stroke="#9a9a9a" stroke-width="0.7" />
<path d="M2618.24,13.00 h6.4 a7.3,8.6 0 0 1 7.3,8.6 a7,8.6 0 0 1 -7,8.6 a6.9,8.2 0 0 1 -6.7,-8.2 z" fill="#2f5aa8" />
<ellipse cx="2625.24" cy="21.70" rx="4.7" ry="5.9" fill="#fff"/>
<path d="M2622.64,18.00 h2.7 a2.9,3.8 0 0 1 2.9,3.8 a2.9,3.7 0 0 1 -2.9,3.7 a2.8,3.6 0 0 1 -2.7,-3.6 z" fill="#2f5aa8" />
<text x="2634.64" y="27.60" font-size="14" fill="#e2001a" textLength="57.8" lengthAdjust="spacingAndGlyphs" stroke="#e2001a" stroke-width="0.22">Air Liquide</text>
<text x="2779.34" y="19.20" font-size="11.3" fill="#111" text-anchor="middle" font-weight="bold">HIAF</text>
<text x="2779.34" y="36.80" font-size="11.3" fill="#111" text-anchor="middle" font-weight="bold">IMPCAS</text>
<rect x="2604.64" y="703.40" width="1295.20" height="25.10" fill="url(#navbg)"/>
<rect x="2604.64" y="702.70" width="1295.20" height="1.00" fill="#9a9ca8"/>
<rect x="2604.64" y="703.40" width="25.20" height="25.10" fill="url(#navbg)"/>
<polygon points="2609.94,715.00 2616.94,707.50 2623.94,715.00" fill="#d8c8a0" stroke="#8a7a5a" stroke-width="0.5" />
<rect x="2611.44" y="714.00" width="11.00" height="8.50" fill="#f0ead8" stroke="#a09880" stroke-width="0.5"/>
<rect x="2615.44" y="716.50" width="3.00" height="6.00" fill="#c87818"/>
<circle cx="2616.94" cy="713.40" r="1.50" fill="#5a9ae0" />
<rect x="2630.34" y="703.40" width="75.40" height="25.10" fill="url(#navbtn)"/>
<line x1="2630.09" y1="703.40" x2="2630.09" y2="728.50" stroke="#2e3040" stroke-width="0.6" />
<path d="M2634.04,713.70 h3 a1.8,1.8 0 1 1 2.6,0 h3 v3 a1.8,1.8 0 1 1 0,2.6 v3 h-3.2 a1.7,1.7 0 1 0 -2.4,0 h-3 v-3 a1.7,1.7 0 1 0 0,-2.6 z" fill="#f6b822" stroke="#c88a10" stroke-width="0.4" />
<text x="2672.64" y="718.60" font-size="7.2" fill="#fff" text-anchor="middle">Compressors</text>
<rect x="2706.24" y="703.40" width="75.40" height="25.10" fill="url(#navbtn)"/>
<line x1="2705.99" y1="703.40" x2="2705.99" y2="728.50" stroke="#2e3040" stroke-width="0.6" />
<path d="M2709.94,713.70 h3 a1.8,1.8 0 1 1 2.6,0 h3 v3 a1.8,1.8 0 1 1 0,2.6 v3 h-3.2 a1.7,1.7 0 1 0 -2.4,0 h-3 v-3 a1.7,1.7 0 1 0 0,-2.6 z" fill="#f6b822" stroke="#c88a10" stroke-width="0.4" />
<text x="2748.54" y="718.60" font-size="7.2" fill="#fff" text-anchor="middle">Cold box</text>
<rect x="2782.14" y="703.40" width="75.40" height="25.10" fill="url(#navbtn)"/>
<line x1="2781.89" y1="703.40" x2="2781.89" y2="728.50" stroke="#2e3040" stroke-width="0.6" />
<path d="M2785.84,713.70 h3 a1.8,1.8 0 1 1 2.6,0 h3 v3 a1.8,1.8 0 1 1 0,2.6 v3 h-3.2 a1.7,1.7 0 1 0 -2.4,0 h-3 v-3 a1.7,1.7 0 1 0 0,-2.6 z" fill="#f6b822" stroke="#c88a10" stroke-width="0.4" />
<text x="2824.44" y="718.60" font-size="7.2" fill="#fff" text-anchor="middle">Turbines</text>
<rect x="2858.04" y="703.40" width="75.40" height="25.10" fill="url(#navbtn)"/>
<line x1="2857.79" y1="703.40" x2="2857.79" y2="728.50" stroke="#2e3040" stroke-width="0.6" />
<path d="M2861.74,713.70 h3 a1.8,1.8 0 1 1 2.6,0 h3 v3 a1.8,1.8 0 1 1 0,2.6 v3 h-3.2 a1.7,1.7 0 1 0 -2.4,0 h-3 v-3 a1.7,1.7 0 1 0 0,-2.6 z" fill="#f6b822" stroke="#c88a10" stroke-width="0.4" />
<text x="2900.34" y="718.60" font-size="7.2" fill="#fff" text-anchor="middle">2K system</text>
<rect x="2933.94" y="703.40" width="75.40" height="25.10" fill="url(#navbtn)"/>
<line x1="2933.69" y1="703.40" x2="2933.69" y2="728.50" stroke="#2e3040" stroke-width="0.6" />
<path d="M2937.64,713.70 h3 a1.8,1.8 0 1 1 2.6,0 h3 v3 a1.8,1.8 0 1 1 0,2.6 v3 h-3.2 a1.7,1.7 0 1 0 -2.4,0 h-3 v-3 a1.7,1.7 0 1 0 0,-2.6 z" fill="#f6b822" stroke="#c88a10" stroke-width="0.4" />
<text x="2976.24" y="718.60" font-size="7.2" fill="#fff" text-anchor="middle">Regeneration</text>
<rect x="3009.84" y="703.40" width="75.40" height="25.10" fill="url(#navbtn)"/>
<line x1="3009.59" y1="703.40" x2="3009.59" y2="728.50" stroke="#2e3040" stroke-width="0.6" />
<rect x="3014.04" y="710.20" width="9.50" height="12.50" fill="#d8a050" stroke="#a87028" stroke-width="0.5" rx="1"/>
<line x1="3014.04" y1="714.40" x2="3023.54" y2="714.40" stroke="#a87028" stroke-width="0.5" />
<line x1="3014.04" y1="718.60" x2="3023.54" y2="718.60" stroke="#a87028" stroke-width="0.5" />
<text x="3052.14" y="718.60" font-size="7.2" fill="#fff" text-anchor="middle">Documentation</text>
<rect x="3085.74" y="703.40" width="75.40" height="25.10" fill="url(#navbtn)"/>
<line x1="3085.49" y1="703.40" x2="3085.49" y2="728.50" stroke="#2e3040" stroke-width="0.6" />
<circle cx="3094.44" cy="716.20" r="4.00" fill="none" stroke="#c8c8c8" stroke-width="3.2" stroke-dasharray="2.1 1.05"/>
<circle cx="3094.44" cy="716.20" r="3.30" fill="#c8c8c8" />
<circle cx="3094.44" cy="716.20" r="1.60" fill="#4a4c5e" />
<text x="3128.04" y="718.60" font-size="7.2" fill="#fff" text-anchor="middle">Parameters</text>
<rect x="3161.64" y="703.40" width="75.40" height="25.10" fill="url(#navbtn)"/>
<line x1="3161.39" y1="703.40" x2="3161.39" y2="728.50" stroke="#2e3040" stroke-width="0.6" />
<polygon points="3164.34,712.70 3169.84,709.70 3175.34,712.70 3175.34,719.20 3169.84,722.20 3164.34,719.20" fill="#5aa8e8" stroke="#3a80c0" stroke-width="0.4" />
<polygon points="3164.34,712.70 3169.84,709.70 3175.34,712.70 3169.84,715.40" fill="#a8d4f4" />
<polygon points="3171.34,719.20 3174.84,719.20 3174.84,717.60 3177.84,720.20 3174.84,722.80 3174.84,721.20 3171.34,721.20" fill="#58c020" />
<text x="3203.94" y="714.20" font-size="7.1" fill="#fff" text-anchor="middle">Commands</text>
<text x="3203.94" y="721.80" font-size="7.1" fill="#fff" text-anchor="middle">Sequences WCS</text>
<rect x="3237.54" y="703.40" width="75.40" height="25.10" fill="url(#navbtn)"/>
<line x1="3237.29" y1="703.40" x2="3237.29" y2="728.50" stroke="#2e3040" stroke-width="0.6" />
<polygon points="3240.24,712.70 3245.74,709.70 3251.24,712.70 3251.24,719.20 3245.74,722.20 3240.24,719.20" fill="#5aa8e8" stroke="#3a80c0" stroke-width="0.4" />
<polygon points="3240.24,712.70 3245.74,709.70 3251.24,712.70 3245.74,715.40" fill="#a8d4f4" />
<polygon points="3247.24,719.20 3250.74,719.20 3250.74,717.60 3253.74,720.20 3250.74,722.80 3250.74,721.20 3247.24,721.20" fill="#58c020" />
<text x="3279.84" y="714.20" font-size="7.1" fill="#fff" text-anchor="middle">Commands</text>
<text x="3279.84" y="721.80" font-size="7.1" fill="#fff" text-anchor="middle">Sequences CB</text>
<rect x="3313.44" y="703.40" width="75.40" height="25.10" fill="url(#navbtn)"/>
<line x1="3313.19" y1="703.40" x2="3313.19" y2="728.50" stroke="#2e3040" stroke-width="0.6" />
<rect x="3316.14" y="710.20" width="12.00" height="12.00" fill="#f4f4f0" stroke="#b0b0b0" stroke-width="0.4"/>
<polyline points="3317.1,718.2 3320.6,713.2 3323.6,716.2 3327.1,712.7" fill="none" stroke="#e04040" stroke-width="0.9" />
<polyline points="3317.1,720.2 3320.6,716.7 3323.6,713.2 3327.1,715.2" fill="none" stroke="#40a040" stroke-width="0.9" />
<text x="3355.74" y="718.60" font-size="7.2" fill="#fff" text-anchor="middle">Trends</text>
<rect x="3389.34" y="703.40" width="75.40" height="25.10" fill="url(#navbtn)"/>
<line x1="3389.09" y1="703.40" x2="3389.09" y2="728.50" stroke="#2e3040" stroke-width="0.6" />
<rect x="3392.04" y="710.20" width="12.00" height="12.00" fill="#f0f4f8" stroke="#9ab" stroke-width="0.4"/>
<polyline points="3393.5,720.2 3393.5,715.2 3396.0,715.2 3396.0,720.2 3398.0,720.2 3398.0,711.7 3400.0,711.7 3400.0,717.2 3402.5,717.2 3402.5,713.2" fill="none" stroke="#2a5a98" stroke-width="1.0" />
<text x="3431.64" y="718.60" font-size="7.2" fill="#fff" text-anchor="middle">Sequences</text>
<rect x="2855.84" y="10.40" width="24.40" height="24.80" fill="#c4c4c4" stroke="#b2b2b2" stroke-width="0.7"/>
<path d="M2862.54,24.30 l7,-7 a2.5,2.5 0 0 1 3.5,3.5 l-4.5,8.5 z" fill="#f0c040" stroke="#b88a20" stroke-width="0.5" />
<circle cx="2864.74" cy="27.00" r="1.50" fill="#c89020" />
<rect x="2608.80" y="51.00" width="84.60" height="24.70" fill="url(#tabtr)"/>
<rect x="2612.50" y="55.30" width="14.50" height="14.50" fill="#f6f6f2" stroke="#bbb" stroke-width="0.4"/>
<polyline points="2614.0,65.5 2618.5,59.0 2622.0,63.0 2626.0,58.0" fill="none" stroke="#e04040" stroke-width="1.0" />
<polyline points="2614.0,68.0 2618.5,63.5 2622.0,59.5 2626.0,62.0" fill="none" stroke="#40a040" stroke-width="1.0" />
<text x="2636.50" y="66.20" font-size="6.8" fill="#111" font-weight="bold">Trends</text>
<rect x="2693.40" y="51.00" width="1201.60" height="24.70" fill="#b8b8b8"/>
<rect x="2693.60" y="51.00" width="83.60" height="24.70" fill="url(#tabd)"/>
<text x="2735.60" y="65.90" font-size="6.8" fill="#fff" text-anchor="middle">COMPRESSORS</text>
<rect x="2779.32" y="51.00" width="83.60" height="24.70" fill="url(#tabd)"/>
<text x="2821.32" y="65.90" font-size="6.8" fill="#fff" text-anchor="middle">VACUUM</text>
<rect x="2865.04" y="51.00" width="83.60" height="24.70" fill="url(#tabd)"/>
<text x="2907.04" y="65.90" font-size="6.8" fill="#fff" text-anchor="middle">PT CB</text>
<rect x="2950.76" y="51.00" width="83.60" height="24.70" fill="url(#tabd)"/>
<text x="2992.76" y="65.90" font-size="6.8" fill="#fff" text-anchor="middle">PT WCS</text>
<rect x="3036.48" y="51.00" width="83.60" height="24.70" fill="url(#tabd)"/>
<text x="3078.48" y="65.90" font-size="6.8" fill="#fff" text-anchor="middle">CB TEMPERATURE</text>
<rect x="3122.20" y="51.00" width="83.60" height="24.70" fill="url(#tabsel)"/>
<text x="3164.20" y="65.90" font-size="6.8" fill="#223" text-anchor="middle">CB 4K</text>
<rect x="3207.92" y="51.00" width="83.60" height="24.70" fill="url(#tabd)"/>
<text x="3249.92" y="65.90" font-size="6.8" fill="#fff" text-anchor="middle">2K</text>
<rect x="3293.64" y="51.00" width="83.60" height="24.70" fill="url(#tabd)"/>
<text x="3335.64" y="65.90" font-size="6.8" fill="#fff" text-anchor="middle">REGENERATION</text>
<rect x="3379.36" y="51.00" width="83.60" height="24.70" fill="url(#tabd)"/>
<text x="3421.36" y="65.90" font-size="6.8" fill="#fff" text-anchor="middle">T 3530</text>
<rect x="3465.08" y="51.00" width="83.60" height="24.70" fill="url(#tabd)"/>
<text x="3507.08" y="65.90" font-size="6.8" fill="#fff" text-anchor="middle">T 3560</text>
<rect x="3550.80" y="51.00" width="83.60" height="24.70" fill="url(#tabd)"/>
<text x="3592.80" y="65.90" font-size="6.8" fill="#fff" text-anchor="middle">T 3570</text>
<rect x="3636.52" y="51.00" width="83.60" height="24.70" fill="url(#tabd)"/>
<text x="3678.52" y="65.90" font-size="6.8" fill="#fff" text-anchor="middle">T 3590</text>
<rect x="3722.24" y="51.00" width="83.60" height="24.70" fill="url(#tabd)"/>
<text x="3764.24" y="65.90" font-size="6.8" fill="#fff" text-anchor="middle">Analyseur</text>
<rect x="3807.96" y="51.00" width="83.60" height="24.70" fill="url(#tabd)"/>
<text x="3849.96" y="65.90" font-size="6.8" fill="#fff" text-anchor="middle">TRASH</text>
<rect x="3893.30" y="51.00" width="1.60" height="24.70" fill="#3b3d50"/>
<rect x="2608.00" y="79.20" width="1284.30" height="16.80" fill="#fff"/>
<rect x="2613.00" y="83.10" width="9.00" height="9.00" fill="#f4f4fa" stroke="#8090c0" stroke-width="0.7"/>
<rect x="2613.00" y="83.10" width="9.00" height="2.00" fill="#e04040"/>
<rect x="2616.50" y="87.60" width="4.00" height="3.00" fill="#5080d0"/>
<circle cx="2636.20" cy="86.80" r="3.00" fill="#e8f4e8" stroke="#5a8a8a" stroke-width="0.9" />
<line x1="2638.40" y1="89.00" x2="2641.00" y2="91.60" stroke="#7a7a7a" stroke-width="1.3" />
<rect x="2634.80" y="86.20" width="2.80" height="1.20" fill="#20a020"/>
<circle cx="2651.00" cy="86.80" r="3.00" fill="#e8f4e8" stroke="#5a8a8a" stroke-width="0.9" />
<line x1="2653.20" y1="89.00" x2="2655.80" y2="91.60" stroke="#7a7a7a" stroke-width="1.3" />
<rect x="2649.60" y="86.20" width="2.80" height="1.20" fill="#20a020"/>
<circle cx="2666.20" cy="86.80" r="3.00" fill="#e8f4e8" stroke="#5a8a8a" stroke-width="0.9" />
<line x1="2668.40" y1="89.00" x2="2671.00" y2="91.60" stroke="#7a7a7a" stroke-width="1.3" />
<rect x="2664.80" y="86.20" width="2.80" height="1.20" fill="#20a020"/>
<circle cx="2680.90" cy="86.80" r="3.00" fill="#e8f4e8" stroke="#5a8a8a" stroke-width="0.9" />
<line x1="2683.10" y1="89.00" x2="2685.70" y2="91.60" stroke="#7a7a7a" stroke-width="1.3" />
<rect x="2679.50" y="86.20" width="2.80" height="1.20" fill="#20a020"/>
<path d="M2696.8,82.60 l2.5,3 h-1.6 v1.2 h1.2 v-1.6 l3,2.4 l-3,2.4 v-1.6 h-1.2 v1.2 h1.6 l-2.5,3 l-2.5,-3 h1.6 v-1.2 h-1.2 v1.6 l-3,-2.4 l3,-2.4 v1.6 h1.2 v-1.2 h-1.6 z" fill="#3a78d8" />
<rect x="2707.50" y="82.60" width="2.40" height="10.00" fill="#e8a020"/>
<rect x="2711.00" y="82.60" width="2.40" height="10.00" fill="#3a68c8"/>
<rect x="2720.50" y="83.10" width="9.50" height="9.50" fill="#e8e8e8" stroke="#b0b0b0" stroke-width="0.7"/>
<rect x="2723.00" y="85.60" width="4.50" height="4.50" fill="#d8d8d8" stroke="#b0b0b0" stroke-width="0.5"/>
<rect x="2735.50" y="83.10" width="9.50" height="9.50" fill="#d8e0f0" stroke="#6878a8" stroke-width="0.7"/>
<line x1="2735.50" y1="87.60" x2="2745.00" y2="87.60" stroke="#c03030" stroke-width="0.8" />
<line x1="2740.20" y1="83.10" x2="2740.20" y2="92.60" stroke="#6878a8" stroke-width="0.8" />
<circle cx="2755.00" cy="87.90" r="4.30" fill="#f0f0f0" stroke="#7a7a8a" stroke-width="0.9" />
<polyline points="2755.0,85.1 2755.0,87.9 2757.0,87.9" fill="none" stroke="#444" stroke-width="0.7" />
<line x1="2764.40" y1="82.10" x2="2764.40" y2="93.10" stroke="#999" stroke-width="0.6" />
<rect x="2766.80" y="82.40" width="11.50" height="10.60" fill="#c8dcf8" stroke="#88a8e0" stroke-width="0.6"/>
<rect x="2770.30" y="85.10" width="4.50" height="5.50" fill="#3858c8"/>
<line x1="2782.00" y1="82.10" x2="2782.00" y2="93.10" stroke="#999" stroke-width="0.6" />
<rect x="2787.50" y="85.60" width="9.00" height="5.00" fill="#d8d8d8" stroke="#666" stroke-width="0.6"/>
<rect x="2789.00" y="83.10" width="6.00" height="3.00" fill="#fff" stroke="#888" stroke-width="0.5"/>
<rect x="2801.00" y="83.10" width="10.00" height="9.00" fill="#e8f0e0" stroke="#688" stroke-width="0.6"/>
<rect x="2805.00" y="86.60" width="6.00" height="5.50" fill="#30a030"/>
<line x1="2815.00" y1="82.10" x2="2815.00" y2="93.10" stroke="#999" stroke-width="0.6" />
<rect x="2818.80" y="82.40" width="11.50" height="10.60" fill="#c8dcf8" stroke="#88a8e0" stroke-width="0.6"/>
<circle cx="2823.50" cy="86.60" r="2.50" fill="#4a90e0" />
<circle cx="2825.80" cy="90.10" r="2.20" fill="#e8b030" />
<polyline points="2836.0,91.1 2836.0,84.1 2839.0,87.6 2842.0,84.1 2842.0,91.1" fill="none" stroke="#e08020" stroke-width="1.2" />
<text x="2851.00" y="90.10" font-size="6" fill="#aaa" font-style="italic">fx</text>
<rect x="2607.80" y="96.00" width="1284.50" height="511.00" fill="#494949"/>
<line x1="2750.70" y1="582.60" x2="3892.30" y2="582.60" stroke="#4d4d4d" stroke-width="0.8" />
<line x1="2750.70" y1="558.31" x2="3892.30" y2="558.31" stroke="#535353" stroke-width="0.8" />
<line x1="2750.70" y1="534.02" x2="3892.30" y2="534.02" stroke="#4d4d4d" stroke-width="0.8" />
<line x1="2750.70" y1="509.73" x2="3892.30" y2="509.73" stroke="#666666" stroke-width="0.8" />
<line x1="2750.70" y1="485.44" x2="3892.30" y2="485.44" stroke="#4d4d4d" stroke-width="0.8" />
<line x1="2750.70" y1="461.15" x2="3892.30" y2="461.15" stroke="#5e5e5e" stroke-width="0.8" />
<line x1="2750.70" y1="436.86" x2="3892.30" y2="436.86" stroke="#555555" stroke-width="0.8" />
<line x1="2750.70" y1="412.57" x2="3892.30" y2="412.57" stroke="#4d4d4d" stroke-width="0.8" />
<line x1="2750.70" y1="388.28" x2="3892.30" y2="388.28" stroke="#525252" stroke-width="0.8" />
<line x1="2750.70" y1="363.99" x2="3892.30" y2="363.99" stroke="#5e5e5e" stroke-width="0.8" />
<line x1="2750.70" y1="339.70" x2="3892.30" y2="339.70" stroke="#4d4d4d" stroke-width="0.8" />
<line x1="2750.70" y1="315.41" x2="3892.30" y2="315.41" stroke="#505050" stroke-width="0.8" />
<line x1="2750.70" y1="291.12" x2="3892.30" y2="291.12" stroke="#5e5e5e" stroke-width="0.8" />
<line x1="2750.70" y1="266.83" x2="3892.30" y2="266.83" stroke="#4d4d4d" stroke-width="0.8" />
<line x1="2750.70" y1="242.54" x2="3892.30" y2="242.54" stroke="#666666" stroke-width="0.8" />
<line x1="2750.70" y1="218.25" x2="3892.30" y2="218.25" stroke="#575757" stroke-width="0.8" />
<line x1="2750.70" y1="193.96" x2="3892.30" y2="193.96" stroke="#4d4d4d" stroke-width="0.8" />
<line x1="2750.70" y1="169.67" x2="3892.30" y2="169.67" stroke="#555555" stroke-width="0.8" />
<line x1="2750.70" y1="145.38" x2="3892.30" y2="145.38" stroke="#4d4d4d" stroke-width="0.8" />
<line x1="2750.70" y1="121.09" x2="3892.30" y2="121.09" stroke="#575757" stroke-width="0.8" />
<line x1="2780.60" y1="96.00" x2="2780.60" y2="584.60" stroke="#575757" stroke-width="0.8" />
<line x1="2841.05" y1="96.00" x2="2841.05" y2="584.60" stroke="#767676" stroke-width="0.8" />
<line x1="2901.50" y1="96.00" x2="2901.50" y2="584.60" stroke="#575757" stroke-width="0.8" />
<line x1="2961.95" y1="96.00" x2="2961.95" y2="584.60" stroke="#767676" stroke-width="0.8" />
<line x1="3022.40" y1="96.00" x2="3022.40" y2="584.60" stroke="#575757" stroke-width="0.8" />
<line x1="3082.85" y1="96.00" x2="3082.85" y2="584.60" stroke="#767676" stroke-width="0.8" />
<line x1="3143.30" y1="96.00" x2="3143.30" y2="584.60" stroke="#575757" stroke-width="0.8" />
<line x1="3203.75" y1="96.00" x2="3203.75" y2="584.60" stroke="#767676" stroke-width="0.8" />
<line x1="3264.20" y1="96.00" x2="3264.20" y2="584.60" stroke="#575757" stroke-width="0.8" />
<line x1="3324.65" y1="96.00" x2="3324.65" y2="584.60" stroke="#666666" stroke-width="0.8" />
<line x1="3385.10" y1="96.00" x2="3385.10" y2="584.60" stroke="#767676" stroke-width="0.8" />
<line x1="3445.55" y1="96.00" x2="3445.55" y2="584.60" stroke="#575757" stroke-width="0.8" />
<line x1="3506.00" y1="96.00" x2="3506.00" y2="584.60" stroke="#767676" stroke-width="0.8" />
<line x1="3566.45" y1="96.00" x2="3566.45" y2="584.60" stroke="#575757" stroke-width="0.8" />
<line x1="3626.90" y1="96.00" x2="3626.90" y2="584.60" stroke="#666666" stroke-width="0.8" />
<line x1="3687.35" y1="96.00" x2="3687.35" y2="584.60" stroke="#767676" stroke-width="0.8" />
<line x1="3747.80" y1="96.00" x2="3747.80" y2="584.60" stroke="#575757" stroke-width="0.8" />
<line x1="3808.25" y1="96.00" x2="3808.25" y2="584.60" stroke="#767676" stroke-width="0.8" />
<line x1="3868.70" y1="96.00" x2="3868.70" y2="584.60" stroke="#666666" stroke-width="0.8" />
<line x1="2750.70" y1="582.60" x2="3892.30" y2="582.60" stroke="#8a8a7a" stroke-width="0.8" />
<line x1="2633.60" y1="96.50" x2="2633.60" y2="582.60" stroke="#6a9cf0" stroke-width="0.9" stroke-dasharray="0.9 1.5"/>
<text x="2628.50" y="103.20" font-size="5.6" fill="#6a9cf0" text-anchor="end">4.000</text>
<line x1="2630.50" y1="96.80" x2="2633.20" y2="96.80" stroke="#6a9cf0" stroke-width="0.7" />
<text x="2628.50" y="123.09" font-size="5.6" fill="#6a9cf0" text-anchor="end">3.800</text>
<line x1="2630.50" y1="121.09" x2="2633.20" y2="121.09" stroke="#6a9cf0" stroke-width="0.7" />
<text x="2628.50" y="147.38" font-size="5.6" fill="#6a9cf0" text-anchor="end">3.600</text>
<line x1="2630.50" y1="145.38" x2="2633.20" y2="145.38" stroke="#6a9cf0" stroke-width="0.7" />
<text x="2628.50" y="171.67" font-size="5.6" fill="#6a9cf0" text-anchor="end">3.400</text>
<line x1="2630.50" y1="169.67" x2="2633.20" y2="169.67" stroke="#6a9cf0" stroke-width="0.7" />
<text x="2628.50" y="195.96" font-size="5.6" fill="#6a9cf0" text-anchor="end">3.200</text>
<line x1="2630.50" y1="193.96" x2="2633.20" y2="193.96" stroke="#6a9cf0" stroke-width="0.7" />
<text x="2628.50" y="220.25" font-size="5.6" fill="#6a9cf0" text-anchor="end">3.000</text>
<line x1="2630.50" y1="218.25" x2="2633.20" y2="218.25" stroke="#6a9cf0" stroke-width="0.7" />
<text x="2628.50" y="244.54" font-size="5.6" fill="#6a9cf0" text-anchor="end">2.800</text>
<line x1="2630.50" y1="242.54" x2="2633.20" y2="242.54" stroke="#6a9cf0" stroke-width="0.7" />
<text x="2628.50" y="268.83" font-size="5.6" fill="#6a9cf0" text-anchor="end">2.600</text>
<line x1="2630.50" y1="266.83" x2="2633.20" y2="266.83" stroke="#6a9cf0" stroke-width="0.7" />
<text x="2628.50" y="293.12" font-size="5.6" fill="#6a9cf0" text-anchor="end">2.400</text>
<line x1="2630.50" y1="291.12" x2="2633.20" y2="291.12" stroke="#6a9cf0" stroke-width="0.7" />
<text x="2628.50" y="317.41" font-size="5.6" fill="#6a9cf0" text-anchor="end">2.200</text>
<line x1="2630.50" y1="315.41" x2="2633.20" y2="315.41" stroke="#6a9cf0" stroke-width="0.7" />
<text x="2628.50" y="341.70" font-size="5.6" fill="#6a9cf0" text-anchor="end">2.000</text>
<line x1="2630.50" y1="339.70" x2="2633.20" y2="339.70" stroke="#6a9cf0" stroke-width="0.7" />
<text x="2628.50" y="365.99" font-size="5.6" fill="#6a9cf0" text-anchor="end">1.800</text>
<line x1="2630.50" y1="363.99" x2="2633.20" y2="363.99" stroke="#6a9cf0" stroke-width="0.7" />
<text x="2628.50" y="390.28" font-size="5.6" fill="#6a9cf0" text-anchor="end">1.600</text>
<line x1="2630.50" y1="388.28" x2="2633.20" y2="388.28" stroke="#6a9cf0" stroke-width="0.7" />
<text x="2628.50" y="414.57" font-size="5.6" fill="#6a9cf0" text-anchor="end">1.400</text>
<line x1="2630.50" y1="412.57" x2="2633.20" y2="412.57" stroke="#6a9cf0" stroke-width="0.7" />
<text x="2628.50" y="438.86" font-size="5.6" fill="#6a9cf0" text-anchor="end">1.200</text>
<line x1="2630.50" y1="436.86" x2="2633.20" y2="436.86" stroke="#6a9cf0" stroke-width="0.7" />
<text x="2628.50" y="463.15" font-size="5.6" fill="#6a9cf0" text-anchor="end">1.000</text>
<line x1="2630.50" y1="461.15" x2="2633.20" y2="461.15" stroke="#6a9cf0" stroke-width="0.7" />
<text x="2628.50" y="487.44" font-size="5.6" fill="#6a9cf0" text-anchor="end">0.800</text>
<line x1="2630.50" y1="485.44" x2="2633.20" y2="485.44" stroke="#6a9cf0" stroke-width="0.7" />
<text x="2628.50" y="511.73" font-size="5.6" fill="#6a9cf0" text-anchor="end">0.600</text>
<line x1="2630.50" y1="509.73" x2="2633.20" y2="509.73" stroke="#6a9cf0" stroke-width="0.7" />
<text x="2628.50" y="536.02" font-size="5.6" fill="#6a9cf0" text-anchor="end">0.400</text>
<line x1="2630.50" y1="534.02" x2="2633.20" y2="534.02" stroke="#6a9cf0" stroke-width="0.7" />
<text x="2628.50" y="560.31" font-size="5.6" fill="#6a9cf0" text-anchor="end">0.200</text>
<line x1="2630.50" y1="558.31" x2="2633.20" y2="558.31" stroke="#6a9cf0" stroke-width="0.7" />
<text x="2628.50" y="580.50" font-size="5.6" fill="#6a9cf0" text-anchor="end">0.000</text>
<line x1="2630.50" y1="582.60" x2="2633.20" y2="582.60" stroke="#6a9cf0" stroke-width="0.7" />
<rect x="2612.50" y="108.80" width="17.50" height="8.20" fill="#494949" stroke="#6a9cf0" stroke-width="0.8"/>
<text x="2621.25" y="115.20" font-size="5.8" fill="#6a9cf0" text-anchor="middle">P</text>
<line x1="2661.80" y1="96.50" x2="2661.80" y2="582.60" stroke="#20e0e0" stroke-width="0.9" stroke-dasharray="0.9 1.5"/>
<text x="2656.70" y="103.20" font-size="5.6" fill="#20e0e0" text-anchor="end">120.00</text>
<line x1="2658.70" y1="96.80" x2="2661.40" y2="96.80" stroke="#20e0e0" stroke-width="0.7" />
<text x="2656.70" y="139.30" font-size="5.6" fill="#20e0e0" text-anchor="end">110.00</text>
<line x1="2658.70" y1="137.30" x2="2661.40" y2="137.30" stroke="#20e0e0" stroke-width="0.7" />
<text x="2656.70" y="159.55" font-size="5.6" fill="#20e0e0" text-anchor="end">105.00</text>
<line x1="2658.70" y1="157.55" x2="2661.40" y2="157.55" stroke="#20e0e0" stroke-width="0.7" />
<text x="2656.70" y="179.80" font-size="5.6" fill="#20e0e0" text-anchor="end">100.00</text>
<line x1="2658.70" y1="177.80" x2="2661.40" y2="177.80" stroke="#20e0e0" stroke-width="0.7" />
<text x="2656.70" y="200.05" font-size="5.6" fill="#20e0e0" text-anchor="end">95.00</text>
<line x1="2658.70" y1="198.05" x2="2661.40" y2="198.05" stroke="#20e0e0" stroke-width="0.7" />
<text x="2656.70" y="220.30" font-size="5.6" fill="#20e0e0" text-anchor="end">90.00</text>
<line x1="2658.70" y1="218.30" x2="2661.40" y2="218.30" stroke="#20e0e0" stroke-width="0.7" />
<text x="2656.70" y="240.55" font-size="5.6" fill="#20e0e0" text-anchor="end">85.00</text>
<line x1="2658.70" y1="238.55" x2="2661.40" y2="238.55" stroke="#20e0e0" stroke-width="0.7" />
<text x="2656.70" y="260.80" font-size="5.6" fill="#20e0e0" text-anchor="end">80.00</text>
<line x1="2658.70" y1="258.80" x2="2661.40" y2="258.80" stroke="#20e0e0" stroke-width="0.7" />
<text x="2656.70" y="281.05" font-size="5.6" fill="#20e0e0" text-anchor="end">75.00</text>
<line x1="2658.70" y1="279.05" x2="2661.40" y2="279.05" stroke="#20e0e0" stroke-width="0.7" />
<text x="2656.70" y="301.30" font-size="5.6" fill="#20e0e0" text-anchor="end">70.00</text>
<line x1="2658.70" y1="299.30" x2="2661.40" y2="299.30" stroke="#20e0e0" stroke-width="0.7" />
<text x="2656.70" y="321.55" font-size="5.6" fill="#20e0e0" text-anchor="end">65.00</text>
<line x1="2658.70" y1="319.55" x2="2661.40" y2="319.55" stroke="#20e0e0" stroke-width="0.7" />
<text x="2656.70" y="341.80" font-size="5.6" fill="#20e0e0" text-anchor="end">60.00</text>
<line x1="2658.70" y1="339.80" x2="2661.40" y2="339.80" stroke="#20e0e0" stroke-width="0.7" />
<text x="2656.70" y="362.05" font-size="5.6" fill="#20e0e0" text-anchor="end">55.00</text>
<line x1="2658.70" y1="360.05" x2="2661.40" y2="360.05" stroke="#20e0e0" stroke-width="0.7" />
<text x="2656.70" y="382.30" font-size="5.6" fill="#20e0e0" text-anchor="end">50.00</text>
<line x1="2658.70" y1="380.30" x2="2661.40" y2="380.30" stroke="#20e0e0" stroke-width="0.7" />
<text x="2656.70" y="402.55" font-size="5.6" fill="#20e0e0" text-anchor="end">45.00</text>
<line x1="2658.70" y1="400.55" x2="2661.40" y2="400.55" stroke="#20e0e0" stroke-width="0.7" />
<text x="2656.70" y="422.80" font-size="5.6" fill="#20e0e0" text-anchor="end">40.00</text>
<line x1="2658.70" y1="420.80" x2="2661.40" y2="420.80" stroke="#20e0e0" stroke-width="0.7" />
<text x="2656.70" y="443.05" font-size="5.6" fill="#20e0e0" text-anchor="end">35.00</text>
<line x1="2658.70" y1="441.05" x2="2661.40" y2="441.05" stroke="#20e0e0" stroke-width="0.7" />
<text x="2656.70" y="463.30" font-size="5.6" fill="#20e0e0" text-anchor="end">30.00</text>
<line x1="2658.70" y1="461.30" x2="2661.40" y2="461.30" stroke="#20e0e0" stroke-width="0.7" />
<text x="2656.70" y="483.55" font-size="5.6" fill="#20e0e0" text-anchor="end">25.00</text>
<line x1="2658.70" y1="481.55" x2="2661.40" y2="481.55" stroke="#20e0e0" stroke-width="0.7" />
<text x="2656.70" y="503.80" font-size="5.6" fill="#20e0e0" text-anchor="end">20.00</text>
<line x1="2658.70" y1="501.80" x2="2661.40" y2="501.80" stroke="#20e0e0" stroke-width="0.7" />
<text x="2656.70" y="524.05" font-size="5.6" fill="#20e0e0" text-anchor="end">15.00</text>
<line x1="2658.70" y1="522.05" x2="2661.40" y2="522.05" stroke="#20e0e0" stroke-width="0.7" />
<text x="2656.70" y="544.30" font-size="5.6" fill="#20e0e0" text-anchor="end">10.00</text>
<line x1="2658.70" y1="542.30" x2="2661.40" y2="542.30" stroke="#20e0e0" stroke-width="0.7" />
<text x="2656.70" y="564.55" font-size="5.6" fill="#20e0e0" text-anchor="end">5.00</text>
<line x1="2658.70" y1="562.55" x2="2661.40" y2="562.55" stroke="#20e0e0" stroke-width="0.7" />
<text x="2656.70" y="580.50" font-size="5.6" fill="#20e0e0" text-anchor="end">0.00</text>
<line x1="2658.70" y1="582.80" x2="2661.40" y2="582.80" stroke="#20e0e0" stroke-width="0.7" />
<rect x="2638.00" y="108.80" width="20.20" height="8.20" fill="#494949" stroke="#20e0e0" stroke-width="0.8"/>
<text x="2648.10" y="115.20" font-size="5.8" fill="#20e0e0" text-anchor="middle">%</text>
<line x1="2693.00" y1="96.50" x2="2693.00" y2="582.60" stroke="#8a8a6a" stroke-width="0.8" />
<text x="2687.70" y="103.20" font-size="5.6" fill="#d01818" text-anchor="end">4000</text>
<line x1="2689.70" y1="96.80" x2="2692.40" y2="96.80" stroke="#d01818" stroke-width="0.7" />
<text x="2687.70" y="123.09" font-size="5.6" fill="#d01818" text-anchor="end">3800</text>
<line x1="2689.70" y1="121.09" x2="2692.40" y2="121.09" stroke="#d01818" stroke-width="0.7" />
<text x="2687.70" y="147.38" font-size="5.6" fill="#d01818" text-anchor="end">3600</text>
<line x1="2689.70" y1="145.38" x2="2692.40" y2="145.38" stroke="#d01818" stroke-width="0.7" />
<text x="2687.70" y="171.67" font-size="5.6" fill="#d01818" text-anchor="end">3400</text>
<line x1="2689.70" y1="169.67" x2="2692.40" y2="169.67" stroke="#d01818" stroke-width="0.7" />
<text x="2687.70" y="195.96" font-size="5.6" fill="#d01818" text-anchor="end">3200</text>
<line x1="2689.70" y1="193.96" x2="2692.40" y2="193.96" stroke="#d01818" stroke-width="0.7" />
<text x="2687.70" y="220.25" font-size="5.6" fill="#d01818" text-anchor="end">3000</text>
<line x1="2689.70" y1="218.25" x2="2692.40" y2="218.25" stroke="#d01818" stroke-width="0.7" />
<text x="2687.70" y="244.54" font-size="5.6" fill="#d01818" text-anchor="end">2800</text>
<line x1="2689.70" y1="242.54" x2="2692.40" y2="242.54" stroke="#d01818" stroke-width="0.7" />
<text x="2687.70" y="268.83" font-size="5.6" fill="#d01818" text-anchor="end">2600</text>
<line x1="2689.70" y1="266.83" x2="2692.40" y2="266.83" stroke="#d01818" stroke-width="0.7" />
<text x="2687.70" y="293.12" font-size="5.6" fill="#d01818" text-anchor="end">2400</text>
<line x1="2689.70" y1="291.12" x2="2692.40" y2="291.12" stroke="#d01818" stroke-width="0.7" />
<text x="2687.70" y="317.41" font-size="5.6" fill="#d01818" text-anchor="end">2200</text>
<line x1="2689.70" y1="315.41" x2="2692.40" y2="315.41" stroke="#d01818" stroke-width="0.7" />
<text x="2687.70" y="341.70" font-size="5.6" fill="#d01818" text-anchor="end">2000</text>
<line x1="2689.70" y1="339.70" x2="2692.40" y2="339.70" stroke="#d01818" stroke-width="0.7" />
<text x="2687.70" y="365.99" font-size="5.6" fill="#d01818" text-anchor="end">1800</text>
<line x1="2689.70" y1="363.99" x2="2692.40" y2="363.99" stroke="#d01818" stroke-width="0.7" />
<text x="2687.70" y="390.28" font-size="5.6" fill="#d01818" text-anchor="end">1600</text>
<line x1="2689.70" y1="388.28" x2="2692.40" y2="388.28" stroke="#d01818" stroke-width="0.7" />
<text x="2687.70" y="414.57" font-size="5.6" fill="#d01818" text-anchor="end">1400</text>
<line x1="2689.70" y1="412.57" x2="2692.40" y2="412.57" stroke="#d01818" stroke-width="0.7" />
<text x="2687.70" y="438.86" font-size="5.6" fill="#d01818" text-anchor="end">1200</text>
<line x1="2689.70" y1="436.86" x2="2692.40" y2="436.86" stroke="#d01818" stroke-width="0.7" />
<text x="2687.70" y="463.15" font-size="5.6" fill="#d01818" text-anchor="end">1000</text>
<line x1="2689.70" y1="461.15" x2="2692.40" y2="461.15" stroke="#d01818" stroke-width="0.7" />
<text x="2687.70" y="487.44" font-size="5.6" fill="#d01818" text-anchor="end">800</text>
<line x1="2689.70" y1="485.44" x2="2692.40" y2="485.44" stroke="#d01818" stroke-width="0.7" />
<text x="2687.70" y="511.73" font-size="5.6" fill="#d01818" text-anchor="end">600</text>
<line x1="2689.70" y1="509.73" x2="2692.40" y2="509.73" stroke="#d01818" stroke-width="0.7" />
<text x="2687.70" y="536.02" font-size="5.6" fill="#d01818" text-anchor="end">400</text>
<line x1="2689.70" y1="534.02" x2="2692.40" y2="534.02" stroke="#d01818" stroke-width="0.7" />
<text x="2687.70" y="560.31" font-size="5.6" fill="#d01818" text-anchor="end">200</text>
<line x1="2689.70" y1="558.31" x2="2692.40" y2="558.31" stroke="#d01818" stroke-width="0.7" />
<text x="2687.70" y="580.50" font-size="5.6" fill="#d01818" text-anchor="end">0</text>
<line x1="2689.70" y1="582.60" x2="2692.40" y2="582.60" stroke="#d01818" stroke-width="0.7" />
<rect x="2666.20" y="108.80" width="23.00" height="8.20" fill="#494949" stroke="#d01818" stroke-width="0.8"/>
<text x="2677.70" y="115.20" font-size="5.8" fill="#d01818" text-anchor="middle">Speed</text>
<line x1="2721.20" y1="96.50" x2="2721.20" y2="582.60" stroke="#f0f0f0" stroke-width="0.9" stroke-dasharray="0.9 1.5"/>
<text x="2716.10" y="103.20" font-size="5.6" fill="#f0f0f0" text-anchor="end">120.00</text>
<line x1="2718.10" y1="96.80" x2="2720.80" y2="96.80" stroke="#f0f0f0" stroke-width="0.7" />
<text x="2716.10" y="139.30" font-size="5.6" fill="#f0f0f0" text-anchor="end">110.00</text>
<line x1="2718.10" y1="137.30" x2="2720.80" y2="137.30" stroke="#f0f0f0" stroke-width="0.7" />
<text x="2716.10" y="159.55" font-size="5.6" fill="#f0f0f0" text-anchor="end">105.00</text>
<line x1="2718.10" y1="157.55" x2="2720.80" y2="157.55" stroke="#f0f0f0" stroke-width="0.7" />
<text x="2716.10" y="179.80" font-size="5.6" fill="#f0f0f0" text-anchor="end">100.00</text>
<line x1="2718.10" y1="177.80" x2="2720.80" y2="177.80" stroke="#f0f0f0" stroke-width="0.7" />
<text x="2716.10" y="200.05" font-size="5.6" fill="#f0f0f0" text-anchor="end">95.00</text>
<line x1="2718.10" y1="198.05" x2="2720.80" y2="198.05" stroke="#f0f0f0" stroke-width="0.7" />
<text x="2716.10" y="220.30" font-size="5.6" fill="#f0f0f0" text-anchor="end">90.00</text>
<line x1="2718.10" y1="218.30" x2="2720.80" y2="218.30" stroke="#f0f0f0" stroke-width="0.7" />
<text x="2716.10" y="240.55" font-size="5.6" fill="#f0f0f0" text-anchor="end">85.00</text>
<line x1="2718.10" y1="238.55" x2="2720.80" y2="238.55" stroke="#f0f0f0" stroke-width="0.7" />
<text x="2716.10" y="260.80" font-size="5.6" fill="#f0f0f0" text-anchor="end">80.00</text>
<line x1="2718.10" y1="258.80" x2="2720.80" y2="258.80" stroke="#f0f0f0" stroke-width="0.7" />
<text x="2716.10" y="281.05" font-size="5.6" fill="#f0f0f0" text-anchor="end">75.00</text>
<line x1="2718.10" y1="279.05" x2="2720.80" y2="279.05" stroke="#f0f0f0" stroke-width="0.7" />
<text x="2716.10" y="301.30" font-size="5.6" fill="#f0f0f0" text-anchor="end">70.00</text>
<line x1="2718.10" y1="299.30" x2="2720.80" y2="299.30" stroke="#f0f0f0" stroke-width="0.7" />
<text x="2716.10" y="321.55" font-size="5.6" fill="#f0f0f0" text-anchor="end">65.00</text>
<line x1="2718.10" y1="319.55" x2="2720.80" y2="319.55" stroke="#f0f0f0" stroke-width="0.7" />
<text x="2716.10" y="341.80" font-size="5.6" fill="#f0f0f0" text-anchor="end">60.00</text>
<line x1="2718.10" y1="339.80" x2="2720.80" y2="339.80" stroke="#f0f0f0" stroke-width="0.7" />
<text x="2716.10" y="362.05" font-size="5.6" fill="#f0f0f0" text-anchor="end">55.00</text>
<line x1="2718.10" y1="360.05" x2="2720.80" y2="360.05" stroke="#f0f0f0" stroke-width="0.7" />
<text x="2716.10" y="382.30" font-size="5.6" fill="#f0f0f0" text-anchor="end">50.00</text>
<line x1="2718.10" y1="380.30" x2="2720.80" y2="380.30" stroke="#f0f0f0" stroke-width="0.7" />
<text x="2716.10" y="402.55" font-size="5.6" fill="#f0f0f0" text-anchor="end">45.00</text>
<line x1="2718.10" y1="400.55" x2="2720.80" y2="400.55" stroke="#f0f0f0" stroke-width="0.7" />
<text x="2716.10" y="422.80" font-size="5.6" fill="#f0f0f0" text-anchor="end">40.00</text>
<line x1="2718.10" y1="420.80" x2="2720.80" y2="420.80" stroke="#f0f0f0" stroke-width="0.7" />
<text x="2716.10" y="443.05" font-size="5.6" fill="#f0f0f0" text-anchor="end">35.00</text>
<line x1="2718.10" y1="441.05" x2="2720.80" y2="441.05" stroke="#f0f0f0" stroke-width="0.7" />
<text x="2716.10" y="463.30" font-size="5.6" fill="#f0f0f0" text-anchor="end">30.00</text>
<line x1="2718.10" y1="461.30" x2="2720.80" y2="461.30" stroke="#f0f0f0" stroke-width="0.7" />
<text x="2716.10" y="483.55" font-size="5.6" fill="#f0f0f0" text-anchor="end">25.00</text>
<line x1="2718.10" y1="481.55" x2="2720.80" y2="481.55" stroke="#f0f0f0" stroke-width="0.7" />
<text x="2716.10" y="503.80" font-size="5.6" fill="#f0f0f0" text-anchor="end">20.00</text>
<line x1="2718.10" y1="501.80" x2="2720.80" y2="501.80" stroke="#f0f0f0" stroke-width="0.7" />
<text x="2716.10" y="524.05" font-size="5.6" fill="#f0f0f0" text-anchor="end">15.00</text>
<line x1="2718.10" y1="522.05" x2="2720.80" y2="522.05" stroke="#f0f0f0" stroke-width="0.7" />
<text x="2716.10" y="544.30" font-size="5.6" fill="#f0f0f0" text-anchor="end">10.00</text>
<line x1="2718.10" y1="542.30" x2="2720.80" y2="542.30" stroke="#f0f0f0" stroke-width="0.7" />
<text x="2716.10" y="564.55" font-size="5.6" fill="#f0f0f0" text-anchor="end">5.00</text>
<line x1="2718.10" y1="562.55" x2="2720.80" y2="562.55" stroke="#f0f0f0" stroke-width="0.7" />
<text x="2716.10" y="580.50" font-size="5.6" fill="#f0f0f0" text-anchor="end">0.00</text>
<line x1="2718.10" y1="582.80" x2="2720.80" y2="582.80" stroke="#f0f0f0" stroke-width="0.7" />
<rect x="2697.20" y="108.80" width="20.40" height="8.20" fill="#494949" stroke="#f0f0f0" stroke-width="0.8"/>
<text x="2707.40" y="115.20" font-size="5.8" fill="#f0f0f0" text-anchor="middle">% bis</text>
<line x1="2750.30" y1="96.50" x2="2750.30" y2="582.60" stroke="#e8a0e0" stroke-width="0.9" stroke-dasharray="0.9 1.5"/>
<text x="2745.20" y="103.20" font-size="5.6" fill="#e8a0e0" text-anchor="end">120.00</text>
<line x1="2747.20" y1="96.80" x2="2749.90" y2="96.80" stroke="#e8a0e0" stroke-width="0.7" />
<text x="2745.20" y="139.30" font-size="5.6" fill="#e8a0e0" text-anchor="end">110.00</text>
<line x1="2747.20" y1="137.30" x2="2749.90" y2="137.30" stroke="#e8a0e0" stroke-width="0.7" />
<text x="2745.20" y="159.55" font-size="5.6" fill="#e8a0e0" text-anchor="end">105.00</text>
<line x1="2747.20" y1="157.55" x2="2749.90" y2="157.55" stroke="#e8a0e0" stroke-width="0.7" />
<text x="2745.20" y="179.80" font-size="5.6" fill="#e8a0e0" text-anchor="end">100.00</text>
<line x1="2747.20" y1="177.80" x2="2749.90" y2="177.80" stroke="#e8a0e0" stroke-width="0.7" />
<text x="2745.20" y="200.05" font-size="5.6" fill="#e8a0e0" text-anchor="end">95.00</text>
<line x1="2747.20" y1="198.05" x2="2749.90" y2="198.05" stroke="#e8a0e0" stroke-width="0.7" />
<text x="2745.20" y="220.30" font-size="5.6" fill="#e8a0e0" text-anchor="end">90.00</text>
<line x1="2747.20" y1="218.30" x2="2749.90" y2="218.30" stroke="#e8a0e0" stroke-width="0.7" />
<text x="2745.20" y="240.55" font-size="5.6" fill="#e8a0e0" text-anchor="end">85.00</text>
<line x1="2747.20" y1="238.55" x2="2749.90" y2="238.55" stroke="#e8a0e0" stroke-width="0.7" />
<text x="2745.20" y="260.80" font-size="5.6" fill="#e8a0e0" text-anchor="end">80.00</text>
<line x1="2747.20" y1="258.80" x2="2749.90" y2="258.80" stroke="#e8a0e0" stroke-width="0.7" />
<text x="2745.20" y="281.05" font-size="5.6" fill="#e8a0e0" text-anchor="end">75.00</text>
<line x1="2747.20" y1="279.05" x2="2749.90" y2="279.05" stroke="#e8a0e0" stroke-width="0.7" />
<text x="2745.20" y="301.30" font-size="5.6" fill="#e8a0e0" text-anchor="end">70.00</text>
<line x1="2747.20" y1="299.30" x2="2749.90" y2="299.30" stroke="#e8a0e0" stroke-width="0.7" />
<text x="2745.20" y="321.55" font-size="5.6" fill="#e8a0e0" text-anchor="end">65.00</text>
<line x1="2747.20" y1="319.55" x2="2749.90" y2="319.55" stroke="#e8a0e0" stroke-width="0.7" />
<text x="2745.20" y="341.80" font-size="5.6" fill="#e8a0e0" text-anchor="end">60.00</text>
<line x1="2747.20" y1="339.80" x2="2749.90" y2="339.80" stroke="#e8a0e0" stroke-width="0.7" />
<text x="2745.20" y="362.05" font-size="5.6" fill="#e8a0e0" text-anchor="end">55.00</text>
<line x1="2747.20" y1="360.05" x2="2749.90" y2="360.05" stroke="#e8a0e0" stroke-width="0.7" />
<text x="2745.20" y="382.30" font-size="5.6" fill="#e8a0e0" text-anchor="end">50.00</text>
<line x1="2747.20" y1="380.30" x2="2749.90" y2="380.30" stroke="#e8a0e0" stroke-width="0.7" />
<text x="2745.20" y="402.55" font-size="5.6" fill="#e8a0e0" text-anchor="end">45.00</text>
<line x1="2747.20" y1="400.55" x2="2749.90" y2="400.55" stroke="#e8a0e0" stroke-width="0.7" />
<text x="2745.20" y="422.80" font-size="5.6" fill="#e8a0e0" text-anchor="end">40.00</text>
<line x1="2747.20" y1="420.80" x2="2749.90" y2="420.80" stroke="#e8a0e0" stroke-width="0.7" />
<text x="2745.20" y="443.05" font-size="5.6" fill="#e8a0e0" text-anchor="end">35.00</text>
<line x1="2747.20" y1="441.05" x2="2749.90" y2="441.05" stroke="#e8a0e0" stroke-width="0.7" />
<text x="2745.20" y="463.30" font-size="5.6" fill="#e8a0e0" text-anchor="end">30.00</text>
<line x1="2747.20" y1="461.30" x2="2749.90" y2="461.30" stroke="#e8a0e0" stroke-width="0.7" />
<text x="2745.20" y="483.55" font-size="5.6" fill="#e8a0e0" text-anchor="end">25.00</text>
<line x1="2747.20" y1="481.55" x2="2749.90" y2="481.55" stroke="#e8a0e0" stroke-width="0.7" />
<text x="2745.20" y="503.80" font-size="5.6" fill="#e8a0e0" text-anchor="end">20.00</text>
<line x1="2747.20" y1="501.80" x2="2749.90" y2="501.80" stroke="#e8a0e0" stroke-width="0.7" />
<text x="2745.20" y="524.05" font-size="5.6" fill="#e8a0e0" text-anchor="end">15.00</text>
<line x1="2747.20" y1="522.05" x2="2749.90" y2="522.05" stroke="#e8a0e0" stroke-width="0.7" />
<text x="2745.20" y="544.30" font-size="5.6" fill="#e8a0e0" text-anchor="end">10.00</text>
<line x1="2747.20" y1="542.30" x2="2749.90" y2="542.30" stroke="#e8a0e0" stroke-width="0.7" />
<text x="2745.20" y="564.55" font-size="5.6" fill="#e8a0e0" text-anchor="end">5.00</text>
<line x1="2747.20" y1="562.55" x2="2749.90" y2="562.55" stroke="#e8a0e0" stroke-width="0.7" />
<text x="2745.20" y="580.50" font-size="5.6" fill="#e8a0e0" text-anchor="end">0.00</text>
<line x1="2747.20" y1="582.80" x2="2749.90" y2="582.80" stroke="#e8a0e0" stroke-width="0.7" />
<rect x="2725.60" y="108.80" width="21.10" height="8.20" fill="#494949" stroke="#e8a0e0" stroke-width="0.8"/>
<text x="2736.15" y="115.20" font-size="5.8" fill="#e8a0e0" text-anchor="middle">P bis</text>
<line x1="2750.70" y1="146.30" x2="3892.30" y2="146.30" stroke="#d08a24" stroke-width="0.9" />
<line x1="2750.70" y1="147.00" x2="3892.30" y2="147.00" stroke="#6a5a40" stroke-width="0.5" stroke-dasharray="2 5 1 9 3 4"/>
<line x1="2750.70" y1="178.00" x2="3892.30" y2="178.00" stroke="#25a0a0" stroke-width="0.8" />
<polyline points="2750.7,192.1 2751.4,191.7 2751.4,197.6 2752.5,198.0 2752.5,190.8 2753.0,190.8 2753.0,196.9 2753.4,196.7 2753.4,191.6 2754.9,191.7 2754.9,196.8 2755.3,197.1 2755.3,192.3 2756.0,192.4 2756.0,197.0 2757.1,197.1 2757.1,191.6 2758.6,191.8 2758.6,200.8 2759.7,200.8 2759.7,191.9 2760.6,191.6 2760.6,197.2 2761.1,197.2 2761.1,191.9 2761.8,192.3 2761.8,197.0 2762.2,196.8 2762.2,192.9 2763.1,192.6 2763.1,198.1 2764.2,198.0 2764.2,192.2 2765.7,192.5 2765.7,198.2 2766.1,198.2 2766.1,200.4 2767.6,200.8 2767.6,197.3 2768.5,197.5 2768.5,192.0 2768.9,192.1 2768.9,189.3 2769.8,189.2 2769.8,192.2 2770.7,192.2 2770.7,198.1 2771.2,197.9 2771.2,192.5 2772.1,192.4 2772.1,197.0 2772.6,196.8 2772.6,190.7 2773.1,190.3 2773.1,197.7 2774.0,197.5 2774.0,192.3 2774.5,192.4 2774.5,197.4 2776.0,197.7 2776.0,192.1 2777.5,192.0 2777.5,197.3 2777.9,197.1 2777.9,191.7 2778.4,191.7 2778.4,188.7 2778.8,188.7 2778.8,192.4 2779.2,192.1 2779.2,197.7 2779.9,197.6 2779.9,193.0 2780.3,193.0 2780.3,196.9 2781.2,197.1 2781.2,192.7 2782.7,192.5 2782.7,198.2 2783.1,198.1 2783.1,191.5 2784.6,191.6 2784.6,197.8 2786.1,197.6 2786.1,192.0 2786.8,191.8 2786.8,197.2 2787.9,197.0 2787.9,192.7 2788.4,192.9 2788.4,197.5 2788.9,197.7 2788.9,192.2 2789.3,192.0 2789.3,197.4 2790.4,197.8 2790.4,192.0 2791.1,191.8 2791.1,197.2 2791.6,197.2 2791.6,192.2 2792.7,192.3 2792.7,197.8 2794.2,198.1 2794.2,192.2 2795.7,192.0 2795.7,198.0 2797.2,198.4 2797.2,192.6 2798.1,192.3 2798.1,196.9 2798.6,196.6 2798.6,191.7 2799.5,192.0 2799.5,197.3 2800.4,197.3 2800.4,189.9 2800.9,190.3 2800.9,197.0 2801.8,197.3 2801.8,191.9 2802.2,191.7 2802.2,197.6 2803.3,197.8 2803.3,192.0 2803.7,192.0 2803.7,197.5 2804.8,197.8 2804.8,191.7 2805.9,191.7 2805.9,197.7 2806.8,197.9 2806.8,192.2 2807.3,192.4 2807.3,200.9 2808.4,200.5 2808.4,189.2 2809.5,189.2 2809.5,190.2 2810.6,190.3 2810.6,191.8 2811.7,191.6 2811.7,197.5 2812.8,197.8 2812.8,192.8 2814.3,193.2 2814.3,197.0 2815.4,197.0 2815.4,192.2 2816.3,191.8 2816.3,197.0 2816.8,196.9 2816.8,191.7 2817.2,191.9 2817.2,197.1 2818.7,196.8 2818.7,192.9 2819.6,192.8 2819.6,197.8 2820.5,197.5 2820.5,192.3 2822.0,192.1 2822.0,196.8 2822.5,196.7 2822.5,192.2 2823.2,191.8 2823.2,197.2 2823.9,197.5 2823.9,192.7 2824.3,193.1 2824.3,197.1 2824.7,197.5 2824.7,191.7 2825.2,191.6 2825.2,197.1 2826.7,196.8 2826.7,192.6 2827.8,192.2 2827.8,197.0 2828.2,197.3 2828.2,192.5 2828.9,192.7 2828.9,197.1 2829.3,196.9 2829.3,192.0 2829.7,192.1 2829.7,196.8 2830.4,196.9 2830.4,191.9 2830.8,191.6 2830.8,197.5 2831.5,197.3 2831.5,191.8 2832.4,191.6 2832.4,196.8 2832.8,196.4 2832.8,191.8 2833.9,191.8 2833.9,198.0 2834.8,198.0 2834.8,192.8 2835.7,193.2 2835.7,198.3 2836.4,198.1 2836.4,191.7 2837.9,192.1 2837.9,196.7 2838.3,196.8 2838.3,191.6 2839.0,191.7 2839.0,197.8 2839.9,197.6 2839.9,191.6 2840.4,191.3 2840.4,197.1 2841.1,197.5 2841.1,191.6 2842.2,191.9 2842.2,196.7 2842.7,196.6 2842.7,192.5 2843.6,192.3 2843.6,198.0 2844.0,197.7 2844.0,200.4 2845.1,200.1 2845.1,196.9 2846.2,197.3 2846.2,192.0 2847.3,192.4 2847.3,197.7 2847.8,197.4 2847.8,192.4 2849.3,192.6 2849.3,197.5 2850.4,197.5 2850.4,192.4 2850.8,192.7 2850.8,197.7 2852.3,197.4 2852.3,192.0 2852.7,191.7 2852.7,197.7 2853.6,197.8 2853.6,191.9 2855.1,191.9 2855.1,197.5 2855.5,197.5 2855.5,192.6 2857.0,192.6 2857.0,197.1 2857.4,197.3 2857.4,193.0 2857.9,193.0 2857.9,198.2 2858.8,198.0 2858.8,192.5 2859.2,192.1 2859.2,197.7 2859.7,197.9 2859.7,191.5 2860.8,191.2 2860.8,196.9 2861.5,196.6 2861.5,192.3 2862.4,192.2 2862.4,198.3 2863.3,198.3 2863.3,192.9 2864.0,192.5 2864.0,197.5 2864.9,197.9 2864.9,192.9 2865.6,193.2 2865.6,196.9 2866.0,196.9 2866.0,192.7 2866.7,192.7 2866.7,197.1 2867.1,197.4 2867.1,191.7 2868.0,192.1 2868.0,197.2 2869.5,196.9 2869.5,191.7 2870.2,191.5 2870.2,198.0 2870.9,197.7 2870.9,192.9 2871.4,192.7 2871.4,190.4 2872.1,190.4 2872.1,191.9 2872.8,191.6 2872.8,198.2 2874.3,198.0 2874.3,192.0 2875.0,192.2 2875.0,198.0 2875.9,198.1 2875.9,192.6 2877.0,192.2 2877.0,197.7 2878.5,197.4 2878.5,192.9 2879.2,192.9 2879.2,197.2 2879.7,197.1 2879.7,192.5 2881.2,192.4 2881.2,197.6 2881.7,197.5 2881.7,191.6 2882.2,191.6 2882.2,197.4 2883.1,197.3 2883.1,192.3 2884.0,192.1 2884.0,196.8 2884.5,196.6 2884.5,191.8 2885.2,191.4 2885.2,197.9 2886.1,197.7 2886.1,191.6 2886.8,191.4 2886.8,197.5 2887.5,197.6 2887.5,192.8 2888.0,192.8 2888.0,198.2 2889.5,198.5 2889.5,192.1 2889.9,192.3 2889.9,197.5 2890.8,197.1 2890.8,193.0 2891.9,192.8 2891.9,196.9 2892.3,197.3 2892.3,192.6 2892.7,192.7 2892.7,197.9 2893.6,197.5 2893.6,192.9 2894.1,193.0 2894.1,197.7 2894.8,197.7 2894.8,191.7 2895.7,191.3 2895.7,197.0 2896.8,196.8 2896.8,199.3 2897.9,199.2 2897.9,197.1 2898.4,196.9 2898.4,192.0 2899.3,191.6 2899.3,197.7 2900.2,197.4 2900.2,192.9 2900.7,192.7 2900.7,197.8 2901.1,197.7 2901.1,192.7 2902.0,192.9 2902.0,190.6 2903.1,190.8 2903.1,191.9 2903.6,192.2 2903.6,197.5 2904.0,197.2 2904.0,192.9 2904.5,192.5 2904.5,197.3 2905.6,197.1 2905.6,191.6 2906.7,191.2 2906.7,197.8 2907.6,197.7 2907.6,192.9 2908.0,192.8 2908.0,197.5 2908.5,197.5 2908.5,192.1 2909.2,192.0 2909.2,196.9 2909.9,196.5 2909.9,192.9 2910.3,192.6 2910.3,197.9 2910.8,197.8 2910.8,192.6 2911.7,192.3 2911.7,197.0 2912.8,196.9 2912.8,198.6 2913.7,198.2 2913.7,196.8 2914.1,196.6 2914.1,192.0 2914.5,191.8 2914.5,201.3 2915.6,201.1 2915.6,192.9 2917.1,193.0 2917.1,200.6 2917.5,200.6 2917.5,192.9 2918.4,193.1 2918.4,197.0 2918.9,197.2 2918.9,192.5 2920.4,192.3 2920.4,197.2 2920.9,197.1 2920.9,191.8 2922.0,192.0 2922.0,197.7 2922.5,197.7 2922.5,193.0 2923.6,193.3 2923.6,196.8 2924.0,196.5 2924.0,193.0 2924.9,192.7 2924.9,197.7 2925.4,197.8 2925.4,192.7 2926.9,192.9 2926.9,197.6 2927.6,197.5 2927.6,192.2 2929.1,191.9 2929.1,198.1 2929.6,198.2 2929.6,190.0 2930.3,189.8 2930.3,198.3 2930.7,198.0 2930.7,191.8 2931.6,191.8 2931.6,191.3 2932.3,191.4 2932.3,191.6 2933.4,191.6 2933.4,197.1 2933.9,197.3 2933.9,192.4 2934.3,192.5 2934.3,190.9 2934.8,190.7 2934.8,192.9 2935.9,193.1 2935.9,197.3 2936.6,197.4 2936.6,192.7 2937.0,192.7 2937.0,198.0 2937.4,198.1 2937.4,191.6 2937.9,191.4 2937.9,198.3 2939.4,198.4 2939.4,192.0 2940.3,192.0 2940.3,196.7 2941.0,196.9 2941.0,192.1 2941.7,192.0 2941.7,197.0 2942.1,196.6 2942.1,192.8 2942.5,192.8 2942.5,196.8 2943.0,196.5 2943.0,192.4 2943.9,192.3 2943.9,197.3 2945.0,197.0 2945.0,191.7 2945.5,191.7 2945.5,198.0 2946.0,197.7 2946.0,192.4 2946.9,192.5 2946.9,197.7 2947.3,198.0 2947.3,192.8 2947.8,192.9 2947.8,198.0 2948.9,197.8 2948.9,190.3 2949.4,190.0 2949.4,198.0 2949.9,197.8 2949.9,192.5 2951.0,192.6 2951.0,197.7 2951.7,197.7 2951.7,192.5 2953.2,192.3 2953.2,197.8 2953.7,197.7 2953.7,191.5 2954.6,191.9 2954.6,197.9 2955.5,198.1 2955.5,192.7 2956.4,192.6 2956.4,197.4 2956.8,197.1 2956.8,192.5 2957.7,192.1 2957.7,197.9 2958.2,198.1 2958.2,192.6 2959.3,192.9 2959.3,196.9 2960.8,197.2 2960.8,192.7 2961.9,192.5 2961.9,198.0 2962.8,198.2 2962.8,192.9 2964.3,192.5 2964.3,197.1 2965.0,197.0 2965.0,192.7 2966.1,192.4 2966.1,197.5 2967.2,197.5 2967.2,192.0 2968.3,191.6 2968.3,197.7 2968.8,197.5 2968.8,191.8 2969.5,192.0 2969.5,196.8 2969.9,197.1 2969.9,192.4 2970.8,192.7 2970.8,197.6 2971.2,197.8 2971.2,191.9 2972.7,192.3 2972.7,197.2 2973.8,196.9 2973.8,192.6 2974.3,192.3 2974.3,197.7 2975.4,198.1 2975.4,192.8 2976.5,193.0 2976.5,199.8 2978.0,199.6 2978.0,191.8 2978.4,192.0 2978.4,198.8 2978.8,198.7 2978.8,192.0 2979.3,191.7 2979.3,197.5 2980.0,197.2 2980.0,192.2 2980.5,191.8 2980.5,198.0 2981.0,197.9 2981.0,191.6 2981.7,191.8 2981.7,197.6 2982.4,197.7 2982.4,191.9 2983.5,192.2 2983.5,190.8 2983.9,190.4 2983.9,191.1 2984.3,190.8 2984.3,197.7 2985.4,197.7 2985.4,192.0 2986.5,191.8 2986.5,197.9 2986.9,197.8 2986.9,198.7 2988.0,198.9 2988.0,196.9 2988.5,196.7 2988.5,192.8 2988.9,193.2 2988.9,197.1 2989.6,197.2 2989.6,192.9 2990.5,193.3 2990.5,198.2 2991.2,198.0 2991.2,189.0 2992.3,188.7 2992.3,197.2 2992.8,197.5 2992.8,192.1 2993.5,192.4 2993.5,198.0 2995.0,198.1 2995.0,192.5 2995.9,192.8 2995.9,197.1 2996.8,197.4 2996.8,192.4 2997.3,192.4 2997.3,196.7 2997.8,196.4 2997.8,191.7 2998.3,191.3 2998.3,197.7 2998.7,197.4 2998.7,191.6 2999.1,191.7 2999.1,198.2 2999.8,198.3 2999.8,198.8 3001.3,198.6 3001.3,189.0 3001.7,189.1 3001.7,191.7 3002.4,191.9 3002.4,197.2 3003.9,197.1 3003.9,192.9 3004.3,192.5 3004.3,197.9 3005.0,198.0 3005.0,192.4 3005.9,192.1 3005.9,190.5 3006.8,190.6 3006.8,192.6 3007.9,192.8 3007.9,197.0 3009.0,196.6 3009.0,192.6 3009.5,192.3 3009.5,197.5 3010.2,197.7 3010.2,192.4 3010.7,192.8 3010.7,198.2 3011.8,198.0 3011.8,191.8 3012.3,191.6 3012.3,197.5 3013.8,197.9 3013.8,192.4 3014.9,192.3 3014.9,198.1 3015.8,198.3 3015.8,191.5 3016.7,191.3 3016.7,197.6 3017.4,197.3 3017.4,192.2 3018.9,192.2 3018.9,197.7 3020.4,197.6 3020.4,192.8 3021.1,192.8 3021.1,197.0 3022.2,196.9 3022.2,191.7 3022.9,191.7 3022.9,197.0 3024.4,196.8 3024.4,192.4 3025.9,192.6 3025.9,197.7 3026.4,197.5 3026.4,191.8 3026.9,192.2 3026.9,197.0 3028.4,197.1 3028.4,193.0 3028.9,193.2 3028.9,197.1 3030.4,196.8 3030.4,192.8 3030.8,192.8 3030.8,198.0 3031.2,198.1 3031.2,191.9 3032.3,191.6 3032.3,197.3 3033.0,197.5 3033.0,192.4 3033.9,192.5 3033.9,197.7 3034.4,198.0 3034.4,192.8 3035.9,192.9 3035.9,197.4 3037.4,197.2 3037.4,192.1 3038.9,192.4 3038.9,197.0 3040.4,197.2 3040.4,192.4 3041.3,192.4 3041.3,198.1 3042.8,198.4 3042.8,192.1 3043.5,192.1 3043.5,189.4 3043.9,189.7 3043.9,191.7 3044.4,191.7 3044.4,197.5 3045.5,197.1 3045.5,192.1 3046.2,192.5 3046.2,197.0 3046.7,197.0 3046.7,192.4 3047.1,192.5 3047.1,197.3 3047.8,197.0 3047.8,192.4 3048.7,192.6 3048.7,197.1 3049.8,197.3 3049.8,193.0 3050.9,193.4 3050.9,196.9 3051.8,197.1 3051.8,192.5 3053.3,192.6 3053.3,197.7 3053.8,198.0 3053.8,191.9 3054.7,192.0 3054.7,197.5 3055.2,197.7 3055.2,192.1 3055.7,191.9 3055.7,197.5 3056.6,197.7 3056.6,192.5 3057.3,192.3 3057.3,197.7 3058.2,197.8 3058.2,192.0 3058.9,191.9 3058.9,198.1 3059.3,198.4 3059.3,192.0 3059.8,192.1 3059.8,199.3 3061.3,198.9 3061.3,191.8 3061.8,191.7 3061.8,197.3 3062.3,197.4 3062.3,192.4 3063.4,192.6 3063.4,197.6 3064.9,197.7 3064.9,192.5 3065.6,192.6 3065.6,197.8 3067.1,197.5 3067.1,191.9 3067.5,191.6 3067.5,197.5 3068.4,197.8 3068.4,192.2 3069.9,192.3 3069.9,200.6 3071.4,200.6 3071.4,192.1 3072.1,192.0 3072.1,197.7 3073.6,197.8 3073.6,200.9 3074.0,200.6 3074.0,198.1 3074.9,197.8 3074.9,191.7 3076.4,191.4 3076.4,197.5 3077.9,197.5 3077.9,192.0 3078.4,191.8 3078.4,197.2 3078.8,197.4 3078.8,193.0 3079.7,193.3 3079.7,197.7 3080.4,198.0 3080.4,192.6 3081.1,192.3 3081.1,198.3 3082.6,198.2 3082.6,192.3 3083.7,192.0 3083.7,196.8 3084.4,197.0 3084.4,192.5 3085.3,192.7 3085.3,197.7 3086.4,197.8 3086.4,192.8 3087.9,192.5 3087.9,197.4 3088.3,197.6 3088.3,192.8 3088.7,192.7 3088.7,197.7 3089.1,197.6 3089.1,192.3 3089.6,192.1 3089.6,196.8 3090.3,196.4 3090.3,192.9 3091.4,192.5 3091.4,198.0 3092.5,198.2 3092.5,192.9 3093.4,192.8 3093.4,197.7 3093.8,198.0 3093.8,192.2 3095.3,192.1 3095.3,197.5 3095.7,197.8 3095.7,188.5 3097.2,188.8 3097.2,196.9 3097.7,196.5 3097.7,192.2 3099.2,192.4 3099.2,197.9 3099.6,198.1 3099.6,191.6 3100.1,191.7 3100.1,197.8 3101.6,198.1 3101.6,191.5 3102.0,191.1 3102.0,197.7 3103.5,197.6 3103.5,191.7 3104.2,192.0 3104.2,197.2 3105.1,197.6 3105.1,192.5 3106.6,192.2 3106.6,197.7 3107.0,197.8 3107.0,192.7 3107.9,192.6 3107.9,197.6 3108.6,197.4 3108.6,192.5 3109.0,192.7 3109.0,197.7 3110.1,198.1 3110.1,192.0 3110.6,191.9 3110.6,197.8 3111.1,197.9 3111.1,191.9 3111.6,191.5 3111.6,197.0 3112.3,197.3 3112.3,191.7 3112.7,192.0 3112.7,198.3 3113.8,198.5 3113.8,192.9 3114.9,192.7 3114.9,197.5 3115.3,197.4 3115.3,191.9 3116.8,191.9 3116.8,197.8 3118.3,198.2 3118.3,192.7 3119.4,192.7 3119.4,197.3 3119.8,196.9 3119.8,192.8 3120.7,193.2 3120.7,197.5 3121.8,197.3 3121.8,191.8 3122.3,191.9 3122.3,197.3 3123.0,197.5 3123.0,192.9 3123.5,192.9 3123.5,197.4 3123.9,197.1 3123.9,192.0 3124.6,192.0 3124.6,197.0 3125.0,197.3 3125.0,192.4 3126.1,192.2 3126.1,198.2 3126.8,198.4 3126.8,191.9 3127.9,191.5 3127.9,197.3 3128.4,196.9 3128.4,192.8 3128.8,192.8 3128.8,197.7 3129.2,198.1 3129.2,191.9 3130.7,191.9 3130.7,198.2 3132.2,198.2 3132.2,191.7 3132.7,192.1 3132.7,196.8 3134.2,196.6 3134.2,189.0 3134.9,188.6 3134.9,197.7 3136.0,198.1 3136.0,192.0 3136.4,191.6 3136.4,197.2 3136.9,197.3 3136.9,192.0 3138.4,191.8 3138.4,197.3 3138.8,197.3 3138.8,192.8 3139.3,192.8 3139.3,197.0 3139.8,197.2 3139.8,192.8 3140.2,193.1 3140.2,198.2 3140.7,198.6 3140.7,192.4 3141.6,192.4 3141.6,197.1 3142.3,196.8 3142.3,191.8 3143.0,191.5 3143.0,198.1 3144.5,198.1 3144.5,192.1 3145.0,191.8 3145.0,197.2 3145.7,197.4 3145.7,192.0 3146.4,192.3 3146.4,197.5 3146.8,197.6 3146.8,192.3 3148.3,192.6 3148.3,197.0 3148.7,196.9 3148.7,192.9 3149.4,192.6 3149.4,197.0 3150.1,197.2 3150.1,192.5 3150.8,192.4 3150.8,196.9 3151.9,196.5 3151.9,192.0 3153.0,191.7 3153.0,197.6 3153.9,197.3 3153.9,191.8 3154.4,191.6 3154.4,196.8 3155.5,196.9 3155.5,191.8 3156.4,191.5 3156.4,198.0 3157.9,198.1 3157.9,201.0 3158.4,201.4 3158.4,197.2 3159.5,197.5 3159.5,192.1 3160.4,192.3 3160.4,197.1 3160.9,196.9 3160.9,190.4 3161.6,190.8 3161.6,197.3 3162.7,197.1 3162.7,192.8 3163.4,192.9 3163.4,196.9 3163.8,197.1 3163.8,192.3 3164.7,192.3 3164.7,196.8 3165.1,196.9 3165.1,191.9 3165.6,192.1 3165.6,190.7 3166.0,191.0 3166.0,192.3 3167.5,192.4 3167.5,196.9 3167.9,196.6 3167.9,192.2 3168.6,192.2 3168.6,196.9 3169.3,197.2 3169.3,192.8 3170.4,192.5 3170.4,197.3 3171.5,197.7 3171.5,192.1 3171.9,192.0 3171.9,197.3 3173.0,197.7 3173.0,191.9 3173.7,191.7 3173.7,197.6 3174.6,198.0 3174.6,192.8 3175.3,192.4 3175.3,197.8 3176.4,197.7 3176.4,191.5 3177.3,191.2 3177.3,190.8 3177.8,190.8 3177.8,192.9 3178.7,193.0 3178.7,201.3 3179.1,201.4 3179.1,192.9 3180.6,193.0 3180.6,196.7 3181.3,196.5 3181.3,192.0 3181.7,192.1 3181.7,198.8 3182.1,198.8 3182.1,192.3 3182.6,192.6 3182.6,197.1 3183.5,197.3 3183.5,192.8 3185.0,192.8 3185.0,197.3 3186.1,197.4 3186.1,192.3 3186.8,192.4 3186.8,196.7 3187.7,196.6 3187.7,192.1 3188.2,192.1 3188.2,197.0 3188.6,197.3 3188.6,192.2 3189.3,192.1 3189.3,197.9 3189.8,197.7 3189.8,192.0 3190.2,192.1 3190.2,197.4 3191.3,197.6 3191.3,193.0 3191.7,193.1 3191.7,197.8 3192.2,197.5 3192.2,192.8 3192.7,193.0 3192.7,198.1 3193.8,198.4 3193.8,192.4 3194.7,192.6 3194.7,198.1 3196.2,197.7 3196.2,192.2 3197.3,192.6 3197.3,198.1 3198.4,197.9 3198.4,192.1 3199.5,192.0 3199.5,197.3 3200.4,197.1 3200.4,192.1 3201.5,191.9 3201.5,197.5 3203.0,197.5 3203.0,192.7 3203.5,192.7 3203.5,196.8 3204.4,197.2 3204.4,192.4 3205.1,192.2 3205.1,197.4 3205.8,197.7 3205.8,199.4 3206.2,199.4 3206.2,198.3 3206.9,198.3 3206.9,192.1 3208.0,192.1 3208.0,197.3 3208.4,197.6 3208.4,199.6 3209.9,199.5 3209.9,196.9 3211.0,196.7 3211.0,192.2 3211.9,192.3 3211.9,197.5 3213.0,197.8 3213.0,192.0 3213.5,191.7 3213.5,196.9 3214.2,197.2 3214.2,192.9 3215.7,192.9 3215.7,197.5 3216.6,197.8 3216.6,191.8 3217.1,191.5 3217.1,196.9 3218.6,196.9 3218.6,191.6 3220.1,191.5 3220.1,197.8 3220.5,197.4 3220.5,191.6 3221.2,191.3 3221.2,197.5 3221.6,197.5 3221.6,192.8 3222.3,192.9 3222.3,197.4 3222.8,197.1 3222.8,192.3 3223.3,191.9 3223.3,197.5 3223.7,197.8 3223.7,192.7 3224.8,192.8 3224.8,197.2 3226.3,197.4 3226.3,191.5 3227.0,191.7 3227.0,198.6 3228.1,198.3 3228.1,192.9 3229.0,192.9 3229.0,197.1 3230.1,196.8 3230.1,192.0 3231.2,192.3 3231.2,197.7 3232.1,198.0 3232.1,191.6 3233.0,191.7 3233.0,197.1 3234.5,196.9 3234.5,192.7 3236.0,192.5 3236.0,197.3 3236.5,196.9 3236.5,192.0 3237.2,191.9 3237.2,197.7 3238.1,198.1 3238.1,192.0 3239.0,191.8 3239.0,197.3 3239.5,197.2 3239.5,192.0 3240.2,191.7 3240.2,197.0 3241.7,197.0 3241.7,192.2 3242.2,192.4 3242.2,197.3 3242.7,197.4 3242.7,192.4 3243.6,192.2 3243.6,197.1 3244.5,197.0 3244.5,193.0 3245.0,193.1 3245.0,197.3 3245.9,197.1 3245.9,191.7 3247.0,191.9 3247.0,197.6 3248.5,197.4 3248.5,190.6 3249.4,190.5 3249.4,197.9 3249.8,197.7 3249.8,191.7 3250.3,191.7 3250.3,197.9 3251.0,197.7 3251.0,191.8 3252.5,191.5 3252.5,197.3 3254.0,197.5 3254.0,192.8 3254.9,193.1 3254.9,197.0 3255.4,196.9 3255.4,192.8 3256.9,192.5 3256.9,197.1 3258.4,197.4 3258.4,191.6 3259.1,191.5 3259.1,197.9 3259.8,198.0 3259.8,192.4 3260.2,192.4 3260.2,197.9 3260.9,197.9 3260.9,191.8 3262.4,192.0 3262.4,197.5 3263.5,197.9 3263.5,192.0 3265.0,191.6 3265.0,196.8 3266.5,197.1 3266.5,193.0 3267.6,193.1 3267.6,197.0 3268.0,197.4 3268.0,192.1 3269.5,192.3 3269.5,197.1 3271.0,197.1 3271.0,192.1 3271.7,192.5 3271.7,197.8 3273.2,198.1 3273.2,191.6 3274.7,191.7 3274.7,198.1 3275.6,198.3 3275.6,191.6 3276.5,191.7 3276.5,197.6 3277.6,197.9 3277.6,191.9 3279.1,192.3 3279.1,197.4 3279.6,197.1 3279.6,192.5 3280.3,192.5 3280.3,197.1 3281.2,197.1 3281.2,192.5 3282.1,192.6 3282.1,196.9 3282.6,197.0 3282.6,191.7 3283.3,191.6 3283.3,196.9 3283.8,197.3 3283.8,191.7 3284.7,191.5 3284.7,196.8 3285.4,197.1 3285.4,192.6 3286.1,192.5 3286.1,197.4 3286.5,197.5 3286.5,191.6 3287.2,191.2 3287.2,197.8 3288.1,198.2 3288.1,192.5 3289.2,192.8 3289.2,197.6 3290.1,197.2 3290.1,192.4 3290.5,192.8 3290.5,197.7 3292.0,197.4 3292.0,190.6 3293.5,190.4 3293.5,198.1 3295.0,198.3 3295.0,192.7 3295.4,192.9 3295.4,197.7 3296.1,197.6 3296.1,192.3 3296.6,192.2 3296.6,196.8 3297.3,196.8 3297.3,193.0 3298.8,192.9 3298.8,197.5 3299.2,197.5 3299.2,192.4 3299.7,192.5 3299.7,197.0 3300.2,196.9 3300.2,191.6 3301.1,191.5 3301.1,197.3 3301.6,196.9 3301.6,192.7 3302.7,192.6 3302.7,196.8 3303.4,197.0 3303.4,188.8 3304.1,188.5 3304.1,200.2 3304.8,200.2 3304.8,192.2 3305.9,192.6 3305.9,198.3 3307.4,198.6 3307.4,192.7 3308.5,192.9 3308.5,197.2 3309.2,197.2 3309.2,192.5 3309.9,192.3 3309.9,197.7 3310.6,198.0 3310.6,192.2 3311.1,191.8 3311.1,197.6 3312.6,197.9 3312.6,192.3 3313.3,192.3 3313.3,198.2 3313.7,198.0 3313.7,192.8 3315.2,192.6 3315.2,197.8 3315.6,197.9 3315.6,191.8 3316.1,191.9 3316.1,198.2 3316.5,198.2 3316.5,192.7 3317.4,192.4 3317.4,197.8 3318.5,198.0 3318.5,192.9 3318.9,193.0 3318.9,197.3 3319.8,197.1 3319.8,192.7 3320.3,192.4 3320.3,198.6 3321.4,198.8 3321.4,191.7 3321.9,191.4 3321.9,198.1 3322.3,198.1 3322.3,191.8 3323.8,191.9 3323.8,197.9 3324.5,197.5 3324.5,192.1 3325.2,192.2 3325.2,196.8 3325.9,196.9 3325.9,192.0 3326.3,192.1 3326.3,197.8 3326.7,197.6 3326.7,191.5 3327.2,191.9 3327.2,196.7 3328.1,196.4 3328.1,192.3 3328.8,192.2 3328.8,198.0 3330.3,198.1 3330.3,192.5 3331.0,192.8 3331.0,190.0 3331.9,190.0 3331.9,191.6 3332.3,191.3 3332.3,197.3 3333.8,197.3 3333.8,192.2 3334.3,192.0 3334.3,197.3 3335.4,197.3 3335.4,192.4 3336.1,192.0 3336.1,197.9 3336.6,197.7 3336.6,192.0 3337.5,191.6 3337.5,197.1 3338.6,196.9 3338.6,190.7 3339.7,190.5 3339.7,197.3 3340.8,197.3 3340.8,193.0 3341.9,192.6 3341.9,196.9 3343.0,196.6 3343.0,192.5 3343.9,192.3 3343.9,197.1 3344.6,197.3 3344.6,192.0 3345.1,192.2 3345.1,198.1 3346.6,197.9 3346.6,192.0 3347.7,192.2 3347.7,198.3 3349.2,198.3 3349.2,192.7 3349.9,193.1 3349.9,196.7 3350.4,197.0 3350.4,192.1 3351.3,192.3 3351.3,196.9 3351.8,197.1 3351.8,192.3 3352.5,192.7 3352.5,197.0 3353.2,197.3 3353.2,192.4 3354.3,192.8 3354.3,197.8 3355.0,198.0 3355.0,192.0 3355.4,191.7 3355.4,197.9 3356.1,198.0 3356.1,191.8 3356.6,191.7 3356.6,197.2 3357.1,197.2 3357.1,192.6 3357.5,193.0 3357.5,200.7 3358.6,200.3 3358.6,192.8 3359.3,192.9 3359.3,197.2 3359.7,197.4 3359.7,192.4 3361.2,192.7 3361.2,191.2 3361.7,191.3 3361.7,192.1 3362.6,192.5 3362.6,198.7 3363.0,198.8 3363.0,191.7 3364.5,191.3 3364.5,197.9 3365.0,197.6 3365.0,192.3 3365.7,192.4 3365.7,198.3 3366.8,198.3 3366.8,191.9 3367.3,192.1 3367.3,197.2 3367.7,197.4 3367.7,191.9 3369.2,191.9 3369.2,196.7 3369.9,196.7 3369.9,193.0 3371.4,192.7 3371.4,197.9 3372.9,197.6 3372.9,191.7 3373.3,191.7 3373.3,197.0 3373.8,197.3 3373.8,192.9 3374.5,193.2 3374.5,197.3 3375.0,197.4 3375.0,192.2 3375.9,192.4 3375.9,197.3 3376.6,197.1 3376.6,192.6 3377.0,192.3 3377.0,197.8 3378.5,197.7 3378.5,192.1 3379.0,192.5 3379.0,197.1 3380.5,196.9 3380.5,191.9 3381.2,191.7 3381.2,197.7 3381.9,197.6 3381.9,192.4 3382.8,192.1 3382.8,196.9 3383.5,196.8 3383.5,192.2 3383.9,192.5 3383.9,197.7 3384.4,198.0 3384.4,192.8 3384.9,192.6 3384.9,197.9 3386.4,198.2 3386.4,191.7 3386.9,192.1 3386.9,191.1 3388.4,190.9 3388.4,191.6 3389.5,191.4 3389.5,197.4 3391.0,197.5 3391.0,192.8 3392.5,193.2 3392.5,197.0 3392.9,197.1 3392.9,189.8 3393.3,189.9 3393.3,198.7 3394.8,198.4 3394.8,192.3 3395.7,191.9 3395.7,196.9 3396.2,197.1 3396.2,192.3 3397.3,192.6 3397.3,197.0 3397.7,197.4 3397.7,191.9 3398.2,191.7 3398.2,198.2 3398.9,198.0 3398.9,192.3 3399.3,192.2 3399.3,196.8 3399.7,196.7 3399.7,192.5 3400.4,192.9 3400.4,197.3 3401.9,197.2 3401.9,191.7 3402.8,191.9 3402.8,198.1 3403.7,198.2 3403.7,192.9 3404.2,192.7 3404.2,198.3 3405.3,198.5 3405.3,192.8 3406.8,193.0 3406.8,200.6 3408.3,200.5 3408.3,193.0 3409.8,192.6 3409.8,197.5 3411.3,197.3 3411.3,191.9 3412.4,192.0 3412.4,197.3 3413.9,196.9 3413.9,192.5 3415.0,192.8 3415.0,197.6 3415.4,197.3 3415.4,191.9 3416.5,192.2 3416.5,197.6 3418.0,197.7 3418.0,200.1 3418.5,200.1 3418.5,197.0 3419.2,197.2 3419.2,192.9 3420.1,193.2 3420.1,196.8 3421.6,196.7 3421.6,191.7 3422.5,191.5 3422.5,197.8 3422.9,197.8 3422.9,191.6 3423.6,191.5 3423.6,197.4 3424.5,197.4 3424.5,191.7 3425.0,191.9 3425.0,197.8 3425.7,197.9 3425.7,192.1 3426.8,191.7 3426.8,190.6 3427.3,190.6 3427.3,191.9 3428.0,191.8 3428.0,198.1 3429.1,197.8 3429.1,191.9 3430.0,192.2 3430.0,197.3 3430.4,196.9 3430.4,192.1 3431.1,192.2 3431.1,197.3 3431.8,197.4 3431.8,193.0 3432.9,193.1 3432.9,191.3 3433.6,191.2 3433.6,192.2 3434.5,192.6 3434.5,197.6 3434.9,197.9 3434.9,192.1 3436.4,192.1 3436.4,197.5 3436.8,197.5 3436.8,192.6 3437.2,192.5 3437.2,197.2 3437.6,197.0 3437.6,191.7 3438.5,191.5 3438.5,196.7 3438.9,196.7 3438.9,191.6 3439.4,191.7 3439.4,198.1 3440.9,198.1 3440.9,192.4 3442.4,192.8 3442.4,196.9 3442.8,196.8 3442.8,191.8 3443.9,191.8 3443.9,197.2 3445.0,197.0 3445.0,192.3 3445.7,192.2 3445.7,197.1 3446.1,197.0 3446.1,191.9 3447.0,191.6 3447.0,197.7 3447.4,198.1 3447.4,192.4 3448.9,192.3 3448.9,198.2 3449.6,198.2 3449.6,191.5 3450.0,191.2 3450.0,196.8 3451.1,196.5 3451.1,192.6 3452.0,192.8 3452.0,197.3 3453.1,197.5 3453.1,191.6 3453.6,191.5 3453.6,196.9 3455.1,197.2 3455.1,191.5 3456.2,191.7 3456.2,197.5 3457.7,197.6 3457.7,192.7 3459.2,192.7 3459.2,198.2 3459.7,197.9 3459.7,191.8 3460.1,191.5 3460.1,197.8 3460.5,197.6 3460.5,191.7 3461.4,191.4 3461.4,197.0 3462.9,196.9 3462.9,192.7 3463.4,192.9 3463.4,198.2 3464.9,198.0 3464.9,192.7 3465.4,193.1 3465.4,197.2 3466.3,196.9 3466.3,192.3 3467.0,192.0 3467.0,197.0 3467.9,196.9 3467.9,192.7 3468.8,192.4 3468.8,198.2 3469.3,198.2 3469.3,191.5 3470.0,191.8 3470.0,197.1 3470.4,197.0 3470.4,191.6 3471.5,191.3 3471.5,197.9 3472.2,198.2 3472.2,191.5 3473.3,191.6 3473.3,198.2 3473.7,198.3 3473.7,192.0 3474.1,192.0 3474.1,197.0 3474.8,197.2 3474.8,192.6 3475.5,192.5 3475.5,198.0 3477.0,198.0 3477.0,190.3 3477.9,190.4 3477.9,197.3 3478.8,197.2 3478.8,192.0 3480.3,192.2 3480.3,198.0 3480.7,198.3 3480.7,191.9 3481.6,191.6 3481.6,197.5 3482.1,197.5 3482.1,191.9 3482.5,191.9 3482.5,197.3 3482.9,197.0 3482.9,193.0 3483.8,193.3 3483.8,197.5 3485.3,197.8 3485.3,191.6 3485.7,191.8 3485.7,197.8 3487.2,197.6 3487.2,191.9 3487.7,191.5 3487.7,196.9 3488.6,196.9 3488.6,192.4 3489.0,192.2 3489.0,197.5 3490.1,197.8 3490.1,192.0 3490.6,191.7 3490.6,197.8 3491.1,198.1 3491.1,192.6 3491.8,192.7 3491.8,200.9 3492.3,200.5 3492.3,192.3 3492.8,192.0 3492.8,197.0 3493.5,197.4 3493.5,193.0 3495.0,193.4 3495.0,201.2 3495.9,201.4 3495.9,189.0 3497.4,189.2 3497.4,198.3 3497.8,198.3 3497.8,192.6 3498.7,192.3 3498.7,198.1 3500.2,198.3 3500.2,192.2 3501.7,192.4 3501.7,198.2 3502.8,198.3 3502.8,193.0 3504.3,193.2 3504.3,198.1 3505.0,197.8 3505.0,191.9 3506.1,191.8 3506.1,196.8 3507.6,196.9 3507.6,192.5 3508.5,192.9 3508.5,196.8 3509.4,197.0 3509.4,192.9 3510.1,192.8 3510.1,188.6 3510.8,188.9 3510.8,192.4 3511.7,192.4 3511.7,196.8 3512.4,196.7 3512.4,191.9 3513.3,191.6 3513.3,198.1 3514.0,198.0 3514.0,191.7 3515.1,191.8 3515.1,198.1 3515.5,198.0 3515.5,192.0 3516.2,191.8 3516.2,198.2 3517.3,198.1 3517.3,192.3 3518.0,192.7 3518.0,198.2 3518.5,198.2 3518.5,190.1 3518.9,190.4 3518.9,197.8 3519.6,198.2 3519.6,192.3 3521.1,192.2 3521.1,196.8 3521.8,196.9 3521.8,191.9 3522.7,191.8 3522.7,197.3 3524.2,197.3 3524.2,199.6 3525.7,200.0 3525.7,198.1 3526.1,197.8 3526.1,192.6 3527.0,192.9 3527.0,197.4 3528.5,197.8 3528.5,192.9 3529.4,193.2 3529.4,198.2 3529.9,198.2 3529.9,192.4 3530.8,192.8 3530.8,197.2 3532.3,197.2 3532.3,192.1 3533.2,191.8 3533.2,197.5 3534.7,197.9 3534.7,191.9 3535.4,191.6 3535.4,196.8 3536.5,196.8 3536.5,192.7 3537.0,192.4 3537.0,197.0 3537.7,196.8 3537.7,193.0 3538.1,193.2 3538.1,197.0 3538.8,196.8 3538.8,192.0 3539.7,191.9 3539.7,197.3 3540.1,197.1 3540.1,191.8 3541.0,192.1 3541.0,197.4 3541.9,197.1 3541.9,200.5 3542.6,200.8 3542.6,197.1 3543.5,197.0 3543.5,191.9 3544.4,192.0 3544.4,196.7 3545.1,196.7 3545.1,192.0 3546.6,192.4 3546.6,198.1 3547.3,198.4 3547.3,192.5 3547.7,192.4 3547.7,197.2 3549.2,197.3 3549.2,192.5 3550.7,192.8 3550.7,198.0 3551.6,198.2 3551.6,192.7 3552.5,192.6 3552.5,196.9 3553.0,197.1 3553.0,192.9 3553.9,192.6 3553.9,198.2 3554.6,197.8 3554.6,192.5 3555.0,192.6 3555.0,197.9 3555.9,198.1 3555.9,192.8 3557.4,192.5 3557.4,197.1 3558.9,196.8 3558.9,192.6 3559.6,192.9 3559.6,197.2 3561.1,197.3 3561.1,192.8 3562.6,193.0 3562.6,197.5 3563.7,197.6 3563.7,192.0 3564.2,192.1 3564.2,197.8 3564.6,197.5 3564.6,192.2 3565.3,192.4 3565.3,196.8 3566.2,196.8 3566.2,191.5 3567.3,191.6 3567.3,197.1 3568.2,197.2 3568.2,192.3 3568.9,192.1 3568.9,197.0 3570.0,197.3 3570.0,191.5 3571.1,191.8 3571.1,197.1 3571.5,197.0 3571.5,191.6 3573.0,191.3 3573.0,197.6 3573.9,197.4 3573.9,192.9 3574.3,192.8 3574.3,197.5 3575.0,197.2 3575.0,192.8 3575.9,192.9 3575.9,197.0 3576.4,196.9 3576.4,191.6 3577.1,191.9 3577.1,197.0 3577.5,197.2 3577.5,191.8 3578.0,192.0 3578.0,198.2 3578.7,198.6 3578.7,191.5 3580.2,191.4 3580.2,200.2 3581.1,200.3 3581.1,193.0 3582.2,192.8 3582.2,197.8 3582.6,197.7 3582.6,192.2 3583.0,191.9 3583.0,197.3 3583.4,197.6 3583.4,192.9 3584.3,193.1 3584.3,198.3 3585.2,198.5 3585.2,192.3 3586.3,192.0 3586.3,198.2 3587.0,198.0 3587.0,193.0 3587.7,192.9 3587.7,197.0 3589.2,197.3 3589.2,191.5 3590.1,191.3 3590.1,196.7 3591.2,197.0 3591.2,191.6 3591.6,191.9 3591.6,198.1 3592.7,197.9 3592.7,192.2 3593.8,192.3 3593.8,199.6 3594.3,199.3 3594.3,192.9 3595.4,192.9 3595.4,197.7 3596.5,197.9 3596.5,192.4 3597.4,192.5 3597.4,197.7 3598.3,198.0 3598.3,192.2 3598.8,192.5 3598.8,198.2 3599.9,198.2 3599.9,192.7 3600.3,193.0 3600.3,198.0 3600.7,198.2 3600.7,192.5 3602.2,192.3 3602.2,196.8 3602.7,196.4 3602.7,192.9 3603.2,193.2 3603.2,197.7 3603.6,198.1 3603.6,200.8 3604.3,200.5 3604.3,196.9 3605.8,197.0 3605.8,191.7 3606.9,191.9 3606.9,196.7 3607.8,197.0 3607.8,191.6 3608.9,191.7 3608.9,198.0 3610.0,197.6 3610.0,192.4 3610.4,192.4 3610.4,190.9 3611.9,190.9 3611.9,192.6 3612.8,192.8 3612.8,196.9 3614.3,197.3 3614.3,192.5 3615.4,192.2 3615.4,198.1 3615.9,197.7 3615.9,192.0 3616.6,191.8 3616.6,198.3 3617.5,198.5 3617.5,191.6 3617.9,191.7 3617.9,197.3 3619.0,197.7 3619.0,191.8 3620.1,192.0 3620.1,198.0 3620.5,198.2 3620.5,191.7 3620.9,192.0 3620.9,198.2 3621.3,198.2 3621.3,192.7 3622.8,193.0 3622.8,196.9 3623.2,196.8 3623.2,192.2 3624.7,192.3 3624.7,197.1 3625.4,197.0 3625.4,192.3 3625.8,192.2 3625.8,188.8 3626.5,189.1 3626.5,191.6 3627.6,191.8 3627.6,197.3 3628.5,197.3 3628.5,192.3 3629.4,192.4 3629.4,198.2 3630.5,198.5 3630.5,193.0 3631.6,192.6 3631.6,197.9 3632.1,198.2 3632.1,192.6 3633.6,193.0 3633.6,197.7 3634.1,197.4 3634.1,192.1 3635.6,192.0 3635.6,198.1 3636.0,198.2 3636.0,192.5 3637.1,192.5 3637.1,199.4 3638.6,199.1 3638.6,191.6 3639.0,191.3 3639.0,197.5 3640.1,197.9 3640.1,192.9 3641.6,192.8 3641.6,197.3 3642.0,197.5 3642.0,192.6 3642.5,192.3 3642.5,198.0 3643.4,197.7 3643.4,191.8 3643.9,191.7 3643.9,196.7 3644.6,196.5 3644.6,192.5 3645.0,192.6 3645.0,196.8 3646.5,196.8 3646.5,192.5 3646.9,192.5 3646.9,201.1 3647.4,200.8 3647.4,192.6 3648.1,192.3 3648.1,197.3 3649.6,197.3 3649.6,192.9 3650.0,192.6 3650.0,196.7 3650.9,196.9 3650.9,192.8 3651.4,192.6 3651.4,196.7 3652.3,196.4 3652.3,191.9 3653.2,191.5 3653.2,196.9 3654.1,196.9 3654.1,191.7 3655.0,191.7 3655.0,197.4 3655.5,197.0 3655.5,199.2 3656.0,199.1 3656.0,197.1 3656.4,197.3 3656.4,193.0 3657.5,193.3 3657.5,198.2 3658.4,198.2 3658.4,192.3 3658.9,192.1 3658.9,197.1 3659.3,197.5 3659.3,191.7 3660.2,191.9 3660.2,197.0 3661.7,197.2 3661.7,199.9 3662.4,199.7 3662.4,198.0 3662.8,198.3 3662.8,192.6 3664.3,192.6 3664.3,197.8 3664.8,197.5 3664.8,192.7 3665.5,193.1 3665.5,189.4 3667.0,189.0 3667.0,191.6 3667.9,191.4 3667.9,198.3 3668.3,198.5 3668.3,192.4 3669.0,192.7 3669.0,201.3 3669.9,201.1 3669.9,192.8 3670.8,193.0 3670.8,197.7 3672.3,197.5 3672.3,193.0 3673.2,193.0 3673.2,197.9 3673.7,197.5 3673.7,192.5 3674.2,192.1 3674.2,197.1 3674.9,197.4 3674.9,191.9 3675.4,191.9 3675.4,197.3 3676.5,197.1 3676.5,192.9 3677.6,192.7 3677.6,196.9 3678.1,196.8 3678.1,192.1 3678.5,191.8 3678.5,197.1 3679.4,197.2 3679.4,192.9 3679.9,192.8 3679.9,196.8 3681.4,197.1 3681.4,192.9 3681.8,192.5 3681.8,197.4 3682.3,197.4 3682.3,192.5 3683.0,192.5 3683.0,197.5 3683.4,197.5 3683.4,192.8 3684.9,193.2 3684.9,197.6 3685.4,197.5 3685.4,192.5 3686.3,192.3 3686.3,198.2 3686.8,198.0 3686.8,191.6 3687.2,191.7 3687.2,198.0 3687.7,197.6 3687.7,192.6 3688.6,193.0 3688.6,197.2 3689.1,197.6 3689.1,193.0 3690.0,193.0 3690.0,198.1 3690.9,197.9 3690.9,192.1 3692.4,192.1 3692.4,197.1 3693.1,196.8 3693.1,192.3 3693.8,192.6 3693.8,196.8 3694.9,196.9 3694.9,192.0 3695.6,192.2 3695.6,198.0 3696.5,198.2 3696.5,191.7 3698.0,191.6 3698.0,198.0 3699.5,198.2 3699.5,192.4 3701.0,192.6 3701.0,197.2 3701.7,197.0 3701.7,192.8 3702.1,193.1 3702.1,200.7 3703.2,200.5 3703.2,192.8 3703.6,192.4 3703.6,201.2 3704.1,201.4 3704.1,188.6 3704.6,188.3 3704.6,197.3 3705.3,197.1 3705.3,191.9 3706.8,191.5 3706.8,197.1 3707.2,196.8 3707.2,191.9 3707.6,192.1 3707.6,197.5 3709.1,197.2 3709.1,192.3 3710.2,192.0 3710.2,197.4 3710.7,197.2 3710.7,192.7 3711.1,192.9 3711.1,200.9 3711.5,201.1 3711.5,192.7 3712.0,192.7 3712.0,197.0 3712.9,197.1 3712.9,192.2 3713.3,192.4 3713.3,197.6 3714.4,197.7 3714.4,191.5 3714.8,191.5 3714.8,197.8 3715.3,197.9 3715.3,192.0 3715.8,192.1 3715.8,196.8 3716.5,196.8 3716.5,192.6 3717.2,192.9 3717.2,197.5 3717.9,197.4 3717.9,191.9 3719.0,191.8 3719.0,198.2 3719.5,198.5 3719.5,200.6 3720.4,200.5 3720.4,196.9 3721.1,196.5 3721.1,191.6 3722.0,191.8 3722.0,197.2 3723.1,197.2 3723.1,192.6 3724.6,192.6 3724.6,197.7 3726.1,197.4 3726.1,192.9 3727.0,192.6 3727.0,197.4 3728.1,197.5 3728.1,192.8 3728.8,192.9 3728.8,196.8 3729.5,196.8 3729.5,192.6 3729.9,192.2 3729.9,196.9 3731.4,196.5 3731.4,192.4 3731.9,192.3 3731.9,197.9 3732.4,197.9 3732.4,192.8 3733.1,192.8 3733.1,197.1 3734.2,197.3 3734.2,192.2 3735.7,192.6 3735.7,197.9 3736.8,197.8 3736.8,191.7 3737.3,191.4 3737.3,198.0 3738.2,197.9 3738.2,188.6 3738.7,188.7 3738.7,197.9 3739.4,197.8 3739.4,191.6 3739.9,191.2 3739.9,196.7 3740.4,196.9 3740.4,199.2 3741.5,199.0 3741.5,197.2 3742.2,197.3 3742.2,191.7 3743.1,191.4 3743.1,197.7 3744.6,198.0 3744.6,192.5 3745.1,192.1 3745.1,196.9 3746.6,196.8 3746.6,192.1 3747.7,192.3 3747.7,197.8 3748.2,198.0 3748.2,192.8 3748.6,193.0 3748.6,198.2 3749.1,198.5 3749.1,191.6 3750.2,191.9 3750.2,198.2 3751.3,198.2 3751.3,192.8 3752.2,192.6 3752.2,196.8 3752.9,196.5 3752.9,191.5 3753.3,191.4 3753.3,188.9 3754.4,189.0 3754.4,192.9 3755.1,192.8 3755.1,197.6 3756.6,197.5 3756.6,192.0 3757.3,192.3 3757.3,197.7 3758.4,198.1 3758.4,188.9 3759.5,189.0 3759.5,197.6 3760.0,197.9 3760.0,191.7 3761.5,192.0 3761.5,197.6 3761.9,197.2 3761.9,191.6 3762.4,191.7 3762.4,197.3 3763.5,197.0 3763.5,191.6 3765.0,191.5 3765.0,197.3 3766.5,197.5 3766.5,192.0 3767.4,191.8 3767.4,197.5 3768.9,197.7 3768.9,191.7 3769.3,192.1 3769.3,197.0 3770.4,196.6 3770.4,192.6 3771.9,192.9 3771.9,188.8 3772.6,189.1 3772.6,192.9 3774.1,192.9 3774.1,196.9 3774.6,197.0 3774.6,192.4 3775.0,192.2 3775.0,197.0 3775.7,197.1 3775.7,191.5 3776.1,191.4 3776.1,198.0 3777.6,198.0 3777.6,191.8 3778.1,191.8 3778.1,197.9 3778.6,197.5 3778.6,192.6 3779.5,192.4 3779.5,196.8 3780.4,197.1 3780.4,192.8 3781.3,193.1 3781.3,196.9 3782.4,196.9 3782.4,192.3 3783.9,192.2 3783.9,197.0 3785.4,196.7 3785.4,192.2 3786.3,192.0 3786.3,196.8 3787.8,196.6 3787.8,191.9 3788.5,191.9 3788.5,197.6 3789.4,197.6 3789.4,191.8 3790.1,191.9 3790.1,197.1 3790.6,197.0 3790.6,192.1 3791.5,192.0 3791.5,197.8 3792.4,198.1 3792.4,192.8 3793.9,192.9 3793.9,199.6 3794.3,199.7 3794.3,192.1 3795.8,192.0 3795.8,197.9 3796.9,197.5 3796.9,192.0 3798.4,192.3 3798.4,197.8 3799.1,197.7 3799.1,192.1 3799.6,191.8 3799.6,198.1 3800.0,198.5 3800.0,192.2 3801.1,192.2 3801.1,196.7 3801.8,196.8 3801.8,192.2 3802.5,192.1 3802.5,197.6 3803.4,197.9 3803.4,192.1 3803.8,192.0 3803.8,197.1 3805.3,197.0 3805.3,192.5 3806.2,192.2 3806.2,197.9 3806.7,197.6 3806.7,191.6 3807.4,191.4 3807.4,198.2 3808.9,197.8 3808.9,192.9 3809.4,192.6 3809.4,197.0 3809.9,197.2 3809.9,191.6 3811.4,191.9 3811.4,198.3 3811.9,197.9 3811.9,191.6 3812.3,191.4 3812.3,196.9 3813.8,196.6 3813.8,192.0 3814.3,192.4 3814.3,198.3 3814.8,198.2 3814.8,192.2 3815.7,192.2 3815.7,197.8 3816.1,197.6 3816.1,192.7 3816.6,192.8 3816.6,189.2 3818.1,189.2 3818.1,189.7 3819.2,189.6 3819.2,196.9 3820.1,196.6 3820.1,192.2 3821.2,192.4 3821.2,196.7 3821.7,196.9 3821.7,191.5 3823.2,191.7 3823.2,197.0 3824.1,196.9 3824.1,192.9 3825.6,193.3 3825.6,198.1 3826.7,197.9 3826.7,192.7 3827.2,192.9 3827.2,197.2 3828.3,197.4 3828.3,192.0 3829.0,192.1 3829.0,197.1 3830.1,197.5 3830.1,192.7 3830.5,192.4 3830.5,197.6 3831.4,197.9 3831.4,192.6 3832.5,192.2 3832.5,196.9 3833.6,196.7 3833.6,192.2 3834.0,192.5 3834.0,197.4 3834.7,197.3 3834.7,192.6 3835.1,192.4 3835.1,198.0 3836.6,197.7 3836.6,193.0 3837.7,192.9 3837.7,197.7 3838.8,197.6 3838.8,192.1 3840.3,192.5 3840.3,196.8 3841.2,197.0 3841.2,192.4 3842.7,192.7 3842.7,196.9 3844.2,197.0 3844.2,191.9 3845.1,191.9 3845.1,196.8 3846.0,197.1 3846.0,192.4 3846.4,192.7 3846.4,197.2 3846.8,197.6 3846.8,192.5 3847.3,192.7 3847.3,197.5 3848.8,197.4 3848.8,191.8 3849.3,192.1 3849.3,198.2 3849.8,197.9 3849.8,193.0 3850.9,192.6 3850.9,198.1 3851.8,198.0 3851.8,192.2 3852.2,192.1 3852.2,197.1 3852.6,197.0 3852.6,192.9 3853.7,192.6 3853.7,197.2 3855.2,197.5 3855.2,192.2 3855.7,192.6 3855.7,197.6 3856.8,197.8 3856.8,192.0 3857.9,191.7 3857.9,198.3 3858.8,198.0 3858.8,192.0 3859.9,192.1 3859.9,196.7 3860.4,196.5 3860.4,192.2 3860.8,192.1 3860.8,197.5 3862.3,197.8 3862.3,192.8 3862.8,192.9 3862.8,197.0 3863.5,196.8 3863.5,193.0 3865.0,192.6 3865.0,196.8 3865.4,196.8 3865.4,192.8 3866.9,192.9 3866.9,196.9 3868.4,196.6 3868.4,191.5 3869.5,191.1 3869.5,197.1 3870.4,197.5 3870.4,191.5 3871.9,191.2 3871.9,197.1 3872.4,196.8 3872.4,192.8 3872.8,192.8 3872.8,197.3 3873.5,197.7 3873.5,198.8 3873.9,199.0 3873.9,197.4 3874.6,197.7 3874.6,193.0 3875.0,193.4 3875.0,197.3 3876.1,197.2 3876.1,192.0 3876.8,192.4 3876.8,197.0 3877.5,196.7 3877.5,192.7 3877.9,192.4 3877.9,196.9 3879.0,196.9 3879.0,191.5 3879.9,191.2 3879.9,198.2 3880.8,197.8 3880.8,191.6 3881.5,191.6 3881.5,197.5 3882.4,197.1 3882.4,191.6 3883.9,192.0 3883.9,197.7 3884.4,197.4 3884.4,192.7 3884.8,192.9 3884.8,197.4 3885.5,197.2 3885.5,192.2 3886.6,192.3 3886.6,197.2 3887.1,197.5 3887.1,192.9 3888.6,193.0 3888.6,198.1 3889.5,198.2 3889.5,192.7 3890.0,192.5 3890.0,196.9 3890.4,197.1 3890.4,192.1 3891.9,191.9 3891.9,197.8 3892.4,197.4" fill="none" stroke="#dcb48c" stroke-width="0.7" stroke-linejoin="round"/>
<line x1="2750.70" y1="311.50" x2="3892.30" y2="311.50" stroke="#30c8c8" stroke-width="0.9" />
<line x1="2750.70" y1="312.70" x2="3892.30" y2="312.70" stroke="#3838f0" stroke-width="1.1" />
<line x1="2750.70" y1="314.00" x2="3892.30" y2="314.00" stroke="#e020c0" stroke-width="1.0" />
<polyline points="2750.7,334.2 2765.7,334.8 2780.7,334.3 2795.7,334.9 2810.7,335.3 3260.0,335.6 3285.0,333.8 3292.0,335.8 3892.3,335.8" fill="none" stroke="#c02020" stroke-width="0.9" />
<line x1="2750.70" y1="340.40" x2="3892.30" y2="340.40" stroke="#e8c030" stroke-width="0.9" />
<line x1="2750.70" y1="340.40" x2="3892.30" y2="340.40" stroke="#494949" stroke-width="0.9" stroke-dasharray="0.6 4.5"/>
<polyline points="2750.7,349.5 2751.6,346.6 2752.5,347.3 2753.4,347.9 2754.3,347.2 2755.2,346.9 2756.1,348.8 2757.0,349.8 2757.9,347.7 2758.8,347.5 2759.7,348.7 2760.6,347.3 2761.5,347.9 2762.4,348.8 2763.3,348.0 2764.2,347.1 2765.1,346.8 2766.0,348.3 2766.9,349.8 2767.8,349.5 2768.7,346.9 2769.6,348.2 2770.5,348.2 2771.4,347.2 2772.3,348.7 2773.2,348.2 2774.1,349.2 2775.0,347.5 2775.9,349.6 2776.8,349.2 2777.7,348.1 2778.6,347.1 2779.5,348.1 2780.4,347.0 2781.3,348.8 2782.2,348.8 2783.1,348.5 2784.0,349.7 2784.9,346.7 2785.8,348.9 2786.7,349.2 2787.6,347.0 2788.5,347.6 2789.4,346.8 2790.3,348.5 2791.2,348.9 2792.1,347.7 2793.0,348.8 2793.9,347.8 2794.8,348.9 2795.7,347.5 2796.6,349.7 2797.5,348.0 2798.4,346.6 2799.3,346.9 2800.2,348.9 2801.1,349.4 2802.0,348.6 2802.9,347.1 2803.8,349.4 2804.7,348.9 2805.6,347.0 2806.5,347.8 2807.4,348.7 2808.3,346.6 2809.2,346.7 2810.1,347.7 2811.0,349.4 2811.9,349.8 2812.8,347.6 2813.7,349.5 2814.6,349.1 2815.5,349.4 2816.4,348.5 2817.3,349.7 2818.2,348.7 2819.1,349.6 2820.0,348.4 2820.9,347.2 2821.8,348.3 2822.7,348.1 2823.6,347.7 2824.5,347.8 2825.4,348.2 2826.3,348.5 2827.2,347.3 2828.1,347.5 2829.0,348.2 2829.9,348.2 2830.8,347.9 2831.7,348.7 2832.6,347.2 2833.5,348.3 2834.4,347.5 2835.3,349.1 2836.2,348.9 2837.1,349.1 2838.0,348.3 2838.9,347.4 2839.8,349.6 2840.7,348.2 2841.6,347.8 2842.5,347.5 2843.4,347.9 2844.3,348.9 2845.2,349.2 2846.1,348.1 2847.0,348.9 2847.9,347.3 2848.8,348.0 2849.7,347.7 2850.6,347.6 2851.5,347.8 2852.4,349.0 2853.3,348.9 2854.2,347.3 2855.1,347.3 2856.0,349.1 2856.9,348.7 2857.8,348.8 2858.7,348.6 2859.6,348.8 2860.5,347.5 2861.4,346.8 2862.3,347.8 2863.2,346.7 2864.1,349.7 2865.0,348.3 2865.9,348.7 2866.8,349.7 2867.7,349.2 2868.6,347.3 2869.5,347.7 2870.4,346.9 2871.3,349.1 2872.2,349.0 2873.1,348.2 2874.0,347.8 2874.9,347.5 2875.8,348.2 2876.7,348.9 2877.6,349.5 2878.5,349.3 2879.4,349.4 2880.3,348.0 2881.2,347.9 2882.1,347.6 2883.0,349.7 2883.9,347.2 2884.8,347.1 2885.7,347.5 2886.6,349.6 2887.5,349.3 2888.4,347.7 2889.3,349.3 2890.2,349.5 2891.1,348.0 2892.0,347.2 2892.9,349.1 2893.8,347.8 2894.7,347.0 2895.6,349.5 2896.5,348.0 2897.4,347.9 2898.3,348.5 2899.2,347.4 2900.1,346.7 2901.0,347.8 2901.9,347.8 2902.8,346.6 2903.7,347.8 2904.6,349.0 2905.5,347.7 2906.4,348.8 2907.3,348.6 2908.2,347.2 2909.1,346.7 2910.0,348.8 2910.9,348.6 2911.8,347.5 2912.7,347.2 2913.6,349.3 2914.5,349.5 2915.4,347.3 2916.3,348.5 2917.2,348.4 2918.1,347.6 2919.0,346.7 2919.9,347.6 2920.8,348.7 2921.7,348.5 2922.6,348.2 2923.5,347.0 2924.4,347.3 2925.3,347.6 2926.2,347.9 2927.1,347.8 2928.0,349.5 2928.9,347.0 2929.8,349.8 2930.7,347.4 2931.6,349.3 2932.5,347.4 2933.4,348.5 2934.3,347.8 2935.2,346.7 2936.1,349.1 2937.0,349.2 2937.9,347.5 2938.8,349.1 2939.7,348.1 2940.6,349.8 2941.5,346.8 2942.4,347.8 2943.3,347.3 2944.2,348.6 2945.1,349.1 2946.0,349.3 2946.9,348.4 2947.8,347.8 2948.7,349.2 2949.6,346.9 2950.5,347.4 2951.4,349.0 2952.3,348.0 2953.2,349.8 2954.1,346.9 2955.0,348.1 2955.9,347.3 2956.8,346.6 2957.7,346.9 2958.6,346.9 2959.5,347.8 2960.4,348.0 2961.3,348.2 2962.2,347.5 2963.1,348.8 2964.0,348.3 2964.9,349.7 2965.8,347.1 2966.7,348.2 2967.6,348.2 2968.5,347.8 2969.4,349.4 2970.3,347.3 2971.2,349.4 2972.1,347.7 2973.0,347.7 2973.9,348.6 2974.8,348.4 2975.7,347.5 2976.6,346.9 2977.5,349.7 2978.4,347.8 2979.3,347.0 2980.2,348.7 2981.1,348.3 2982.0,347.6 2982.9,347.7 2983.8,349.3 2984.7,347.7 2985.6,347.9 2986.5,349.7 2987.4,347.8 2988.3,347.9 2989.2,347.1 2990.1,348.7 2991.0,348.7 2991.9,348.0 2992.8,347.9 2993.7,347.3 2994.6,349.1 2995.5,348.1 2996.4,349.3 2997.3,347.8 2998.2,348.9 2999.1,346.7 3000.0,347.3 3000.9,349.7 3001.8,348.8 3002.7,348.8 3003.6,348.2 3004.5,348.1 3005.4,347.2 3006.3,347.2 3007.2,348.7 3008.1,348.8 3009.0,347.4 3009.9,348.7 3010.8,347.0 3011.7,348.6 3012.6,347.1 3013.5,348.2 3014.4,347.6 3015.3,348.4 3016.2,347.0 3017.1,348.1 3018.0,348.6 3018.9,347.0 3019.8,347.6 3020.7,348.8 3021.6,348.3 3022.5,348.6 3023.4,349.1 3024.3,348.4 3025.2,347.3 3026.1,348.0 3027.0,349.3 3027.9,348.4 3028.8,349.0 3029.7,347.8 3030.6,348.0 3031.5,349.7 3032.4,349.2 3033.3,348.7 3034.2,346.9 3035.1,348.6 3036.0,346.7 3036.9,349.6 3037.8,349.7 3038.7,348.9 3039.6,347.5 3040.5,349.3 3041.4,347.2 3042.3,349.2 3043.2,348.3 3044.1,346.7 3045.0,349.4 3045.9,348.0 3046.8,349.3 3047.7,348.8 3048.6,348.3 3049.5,349.4 3050.4,347.2 3051.3,349.5 3052.2,347.7 3053.1,346.7 3054.0,347.7 3054.9,346.8 3055.8,346.8 3056.7,348.6 3057.6,347.0 3058.5,347.1 3059.4,347.5 3060.3,347.5 3061.2,349.5 3062.1,349.5 3063.0,349.4 3063.9,349.8 3064.8,348.0 3065.7,349.1 3066.6,347.5 3067.5,349.6 3068.4,349.2 3069.3,348.9 3070.2,347.3 3071.1,346.9 3072.0,349.6 3072.9,348.4 3073.8,348.6 3074.7,349.4 3075.6,347.1 3076.5,348.8 3077.4,348.1 3078.3,349.1 3079.2,348.1 3080.1,347.2 3081.0,349.7 3081.9,347.5 3082.8,349.0 3083.7,349.3 3084.6,347.4 3085.5,348.8 3086.4,347.9 3087.3,347.3 3088.2,347.3 3089.1,349.7 3090.0,347.8 3090.9,348.2 3091.8,348.2 3092.7,346.7 3093.6,349.0 3094.5,349.0 3095.4,349.4 3096.3,347.7 3097.2,347.3 3098.1,347.7 3099.0,348.9 3099.9,348.7 3100.8,347.9 3101.7,348.3 3102.6,347.1 3103.5,349.5 3104.4,348.1 3105.3,348.2 3106.2,349.1 3107.1,347.2 3108.0,348.9 3108.9,347.7 3109.8,349.2 3110.7,346.9 3111.6,347.5 3112.5,348.6 3113.4,348.1 3114.3,347.8 3115.2,348.5 3116.1,347.3 3117.0,348.0 3117.9,346.6 3118.8,349.2 3119.7,347.4 3120.6,349.3 3121.5,348.4 3122.4,348.5 3123.3,348.6 3124.2,347.0 3125.1,349.1 3126.0,347.5 3126.9,349.4 3127.8,349.1 3128.7,348.8 3129.6,349.2 3130.5,348.0 3131.4,348.8 3132.3,349.6 3133.2,347.2 3134.1,346.9 3135.0,347.9 3135.9,348.2 3136.8,347.1 3137.7,347.3 3138.6,349.4 3139.5,347.8 3140.4,347.1 3141.3,347.2 3142.2,348.4 3143.1,347.2 3144.0,348.1 3144.9,348.3 3145.8,348.0 3146.7,348.2 3147.6,349.3 3148.5,346.7 3149.4,349.6 3150.3,347.2 3151.2,346.7 3152.1,349.1 3153.0,348.4 3153.9,348.3 3154.8,347.3 3155.7,349.1 3156.6,347.6 3157.5,348.9 3158.4,347.3 3159.3,348.4 3160.2,348.7 3161.1,347.8 3162.0,348.1 3162.9,346.8 3163.8,348.7 3164.7,348.8 3165.6,347.1 3166.5,348.4 3167.4,348.9 3168.3,346.9 3169.2,349.3 3170.1,349.4 3171.0,346.8 3171.9,347.4 3172.8,346.9 3173.7,347.4 3174.6,346.9 3175.5,348.2 3176.4,347.4 3177.3,347.6 3178.2,348.1 3179.1,347.8 3180.0,349.1 3180.9,348.9 3181.8,347.0 3182.7,347.3 3183.6,346.6 3184.5,347.7 3185.4,346.9 3186.3,348.8 3187.2,349.1 3188.1,349.8 3189.0,347.3 3189.9,346.7 3190.8,349.0 3191.7,347.9 3192.6,349.6 3193.5,347.9 3194.4,347.6 3195.3,346.8 3196.2,349.6 3197.1,348.2 3198.0,348.0 3198.9,348.0 3199.8,349.1 3200.7,349.3 3201.6,348.1 3202.5,347.2 3203.4,347.9 3204.3,349.5 3205.2,347.9 3206.1,348.7 3207.0,348.4 3207.9,348.1 3208.8,348.4 3209.7,347.4 3210.6,348.4 3211.5,349.4 3212.4,346.9 3213.3,347.8 3214.2,349.4 3215.1,349.7 3216.0,346.6 3216.9,348.6 3217.8,348.6 3218.7,349.3 3219.6,348.1 3220.5,347.0 3221.4,347.6 3222.3,348.9 3223.2,348.9 3224.1,347.3 3225.0,348.7 3225.9,348.7 3226.8,348.7 3227.7,346.7 3228.6,348.0 3229.5,347.6 3230.4,348.5 3231.3,347.7 3232.2,347.0 3233.1,348.7 3234.0,347.5 3234.9,349.1 3235.8,347.6 3236.7,348.3 3237.6,349.2 3238.5,347.0 3239.4,348.9 3240.3,346.8 3241.2,349.6 3242.1,346.7 3243.0,348.9 3243.9,347.8 3244.8,347.2 3245.7,347.9 3246.6,348.2 3247.5,347.9 3248.4,347.0 3249.3,348.3 3250.2,347.6 3251.1,349.7 3252.0,347.8 3252.9,348.0 3253.8,347.3 3254.7,349.7 3255.6,347.6 3256.5,348.7 3257.4,349.3 3258.3,347.9 3259.2,349.0 3260.1,347.5 3261.0,347.0 3261.9,346.7 3262.8,348.0 3263.7,349.4 3264.6,347.2 3265.5,348.0 3266.4,349.0 3267.3,347.5 3268.2,347.1 3269.1,348.3 3270.0,348.0 3270.9,349.6 3271.8,349.5 3272.7,347.4 3273.6,348.4 3274.5,347.9 3275.4,346.7 3276.3,348.0 3277.2,349.5 3278.1,347.6 3279.0,348.5 3279.9,348.9 3280.8,346.8 3281.7,349.6 3282.6,346.9 3283.5,347.6 3284.4,348.9 3285.3,346.7 3286.2,347.8 3287.1,347.0 3288.0,348.1 3288.9,346.7 3289.8,347.1 3290.7,347.3 3291.6,346.9 3292.5,346.9 3293.4,347.2 3294.3,348.3 3295.2,347.0 3296.1,349.2 3297.0,347.9 3297.9,347.4 3298.8,347.4 3299.7,349.3 3300.6,346.8 3301.5,349.0 3302.4,346.9 3303.3,349.6 3304.2,347.9 3305.1,348.5 3306.0,349.4 3306.9,346.9 3307.8,346.8 3308.7,348.8 3309.6,348.5 3310.5,348.9 3311.4,347.5 3312.3,348.2 3313.2,347.2 3314.1,348.0 3315.0,347.5 3315.9,348.5 3316.8,347.6 3317.7,347.5 3318.6,348.7 3319.5,346.9 3320.4,349.2 3321.3,348.2 3322.2,347.3 3323.1,347.0 3324.0,348.2 3324.9,348.2 3325.8,348.9 3326.7,347.8 3327.6,347.9 3328.5,349.5 3329.4,347.5 3330.3,349.7 3331.2,349.5 3332.1,349.8 3333.0,349.6 3333.9,347.4 3334.8,349.2 3335.7,348.6 3336.6,347.3 3337.5,349.8 3338.4,348.7 3339.3,349.2 3340.2,348.4 3341.1,346.9 3342.0,349.4 3342.9,347.2 3343.8,347.4 3344.7,348.6 3345.6,347.2 3346.5,348.1 3347.4,348.9 3348.3,346.9 3349.2,348.7 3350.1,346.9 3351.0,348.1 3351.9,348.7 3352.8,348.8 3353.7,346.7 3354.6,347.2 3355.5,349.7 3356.4,347.9 3357.3,348.0 3358.2,347.8 3359.1,348.8 3360.0,349.0 3360.9,348.7 3361.8,347.9 3362.7,348.4 3363.6,348.2 3364.5,347.2 3365.4,349.6 3366.3,349.7 3367.2,349.1 3368.1,349.8 3369.0,348.1 3369.9,349.3 3370.8,347.4 3371.7,349.0 3372.6,348.9 3373.5,349.6 3374.4,349.3 3375.3,349.4 3376.2,347.5 3377.1,349.1 3378.0,348.1 3378.9,347.4 3379.8,347.6 3380.7,349.2 3381.6,349.4 3382.5,349.4 3383.4,348.7 3384.3,346.8 3385.2,346.7 3386.1,348.3 3387.0,346.9 3387.9,347.4 3388.8,346.5 3389.7,346.7 3390.6,348.8 3391.5,346.9 3392.4,349.3 3393.3,347.3 3394.2,349.2 3395.1,347.2 3396.0,347.0 3396.9,347.5 3397.8,346.1 3398.7,347.6 3399.6,347.4 3400.5,346.1 3401.4,349.2 3402.3,347.4 3403.2,346.0 3404.1,349.5 3405.0,346.8 3405.9,346.9 3406.8,346.0 3407.7,346.3 3408.6,348.5 3409.5,348.1 3410.4,347.8 3411.3,346.8 3412.2,346.9 3413.1,349.4 3414.0,347.2 3414.9,349.5 3415.8,349.1 3416.7,346.3 3417.6,348.9 3418.5,345.9 3419.4,348.4 3420.3,348.7 3421.2,348.3 3422.1,347.8 3423.0,348.7 3423.9,346.4 3424.8,347.7 3425.7,346.7 3426.6,347.2 3427.5,346.4 3428.4,348.3 3429.3,347.8 3430.2,348.5 3431.1,347.9 3432.0,347.8 3432.9,349.0 3433.8,348.6 3434.7,347.7 3435.6,346.8 3436.5,348.9 3437.4,347.0 3438.3,346.0 3439.2,346.8 3440.1,348.1 3441.0,348.9 3441.9,347.9 3442.8,347.9 3443.7,348.8 3444.6,348.3 3445.5,347.1 3446.4,347.2 3447.3,348.2 3448.2,346.7 3449.1,346.0 3450.0,347.7 3450.9,348.3 3451.8,346.4 3452.7,347.9 3453.6,348.6 3454.5,346.0 3455.4,346.0 3456.3,347.2 3457.2,346.6 3458.1,348.7 3459.0,348.8 3459.9,347.0 3460.8,348.1 3461.7,347.6 3462.6,346.0 3463.5,348.7 3464.4,346.0 3465.3,345.7 3466.2,346.9 3467.1,345.5 3468.0,347.0 3468.9,346.8 3469.8,348.5 3470.7,346.7 3471.6,348.2 3472.5,347.9 3473.4,347.3 3474.3,346.1 3475.2,346.3 3476.1,346.9 3477.0,346.6 3477.9,347.4 3478.8,346.9 3479.7,346.4 3480.6,347.3 3481.5,348.5 3482.4,345.9 3483.3,346.4 3484.2,345.3 3485.1,345.6 3486.0,345.4 3486.9,346.6 3487.8,347.9 3488.7,347.4 3489.6,348.3 3490.5,347.9 3491.4,347.0 3492.3,347.0 3493.2,345.2 3494.1,346.4 3495.0,346.0 3495.9,347.1 3496.8,345.4 3497.7,346.8 3498.6,346.3 3499.5,346.7 3500.4,346.4 3501.3,345.4 3502.2,347.4 3503.1,347.6 3504.0,346.9 3504.9,345.4 3505.8,346.9 3506.7,347.7 3507.6,348.1 3508.5,347.4 3509.4,345.2 3510.3,347.7 3511.2,347.0 3512.1,345.9 3513.0,347.8 3513.9,347.5 3514.8,347.7 3515.7,345.7 3516.6,346.7 3517.5,346.1 3518.4,345.9 3519.3,347.2 3520.2,346.8 3521.1,345.9 3522.0,346.5 3522.9,347.7 3523.8,346.6 3524.7,347.6 3525.6,346.6 3526.5,347.8 3527.4,345.0 3528.3,346.2 3529.2,346.5 3530.1,347.0 3531.0,347.7 3531.9,346.7 3532.8,346.2 3533.7,346.7 3534.6,346.4 3535.5,346.8 3536.4,347.5 3537.3,344.8 3538.2,345.7 3539.1,347.3 3540.0,345.0 3540.9,347.0 3541.8,344.9 3542.7,346.6 3543.6,347.0 3544.5,345.4 3545.4,345.8 3546.3,345.4 3547.2,346.7 3548.1,346.2 3549.0,346.4 3549.9,345.6 3550.8,346.3 3551.7,347.3 3552.6,346.8 3553.5,347.3 3554.4,345.3 3555.3,346.1 3556.2,345.7 3557.1,345.6 3558.0,346.8 3558.9,345.1 3559.8,346.1 3560.7,346.7 3561.6,347.1 3562.5,344.6 3563.4,345.3 3564.3,345.9 3565.2,347.1 3566.1,345.0 3567.0,346.8 3567.9,345.6 3568.8,346.0 3569.7,347.0 3570.6,344.7 3571.5,345.4 3572.4,344.9 3573.3,344.8 3574.2,345.3 3575.1,346.3 3576.0,346.0 3576.9,344.8 3577.8,346.5 3578.7,345.8 3579.6,344.8 3580.5,346.5 3581.4,346.5 3582.3,345.0 3583.2,346.8 3584.1,346.5 3585.0,345.0 3585.9,344.4 3586.8,346.6 3587.7,346.5 3588.6,344.6 3589.5,346.3 3590.4,346.3 3591.3,345.9 3592.2,346.4 3593.1,346.8 3594.0,345.1 3594.9,346.4 3595.8,346.6 3596.7,345.1 3597.6,346.0 3598.5,346.0 3599.4,346.4 3600.3,345.7 3601.2,344.9 3602.1,344.9 3603.0,345.6 3603.9,344.6 3604.8,346.3 3605.7,346.4 3606.6,344.8 3607.5,345.9 3608.4,345.8 3609.3,344.5 3610.2,346.0 3611.1,346.0 3612.0,344.9 3612.9,344.4 3613.8,344.8 3614.7,346.0 3615.6,345.2 3616.5,346.0 3617.4,344.5 3618.3,344.4 3619.2,344.9 3620.1,346.1 3621.0,344.5 3621.9,344.2 3622.8,345.8 3623.7,344.3 3624.6,345.6 3625.5,344.2 3626.4,344.6 3627.3,345.5 3628.2,346.0 3629.1,344.9 3630.0,345.0 3630.9,344.1 3631.8,344.8 3632.7,344.5 3633.6,345.7 3634.5,345.6 3635.4,345.7 3636.3,345.1 3637.2,345.5 3638.1,344.2 3639.0,344.8 3639.9,344.6 3640.8,344.5 3641.7,345.5 3642.6,344.4 3643.5,344.6 3644.4,344.5 3645.3,345.7 3646.2,345.2 3647.1,344.9 3648.0,344.7 3648.9,345.8 3649.8,345.8 3650.7,344.8 3651.6,345.0 3652.5,345.6 3653.4,344.3 3654.3,344.3 3655.2,344.0 3656.1,344.8 3657.0,345.4 3657.9,344.1 3658.8,344.7 3659.7,345.8 3660.6,344.7 3661.5,344.5 3662.4,345.5 3663.3,345.5 3664.2,344.5 3665.1,343.9 3666.0,345.0 3666.9,345.2 3667.8,345.5 3668.7,345.0 3669.6,344.3 3670.5,344.7 3671.4,344.2 3672.3,344.5 3673.2,344.6 3674.1,345.4 3675.0,345.4 3675.9,345.4 3676.8,344.5 3677.7,345.5 3678.6,343.8 3679.5,345.4 3680.4,344.8 3681.3,345.3 3682.2,344.3 3683.1,345.5 3684.0,343.6 3684.9,345.2 3685.8,345.1 3686.7,344.2 3687.6,345.1 3688.5,343.9 3689.4,344.9 3690.3,344.4 3691.2,344.2 3692.1,343.8 3693.0,345.0 3693.9,344.8 3694.8,343.6 3695.7,345.2 3696.6,343.8 3697.5,344.1 3698.4,344.2 3699.3,344.5 3700.2,345.0 3701.1,345.1 3702.0,344.5 3702.9,344.0 3703.8,343.5 3704.7,343.5 3705.6,344.3 3706.5,344.4 3707.4,344.1 3708.3,345.1 3709.2,344.0 3710.1,343.9 3711.0,344.0 3711.9,343.6 3712.8,344.9 3713.7,344.3 3714.6,344.2 3715.5,344.0 3716.4,343.7 3717.3,343.8 3718.2,344.1 3719.1,344.0 3720.0,344.9 3720.9,344.2 3721.8,343.5 3722.7,343.3 3723.6,343.4 3724.5,343.8 3725.4,344.5 3726.3,344.6 3727.2,343.5 3728.1,344.4 3729.0,343.9 3729.9,344.0 3730.8,344.0 3731.7,343.2 3732.6,343.2 3733.5,344.2 3734.4,344.2 3735.3,343.7 3736.2,344.5 3737.1,344.4 3738.0,343.5 3738.9,343.2 3739.8,343.9 3740.7,344.1 3741.6,343.4 3742.5,343.1 3743.4,343.8 3744.3,343.0 3745.2,344.1 3746.1,344.0 3747.0,343.4 3747.9,343.7 3748.8,343.3 3749.7,343.2 3750.6,343.2 3751.5,344.2 3752.4,343.6 3753.3,344.0 3754.2,343.4 3755.1,344.1 3756.0,343.8 3756.9,343.9 3757.8,343.5 3758.7,343.7 3759.6,343.1 3760.5,344.3 3761.4,343.8 3762.3,343.6 3763.2,343.8 3764.1,343.0 3765.0,343.3 3765.9,343.1 3766.8,344.0 3767.7,342.8 3768.6,343.4 3769.5,344.0 3770.4,343.9 3771.3,343.8 3772.2,343.2 3773.1,343.1 3774.0,343.7 3774.9,343.1 3775.8,343.7 3776.7,343.2 3777.6,343.7 3778.5,343.5 3779.4,343.8 3780.3,344.0 3781.2,343.2 3782.1,344.0 3783.0,342.7 3783.9,343.8 3784.8,342.7 3785.7,343.3 3786.6,343.1 3787.5,343.6 3788.4,343.0 3789.3,342.9 3790.2,343.6 3791.1,343.3 3792.0,343.5 3792.9,343.2 3793.8,342.6 3794.7,343.5 3795.6,342.8 3796.5,343.1 3797.4,342.5 3798.3,342.8 3799.2,343.3 3800.1,343.4 3801.0,343.3 3801.9,343.0 3802.8,343.4 3803.7,343.3 3804.6,342.7 3805.5,343.1 3806.4,343.2 3807.3,343.3 3808.2,342.7 3809.1,342.8 3810.0,342.8 3810.9,342.5 3811.8,342.8 3812.7,343.2 3813.6,343.0 3814.5,342.6 3815.4,343.2 3816.3,342.5 3817.2,343.2 3818.1,342.5 3819.0,342.4 3819.9,342.6 3820.8,342.9 3821.7,342.6 3822.6,343.3 3823.5,343.3 3824.4,342.6 3825.3,343.1 3826.2,343.0 3827.1,342.9 3828.0,342.5 3828.9,343.2 3829.8,343.2 3830.7,342.3 3831.6,342.6 3832.5,342.5 3833.4,342.4 3834.3,342.6 3835.2,343.1 3836.1,342.2 3837.0,343.0 3837.9,342.5 3838.8,342.2 3839.7,343.0 3840.6,342.4 3841.5,342.3 3842.4,342.2 3843.3,342.5 3844.2,342.2 3845.1,342.3 3846.0,342.3 3846.9,342.6 3847.8,342.5 3848.7,342.4 3849.6,342.6 3850.5,342.8 3851.4,342.7 3852.3,342.4 3853.2,342.9 3854.1,342.7 3855.0,342.5 3855.9,342.4 3856.8,342.3 3857.7,342.1 3858.6,342.7 3859.5,342.5 3860.4,342.1 3861.3,342.7 3862.2,342.7 3863.1,342.0 3864.0,342.5 3864.9,342.1 3865.8,342.4 3866.7,342.6 3867.6,342.2 3868.5,342.3 3869.4,342.4 3870.3,342.0 3871.2,342.4 3872.1,342.2 3873.0,342.6 3873.9,342.0 3874.8,342.4 3875.7,341.9 3876.6,342.0 3877.5,341.9 3878.4,341.9 3879.3,342.2 3880.2,341.9 3881.1,342.4 3882.0,341.9 3882.9,342.2 3883.8,342.4 3884.7,341.9 3885.6,341.9 3886.5,342.3 3887.4,342.1 3888.3,342.4 3889.2,341.9 3890.1,342.0 3891.0,342.3 3891.9,341.9" fill="none" stroke="#1cb41c" stroke-width="0.85" stroke-linejoin="round"/>
<polyline points="2750.7,397.5 2751.5,395.7 2752.3,396.3 2753.1,396.9 2753.9,396.3 2754.7,395.9 2755.5,396.8 2756.3,394.9 2757.1,396.0 2757.9,395.0 2758.7,397.5 2759.5,397.1 2760.3,397.1 2761.1,396.8 2761.9,395.9 2762.7,395.4 2763.5,395.7 2764.3,395.3 2765.1,396.0 2765.9,395.8 2766.7,396.7 2767.5,395.7 2768.3,396.3 2769.1,395.2 2769.9,396.2 2770.7,395.4 2771.5,395.8 2772.3,396.0 2773.1,395.7 2773.9,396.0 2774.7,396.7 2775.5,395.1 2776.3,394.2 2777.1,396.9 2777.9,397.8 2778.7,395.4 2779.5,397.0 2780.3,396.6 2781.1,395.9 2781.9,395.0 2782.7,397.7 2783.5,396.2 2784.3,395.1 2785.1,396.4 2785.9,396.2 2786.7,395.4 2787.5,397.7 2788.3,396.3 2789.1,396.0 2789.9,396.2 2790.7,397.6 2791.5,397.8 2792.3,396.0 2793.1,395.5 2793.9,397.0 2794.7,397.3 2795.5,395.5 2796.3,395.1 2797.1,396.5 2797.9,396.6 2798.7,396.1 2799.5,396.0 2800.3,395.8 2801.1,396.1 2801.9,396.4 2802.7,396.0 2803.5,397.4 2804.3,395.6 2805.1,396.0 2805.9,395.8 2806.7,395.7 2807.5,395.2 2808.3,395.6 2809.1,396.0 2809.9,394.7 2810.7,395.9 2811.5,397.0 2812.3,397.1 2813.1,395.5 2813.9,396.3 2814.7,396.1 2815.5,396.8 2816.3,395.4 2817.1,395.2 2817.9,396.7 2818.7,395.4 2819.5,393.8 2820.3,395.8 2821.1,396.0 2821.9,396.1 2822.7,395.7 2823.5,396.6 2824.3,396.6 2825.1,396.5 2825.9,397.6 2826.7,396.4 2827.5,394.5 2828.3,396.2 2829.1,395.6 2829.9,394.9 2830.7,396.0 2831.5,395.4 2832.3,395.9 2833.1,395.5 2833.9,395.1 2834.7,395.7 2835.5,396.1 2836.3,395.6 2837.1,395.2 2837.9,397.2 2838.7,396.7 2839.5,394.0 2840.3,396.4 2841.1,396.3 2841.9,396.9 2842.7,396.7 2843.5,396.0 2844.3,394.9 2845.1,396.2 2845.9,395.1 2846.7,394.4 2847.5,395.4 2848.3,395.3 2849.1,395.1 2849.9,395.3 2850.7,395.5 2851.5,396.0 2852.3,395.0 2853.1,396.5 2853.9,396.6 2854.7,395.3 2855.5,396.4 2856.3,395.3 2857.1,395.7 2857.9,395.4 2858.7,396.5 2859.5,394.6 2860.3,397.4 2861.1,396.1 2861.9,396.1 2862.7,395.9 2863.5,395.3 2864.3,395.0 2865.1,396.3 2865.9,395.6 2866.7,396.4 2867.5,397.5 2868.3,396.1 2869.1,396.6 2869.9,395.8 2870.7,395.4 2871.5,396.1 2872.3,397.5 2873.1,396.6 2873.9,396.3 2874.7,395.5 2875.5,396.0 2876.3,397.2 2877.1,396.2 2877.9,395.2 2878.7,395.6 2879.5,396.4 2880.3,396.4 2881.1,394.6 2881.9,396.2 2882.7,395.7 2883.5,394.2 2884.3,394.8 2885.1,395.8 2885.9,395.2 2886.7,396.2 2887.5,396.2 2888.3,396.0 2889.1,395.7 2889.9,396.4 2890.7,395.0 2891.5,394.4 2892.3,396.3 2893.1,396.9 2893.9,395.6 2894.7,396.8 2895.5,396.6 2896.3,395.5 2897.1,396.3 2897.9,397.1 2898.7,395.5 2899.5,396.4 2900.3,396.4 2901.1,395.5 2901.9,396.8 2902.7,395.6 2903.5,396.7 2904.3,396.2 2905.1,395.6 2905.9,395.9 2906.7,395.3 2907.5,397.7 2908.3,395.4 2909.1,395.5 2909.9,396.9 2910.7,396.6 2911.5,396.5 2912.3,395.2 2913.1,395.3 2913.9,395.9 2914.7,396.2 2915.5,396.7 2916.3,396.7 2917.1,396.3 2917.9,396.6 2918.7,394.8 2919.5,394.9 2920.3,395.4 2921.1,395.9 2921.9,395.5 2922.7,395.7 2923.5,396.1 2924.3,395.6 2925.1,395.9 2925.9,396.8 2926.7,396.4 2927.5,395.8 2928.3,396.1 2929.1,396.4 2929.9,396.2 2930.7,396.7 2931.5,395.0 2932.3,396.8 2933.1,395.3 2933.9,396.5 2934.7,395.0 2935.5,396.8 2936.3,396.6 2937.1,395.5 2937.9,396.5 2938.7,395.7 2939.5,396.9 2940.3,395.9 2941.1,395.7 2941.9,395.3 2942.7,395.9 2943.5,396.4 2944.3,396.5 2945.1,395.5 2945.9,395.7 2946.7,395.2 2947.5,395.5 2948.3,395.9 2949.1,396.3 2949.9,396.6 2950.7,395.6 2951.5,395.1 2952.3,397.2 2953.1,396.0 2953.9,395.7 2954.7,396.1 2955.5,396.0 2956.3,396.5 2957.1,396.4 2957.9,395.1 2958.7,395.7 2959.5,396.5 2960.3,395.8 2961.1,396.6 2961.9,395.2 2962.7,397.1 2963.5,396.3 2964.3,394.9 2965.1,396.8 2965.9,395.3 2966.7,396.2 2967.5,396.1 2968.3,396.3 2969.1,396.5 2969.9,394.6 2970.7,395.8 2971.5,395.3 2972.3,395.6 2973.1,396.1 2973.9,398.1 2974.7,396.0 2975.5,395.3 2976.3,398.0 2977.1,396.6 2977.9,395.9 2978.7,397.5 2979.5,396.8 2980.3,396.7 2981.1,395.0 2981.9,397.2 2982.7,395.9 2983.5,396.3 2984.3,396.4 2985.1,397.3 2985.9,397.1 2986.7,395.9 2987.5,395.7 2988.3,395.4 2989.1,396.0 2989.9,396.3 2990.7,396.2 2991.5,396.0 2992.3,395.5 2993.1,395.5 2993.9,396.3 2994.7,396.7 2995.5,396.5 2996.3,395.8 2997.1,396.5 2997.9,396.9 2998.7,395.5 2999.5,395.3 3000.3,396.7 3001.1,397.4 3001.9,396.4 3002.7,396.3 3003.5,396.0 3004.3,396.9 3005.1,395.1 3005.9,396.1 3006.7,395.8 3007.5,394.4 3008.3,395.8 3009.1,396.0 3009.9,396.1 3010.7,395.9 3011.5,395.8 3012.3,396.4 3013.1,395.0 3013.9,395.2 3014.7,396.4 3015.5,396.5 3016.3,396.7 3017.1,395.1 3017.9,396.9 3018.7,396.7 3019.5,396.2 3020.3,395.3 3021.1,396.6 3021.9,396.9 3022.7,395.8 3023.5,396.4 3024.3,396.4 3025.1,396.7 3025.9,396.5 3026.7,396.5 3027.5,395.1 3028.3,395.7 3029.1,394.9 3029.9,396.8 3030.7,396.6 3031.5,396.4 3032.3,397.4 3033.1,395.4 3033.9,397.1 3034.7,395.4 3035.5,394.7 3036.3,395.7 3037.1,395.7 3037.9,395.8 3038.7,396.0 3039.5,396.3 3040.3,396.5 3041.1,395.5 3041.9,395.2 3042.7,396.5 3043.5,396.9 3044.3,396.7 3045.1,396.4 3045.9,394.7 3046.7,396.5 3047.5,395.6 3048.3,396.8 3049.1,397.0 3049.9,395.7 3050.7,395.3 3051.5,395.8 3052.3,396.4 3053.1,396.4 3053.9,395.3 3054.7,396.3 3055.5,395.4 3056.3,395.6 3057.1,396.8 3057.9,396.0 3058.7,394.4 3059.5,395.3 3060.3,396.9 3061.1,394.8 3061.9,396.8 3062.7,396.1 3063.5,395.0 3064.3,395.6 3065.1,396.5 3065.9,397.0 3066.7,395.1 3067.5,395.9 3068.3,396.3 3069.1,396.7 3069.9,397.8 3070.7,397.3 3071.5,396.3 3072.3,395.1 3073.1,395.8 3073.9,395.3 3074.7,395.8 3075.5,395.7 3076.3,395.9 3077.1,396.3 3077.9,395.8 3078.7,396.7 3079.5,396.9 3080.3,395.1 3081.1,394.9 3081.9,395.4 3082.7,394.4 3083.5,396.1 3084.3,396.0 3085.1,396.1 3085.9,397.3 3086.7,396.5 3087.5,396.8 3088.3,396.1 3089.1,395.6 3089.9,394.4 3090.7,395.7 3091.5,396.0 3092.3,395.2 3093.1,395.4 3093.9,396.1 3094.7,397.3 3095.5,395.7 3096.3,395.7 3097.1,395.4 3097.9,395.9 3098.7,395.1 3099.5,396.2 3100.3,395.3 3101.1,396.8 3101.9,395.2 3102.7,395.1 3103.5,396.3 3104.3,396.3 3105.1,395.1 3105.9,396.1 3106.7,396.0 3107.5,396.9 3108.3,395.3 3109.1,394.5 3109.9,396.1 3110.7,396.4 3111.5,396.5 3112.3,395.7 3113.1,394.6 3113.9,394.3 3114.7,397.7 3115.5,395.9 3116.3,395.8 3117.1,396.2 3117.9,396.2 3118.7,395.4 3119.5,395.7 3120.3,395.9 3121.1,396.8 3121.9,397.4 3122.7,396.8 3123.5,396.5 3124.3,395.2 3125.1,395.4 3125.9,396.2 3126.7,395.4 3127.5,395.6 3128.3,397.9 3129.1,395.7 3129.9,395.8 3130.7,394.6 3131.5,396.3 3132.3,396.2 3133.1,395.8 3133.9,396.3 3134.7,394.1 3135.5,397.0 3136.3,397.0 3137.1,394.4 3137.9,396.1 3138.7,396.5 3139.5,396.6 3140.3,396.1 3141.1,396.9 3141.9,396.3 3142.7,395.6 3143.5,397.1 3144.3,395.1 3145.1,395.6 3145.9,395.6 3146.7,397.2 3147.5,395.6 3148.3,394.9 3149.1,395.2 3149.9,396.2 3150.7,396.0 3151.5,396.2 3152.3,395.0 3153.1,396.2 3153.9,396.6 3154.7,397.4 3155.5,397.1 3156.3,395.0 3157.1,396.4 3157.9,395.2 3158.7,396.3 3159.5,396.5 3160.3,395.8 3161.1,393.8 3161.9,396.1 3162.7,396.1 3163.5,395.6 3164.3,396.6 3165.1,395.7 3165.9,395.8 3166.7,396.4 3167.5,395.4 3168.3,396.6 3169.1,395.6 3169.9,395.8 3170.7,396.4 3171.5,397.0 3172.3,395.8 3173.1,396.1 3173.9,395.8 3174.7,394.8 3175.5,395.7 3176.3,397.8 3177.1,395.8 3177.9,396.6 3178.7,396.4 3179.5,396.9 3180.3,396.0 3181.1,396.6 3181.9,395.8 3182.7,397.8 3183.5,396.3 3184.3,395.9 3185.1,397.0 3185.9,395.4 3186.7,396.8 3187.5,397.7 3188.3,395.3 3189.1,396.4 3189.9,395.6 3190.7,396.1 3191.5,395.9 3192.3,394.4 3193.1,396.9 3193.9,396.0 3194.7,396.7 3195.5,395.5 3196.3,395.7 3197.1,395.7 3197.9,394.9 3198.7,397.4 3199.5,396.9 3200.3,397.0 3201.1,396.5 3201.9,395.8 3202.7,396.3 3203.5,398.3 3204.3,397.2 3205.1,396.3 3205.9,395.2 3206.7,396.5 3207.5,394.1 3208.3,396.8 3209.1,395.6 3209.9,395.9 3210.7,396.9 3211.5,397.2 3212.3,395.9 3213.1,395.3 3213.9,394.7 3214.7,395.2 3215.5,396.5 3216.3,396.3 3217.1,395.6 3217.9,396.1 3218.7,395.9 3219.5,395.0 3220.3,395.8 3221.1,397.0 3221.9,397.3 3222.7,395.6 3223.5,396.2 3224.3,395.1 3225.1,396.5 3225.9,395.9 3226.7,396.0 3227.5,397.0 3228.3,396.7 3229.1,396.4 3229.9,396.4 3230.7,396.5 3231.5,394.6 3232.3,396.3 3233.1,395.7 3233.9,397.3 3234.7,396.0 3235.5,395.4 3236.3,395.6 3237.1,396.8 3237.9,396.1 3238.7,396.1 3239.5,397.0 3240.3,396.5 3241.1,395.9 3241.9,397.0 3242.7,396.5 3243.5,396.4 3244.3,396.3 3245.1,394.0 3245.9,396.8 3246.7,395.7 3247.5,396.6 3248.3,395.6 3249.1,396.1 3249.9,395.0 3250.7,396.7 3251.5,395.4 3252.3,397.2 3253.1,396.1 3253.9,396.3 3254.7,395.4 3255.5,395.4 3256.3,396.3 3257.1,395.8 3257.9,396.0 3258.7,394.9 3259.5,395.7 3260.3,396.3 3261.1,395.0 3261.9,395.2 3262.7,395.2 3263.5,396.1 3264.3,395.6 3265.1,395.1 3265.9,395.6 3266.7,396.2 3267.5,395.1 3268.3,396.2 3269.1,397.9 3269.9,394.5 3270.7,395.4 3271.5,395.8 3272.3,396.2 3273.1,397.0 3273.9,396.0 3274.7,395.4 3275.5,395.0 3276.3,393.4 3277.1,394.6 3277.9,397.1 3278.7,395.0 3279.5,396.4 3280.3,396.3 3281.1,395.6 3281.9,394.8 3282.7,397.8 3283.5,396.6 3284.3,396.3 3285.1,394.8 3285.9,396.2 3286.7,394.8 3287.5,394.7 3288.3,396.0 3289.1,396.0 3289.9,396.2 3290.7,396.1 3291.5,395.8 3292.3,396.1 3293.1,395.0 3293.9,395.8 3294.7,396.4 3295.5,397.4 3296.3,394.4 3297.1,397.0 3297.9,395.3 3298.7,396.8 3299.5,395.4 3300.3,395.8 3301.1,396.0 3301.9,395.9 3302.7,396.0 3303.5,396.7 3304.3,396.7 3305.1,395.4 3305.9,396.6 3306.7,396.1 3307.5,394.9 3308.3,395.1 3309.1,397.0 3309.9,396.8 3310.7,395.3 3311.5,396.6 3312.3,395.3 3313.1,396.4 3313.9,397.7 3314.7,395.9 3315.5,397.1 3316.3,395.4 3317.1,395.9 3317.9,395.6 3318.7,397.4 3319.5,396.3 3320.3,395.5 3321.1,395.1 3321.9,395.8 3322.7,396.5 3323.5,396.8 3324.3,395.6 3325.1,396.7 3325.9,396.1 3326.7,395.8 3327.5,396.2 3328.3,397.6 3329.1,395.8 3329.9,396.0 3330.7,395.9 3331.5,395.7 3332.3,396.2 3333.1,395.8 3333.9,394.7 3334.7,396.3 3335.5,394.7 3336.3,396.1 3337.1,396.1 3337.9,397.2 3338.7,396.8 3339.5,396.4 3340.3,395.2 3341.1,396.1 3341.9,397.5 3342.7,396.5 3343.5,396.5 3344.3,398.1 3345.1,396.0 3345.9,394.9 3346.7,396.7 3347.5,396.3 3348.3,395.1 3349.1,397.3 3349.9,395.9 3350.7,397.7 3351.5,395.1 3352.3,397.1 3353.1,396.6 3353.9,396.1 3354.7,396.7 3355.5,394.8 3356.3,397.9 3357.1,396.7 3357.9,396.3 3358.7,397.8 3359.5,397.9 3360.3,394.8 3361.1,396.0 3361.9,394.7 3362.7,395.8 3363.5,395.6 3364.3,396.7 3365.1,396.0 3365.9,394.8 3366.7,396.5 3367.5,395.6 3368.3,396.7 3369.1,395.0 3369.9,395.3 3370.7,395.7 3371.5,395.7 3372.3,395.9 3373.1,396.5 3373.9,396.4 3374.7,396.2 3375.5,396.2 3376.3,395.7 3377.1,394.8 3377.9,395.6 3378.7,395.7 3379.5,395.8 3380.3,394.6 3381.1,395.6 3381.9,395.6 3382.7,395.3 3383.5,395.7 3384.3,395.9 3385.1,396.4 3385.9,396.7 3386.7,395.2 3387.5,396.4 3388.3,395.8 3389.1,395.9 3389.9,396.9 3390.7,396.6 3391.5,396.2 3392.3,395.2 3393.1,395.8 3393.9,396.8 3394.7,395.5 3395.5,395.4 3396.3,395.2 3397.1,396.2 3397.9,395.3 3398.7,398.1 3399.5,396.0 3400.3,396.1 3401.1,395.6 3401.9,396.4 3402.7,396.3 3403.5,395.8 3404.3,395.7 3405.1,396.9 3405.9,396.1 3406.7,396.6 3407.5,396.0 3408.3,395.6 3409.1,396.3 3409.9,396.6 3410.7,396.0 3411.5,396.0 3412.3,396.7 3413.1,395.4 3413.9,396.4 3414.7,395.9 3415.5,396.1 3416.3,396.6 3417.1,395.0 3417.9,395.9 3418.7,396.0 3419.5,396.2 3420.3,397.6 3421.1,395.5 3421.9,396.1 3422.7,396.7 3423.5,394.6 3424.3,396.6 3425.1,396.6 3425.9,395.7 3426.7,395.9 3427.5,395.6 3428.3,396.9 3429.1,395.5 3429.9,395.1 3430.7,395.5 3431.5,395.5 3432.3,396.1 3433.1,396.1 3433.9,396.8 3434.7,394.7 3435.5,396.2 3436.3,395.8 3437.1,396.1 3437.9,395.5 3438.7,395.7 3439.5,396.4 3440.3,396.9 3441.1,394.9 3441.9,396.4 3442.7,395.4 3443.5,396.5 3444.3,395.8 3445.1,395.0 3445.9,395.5 3446.7,396.1 3447.5,396.7 3448.3,397.1 3449.1,396.8 3449.9,396.2 3450.7,396.4 3451.5,395.8 3452.3,397.1 3453.1,395.4 3453.9,395.3 3454.7,396.8 3455.5,395.0 3456.3,396.2 3457.1,396.9 3457.9,396.3 3458.7,396.5 3459.5,396.2 3460.3,396.2 3461.1,395.1 3461.9,397.3 3462.7,395.8 3463.5,395.7 3464.3,396.2 3465.1,397.0 3465.9,395.8 3466.7,396.0 3467.5,396.8 3468.3,396.5 3469.1,395.8 3469.9,395.8 3470.7,396.1 3471.5,395.4 3472.3,395.2 3473.1,395.5 3473.9,395.0 3474.7,397.5 3475.5,395.4 3476.3,396.5 3477.1,394.6 3477.9,395.6 3478.7,397.3 3479.5,395.9 3480.3,394.8 3481.1,395.7 3481.9,394.8 3482.7,394.6 3483.5,397.2 3484.3,395.8 3485.1,396.2 3485.9,397.0 3486.7,395.5 3487.5,396.2 3488.3,396.1 3489.1,395.5 3489.9,395.8 3490.7,395.2 3491.5,394.9 3492.3,396.5 3493.1,395.6 3493.9,393.8 3494.7,397.3 3495.5,396.0 3496.3,395.9 3497.1,397.1 3497.9,394.2 3498.7,396.1 3499.5,395.3 3500.3,396.2 3501.1,396.8 3501.9,396.1 3502.7,395.4 3503.5,395.9 3504.3,396.7 3505.1,396.5 3505.9,396.4 3506.7,396.2 3507.5,395.3 3508.3,396.2 3509.1,395.1 3509.9,396.0 3510.7,395.7 3511.5,396.3 3512.3,397.0 3513.1,396.1 3513.9,396.6 3514.7,395.9 3515.5,395.6 3516.3,396.5 3517.1,396.0 3517.9,395.1 3518.7,396.0 3519.5,395.9 3520.3,396.3 3521.1,396.4 3521.9,395.5 3522.7,396.6 3523.5,394.5 3524.3,397.3 3525.1,395.1 3525.9,396.4 3526.7,397.0 3527.5,395.8 3528.3,394.8 3529.1,395.2 3529.9,395.9 3530.7,396.2 3531.5,396.9 3532.3,395.8 3533.1,395.8 3533.9,395.9 3534.7,396.0 3535.5,395.3 3536.3,395.6 3537.1,395.5 3537.9,396.6 3538.7,395.6 3539.5,395.7 3540.3,397.6 3541.1,396.1 3541.9,396.6 3542.7,393.9 3543.5,396.2 3544.3,396.4 3545.1,396.3 3545.9,396.1 3546.7,395.7 3547.5,394.9 3548.3,396.7 3549.1,395.7 3549.9,394.7 3550.7,397.2 3551.5,397.1 3552.3,395.1 3553.1,397.1 3553.9,394.4 3554.7,396.3 3555.5,395.4 3556.3,396.1 3557.1,396.5 3557.9,396.7 3558.7,396.4 3559.5,396.1 3560.3,396.7 3561.1,395.3 3561.9,396.3 3562.7,395.7 3563.5,395.2 3564.3,396.1 3565.1,396.5 3565.9,396.4 3566.7,397.1 3567.5,395.4 3568.3,395.0 3569.1,395.9 3569.9,397.2 3570.7,394.6 3571.5,395.8 3572.3,395.9 3573.1,396.3 3573.9,395.7 3574.7,396.0 3575.5,396.4 3576.3,395.0 3577.1,395.9 3577.9,395.2 3578.7,396.2 3579.5,396.8 3580.3,396.9 3581.1,395.4 3581.9,395.8 3582.7,396.9 3583.5,394.5 3584.3,397.9 3585.1,395.0 3585.9,396.7 3586.7,396.3 3587.5,395.5 3588.3,396.2 3589.1,395.9 3589.9,394.4 3590.7,396.6 3591.5,396.7 3592.3,397.5 3593.1,395.7 3593.9,395.7 3594.7,396.1 3595.5,395.1 3596.3,396.2 3597.1,396.1 3597.9,395.5 3598.7,395.6 3599.5,398.1 3600.3,397.0 3601.1,396.1 3601.9,397.0 3602.7,396.7 3603.5,394.5 3604.3,396.8 3605.1,396.3 3605.9,397.5 3606.7,396.0 3607.5,396.2 3608.3,396.3 3609.1,396.2 3609.9,394.5 3610.7,397.3 3611.5,395.3 3612.3,396.9 3613.1,396.9 3613.9,396.2 3614.7,395.7 3615.5,395.9 3616.3,395.3 3617.1,395.6 3617.9,395.3 3618.7,397.2 3619.5,395.9 3620.3,395.6 3621.1,396.2 3621.9,396.2 3622.7,395.9 3623.5,397.1 3624.3,397.9 3625.1,395.6 3625.9,396.3 3626.7,395.7 3627.5,396.3 3628.3,394.8 3629.1,393.6 3629.9,396.4 3630.7,395.7 3631.5,395.8 3632.3,396.1 3633.1,396.4 3633.9,395.2 3634.7,395.3 3635.5,396.1 3636.3,395.9 3637.1,398.0 3637.9,396.1 3638.7,396.0 3639.5,396.6 3640.3,396.2 3641.1,395.7 3641.9,396.4 3642.7,394.5 3643.5,395.1 3644.3,395.6 3645.1,397.0 3645.9,396.0 3646.7,395.0 3647.5,395.2 3648.3,395.6 3649.1,396.0 3649.9,396.2 3650.7,397.1 3651.5,396.3 3652.3,396.2 3653.1,396.0 3653.9,397.3 3654.7,395.3 3655.5,395.8 3656.3,397.0 3657.1,395.8 3657.9,396.1 3658.7,397.0 3659.5,396.4 3660.3,395.4 3661.1,395.1 3661.9,396.4 3662.7,397.1 3663.5,395.9 3664.3,396.4 3665.1,396.9 3665.9,395.6 3666.7,396.8 3667.5,396.0 3668.3,395.9 3669.1,395.3 3669.9,396.0 3670.7,394.9 3671.5,395.2 3672.3,395.0 3673.1,396.2 3673.9,395.9 3674.7,396.6 3675.5,395.1 3676.3,395.9 3677.1,396.2 3677.9,397.3 3678.7,395.3 3679.5,396.0 3680.3,396.0 3681.1,397.4 3681.9,397.4 3682.7,395.0 3683.5,396.0 3684.3,396.3 3685.1,395.9 3685.9,395.9 3686.7,396.7 3687.5,395.1 3688.3,395.6 3689.1,396.7 3689.9,395.8 3690.7,395.6 3691.5,395.1 3692.3,397.0 3693.1,395.6 3693.9,395.1 3694.7,396.4 3695.5,396.3 3696.3,396.0 3697.1,396.2 3697.9,395.4 3698.7,395.2 3699.5,396.8 3700.3,395.6 3701.1,396.7 3701.9,395.6 3702.7,395.4 3703.5,395.9 3704.3,394.3 3705.1,396.4 3705.9,396.0 3706.7,396.0 3707.5,395.7 3708.3,396.4 3709.1,395.4 3709.9,395.4 3710.7,394.3 3711.5,396.3 3712.3,396.0 3713.1,395.7 3713.9,397.1 3714.7,396.2 3715.5,395.1 3716.3,395.4 3717.1,395.8 3717.9,396.0 3718.7,394.6 3719.5,396.4 3720.3,395.8 3721.1,395.9 3721.9,397.2 3722.7,397.1 3723.5,395.6 3724.3,395.9 3725.1,395.5 3725.9,394.4 3726.7,396.7 3727.5,395.2 3728.3,396.1 3729.1,395.7 3729.9,394.7 3730.7,396.3 3731.5,395.8 3732.3,396.4 3733.1,396.8 3733.9,395.1 3734.7,396.3 3735.5,396.0 3736.3,394.3 3737.1,395.3 3737.9,394.9 3738.7,395.0 3739.5,396.8 3740.3,396.6 3741.1,396.3 3741.9,396.6 3742.7,396.5 3743.5,396.7 3744.3,397.1 3745.1,396.3 3745.9,395.0 3746.7,394.7 3747.5,396.0 3748.3,395.7 3749.1,396.6 3749.9,395.3 3750.7,396.8 3751.5,395.7 3752.3,397.0 3753.1,396.6 3753.9,397.0 3754.7,397.9 3755.5,394.4 3756.3,395.6 3757.1,395.3 3757.9,396.0 3758.7,395.4 3759.5,395.0 3760.3,395.4 3761.1,396.1 3761.9,395.0 3762.7,396.6 3763.5,396.1 3764.3,396.4 3765.1,394.9 3765.9,396.1 3766.7,396.5 3767.5,396.2 3768.3,396.6 3769.1,395.9 3769.9,396.1 3770.7,395.4 3771.5,396.7 3772.3,396.4 3773.1,396.9 3773.9,395.0 3774.7,397.1 3775.5,396.3 3776.3,395.4 3777.1,395.4 3777.9,395.5 3778.7,395.2 3779.5,396.5 3780.3,397.1 3781.1,396.4 3781.9,396.5 3782.7,396.6 3783.5,395.2 3784.3,394.8 3785.1,395.9 3785.9,395.3 3786.7,396.0 3787.5,395.8 3788.3,395.9 3789.1,395.9 3789.9,396.2 3790.7,397.6 3791.5,396.0 3792.3,395.7 3793.1,395.6 3793.9,396.4 3794.7,395.5 3795.5,396.4 3796.3,395.0 3797.1,395.0 3797.9,395.2 3798.7,395.8 3799.5,397.4 3800.3,394.8 3801.1,395.7 3801.9,396.3 3802.7,395.5 3803.5,395.4 3804.3,396.4 3805.1,397.4 3805.9,396.7 3806.7,395.7 3807.5,395.2 3808.3,394.5 3809.1,395.6 3809.9,396.6 3810.7,396.3 3811.5,395.6 3812.3,395.1 3813.1,395.4 3813.9,396.0 3814.7,396.2 3815.5,397.1 3816.3,395.0 3817.1,397.5 3817.9,397.6 3818.7,394.9 3819.5,395.9 3820.3,396.9 3821.1,396.6 3821.9,396.4 3822.7,396.8 3823.5,396.4 3824.3,397.2 3825.1,395.7 3825.9,395.6 3826.7,396.5 3827.5,396.2 3828.3,395.9 3829.1,396.8 3829.9,394.8 3830.7,397.7 3831.5,396.8 3832.3,395.5 3833.1,395.4 3833.9,395.1 3834.7,396.5 3835.5,394.5 3836.3,395.7 3837.1,396.5 3837.9,395.6 3838.7,397.3 3839.5,396.1 3840.3,395.3 3841.1,395.1 3841.9,396.3 3842.7,396.1 3843.5,396.6 3844.3,395.6 3845.1,394.0 3845.9,396.3 3846.7,396.4 3847.5,397.0 3848.3,396.9 3849.1,396.4 3849.9,396.0 3850.7,395.6 3851.5,396.1 3852.3,394.0 3853.1,396.6 3853.9,394.8 3854.7,397.1 3855.5,395.6 3856.3,394.7 3857.1,395.6 3857.9,396.4 3858.7,395.0 3859.5,395.8 3860.3,395.6 3861.1,395.6 3861.9,396.6 3862.7,396.8 3863.5,395.0 3864.3,395.4 3865.1,398.3 3865.9,396.2 3866.7,396.1 3867.5,395.9 3868.3,396.3 3869.1,396.7 3869.9,395.8 3870.7,394.9 3871.5,397.0 3872.3,395.0 3873.1,395.8 3873.9,395.2 3874.7,396.3 3875.5,396.6 3876.3,395.8 3877.1,395.2 3877.9,395.9 3878.7,396.3 3879.5,396.3 3880.3,394.7 3881.1,395.9 3881.9,395.8 3882.7,396.1 3883.5,396.4 3884.3,395.8 3885.1,396.2 3885.9,395.8 3886.7,395.8 3887.5,395.7 3888.3,395.9 3889.1,396.8 3889.9,396.0 3890.7,395.2 3891.5,395.3" fill="none" stroke="#dcec28" stroke-width="1.0" stroke-linejoin="round"/>
<line x1="2750.70" y1="412.20" x2="3892.30" y2="412.20" stroke="#78acf0" stroke-width="0.9" />
<line x1="2750.70" y1="424.00" x2="3892.30" y2="424.00" stroke="#3878e8" stroke-width="1.1" />
<line x1="2750.70" y1="449.00" x2="3892.30" y2="449.00" stroke="#f0f0f0" stroke-width="0.9" />
<polyline points="2750.7,478.6 2751.4,477.6 2752.1,478.1 2752.8,478.7 2753.5,478.0 2754.2,478.9 2754.9,478.9 2755.6,477.4 2756.3,479.2 2757.0,479.4 2757.7,478.5 2758.4,477.0 2759.1,479.6 2759.8,477.9 2760.5,479.0 2761.2,477.8 2761.9,479.1 2762.6,478.0 2763.3,479.4 2764.0,477.1 2764.7,478.9 2765.4,478.0 2766.1,479.1 2766.8,477.0 2767.5,477.8 2768.2,477.7 2768.9,477.5 2769.6,478.5 2770.3,478.4 2771.0,478.5 2771.7,478.6 2772.4,478.7 2773.1,479.3 2773.8,477.3 2774.5,479.7 2775.2,478.3 2775.9,478.8 2776.6,478.4 2777.3,478.6 2778.0,477.8 2778.7,477.2 2779.4,478.2 2780.1,479.7 2780.8,477.8 2781.5,477.4 2782.2,477.3 2782.9,477.5 2783.6,477.9 2784.3,478.3 2785.0,476.9 2785.7,479.7 2786.4,477.4 2787.1,479.0 2787.8,479.4 2788.5,478.9 2789.2,478.7 2789.9,477.6 2790.6,477.5 2791.3,478.9 2792.0,478.2 2792.7,478.7 2793.4,479.0 2794.1,479.1 2794.8,476.2 2795.5,478.1 2796.2,479.8 2796.9,477.8 2797.6,479.6 2798.3,477.7 2799.0,478.6 2799.7,478.3 2800.4,479.8 2801.1,478.0 2801.8,477.4 2802.5,477.5 2803.2,477.4 2803.9,478.5 2804.6,478.8 2805.3,479.0 2806.0,478.1 2806.7,478.6 2807.4,478.9 2808.1,477.4 2808.8,478.7 2809.5,477.7 2810.2,477.6 2810.9,477.9 2811.6,478.5 2812.3,477.7 2813.0,477.6 2813.7,477.4 2814.4,478.1 2815.1,478.5 2815.8,477.2 2816.5,478.3 2817.2,478.4 2817.9,477.7 2818.6,478.5 2819.3,478.8 2820.0,478.4 2820.7,477.6 2821.4,478.1 2822.1,478.0 2822.8,479.3 2823.5,478.8 2824.2,477.8 2824.9,478.2 2825.6,476.3 2826.3,478.5 2827.0,477.4 2827.7,478.8 2828.4,477.4 2829.1,478.7 2829.8,479.8 2830.5,478.6 2831.2,477.6 2831.9,477.8 2832.6,478.1 2833.3,478.7 2834.0,479.6 2834.7,477.6 2835.4,477.4 2836.1,479.0 2836.8,477.7 2837.5,478.0 2838.2,479.5 2838.9,478.5 2839.6,478.7 2840.3,479.1 2841.0,478.4 2841.7,478.2 2842.4,478.8 2843.1,479.2 2843.8,476.3 2844.5,476.6 2845.2,477.7 2845.9,477.4 2846.6,480.2 2847.3,478.4 2848.0,476.6 2848.7,478.3 2849.4,479.7 2850.1,478.6 2850.8,477.6 2851.5,478.3 2852.2,477.9 2852.9,478.4 2853.6,477.7 2854.3,477.9 2855.0,478.1 2855.7,477.7 2856.4,477.8 2857.1,477.2 2857.8,477.7 2858.5,476.3 2859.2,477.9 2859.9,479.4 2860.6,476.8 2861.3,479.2 2862.0,478.8 2862.7,477.0 2863.4,477.7 2864.1,477.8 2864.8,480.0 2865.5,477.0 2866.2,478.9 2866.9,478.0 2867.6,478.7 2868.3,477.1 2869.0,479.0 2869.7,477.0 2870.4,477.4 2871.1,478.4 2871.8,478.5 2872.5,477.1 2873.2,476.6 2873.9,477.8 2874.6,478.3 2875.3,478.2 2876.0,477.8 2876.7,478.3 2877.4,478.4 2878.1,477.9 2878.8,478.6 2879.5,477.8 2880.2,479.1 2880.9,479.2 2881.6,477.8 2882.3,477.5 2883.0,477.4 2883.7,477.6 2884.4,479.1 2885.1,477.9 2885.8,477.3 2886.5,478.0 2887.2,477.2 2887.9,478.8 2888.6,479.1 2889.3,479.0 2890.0,479.4 2890.7,477.6 2891.4,477.5 2892.1,478.0 2892.8,478.5 2893.5,478.4 2894.2,476.6 2894.9,477.8 2895.6,478.5 2896.3,477.8 2897.0,478.2 2897.7,476.7 2898.4,476.6 2899.1,478.4 2899.8,478.5 2900.5,478.9 2901.2,476.9 2901.9,478.1 2902.6,477.6 2903.3,478.4 2904.0,478.7 2904.7,477.6 2905.4,477.7 2906.1,478.5 2906.8,477.0 2907.5,478.3 2908.2,477.4 2908.9,479.1 2909.6,478.1 2910.3,478.2 2911.0,478.8 2911.7,478.0 2912.4,476.3 2913.1,477.6 2913.8,478.3 2914.5,478.5 2915.2,478.3 2915.9,478.6 2916.6,478.8 2917.3,477.4 2918.0,478.8 2918.7,478.4 2919.4,477.7 2920.1,478.2 2920.8,477.6 2921.5,479.8 2922.2,477.7 2922.9,478.4 2923.6,477.9 2924.3,478.0 2925.0,477.1 2925.7,478.1 2926.4,479.1 2927.1,478.7 2927.8,477.7 2928.5,479.4 2929.2,476.9 2929.9,477.0 2930.6,477.8 2931.3,477.9 2932.0,478.7 2932.7,479.3 2933.4,478.3 2934.1,477.9 2934.8,477.6 2935.5,478.5 2936.2,476.6 2936.9,478.5 2937.6,477.0 2938.3,477.7 2939.0,478.3 2939.7,477.6 2940.4,477.6 2941.1,477.7 2941.8,477.2 2942.5,478.4 2943.2,478.0 2943.9,477.8 2944.6,478.4 2945.3,477.8 2946.0,477.6 2946.7,479.6 2947.4,479.0 2948.1,478.1 2948.8,478.4 2949.5,478.1 2950.2,478.7 2950.9,478.1 2951.6,479.5 2952.3,478.5 2953.0,478.9 2953.7,479.3 2954.4,478.6 2955.1,478.2 2955.8,478.0 2956.5,478.5 2957.2,477.5 2957.9,478.3 2958.6,478.1 2959.3,477.3 2960.0,479.7 2960.7,477.9 2961.4,479.0 2962.1,479.8 2962.8,479.0 2963.5,477.6 2964.2,477.7 2964.9,478.1 2965.6,478.0 2966.3,478.7 2967.0,478.6 2967.7,479.2 2968.4,477.6 2969.1,479.4 2969.8,476.9 2970.5,477.5 2971.2,479.5 2971.9,479.0 2972.6,477.1 2973.3,478.1 2974.0,478.3 2974.7,479.4 2975.4,477.1 2976.1,478.9 2976.8,477.8 2977.5,478.0 2978.2,477.8 2978.9,479.5 2979.6,479.3 2980.3,478.3 2981.0,477.0 2981.7,477.8 2982.4,477.8 2983.1,479.0 2983.8,476.9 2984.5,478.4 2985.2,479.1 2985.9,478.6 2986.6,478.1 2987.3,479.3 2988.0,478.2 2988.7,478.7 2989.4,478.4 2990.1,479.9 2990.8,477.1 2991.5,479.4 2992.2,478.1 2992.9,477.6 2993.6,478.1 2994.3,478.2 2995.0,479.2 2995.7,477.7 2996.4,478.9 2997.1,478.8 2997.8,477.0 2998.5,478.2 2999.2,477.8 2999.9,479.9 3000.6,478.0 3001.3,478.0 3002.0,478.9 3002.7,476.7 3003.4,477.8 3004.1,479.4 3004.8,479.3 3005.5,476.9 3006.2,479.6 3006.9,478.9 3007.6,478.2 3008.3,479.6 3009.0,477.9 3009.7,477.4 3010.4,479.4 3011.1,477.4 3011.8,480.2 3012.5,478.1 3013.2,477.0 3013.9,477.6 3014.6,477.8 3015.3,477.5 3016.0,477.2 3016.7,478.2 3017.4,478.3 3018.1,478.8 3018.8,479.1 3019.5,476.9 3020.2,477.8 3020.9,477.0 3021.6,477.2 3022.3,478.1 3023.0,478.2 3023.7,478.1 3024.4,476.2 3025.1,478.9 3025.8,478.4 3026.5,479.1 3027.2,478.7 3027.9,478.5 3028.6,478.3 3029.3,478.0 3030.0,478.6 3030.7,476.8 3031.4,478.6 3032.1,477.7 3032.8,478.9 3033.5,477.9 3034.2,476.3 3034.9,478.8 3035.6,477.0 3036.3,477.9 3037.0,478.3 3037.7,478.2 3038.4,478.2 3039.1,478.6 3039.8,478.5 3040.5,477.7 3041.2,479.4 3041.9,477.9 3042.6,478.7 3043.3,479.4 3044.0,477.8 3044.7,479.1 3045.4,479.5 3046.1,478.9 3046.8,478.4 3047.5,477.2 3048.2,477.9 3048.9,477.5 3049.6,478.7 3050.3,478.7 3051.0,478.1 3051.7,477.2 3052.4,478.6 3053.1,478.6 3053.8,478.1 3054.5,478.2 3055.2,479.0 3055.9,478.4 3056.6,479.3 3057.3,479.5 3058.0,479.1 3058.7,479.2 3059.4,478.4 3060.1,477.5 3060.8,475.8 3061.5,477.6 3062.2,477.6 3062.9,477.7 3063.6,478.8 3064.3,478.1 3065.0,478.9 3065.7,478.0 3066.4,477.6 3067.1,478.5 3067.8,477.2 3068.5,476.8 3069.2,478.0 3069.9,477.7 3070.6,479.5 3071.3,478.1 3072.0,476.6 3072.7,478.1 3073.4,479.0 3074.1,478.9 3074.8,478.5 3075.5,476.8 3076.2,478.1 3076.9,477.9 3077.6,477.6 3078.3,478.3 3079.0,477.6 3079.7,477.7 3080.4,477.2 3081.1,478.5 3081.8,476.8 3082.5,477.3 3083.2,478.1 3083.9,478.8 3084.6,478.4 3085.3,478.6 3086.0,479.2 3086.7,476.7 3087.4,478.7 3088.1,478.7 3088.8,479.5 3089.5,477.3 3090.2,480.7 3090.9,477.9 3091.6,478.1 3092.3,478.5 3093.0,478.2 3093.7,479.1 3094.4,478.8 3095.1,478.3 3095.8,477.0 3096.5,478.4 3097.2,478.4 3097.9,478.5 3098.6,478.0 3099.3,478.5 3100.0,478.5 3100.7,478.5 3101.4,478.7 3102.1,476.6 3102.8,479.6 3103.5,478.6 3104.2,478.8 3104.9,477.2 3105.6,477.7 3106.3,479.6 3107.0,478.4 3107.7,478.3 3108.4,478.7 3109.1,478.0 3109.8,479.4 3110.5,477.5 3111.2,478.5 3111.9,478.3 3112.6,477.9 3113.3,477.8 3114.0,477.6 3114.7,477.2 3115.4,478.3 3116.1,479.1 3116.8,478.6 3117.5,479.8 3118.2,477.4 3118.9,477.3 3119.6,478.0 3120.3,478.0 3121.0,479.2 3121.7,477.3 3122.4,477.1 3123.1,478.1 3123.8,476.9 3124.5,478.3 3125.2,477.6 3125.9,478.1 3126.6,477.6 3127.3,478.1 3128.0,479.2 3128.7,478.2 3129.4,479.1 3130.1,477.3 3130.8,478.4 3131.5,479.1 3132.2,477.3 3132.9,477.7 3133.6,477.3 3134.3,478.4 3135.0,477.6 3135.7,476.7 3136.4,476.8 3137.1,478.1 3137.8,478.0 3138.5,477.8 3139.2,478.2 3139.9,478.9 3140.6,477.6 3141.3,478.9 3142.0,477.4 3142.7,480.9 3143.4,478.1 3144.1,477.4 3144.8,477.6 3145.5,476.5 3146.2,478.8 3146.9,479.1 3147.6,479.0 3148.3,478.0 3149.0,479.2 3149.7,477.2 3150.4,478.0 3151.1,478.6 3151.8,478.5 3152.5,477.4 3153.2,477.7 3153.9,478.9 3154.6,478.0 3155.3,476.5 3156.0,479.4 3156.7,477.5 3157.4,478.5 3158.1,478.9 3158.8,478.7 3159.5,478.2 3160.2,477.9 3160.9,478.6 3161.6,477.8 3162.3,478.3 3163.0,477.7 3163.7,477.5 3164.4,478.2 3165.1,479.4 3165.8,478.1 3166.5,478.4 3167.2,478.9 3167.9,477.1 3168.6,478.7 3169.3,477.7 3170.0,478.1 3170.7,479.4 3171.4,479.5 3172.1,479.9 3172.8,477.6 3173.5,477.4 3174.2,478.8 3174.9,478.4 3175.6,476.2 3176.3,479.2 3177.0,478.9 3177.7,479.0 3178.4,480.1 3179.1,479.2 3179.8,478.2 3180.5,476.7 3181.2,478.2 3181.9,477.7 3182.6,478.2 3183.3,478.4 3184.0,477.9 3184.7,478.1 3185.4,478.4 3186.1,478.7 3186.8,479.4 3187.5,477.5 3188.2,477.7 3188.9,480.3 3189.6,478.4 3190.3,478.6 3191.0,477.1 3191.7,479.2 3192.4,479.3 3193.1,479.0 3193.8,476.8 3194.5,477.8 3195.2,478.1 3195.9,478.4 3196.6,479.2 3197.3,478.9 3198.0,476.8 3198.7,478.1 3199.4,478.4 3200.1,478.8 3200.8,478.6 3201.5,479.7 3202.2,478.1 3202.9,477.8 3203.6,478.2 3204.3,478.0 3205.0,477.6 3205.7,478.3 3206.4,478.3 3207.1,476.9 3207.8,478.0 3208.5,477.7 3209.2,479.3 3209.9,478.5 3210.6,478.2 3211.3,478.1 3212.0,479.1 3212.7,476.7 3213.4,477.6 3214.1,478.9 3214.8,477.1 3215.5,476.7 3216.2,477.6 3216.9,477.4 3217.6,478.3 3218.3,477.3 3219.0,479.2 3219.7,478.4 3220.4,477.6 3221.1,478.6 3221.8,477.8 3222.5,478.5 3223.2,477.7 3223.9,479.4 3224.6,478.9 3225.3,477.6 3226.0,478.4 3226.7,477.9 3227.4,476.9 3228.1,478.1 3228.8,478.4 3229.5,477.4 3230.2,479.2 3230.9,480.0 3231.6,477.3 3232.3,477.5 3233.0,478.0 3233.7,478.5 3234.4,477.5 3235.1,477.9 3235.8,479.1 3236.5,477.4 3237.2,478.2 3237.9,477.2 3238.6,478.2 3239.3,477.8 3240.0,479.3 3240.7,478.2 3241.4,477.8 3242.1,477.9 3242.8,479.3 3243.5,478.9 3244.2,478.0 3244.9,477.0 3245.6,478.2 3246.3,479.1 3247.0,478.3 3247.7,477.1 3248.4,478.5 3249.1,478.0 3249.8,478.2 3250.5,478.1 3251.2,477.5 3251.9,477.5 3252.6,478.9 3253.3,478.6 3254.0,477.4 3254.7,476.8 3255.4,479.0 3256.1,478.6 3256.8,478.3 3257.5,477.8 3258.2,479.7 3258.9,477.0 3259.6,477.9 3260.3,478.7 3261.0,478.5 3261.7,478.6 3262.4,477.1 3263.1,478.8 3263.8,479.1 3264.5,477.8 3265.2,479.0 3265.9,478.0 3266.6,478.2 3267.3,478.2 3268.0,478.1 3268.7,478.3 3269.4,479.2 3270.1,479.3 3270.8,478.7 3271.5,478.6 3272.2,477.2 3272.9,478.0 3273.6,478.6 3274.3,478.3 3275.0,477.8 3275.7,477.5 3276.4,479.0 3277.1,478.7 3277.8,476.0 3278.5,480.5 3279.2,478.7 3279.9,478.3 3280.6,479.1 3281.3,478.7 3282.0,479.5 3282.7,477.9 3283.4,479.0 3284.1,478.8 3284.8,476.8 3285.5,479.9 3286.2,477.9 3286.9,477.2 3287.6,478.2 3288.3,479.1 3289.0,477.4 3289.7,478.1 3290.4,477.9 3291.1,478.1 3291.8,476.1 3292.5,479.3 3293.2,477.4 3293.9,478.8 3294.6,478.2 3295.3,476.7 3296.0,478.1 3296.7,477.4 3297.4,478.1 3298.1,477.7 3298.8,478.1 3299.5,478.1 3300.2,478.4 3300.9,478.7 3301.6,477.4 3302.3,479.2 3303.0,479.8 3303.7,478.4 3304.4,479.8 3305.1,479.3 3305.8,479.2 3306.5,477.9 3307.2,479.2 3307.9,476.6 3308.6,476.7 3309.3,478.7 3310.0,479.6 3310.7,478.5 3311.4,477.4 3312.1,477.1 3312.8,478.4 3313.5,478.5 3314.2,477.1 3314.9,478.0 3315.6,478.0 3316.3,477.7 3317.0,476.3 3317.7,477.3 3318.4,478.2 3319.1,479.7 3319.8,479.4 3320.5,477.9 3321.2,477.4 3321.9,478.5 3322.6,477.8 3323.3,478.3 3324.0,478.8 3324.7,478.5 3325.4,479.0 3326.1,479.7 3326.8,477.1 3327.5,479.4 3328.2,476.6 3328.9,477.5 3329.6,479.2 3330.3,477.4 3331.0,477.6 3331.7,478.4 3332.4,477.6 3333.1,477.9 3333.8,478.3 3334.5,478.0 3335.2,477.7 3335.9,477.6 3336.6,477.3 3337.3,478.7 3338.0,480.7 3338.7,477.9 3339.4,476.9 3340.1,479.8 3340.8,479.1 3341.5,477.9 3342.2,477.7 3342.9,478.0 3343.6,478.4 3344.3,477.3 3345.0,478.3 3345.7,476.4 3346.4,477.3 3347.1,477.3 3347.8,477.8 3348.5,478.1 3349.2,477.9 3349.9,478.3 3350.6,479.1 3351.3,480.2 3352.0,477.9 3352.7,478.5 3353.4,477.9 3354.1,478.3 3354.8,477.7 3355.5,477.8 3356.2,478.4 3356.9,479.3 3357.6,478.3 3358.3,478.1 3359.0,478.0 3359.7,477.2 3360.4,477.4 3361.1,478.3 3361.8,478.9 3362.5,478.3 3363.2,477.5 3363.9,478.1 3364.6,478.9 3365.3,478.2 3366.0,479.0 3366.7,477.0 3367.4,478.5 3368.1,477.3 3368.8,476.7 3369.5,478.2 3370.2,478.6 3370.9,478.6 3371.6,479.1 3372.3,478.3 3373.0,476.3 3373.7,478.8 3374.4,478.9 3375.1,477.9 3375.8,477.8 3376.5,478.2 3377.2,478.2 3377.9,477.2 3378.6,479.0 3379.3,479.6 3380.0,478.7 3380.7,478.3 3381.4,475.5 3382.1,478.6 3382.8,478.6 3383.5,478.7 3384.2,478.4 3384.9,477.5 3385.6,478.3 3386.3,478.1 3387.0,478.3 3387.7,478.9 3388.4,478.4 3389.1,477.9 3389.8,477.4 3390.5,476.7 3391.2,479.6 3391.9,478.0 3392.6,479.1 3393.3,478.5 3394.0,478.3 3394.7,478.6 3395.4,478.3 3396.1,479.5 3396.8,477.8 3397.5,478.0 3398.2,478.1 3398.9,478.5 3399.6,479.4 3400.3,477.6 3401.0,476.2 3401.7,478.6 3402.4,478.7 3403.1,478.1 3403.8,478.2 3404.5,478.7 3405.2,477.5 3405.9,477.4 3406.6,476.8 3407.3,478.0 3408.0,477.5 3408.7,478.1 3409.4,477.2 3410.1,476.5 3410.8,479.1 3411.5,478.5 3412.2,479.0 3412.9,479.2 3413.6,476.8 3414.3,478.8 3415.0,477.2 3415.7,476.4 3416.4,477.3 3417.1,477.7 3417.8,479.6 3418.5,478.0 3419.2,478.0 3419.9,478.5 3420.6,478.5 3421.3,478.1 3422.0,479.9 3422.7,477.3 3423.4,477.2 3424.1,476.5 3424.8,477.2 3425.5,477.4 3426.2,477.7 3426.9,477.9 3427.6,479.4 3428.3,478.8 3429.0,477.8 3429.7,478.3 3430.4,477.6 3431.1,478.0 3431.8,478.1 3432.5,479.8 3433.2,477.2 3433.9,477.3 3434.6,478.5 3435.3,477.4 3436.0,477.4 3436.7,478.5 3437.4,477.3 3438.1,479.3 3438.8,478.7 3439.5,477.8 3440.2,478.1 3440.9,477.7 3441.6,479.4 3442.3,478.3 3443.0,478.3 3443.7,477.5 3444.4,479.5 3445.1,478.2 3445.8,477.6 3446.5,479.4 3447.2,478.4 3447.9,477.8 3448.6,478.9 3449.3,477.8 3450.0,478.1 3450.7,479.0 3451.4,477.2 3452.1,478.0 3452.8,478.1 3453.5,478.5 3454.2,477.3 3454.9,477.3 3455.6,477.9 3456.3,477.4 3457.0,478.3 3457.7,478.1 3458.4,478.3 3459.1,478.3 3459.8,477.3 3460.5,477.9 3461.2,478.3 3461.9,479.2 3462.6,478.4 3463.3,478.2 3464.0,479.8 3464.7,477.8 3465.4,479.3 3466.1,478.7 3466.8,477.2 3467.5,478.1 3468.2,478.8 3468.9,477.2 3469.6,479.3 3470.3,477.8 3471.0,478.5 3471.7,478.0 3472.4,478.5 3473.1,477.6 3473.8,479.4 3474.5,477.5 3475.2,479.5 3475.9,477.9 3476.6,477.4 3477.3,478.8 3478.0,478.3 3478.7,477.9 3479.4,477.2 3480.1,477.9 3480.8,478.1 3481.5,477.5 3482.2,477.2 3482.9,477.4 3483.6,477.3 3484.3,479.0 3485.0,478.8 3485.7,477.8 3486.4,477.3 3487.1,478.0 3487.8,478.5 3488.5,477.7 3489.2,478.0 3489.9,479.0 3490.6,477.9 3491.3,477.8 3492.0,479.1 3492.7,478.1 3493.4,478.1 3494.1,477.4 3494.8,479.0 3495.5,478.3 3496.2,477.9 3496.9,478.0 3497.6,479.3 3498.3,478.1 3499.0,478.0 3499.7,478.2 3500.4,478.2 3501.1,478.9 3501.8,477.9 3502.5,477.8 3503.2,477.6 3503.9,478.3 3504.6,477.1 3505.3,477.7 3506.0,476.9 3506.7,478.1 3507.4,478.0 3508.1,478.0 3508.8,477.7 3509.5,477.4 3510.2,478.3 3510.9,476.3 3511.6,477.3 3512.3,479.5 3513.0,478.3 3513.7,479.4 3514.4,479.7 3515.1,478.3 3515.8,477.4 3516.5,478.5 3517.2,477.4 3517.9,478.2 3518.6,478.4 3519.3,479.4 3520.0,478.0 3520.7,478.0 3521.4,478.0 3522.1,480.0 3522.8,478.1 3523.5,478.9 3524.2,477.5 3524.9,477.8 3525.6,480.4 3526.3,477.5 3527.0,478.6 3527.7,478.6 3528.4,478.6 3529.1,479.0 3529.8,477.9 3530.5,479.4 3531.2,478.4 3531.9,478.0 3532.6,478.6 3533.3,478.3 3534.0,478.0 3534.7,478.6 3535.4,477.5 3536.1,478.5 3536.8,477.9 3537.5,476.1 3538.2,479.0 3538.9,478.1 3539.6,477.9 3540.3,477.9 3541.0,476.9 3541.7,477.1 3542.4,478.5 3543.1,477.9 3543.8,479.1 3544.5,479.7 3545.2,477.8 3545.9,476.9 3546.6,479.2 3547.3,478.7 3548.0,479.5 3548.7,478.4 3549.4,478.4 3550.1,477.5 3550.8,479.5 3551.5,478.2 3552.2,479.3 3552.9,478.2 3553.6,477.7 3554.3,478.7 3555.0,479.0 3555.7,476.3 3556.4,477.8 3557.1,478.6 3557.8,479.0 3558.5,478.2 3559.2,477.6 3559.9,478.4 3560.6,477.8 3561.3,476.0 3562.0,476.7 3562.7,478.5 3563.4,477.5 3564.1,478.7 3564.8,478.9 3565.5,476.2 3566.2,478.2 3566.9,477.0 3567.6,479.0 3568.3,476.6 3569.0,479.1 3569.7,477.9 3570.4,478.1 3571.1,478.3 3571.8,477.5 3572.5,478.1 3573.2,480.7 3573.9,478.2 3574.6,477.5 3575.3,479.9 3576.0,479.0 3576.7,478.3 3577.4,478.5 3578.1,477.0 3578.8,477.8 3579.5,477.4 3580.2,479.5 3580.9,479.0 3581.6,478.3 3582.3,477.3 3583.0,476.9 3583.7,477.7 3584.4,477.3 3585.1,478.2 3585.8,476.9 3586.5,478.3 3587.2,478.1 3587.9,477.5 3588.6,478.3 3589.3,477.4 3590.0,477.8 3590.7,477.5 3591.4,479.7 3592.1,477.1 3592.8,478.3 3593.5,477.4 3594.2,477.7 3594.9,478.9 3595.6,478.0 3596.3,478.1 3597.0,476.4 3597.7,477.7 3598.4,479.8 3599.1,478.9 3599.8,475.7 3600.5,477.0 3601.2,478.0 3601.9,476.9 3602.6,478.2 3603.3,477.4 3604.0,479.4 3604.7,479.3 3605.4,479.1 3606.1,477.3 3606.8,478.4 3607.5,479.1 3608.2,477.4 3608.9,478.1 3609.6,477.3 3610.3,478.3 3611.0,479.3 3611.7,478.1 3612.4,479.9 3613.1,477.9 3613.8,478.8 3614.5,479.4 3615.2,477.4 3615.9,478.9 3616.6,477.0 3617.3,477.7 3618.0,477.8 3618.7,479.3 3619.4,477.2 3620.1,479.2 3620.8,477.1 3621.5,478.2 3622.2,478.8 3622.9,478.2 3623.6,479.9 3624.3,478.3 3625.0,477.1 3625.7,478.0 3626.4,479.0 3627.1,476.7 3627.8,476.4 3628.5,479.8 3629.2,477.2 3629.9,479.0 3630.6,478.6 3631.3,477.5 3632.0,477.5 3632.7,478.6 3633.4,477.7 3634.1,478.9 3634.8,478.4 3635.5,478.0 3636.2,479.6 3636.9,478.1 3637.6,477.1 3638.3,477.8 3639.0,477.8 3639.7,479.5 3640.4,478.8 3641.1,477.6 3641.8,477.6 3642.5,478.2 3643.2,478.2 3643.9,479.8 3644.6,477.7 3645.3,477.5 3646.0,477.9 3646.7,477.8 3647.4,479.0 3648.1,478.2 3648.8,477.7 3649.5,478.0 3650.2,477.5 3650.9,478.0 3651.6,478.1 3652.3,479.5 3653.0,477.4 3653.7,479.2 3654.4,478.2 3655.1,477.4 3655.8,479.7 3656.5,478.5 3657.2,477.2 3657.9,477.9 3658.6,477.8 3659.3,477.3 3660.0,478.3 3660.7,478.1 3661.4,479.3 3662.1,478.0 3662.8,476.7 3663.5,479.2 3664.2,479.1 3664.9,477.5 3665.6,479.3 3666.3,478.3 3667.0,477.3 3667.7,478.7 3668.4,478.4 3669.1,477.8 3669.8,478.6 3670.5,477.6 3671.2,478.2 3671.9,478.4 3672.6,478.7 3673.3,478.6 3674.0,476.3 3674.7,477.9 3675.4,478.5 3676.1,478.8 3676.8,477.4 3677.5,479.0 3678.2,477.5 3678.9,479.1 3679.6,478.3 3680.3,478.4 3681.0,477.1 3681.7,477.6 3682.4,478.4 3683.1,478.4 3683.8,478.1 3684.5,477.9 3685.2,479.3 3685.9,477.6 3686.6,478.6 3687.3,478.9 3688.0,478.5 3688.7,478.3 3689.4,477.2 3690.1,479.5 3690.8,479.3 3691.5,477.5 3692.2,477.5 3692.9,477.4 3693.6,477.0 3694.3,478.1 3695.0,477.4 3695.7,478.2 3696.4,478.6 3697.1,477.6 3697.8,477.2 3698.5,478.9 3699.2,478.9 3699.9,478.0 3700.6,477.5 3701.3,478.5 3702.0,478.4 3702.7,478.9 3703.4,478.3 3704.1,477.7 3704.8,477.6 3705.5,478.3 3706.2,477.0 3706.9,477.5 3707.6,478.9 3708.3,478.8 3709.0,478.6 3709.7,479.3 3710.4,478.0 3711.1,477.7 3711.8,478.3 3712.5,478.9 3713.2,477.4 3713.9,479.7 3714.6,479.2 3715.3,477.2 3716.0,477.5 3716.7,478.7 3717.4,478.5 3718.1,479.0 3718.8,478.5 3719.5,478.1 3720.2,477.8 3720.9,478.5 3721.6,478.6 3722.3,477.6 3723.0,477.9 3723.7,478.2 3724.4,477.8 3725.1,477.3 3725.8,478.6 3726.5,477.0 3727.2,478.2 3727.9,477.6 3728.6,478.2 3729.3,479.3 3730.0,480.0 3730.7,478.8 3731.4,478.0 3732.1,477.3 3732.8,478.0 3733.5,478.4 3734.2,476.9 3734.9,477.7 3735.6,478.5 3736.3,478.4 3737.0,477.8 3737.7,477.4 3738.4,478.4 3739.1,477.4 3739.8,479.8 3740.5,478.0 3741.2,477.8 3741.9,479.1 3742.6,477.5 3743.3,477.7 3744.0,478.7 3744.7,477.1 3745.4,478.5 3746.1,477.6 3746.8,477.2 3747.5,478.2 3748.2,478.1 3748.9,478.1 3749.6,478.5 3750.3,477.4 3751.0,479.1 3751.7,479.5 3752.4,477.0 3753.1,477.7 3753.8,478.1 3754.5,477.1 3755.2,478.4 3755.9,478.1 3756.6,478.0 3757.3,478.6 3758.0,477.8 3758.7,477.8 3759.4,478.6 3760.1,478.3 3760.8,478.7 3761.5,479.1 3762.2,477.3 3762.9,478.4 3763.6,479.2 3764.3,478.3 3765.0,478.2 3765.7,478.6 3766.4,478.6 3767.1,478.4 3767.8,477.8 3768.5,478.5 3769.2,477.7 3769.9,478.3 3770.6,478.0 3771.3,476.6 3772.0,478.1 3772.7,478.5 3773.4,478.5 3774.1,478.1 3774.8,477.4 3775.5,477.1 3776.2,476.5 3776.9,478.4 3777.6,479.0 3778.3,479.2 3779.0,479.6 3779.7,477.3 3780.4,478.7 3781.1,477.5 3781.8,476.6 3782.5,478.1 3783.2,477.8 3783.9,478.6 3784.6,478.7 3785.3,478.3 3786.0,479.4 3786.7,479.6 3787.4,477.9 3788.1,478.9 3788.8,479.4 3789.5,478.0 3790.2,477.9 3790.9,478.4 3791.6,477.8 3792.3,478.7 3793.0,479.0 3793.7,477.9 3794.4,478.8 3795.1,478.1 3795.8,479.8 3796.5,478.7 3797.2,479.5 3797.9,478.8 3798.6,477.7 3799.3,477.8 3800.0,478.6 3800.7,477.5 3801.4,479.2 3802.1,478.1 3802.8,479.9 3803.5,477.6 3804.2,477.3 3804.9,479.1 3805.6,478.0 3806.3,477.0 3807.0,479.4 3807.7,478.4 3808.4,478.2 3809.1,477.7 3809.8,478.4 3810.5,478.4 3811.2,477.8 3811.9,478.1 3812.6,478.7 3813.3,477.5 3814.0,479.5 3814.7,478.2 3815.4,477.7 3816.1,478.4 3816.8,477.2 3817.5,478.7 3818.2,479.3 3818.9,476.9 3819.6,478.1 3820.3,478.4 3821.0,477.6 3821.7,477.2 3822.4,477.3 3823.1,477.0 3823.8,478.6 3824.5,477.2 3825.2,478.4 3825.9,477.8 3826.6,479.3 3827.3,477.8 3828.0,478.6 3828.7,478.5 3829.4,477.8 3830.1,477.7 3830.8,478.8 3831.5,478.0 3832.2,477.3 3832.9,478.3 3833.6,478.8 3834.3,477.9 3835.0,479.2 3835.7,477.4 3836.4,476.4 3837.1,477.4 3837.8,479.2 3838.5,477.3 3839.2,478.0 3839.9,478.1 3840.6,478.4 3841.3,479.3 3842.0,479.1 3842.7,479.0 3843.4,477.7 3844.1,478.8 3844.8,478.9 3845.5,476.8 3846.2,478.2 3846.9,477.3 3847.6,475.9 3848.3,477.7 3849.0,479.2 3849.7,477.7 3850.4,479.7 3851.1,479.0 3851.8,478.6 3852.5,478.3 3853.2,477.9 3853.9,477.8 3854.6,478.2 3855.3,477.0 3856.0,479.1 3856.7,479.7 3857.4,479.4 3858.1,478.2 3858.8,479.6 3859.5,478.0 3860.2,476.7 3860.9,478.5 3861.6,479.3 3862.3,477.7 3863.0,478.9 3863.7,478.6 3864.4,478.0 3865.1,477.5 3865.8,478.6 3866.5,479.0 3867.2,478.8 3867.9,478.9 3868.6,479.2 3869.3,479.0 3870.0,478.6 3870.7,480.0 3871.4,479.1 3872.1,478.9 3872.8,477.9 3873.5,477.8 3874.2,477.5 3874.9,477.5 3875.6,477.8 3876.3,477.9 3877.0,476.7 3877.7,478.4 3878.4,477.8 3879.1,477.8 3879.8,477.4 3880.5,479.6 3881.2,479.1 3881.9,478.5 3882.6,477.4 3883.3,478.1 3884.0,478.6 3884.7,478.2 3885.4,478.7 3886.1,477.5 3886.8,478.0 3887.5,479.0 3888.2,478.5 3888.9,478.3 3889.6,478.8 3890.3,477.0 3891.0,478.4 3891.7,478.9" fill="none" stroke="#f4a4e4" stroke-width="1.3" stroke-linejoin="round"/>
<polyline points="2750.7,479.1 2751.6,478.8 2752.5,476.9 2753.4,478.2 2754.3,476.7 2755.2,478.3 2756.1,479.6 2757.0,478.4 2757.9,478.9 2758.8,478.5 2759.7,478.2 2760.6,478.0 2761.5,478.6 2762.4,478.2 2763.3,481.2 2764.2,479.4 2765.1,477.4 2766.0,479.0 2766.9,478.0 2767.8,478.1 2768.7,478.0 2769.6,479.1 2770.5,478.3 2771.4,476.8 2772.3,478.2 2773.2,477.9 2774.1,476.5 2775.0,478.9 2775.9,478.8 2776.8,479.1 2777.7,476.2 2778.6,476.4 2779.5,479.8 2780.4,478.6 2781.3,477.3 2782.2,478.7 2783.1,478.6 2784.0,478.1 2784.9,477.8 2785.8,477.9 2786.7,478.4 2787.6,477.0 2788.5,478.0 2789.4,478.7 2790.3,478.5 2791.2,477.0 2792.1,477.0 2793.0,477.8 2793.9,479.0 2794.8,478.2 2795.7,477.8 2796.6,476.9 2797.5,478.2 2798.4,480.3 2799.3,477.5 2800.2,480.5 2801.1,476.3 2802.0,477.2 2802.9,479.6 2803.8,477.4 2804.7,477.7 2805.6,479.1 2806.5,477.0 2807.4,477.6 2808.3,476.7 2809.2,479.4 2810.1,478.6 2811.0,479.5 2811.9,478.7 2812.8,478.8 2813.7,478.3 2814.6,478.7 2815.5,477.3 2816.4,477.9 2817.3,477.1 2818.2,479.4 2819.1,477.1 2820.0,478.0 2820.9,479.1 2821.8,478.8 2822.7,478.9 2823.6,478.5 2824.5,478.7 2825.4,478.0 2826.3,477.7 2827.2,477.9 2828.1,477.5 2829.0,476.8 2829.9,479.5 2830.8,476.4 2831.7,479.3 2832.6,478.2 2833.5,479.9 2834.4,478.3 2835.3,478.3 2836.2,479.2 2837.1,476.7 2838.0,478.1 2838.9,479.9 2839.8,479.5 2840.7,477.8 2841.6,477.3 2842.5,477.7 2843.4,478.9 2844.3,477.2 2845.2,479.2 2846.1,477.1 2847.0,478.9 2847.9,478.7 2848.8,478.1 2849.7,480.5 2850.6,478.7 2851.5,479.0 2852.4,479.9 2853.3,477.9 2854.2,478.8 2855.1,479.3 2856.0,478.5 2856.9,478.2 2857.8,478.2 2858.7,479.1 2859.6,478.5 2860.5,479.5 2861.4,477.4 2862.3,478.4 2863.2,479.3 2864.1,477.2 2865.0,479.1 2865.9,478.2 2866.8,479.2 2867.7,477.7 2868.6,478.4 2869.5,477.1 2870.4,479.0 2871.3,478.1 2872.2,478.4 2873.1,477.7 2874.0,479.4 2874.9,478.5 2875.8,479.3 2876.7,477.6 2877.6,478.1 2878.5,479.2 2879.4,480.1 2880.3,480.2 2881.2,479.2 2882.1,479.3 2883.0,479.0 2883.9,477.5 2884.8,478.1 2885.7,477.1 2886.6,477.1 2887.5,478.3 2888.4,478.7 2889.3,479.0 2890.2,480.2 2891.1,477.2 2892.0,477.5 2892.9,477.8 2893.8,478.9 2894.7,478.0 2895.6,477.3 2896.5,478.9 2897.4,478.1 2898.3,477.6 2899.2,479.5 2900.1,479.2 2901.0,477.8 2901.9,478.5 2902.8,478.0 2903.7,477.9 2904.6,477.8 2905.5,478.1 2906.4,477.7 2907.3,478.7 2908.2,479.1 2909.1,478.2 2910.0,477.0 2910.9,479.2 2911.8,477.9 2912.7,479.9 2913.6,479.1 2914.5,478.3 2915.4,479.8 2916.3,477.4 2917.2,478.5 2918.1,479.0 2919.0,478.5 2919.9,478.4 2920.8,477.4 2921.7,479.6 2922.6,477.3 2923.5,475.9 2924.4,477.9 2925.3,479.3 2926.2,478.4 2927.1,478.1 2928.0,478.3 2928.9,478.8 2929.8,478.0 2930.7,477.8 2931.6,478.1 2932.5,477.7 2933.4,479.1 2934.3,478.3 2935.2,478.9 2936.1,477.8 2937.0,477.3 2937.9,480.5 2938.8,479.6 2939.7,478.9 2940.6,478.8 2941.5,478.2 2942.4,479.2 2943.3,476.5 2944.2,478.5 2945.1,479.3 2946.0,479.1 2946.9,477.9 2947.8,477.9 2948.7,477.8 2949.6,479.2 2950.5,479.6 2951.4,477.4 2952.3,478.1 2953.2,478.4 2954.1,477.4 2955.0,479.7 2955.9,477.6 2956.8,478.8 2957.7,478.2 2958.6,478.2 2959.5,477.6 2960.4,477.3 2961.3,479.1 2962.2,479.0 2963.1,478.8 2964.0,477.8 2964.9,477.6 2965.8,478.2 2966.7,477.6 2967.6,478.1 2968.5,477.3 2969.4,480.1 2970.3,477.2 2971.2,475.3 2972.1,477.9 2973.0,479.3 2973.9,477.2 2974.8,479.8 2975.7,477.5 2976.6,479.4 2977.5,478.9 2978.4,479.4 2979.3,478.2 2980.2,480.4 2981.1,476.9 2982.0,480.1 2982.9,477.6 2983.8,478.1 2984.7,476.4 2985.6,477.7 2986.5,477.8 2987.4,476.8 2988.3,477.3 2989.2,477.9 2990.1,479.5 2991.0,479.7 2991.9,477.6 2992.8,477.4 2993.7,477.9 2994.6,479.8 2995.5,477.6 2996.4,478.3 2997.3,479.9 2998.2,478.3 2999.1,477.7 3000.0,476.8 3000.9,478.1 3001.8,477.6 3002.7,480.3 3003.6,477.9 3004.5,477.9 3005.4,477.6 3006.3,478.1 3007.2,478.4 3008.1,479.7 3009.0,477.3 3009.9,477.6 3010.8,477.8 3011.7,478.5 3012.6,478.2 3013.5,477.8 3014.4,478.8 3015.3,477.7 3016.2,477.9 3017.1,476.9 3018.0,477.2 3018.9,478.0 3019.8,478.6 3020.7,480.1 3021.6,478.5 3022.5,477.4 3023.4,478.6 3024.3,478.8 3025.2,478.5 3026.1,480.3 3027.0,478.4 3027.9,479.2 3028.8,478.6 3029.7,477.2 3030.6,478.6 3031.5,478.6 3032.4,479.7 3033.3,476.7 3034.2,476.4 3035.1,479.0 3036.0,478.8 3036.9,479.0 3037.8,478.8 3038.7,478.5 3039.6,478.6 3040.5,478.7 3041.4,477.7 3042.3,478.3 3043.2,476.8 3044.1,478.5 3045.0,478.2 3045.9,476.9 3046.8,477.5 3047.7,477.6 3048.6,477.5 3049.5,476.9 3050.4,479.2 3051.3,477.6 3052.2,478.2 3053.1,477.4 3054.0,478.4 3054.9,478.9 3055.8,479.6 3056.7,479.1 3057.6,477.3 3058.5,479.3 3059.4,478.5 3060.3,478.4 3061.2,477.9 3062.1,477.0 3063.0,478.4 3063.9,477.6 3064.8,478.2 3065.7,479.8 3066.6,478.5 3067.5,479.0 3068.4,479.5 3069.3,477.0 3070.2,478.2 3071.1,480.3 3072.0,480.0 3072.9,478.4 3073.8,476.6 3074.7,479.0 3075.6,479.7 3076.5,477.4 3077.4,479.4 3078.3,478.1 3079.2,477.5 3080.1,479.3 3081.0,478.1 3081.9,477.0 3082.8,478.7 3083.7,479.5 3084.6,480.0 3085.5,477.5 3086.4,480.0 3087.3,478.7 3088.2,478.8 3089.1,477.8 3090.0,478.0 3090.9,477.8 3091.8,478.6 3092.7,478.2 3093.6,476.9 3094.5,478.2 3095.4,478.0 3096.3,479.5 3097.2,478.7 3098.1,479.6 3099.0,479.1 3099.9,476.4 3100.8,477.8 3101.7,478.9 3102.6,477.2 3103.5,478.9 3104.4,477.5 3105.3,478.3 3106.2,478.7 3107.1,478.0 3108.0,477.1 3108.9,477.7 3109.8,477.6 3110.7,476.5 3111.6,479.0 3112.5,478.0 3113.4,478.7 3114.3,479.9 3115.2,477.9 3116.1,480.5 3117.0,476.8 3117.9,477.9 3118.8,478.6 3119.7,477.4 3120.6,478.4 3121.5,477.2 3122.4,479.4 3123.3,478.4 3124.2,480.8 3125.1,478.6 3126.0,479.1 3126.9,478.7 3127.8,477.8 3128.7,478.3 3129.6,477.7 3130.5,477.5 3131.4,478.9 3132.3,478.4 3133.2,480.1 3134.1,480.3 3135.0,477.7 3135.9,478.5 3136.8,478.6 3137.7,477.0 3138.6,478.9 3139.5,476.2 3140.4,477.7 3141.3,479.8 3142.2,478.3 3143.1,478.3 3144.0,479.3 3144.9,479.2 3145.8,478.8 3146.7,478.4 3147.6,477.6 3148.5,478.8 3149.4,479.4 3150.3,479.4 3151.2,477.6 3152.1,479.1 3153.0,479.0 3153.9,478.6 3154.8,480.0 3155.7,477.6 3156.6,478.9 3157.5,478.9 3158.4,477.9 3159.3,476.0 3160.2,479.2 3161.1,478.0 3162.0,479.5 3162.9,477.9 3163.8,477.7 3164.7,477.8 3165.6,477.7 3166.5,479.0 3167.4,477.4 3168.3,478.2 3169.2,477.2 3170.1,478.1 3171.0,477.6 3171.9,478.9 3172.8,479.1 3173.7,478.3 3174.6,478.5 3175.5,478.5 3176.4,477.3 3177.3,477.0 3178.2,478.6 3179.1,478.8 3180.0,478.6 3180.9,478.3 3181.8,478.1 3182.7,479.1 3183.6,477.6 3184.5,480.1 3185.4,478.0 3186.3,477.7 3187.2,478.9 3188.1,477.0 3189.0,479.0 3189.9,477.0 3190.8,478.7 3191.7,479.9 3192.6,478.3 3193.5,476.9 3194.4,478.3 3195.3,477.2 3196.2,478.4 3197.1,476.6 3198.0,479.4 3198.9,479.6 3199.8,478.3 3200.7,478.0 3201.6,478.2 3202.5,476.5 3203.4,477.6 3204.3,478.5 3205.2,480.0 3206.1,478.4 3207.0,479.8 3207.9,478.2 3208.8,479.6 3209.7,478.4 3210.6,478.2 3211.5,479.0 3212.4,477.5 3213.3,478.4 3214.2,479.2 3215.1,477.0 3216.0,477.9 3216.9,478.5 3217.8,478.7 3218.7,478.5 3219.6,479.7 3220.5,477.1 3221.4,479.3 3222.3,478.3 3223.2,477.5 3224.1,478.0 3225.0,478.1 3225.9,477.4 3226.8,477.6 3227.7,478.5 3228.6,479.7 3229.5,479.9 3230.4,480.2 3231.3,476.5 3232.2,477.8 3233.1,478.1 3234.0,477.9 3234.9,478.3 3235.8,477.2 3236.7,477.4 3237.6,479.4 3238.5,478.5 3239.4,477.0 3240.3,478.9 3241.2,480.7 3242.1,479.2 3243.0,477.9 3243.9,481.0 3244.8,477.1 3245.7,478.1 3246.6,478.9 3247.5,478.4 3248.4,479.4 3249.3,478.8 3250.2,478.9 3251.1,478.4 3252.0,478.2 3252.9,477.7 3253.8,477.8 3254.7,478.2 3255.6,477.7 3256.5,477.8 3257.4,478.5 3258.3,480.2 3259.2,478.6 3260.1,477.9 3261.0,479.0 3261.9,479.2 3262.8,478.1 3263.7,477.9 3264.6,478.3 3265.5,476.8 3266.4,479.4 3267.3,479.1 3268.2,476.9 3269.1,479.0 3270.0,478.1 3270.9,478.8 3271.8,478.6 3272.7,477.7 3273.6,477.5 3274.5,477.4 3275.4,479.4 3276.3,478.6 3277.2,479.6 3278.1,478.0 3279.0,478.6 3279.9,478.5 3280.8,477.8 3281.7,478.9 3282.6,477.0 3283.5,477.5 3284.4,478.8 3285.3,478.5 3286.2,478.9 3287.1,478.1 3288.0,477.6 3288.9,477.6 3289.8,478.1 3290.7,478.3 3291.6,478.9 3292.5,478.5 3293.4,477.4 3294.3,479.5 3295.2,479.9 3296.1,478.8 3297.0,478.9 3297.9,479.0 3298.8,479.4 3299.7,478.4 3300.6,478.2 3301.5,479.6 3302.4,477.8 3303.3,478.9 3304.2,477.6 3305.1,478.0 3306.0,478.6 3306.9,478.3 3307.8,480.2 3308.7,478.0 3309.6,480.3 3310.5,479.4 3311.4,476.6 3312.3,479.0 3313.2,479.1 3314.1,478.8 3315.0,477.7 3315.9,478.4 3316.8,478.6 3317.7,477.3 3318.6,478.2 3319.5,478.6 3320.4,479.1 3321.3,478.0 3322.2,478.0 3323.1,478.8 3324.0,476.6 3324.9,478.0 3325.8,478.6 3326.7,477.7 3327.6,478.1 3328.5,479.5 3329.4,479.3 3330.3,477.7 3331.2,478.1 3332.1,478.4 3333.0,479.8 3333.9,479.1 3334.8,478.0 3335.7,477.9 3336.6,478.1 3337.5,477.2 3338.4,478.7 3339.3,478.0 3340.2,479.6 3341.1,478.1 3342.0,478.3 3342.9,479.1 3343.8,479.0 3344.7,479.1 3345.6,479.3 3346.5,477.3 3347.4,477.7 3348.3,479.3 3349.2,477.6 3350.1,478.5 3351.0,478.0 3351.9,479.8 3352.8,476.9 3353.7,477.0 3354.6,477.5 3355.5,477.5 3356.4,478.1 3357.3,479.0 3358.2,479.3 3359.1,478.0 3360.0,476.8 3360.9,479.3 3361.8,477.7 3362.7,479.2 3363.6,478.1 3364.5,479.3 3365.4,478.5 3366.3,476.9 3367.2,478.0 3368.1,478.4 3369.0,478.6 3369.9,478.3 3370.8,477.8 3371.7,479.1 3372.6,477.5 3373.5,479.1 3374.4,479.2 3375.3,478.5 3376.2,477.8 3377.1,478.7 3378.0,478.3 3378.9,479.1 3379.8,479.4 3380.7,477.9 3381.6,477.3 3382.5,478.9 3383.4,478.1 3384.3,479.5 3385.2,478.7 3386.1,477.9 3387.0,479.1 3387.9,476.9 3388.8,479.5 3389.7,478.1 3390.6,479.7 3391.5,477.7 3392.4,478.1 3393.3,479.0 3394.2,478.0 3395.1,478.2 3396.0,479.0 3396.9,478.0 3397.8,477.1 3398.7,478.1 3399.6,478.7 3400.5,477.7 3401.4,477.9 3402.3,477.2 3403.2,478.0 3404.1,478.7 3405.0,478.4 3405.9,479.2 3406.8,476.8 3407.7,478.9 3408.6,478.7 3409.5,476.9 3410.4,479.2 3411.3,477.6 3412.2,480.5 3413.1,480.0 3414.0,479.5 3414.9,479.5 3415.8,478.8 3416.7,479.8 3417.6,478.1 3418.5,479.1 3419.4,478.0 3420.3,480.3 3421.2,477.9 3422.1,478.2 3423.0,479.9 3423.9,478.9 3424.8,478.1 3425.7,477.2 3426.6,479.4 3427.5,476.6 3428.4,477.5 3429.3,477.5 3430.2,478.8 3431.1,478.8 3432.0,479.0 3432.9,478.9 3433.8,477.9 3434.7,479.7 3435.6,477.4 3436.5,477.7 3437.4,478.1 3438.3,478.9 3439.2,478.4 3440.1,479.5 3441.0,476.4 3441.9,479.1 3442.8,478.2 3443.7,479.3 3444.6,478.0 3445.5,477.1 3446.4,479.9 3447.3,479.0 3448.2,477.2 3449.1,478.3 3450.0,478.8 3450.9,478.7 3451.8,479.0 3452.7,478.8 3453.6,479.5 3454.5,478.2 3455.4,479.0 3456.3,479.0 3457.2,477.8 3458.1,478.5 3459.0,478.4 3459.9,478.2 3460.8,478.3 3461.7,478.2 3462.6,478.3 3463.5,477.2 3464.4,478.6 3465.3,477.8 3466.2,478.2 3467.1,479.7 3468.0,476.4 3468.9,479.2 3469.8,476.5 3470.7,479.2 3471.6,478.2 3472.5,477.5 3473.4,478.1 3474.3,478.5 3475.2,477.9 3476.1,478.5 3477.0,479.4 3477.9,475.7 3478.8,477.6 3479.7,478.4 3480.6,478.5 3481.5,477.0 3482.4,479.6 3483.3,479.3 3484.2,479.0 3485.1,477.0 3486.0,477.4 3486.9,477.8 3487.8,479.5 3488.7,480.7 3489.6,477.7 3490.5,477.6 3491.4,478.1 3492.3,477.5 3493.2,477.2 3494.1,477.8 3495.0,477.2 3495.9,477.3 3496.8,479.3 3497.7,478.0 3498.6,478.9 3499.5,479.3 3500.4,479.1 3501.3,478.8 3502.2,479.0 3503.1,478.1 3504.0,479.2 3504.9,476.3 3505.8,479.6 3506.7,477.3 3507.6,478.2 3508.5,477.5 3509.4,479.1 3510.3,478.8 3511.2,477.4 3512.1,477.6 3513.0,478.3 3513.9,478.6 3514.8,479.0 3515.7,479.0 3516.6,478.8 3517.5,479.3 3518.4,478.6 3519.3,478.0 3520.2,478.2 3521.1,478.4 3522.0,477.4 3522.9,477.7 3523.8,477.7 3524.7,478.8 3525.6,477.1 3526.5,479.2 3527.4,479.2 3528.3,478.3 3529.2,479.9 3530.1,478.0 3531.0,478.9 3531.9,481.0 3532.8,479.0 3533.7,478.9 3534.6,478.9 3535.5,478.7 3536.4,478.3 3537.3,477.6 3538.2,478.9 3539.1,477.7 3540.0,477.0 3540.9,479.2 3541.8,478.3 3542.7,478.9 3543.6,478.7 3544.5,479.1 3545.4,478.4 3546.3,477.0 3547.2,477.1 3548.1,479.0 3549.0,478.8 3549.9,479.3 3550.8,477.6 3551.7,478.1 3552.6,478.6 3553.5,479.0 3554.4,478.6 3555.3,478.2 3556.2,478.2 3557.1,476.7 3558.0,478.4 3558.9,479.1 3559.8,478.4 3560.7,477.3 3561.6,479.0 3562.5,478.3 3563.4,477.0 3564.3,477.7 3565.2,478.7 3566.1,477.7 3567.0,477.7 3567.9,479.4 3568.8,477.9 3569.7,477.3 3570.6,477.7 3571.5,477.4 3572.4,478.5 3573.3,477.8 3574.2,477.4 3575.1,479.2 3576.0,478.4 3576.9,476.0 3577.8,478.5 3578.7,478.9 3579.6,477.3 3580.5,478.2 3581.4,478.9 3582.3,477.6 3583.2,478.9 3584.1,477.8 3585.0,478.7 3585.9,477.2 3586.8,478.5 3587.7,479.5 3588.6,479.2 3589.5,478.3 3590.4,477.8 3591.3,478.4 3592.2,478.7 3593.1,477.1 3594.0,478.6 3594.9,477.4 3595.8,479.0 3596.7,478.2 3597.6,478.2 3598.5,479.4 3599.4,478.8 3600.3,479.7 3601.2,477.8 3602.1,477.7 3603.0,478.6 3603.9,479.3 3604.8,479.4 3605.7,478.5 3606.6,477.5 3607.5,479.0 3608.4,478.8 3609.3,478.0 3610.2,476.9 3611.1,476.9 3612.0,479.5 3612.9,478.2 3613.8,478.5 3614.7,478.9 3615.6,480.2 3616.5,478.3 3617.4,478.0 3618.3,478.2 3619.2,479.3 3620.1,478.2 3621.0,478.4 3621.9,479.4 3622.8,477.9 3623.7,478.4 3624.6,478.6 3625.5,476.5 3626.4,477.5 3627.3,478.1 3628.2,476.7 3629.1,479.3 3630.0,477.5 3630.9,479.1 3631.8,478.7 3632.7,477.6 3633.6,477.9 3634.5,478.5 3635.4,478.7 3636.3,479.3 3637.2,477.4 3638.1,478.1 3639.0,479.4 3639.9,478.7 3640.8,478.0 3641.7,477.9 3642.6,477.9 3643.5,479.7 3644.4,477.5 3645.3,479.2 3646.2,478.1 3647.1,477.6 3648.0,478.4 3648.9,477.1 3649.8,480.2 3650.7,481.2 3651.6,477.9 3652.5,479.3 3653.4,477.8 3654.3,477.4 3655.2,476.7 3656.1,476.6 3657.0,479.2 3657.9,478.6 3658.8,477.7 3659.7,477.5 3660.6,479.5 3661.5,478.8 3662.4,479.0 3663.3,478.5 3664.2,478.8 3665.1,481.0 3666.0,476.7 3666.9,478.9 3667.8,477.4 3668.7,478.4 3669.6,477.0 3670.5,477.4 3671.4,478.8 3672.3,478.9 3673.2,478.9 3674.1,477.9 3675.0,479.1 3675.9,478.0 3676.8,477.8 3677.7,478.5 3678.6,480.2 3679.5,478.8 3680.4,476.4 3681.3,478.5 3682.2,477.8 3683.1,476.7 3684.0,478.5 3684.9,478.6 3685.8,477.8 3686.7,477.2 3687.6,478.5 3688.5,479.1 3689.4,478.4 3690.3,478.3 3691.2,477.1 3692.1,477.3 3693.0,478.8 3693.9,477.6 3694.8,478.3 3695.7,479.7 3696.6,479.2 3697.5,478.5 3698.4,477.4 3699.3,478.6 3700.2,476.7 3701.1,477.8 3702.0,476.9 3702.9,478.7 3703.8,478.3 3704.7,479.3 3705.6,478.0 3706.5,478.7 3707.4,477.0 3708.3,479.4 3709.2,479.1 3710.1,479.6 3711.0,479.2 3711.9,477.9 3712.8,479.1 3713.7,478.2 3714.6,480.0 3715.5,477.9 3716.4,477.8 3717.3,478.4 3718.2,477.8 3719.1,478.8 3720.0,477.2 3720.9,478.5 3721.8,477.2 3722.7,479.8 3723.6,478.3 3724.5,477.2 3725.4,478.7 3726.3,477.7 3727.2,478.1 3728.1,477.8 3729.0,479.9 3729.9,479.4 3730.8,476.3 3731.7,478.0 3732.6,477.4 3733.5,477.3 3734.4,479.3 3735.3,477.1 3736.2,476.7 3737.1,478.4 3738.0,477.5 3738.9,478.4 3739.8,478.7 3740.7,478.6 3741.6,477.5 3742.5,478.2 3743.4,478.6 3744.3,476.5 3745.2,478.5 3746.1,478.1 3747.0,479.9 3747.9,478.5 3748.8,477.1 3749.7,477.8 3750.6,478.0 3751.5,477.9 3752.4,477.3 3753.3,479.5 3754.2,478.2 3755.1,477.2 3756.0,480.0 3756.9,477.8 3757.8,477.8 3758.7,478.1 3759.6,478.0 3760.5,479.1 3761.4,480.1 3762.3,476.8 3763.2,478.8 3764.1,478.6 3765.0,479.4 3765.9,478.5 3766.8,480.0 3767.7,477.7 3768.6,477.9 3769.5,477.9 3770.4,478.8 3771.3,478.7 3772.2,479.7 3773.1,478.2 3774.0,478.8 3774.9,477.7 3775.8,479.0 3776.7,479.3 3777.6,478.3 3778.5,476.4 3779.4,479.8 3780.3,478.2 3781.2,477.4 3782.1,477.9 3783.0,478.8 3783.9,479.0 3784.8,479.2 3785.7,478.1 3786.6,478.1 3787.5,477.9 3788.4,478.5 3789.3,477.7 3790.2,477.9 3791.1,477.6 3792.0,477.0 3792.9,477.7 3793.8,478.9 3794.7,478.9 3795.6,478.7 3796.5,477.2 3797.4,477.3 3798.3,480.0 3799.2,480.3 3800.1,479.1 3801.0,478.0 3801.9,477.1 3802.8,478.1 3803.7,478.0 3804.6,479.2 3805.5,478.2 3806.4,477.4 3807.3,477.3 3808.2,478.8 3809.1,479.2 3810.0,479.1 3810.9,478.2 3811.8,478.9 3812.7,477.0 3813.6,478.2 3814.5,477.4 3815.4,478.2 3816.3,477.9 3817.2,477.6 3818.1,479.0 3819.0,478.3 3819.9,479.6 3820.8,478.5 3821.7,478.1 3822.6,477.6 3823.5,477.7 3824.4,478.9 3825.3,478.5 3826.2,480.0 3827.1,478.9 3828.0,477.8 3828.9,477.5 3829.8,478.0 3830.7,479.4 3831.6,479.5 3832.5,475.7 3833.4,477.9 3834.3,480.0 3835.2,477.4 3836.1,478.4 3837.0,478.8 3837.9,478.6 3838.8,478.0 3839.7,478.2 3840.6,477.9 3841.5,478.3 3842.4,478.1 3843.3,479.9 3844.2,479.3 3845.1,477.4 3846.0,478.3 3846.9,480.0 3847.8,478.1 3848.7,478.6 3849.6,479.8 3850.5,477.6 3851.4,479.1 3852.3,478.2 3853.2,479.0 3854.1,478.2 3855.0,479.1 3855.9,479.1 3856.8,480.1 3857.7,477.6 3858.6,479.2 3859.5,478.9 3860.4,477.1 3861.3,479.6 3862.2,480.3 3863.1,480.0 3864.0,477.7 3864.9,477.6 3865.8,479.9 3866.7,478.3 3867.6,478.2 3868.5,477.4 3869.4,479.4 3870.3,476.3 3871.2,477.8 3872.1,478.8 3873.0,476.7 3873.9,479.2 3874.8,478.3 3875.7,478.5 3876.6,478.4 3877.5,478.5 3878.4,478.0 3879.3,477.4 3880.2,478.4 3881.1,479.6 3882.0,479.0 3882.9,478.5 3883.8,477.8 3884.7,478.4 3885.6,479.9 3886.5,478.2 3887.4,478.4 3888.3,477.6 3889.2,480.4 3890.1,478.3 3891.0,479.1 3891.9,476.6" fill="none" stroke="#f4a4e4" stroke-width="0.8" stroke-linejoin="round"/>
<line x1="3321.80" y1="96.00" x2="3321.80" y2="582.60" stroke="#c8c8c8" stroke-width="1.0" />
<text x="2780.60" y="593.30" font-size="5.4" fill="#e0e0e0" text-anchor="middle">7:00:00 PM</text>
<text x="2780.60" y="601.20" font-size="5.4" fill="#e0e0e0" text-anchor="middle">4/28/2025</text>
<text x="2841.05" y="593.30" font-size="5.4" fill="#e0e0e0" text-anchor="middle">9:00:00 PM</text>
<text x="2841.05" y="601.20" font-size="5.4" fill="#e0e0e0" text-anchor="middle">4/28/2025</text>
<text x="2901.50" y="593.30" font-size="5.4" fill="#e0e0e0" text-anchor="middle">11:00:00 PM</text>
<text x="2901.50" y="601.20" font-size="5.4" fill="#e0e0e0" text-anchor="middle">4/28/2025</text>
<text x="2961.95" y="593.30" font-size="5.4" fill="#e0e0e0" text-anchor="middle">1:00:00 AM</text>
<text x="2961.95" y="601.20" font-size="5.4" fill="#e0e0e0" text-anchor="middle">4/29/2025</text>
<text x="3022.40" y="593.30" font-size="5.4" fill="#e0e0e0" text-anchor="middle">3:00:00 AM</text>
<text x="3022.40" y="601.20" font-size="5.4" fill="#e0e0e0" text-anchor="middle">4/29/2025</text>
<text x="3082.85" y="593.30" font-size="5.4" fill="#e0e0e0" text-anchor="middle">5:00:00 AM</text>
<text x="3082.85" y="601.20" font-size="5.4" fill="#e0e0e0" text-anchor="middle">4/29/2025</text>
<text x="3143.30" y="593.30" font-size="5.4" fill="#e0e0e0" text-anchor="middle">7:00:00 AM</text>
<text x="3143.30" y="601.20" font-size="5.4" fill="#e0e0e0" text-anchor="middle">4/29/2025</text>
<text x="3203.75" y="593.30" font-size="5.4" fill="#e0e0e0" text-anchor="middle">9:00:00 AM</text>
<text x="3203.75" y="601.20" font-size="5.4" fill="#e0e0e0" text-anchor="middle">4/29/2025</text>
<text x="3264.20" y="593.30" font-size="5.4" fill="#e0e0e0" text-anchor="middle">11:00:00 AM</text>
<text x="3264.20" y="601.20" font-size="5.4" fill="#e0e0e0" text-anchor="middle">4/29/2025</text>
<text x="3324.65" y="593.30" font-size="5.4" fill="#e0e0e0" text-anchor="middle">1:00:00 PM</text>
<text x="3324.65" y="601.20" font-size="5.4" fill="#e0e0e0" text-anchor="middle">4/29/2025</text>
<text x="3385.10" y="593.30" font-size="5.4" fill="#e0e0e0" text-anchor="middle">3:00:00 PM</text>
<text x="3385.10" y="601.20" font-size="5.4" fill="#e0e0e0" text-anchor="middle">4/29/2025</text>
<text x="3445.55" y="593.30" font-size="5.4" fill="#e0e0e0" text-anchor="middle">5:00:00 PM</text>
<text x="3445.55" y="601.20" font-size="5.4" fill="#e0e0e0" text-anchor="middle">4/29/2025</text>
<text x="3506.00" y="593.30" font-size="5.4" fill="#e0e0e0" text-anchor="middle">7:00:00 PM</text>
<text x="3506.00" y="601.20" font-size="5.4" fill="#e0e0e0" text-anchor="middle">4/29/2025</text>
<text x="3566.45" y="593.30" font-size="5.4" fill="#e0e0e0" text-anchor="middle">9:00:00 PM</text>
<text x="3566.45" y="601.20" font-size="5.4" fill="#e0e0e0" text-anchor="middle">4/29/2025</text>
<text x="3626.90" y="593.30" font-size="5.4" fill="#e0e0e0" text-anchor="middle">11:00:00 PM</text>
<text x="3626.90" y="601.20" font-size="5.4" fill="#e0e0e0" text-anchor="middle">4/29/2025</text>
<text x="3687.35" y="593.30" font-size="5.4" fill="#e0e0e0" text-anchor="middle">1:00:00 AM</text>
<text x="3687.35" y="601.20" font-size="5.4" fill="#e0e0e0" text-anchor="middle">4/30/2025</text>
<text x="3747.80" y="593.30" font-size="5.4" fill="#e0e0e0" text-anchor="middle">3:00:00 AM</text>
<text x="3747.80" y="601.20" font-size="5.4" fill="#e0e0e0" text-anchor="middle">4/30/2025</text>
<text x="3808.25" y="593.30" font-size="5.4" fill="#e0e0e0" text-anchor="middle">5:00:00 AM</text>
<text x="3808.25" y="601.20" font-size="5.4" fill="#e0e0e0" text-anchor="middle">4/30/2025</text>
<text x="3868.70" y="593.30" font-size="5.4" fill="#e0e0e0" text-anchor="middle">7:00:00 AM</text>
<text x="3868.70" y="601.20" font-size="5.4" fill="#e0e0e0" text-anchor="middle">4/30/2025</text>
<line x1="2613.00" y1="590.00" x2="2629.00" y2="590.00" stroke="#5a6a8a" stroke-width="0.7" />
<line x1="2639.00" y1="588.30" x2="2658.00" y2="588.30" stroke="#5050ff" stroke-width="1.2" />
<line x1="2639.00" y1="589.60" x2="2658.00" y2="589.60" stroke="#f0a0e0" stroke-width="1.2" />
<line x1="2667.00" y1="589.20" x2="2688.00" y2="589.20" stroke="#7a3030" stroke-width="0.7" />
<line x1="2667.00" y1="593.00" x2="2688.00" y2="593.00" stroke="#6a6a3a" stroke-width="0.7" />
<line x1="2667.00" y1="596.50" x2="2688.00" y2="596.50" stroke="#6a5a3a" stroke-width="0.7" />
<line x1="2699.00" y1="589.20" x2="2716.00" y2="589.20" stroke="#3a6a3a" stroke-width="0.7" />
<rect x="2735.00" y="594.00" width="1.60" height="1.60" fill="#f0a0e0"/>
<line x1="2750.50" y1="582.60" x2="2750.50" y2="607.00" stroke="#8a8a6a" stroke-width="0.7" />
<rect x="2607.80" y="607.20" width="1275.40" height="8.50" fill="#585858"/>
<text x="2626.00" y="613.60" font-size="5.8" fill="#f0f0f0">Name</text>
<text x="2741.50" y="613.60" font-size="5.8" fill="#f0f0f0">Y value</text>
<text x="2828.50" y="613.60" font-size="5.8" fill="#f0f0f0">X value/time stamp</text>
<rect x="2607.80" y="615.70" width="1275.40" height="7.55" fill="#929292"/>
<rect x="2607.80" y="615.70" width="16.50" height="7.55" fill="#6a6a6a"/>
<text x="2609.50" y="621.80" font-size="5.8" fill="#f0f0f0">4</text>
<text x="2626.00" y="621.80" font-size="5.8" fill="#20e0e0">CV3482</text>
<text x="2741.50" y="621.80" font-size="5.8" fill="#20e0e0">100.00 [L]</text>
<text x="2828.50" y="621.80" font-size="5.8" fill="#20e0e0">4/29/2025 12:53:06 PM [L]</text>
<rect x="2607.80" y="623.25" width="1275.40" height="7.55" fill="#6e6e6e"/>
<rect x="2607.80" y="623.25" width="16.50" height="7.55" fill="#5c5c5c"/>
<text x="2609.50" y="629.35" font-size="5.8" fill="#f0f0f0">5</text>
<text x="2626.00" y="629.35" font-size="5.8" fill="#40b040">LT5300</text>
<text x="2741.50" y="629.35" font-size="5.8" fill="#40b040">57.05</text>
<text x="2828.50" y="629.35" font-size="5.8" fill="#40b040">4/29/2025 12:53:21 PM</text>
<rect x="2607.80" y="630.80" width="1275.40" height="7.55" fill="#929292"/>
<rect x="2607.80" y="630.80" width="16.50" height="7.55" fill="#6a6a6a"/>
<text x="2609.50" y="636.90" font-size="5.8" fill="#f0f0f0">6</text>
<text x="2626.00" y="636.90" font-size="5.8" fill="#e01818">ST3530</text>
<text x="2741.50" y="636.90" font-size="5.8" fill="#e01818">2003</text>
<text x="2828.50" y="636.90" font-size="5.8" fill="#e01818">4/29/2025 12:53:19 PM</text>
<rect x="2607.80" y="638.35" width="1275.40" height="7.55" fill="#6e6e6e"/>
<rect x="2607.80" y="638.35" width="16.50" height="7.55" fill="#5c5c5c"/>
<text x="2609.50" y="644.45" font-size="5.8" fill="#f0f0f0">7</text>
<text x="2626.00" y="644.45" font-size="5.8" fill="#e89828">ST3560</text>
<text x="2741.50" y="644.45" font-size="5.8" fill="#e89828">3590</text>
<text x="2828.50" y="644.45" font-size="5.8" fill="#e89828">4/29/2025 12:52:51 PM</text>
<rect x="2607.80" y="645.90" width="1275.40" height="7.55" fill="#929292"/>
<rect x="2607.80" y="645.90" width="16.50" height="7.55" fill="#6a6a6a"/>
<text x="2609.50" y="652.00" font-size="5.8" fill="#f0f0f0">8</text>
<text x="2626.00" y="652.00" font-size="5.8" fill="#e8d8a0">ST3570</text>
<text x="2741.50" y="652.00" font-size="5.8" fill="#e8d8a0">1993</text>
<text x="2828.50" y="652.00" font-size="5.8" fill="#e8d8a0">4/29/2025 12:52:49 PM</text>
<rect x="2607.80" y="653.45" width="1275.40" height="7.55" fill="#6e6e6e"/>
<rect x="2607.80" y="653.45" width="16.50" height="7.55" fill="#5c5c5c"/>
<text x="2609.50" y="659.55" font-size="5.8" fill="#f0f0f0">9</text>
<text x="2626.00" y="659.55" font-size="5.8" fill="#e0f030">ST3590</text>
<text x="2741.50" y="659.55" font-size="5.8" fill="#e0f030">1539</text>
<text x="2828.50" y="659.55" font-size="5.8" fill="#e0f030">4/29/2025 12:53:28 PM</text>
<rect x="2607.80" y="661.00" width="1275.40" height="7.55" fill="#929292"/>
<rect x="2607.80" y="661.00" width="16.50" height="7.55" fill="#6a6a6a"/>
<text x="2609.50" y="667.10" font-size="5.8" fill="#f0f0f0">10</text>
<text x="2626.00" y="667.10" font-size="5.8" fill="#4070f0">EH3545</text>
<text x="2741.50" y="667.10" font-size="5.8" fill="#4070f0">39.00 [L]</text>
<text x="2828.50" y="667.10" font-size="5.8" fill="#4070f0">4/29/2025 12:53:06 PM [L]</text>
<rect x="2607.80" y="668.55" width="1275.40" height="7.55" fill="#6e6e6e"/>
<rect x="2607.80" y="668.55" width="16.50" height="7.55" fill="#5c5c5c"/>
<text x="2609.50" y="674.65" font-size="5.8" fill="#f0f0f0">11</text>
<text x="2626.00" y="674.65" font-size="5.8" fill="#50d8f0">EH3484</text>
<text x="2741.50" y="674.65" font-size="5.8" fill="#50d8f0">67.00 [L]</text>
<text x="2828.50" y="674.65" font-size="5.8" fill="#50d8f0">4/29/2025 12:53:06 PM [L]</text>
<rect x="2607.80" y="676.10" width="1275.40" height="7.55" fill="#929292"/>
<rect x="2607.80" y="676.10" width="16.50" height="7.55" fill="#6a6a6a"/>
<text x="2609.50" y="682.20" font-size="5.8" fill="#f0f0f0">12</text>
<text x="2626.00" y="682.20" font-size="5.8" fill="#f020e0">EH 3387</text>
<text x="2741.50" y="682.20" font-size="5.8" fill="#f020e0">66.50 [L]</text>
<text x="2828.50" y="682.20" font-size="5.8" fill="#f020e0">4/29/2025 12:53:06 PM [L]</text>
<rect x="2607.80" y="683.65" width="1275.40" height="7.55" fill="#6e6e6e"/>
<rect x="2607.80" y="683.65" width="16.50" height="7.55" fill="#5c5c5c"/>
<text x="2609.50" y="689.75" font-size="5.8" fill="#f0f0f0">13</text>
<text x="2626.00" y="689.75" font-size="5.8" fill="#f0f0f0">EH3288</text>
<text x="2741.50" y="689.75" font-size="5.8" fill="#f0f0f0">32.20 [L]</text>
<text x="2828.50" y="689.75" font-size="5.8" fill="#f0f0f0">4/29/2025 12:53:06 PM [L]</text>
<line x1="2624.30" y1="607.20" x2="2624.30" y2="691.20" stroke="#7a7a62" stroke-width="0.6" />
<line x1="2740.00" y1="607.20" x2="2740.00" y2="691.20" stroke="#7a7a62" stroke-width="0.6" />
<line x1="2827.00" y1="607.20" x2="2827.00" y2="691.20" stroke="#7a7a62" stroke-width="0.6" />
<line x1="2607.80" y1="615.50" x2="3883.00" y2="615.50" stroke="#7a7a62" stroke-width="0.6" />
<rect x="2607.80" y="691.20" width="1284.50" height="4.20" fill="#5a5a5a"/>
<rect x="3883.20" y="607.20" width="8.80" height="84.00" fill="#f0f0f0"/>
<rect x="3884.20" y="616.00" width="6.80" height="66.00" fill="#c8c8c8"/>
<text x="3887.60" y="613.50" font-size="6" fill="#333" text-anchor="middle">^</text>
<text x="3887.60" y="689.50" font-size="6" fill="#333" text-anchor="middle">v</text>
</svg>
</body></html>
